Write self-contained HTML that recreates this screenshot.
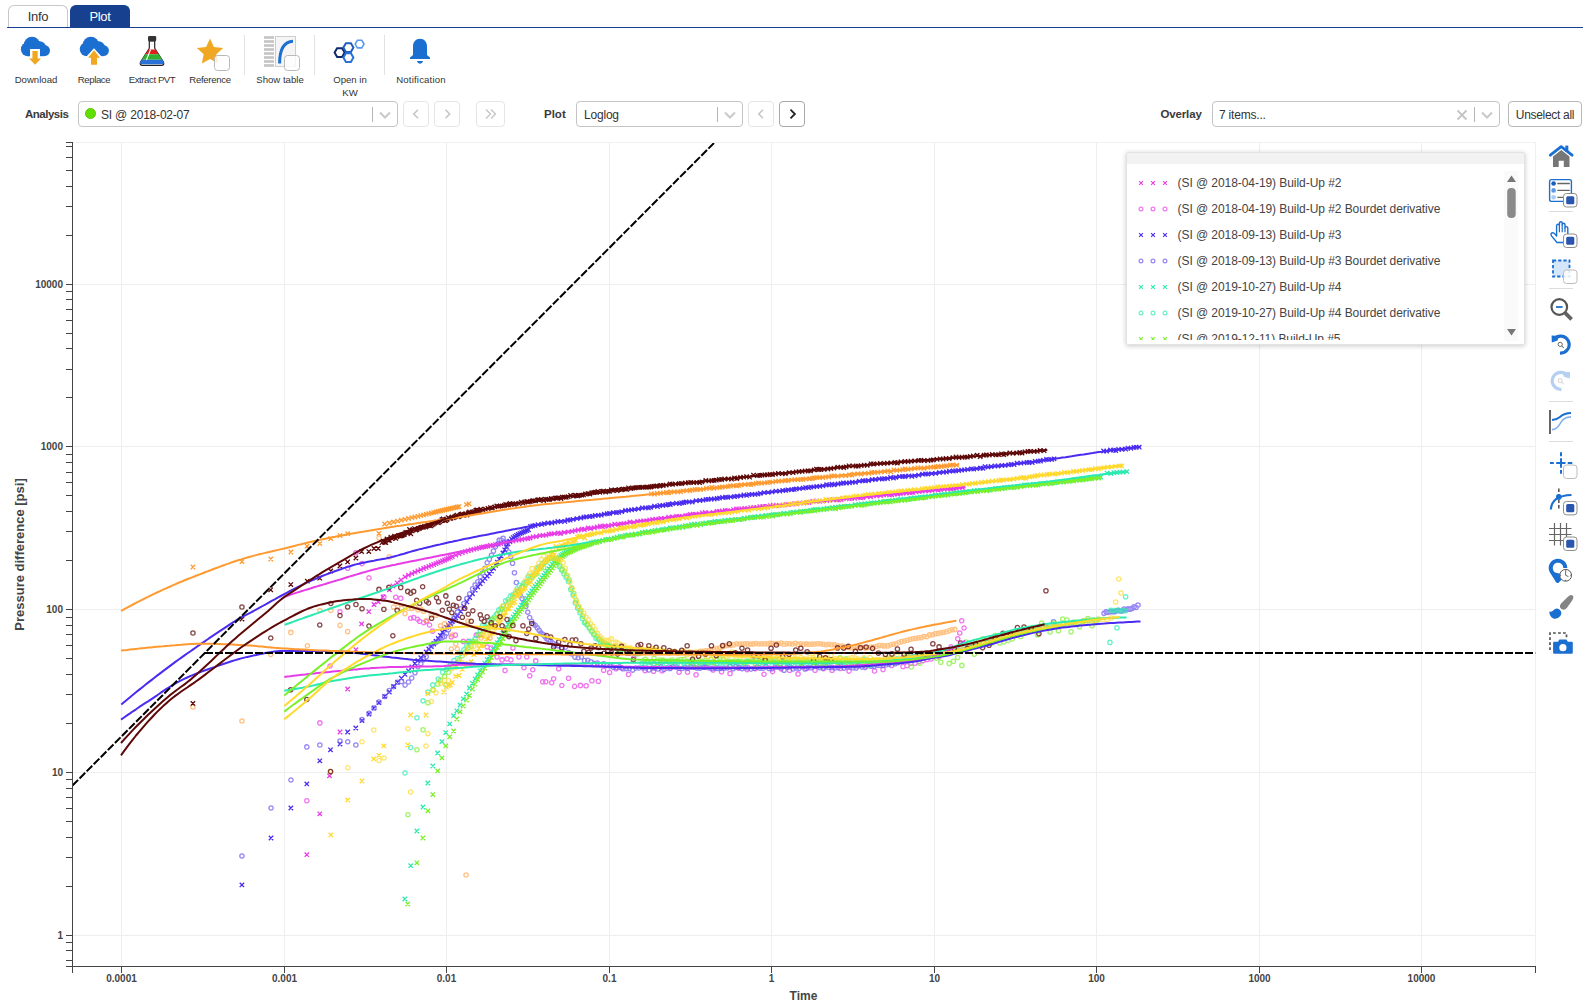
<!DOCTYPE html>
<html><head><meta charset="utf-8"><title>Plot</title>
<style>
*{box-sizing:border-box;margin:0;padding:0}
html,body{width:1591px;height:1007px;overflow:hidden;background:#fff}
body{font-family:"Liberation Sans",sans-serif;color:#333;position:relative}
.abs{position:absolute}
.tab{position:absolute;top:5px;height:23px;width:60px;border:1px solid #c8c8c8;border-bottom:none;border-radius:6px 6px 0 0;font-size:13px;text-align:center;line-height:22px;color:#333;letter-spacing:-0.3px}
.tab.on{background:#17408f;border-color:#17408f;color:#fff}
.tabline{position:absolute;left:7px;top:27px;width:1576px;height:1px;background:#17408f}
.lbl{position:absolute;top:73.2px;font-size:9.6px;color:#333;text-align:center;letter-spacing:0;line-height:13px;white-space:nowrap}
.vsep{position:absolute;top:35px;width:1px;height:40px;background:#e2e2e2}
.flabel{position:absolute;top:107px;font-size:11.5px;font-weight:700;color:#3a3a3a;letter-spacing:-0.5px;line-height:15px}
.sel{position:absolute;top:101px;height:26px;border:1px solid #c4c4c4;border-radius:4px;background:#fff;font-size:12px;line-height:26px;color:#333;letter-spacing:-0.2px}
.sel .sp{position:absolute;top:5px;width:1px;height:15px;background:#b5b5b5}
.btn{position:absolute;top:101px;height:26px;width:26px;border:1px solid #e6e6e6;border-radius:4px;background:#fff}
.btn.act{border-color:#a8a8a8}
.ico{position:absolute}
</style></head><body>
<div class="tab" style="left:8px">Info</div>
<div class="tab on" style="left:70px">Plot</div>
<div class="tabline"></div>
<svg class="abs" style="left:0;top:0" width="1591" height="1007" viewBox="0 0 1591 1007"><defs><clipPath id="cp"><rect x="73" y="143" width="1462.500" height="823.5"/></clipPath></defs><g shape-rendering="crispEdges"><line x1="121.5" y1="142.5" x2="121.5" y2="966.5" stroke="#eeeeee"/><line x1="284.5" y1="142.5" x2="284.5" y2="966.5" stroke="#eeeeee"/><line x1="446.5" y1="142.5" x2="446.5" y2="966.5" stroke="#eeeeee"/><line x1="609.5" y1="142.5" x2="609.5" y2="966.5" stroke="#eeeeee"/><line x1="771.5" y1="142.5" x2="771.5" y2="966.5" stroke="#eeeeee"/><line x1="934.5" y1="142.5" x2="934.5" y2="966.5" stroke="#eeeeee"/><line x1="1096.5" y1="142.5" x2="1096.5" y2="966.5" stroke="#eeeeee"/><line x1="1259.5" y1="142.5" x2="1259.5" y2="966.5" stroke="#eeeeee"/><line x1="1421.5" y1="142.5" x2="1421.5" y2="966.5" stroke="#eeeeee"/><line x1="72.5" y1="935.5" x2="1535.5" y2="935.5" stroke="#eeeeee"/><line x1="72.5" y1="772.5" x2="1535.5" y2="772.5" stroke="#eeeeee"/><line x1="72.5" y1="609.5" x2="1535.5" y2="609.5" stroke="#eeeeee"/><line x1="72.5" y1="446.5" x2="1535.5" y2="446.5" stroke="#eeeeee"/><line x1="72.5" y1="284.5" x2="1535.5" y2="284.5" stroke="#eeeeee"/><line x1="72.5" y1="142.5" x2="1535.5" y2="142.5" stroke="#f0f0f0"/><line x1="1535.5" y1="142.5" x2="1535.5" y2="966.5" stroke="#f0f0f0"/></g><g clip-path="url(#cp)"><path d="M304.6 852.5l4.4 4.4M304.6 856.9l4.4 -4.4M317.6 811.6l4.4 4.4M317.6 816.0l4.4 -4.4M327.3 773.6l4.4 4.4M327.3 778.0l4.4 -4.4M337.8 729.8l4.4 4.4M337.8 734.2l4.4 -4.4M345.5 686.8l4.4 4.4M345.5 691.2l4.4 -4.4M353.7 647.5l4.4 4.4M353.7 651.9l4.4 -4.4M359.4 621.7l4.4 4.4M359.4 626.1l4.4 -4.4M366.6 609.5l4.4 4.4M366.6 613.9l4.4 -4.4M371.8 602.3l4.4 4.4M371.8 606.7l4.4 -4.4M376.1 599.7l4.4 4.4M376.1 604.1l4.4 -4.4M380.8 594.8l4.4 4.4M380.8 599.2l4.4 -4.4M387.2 587.6l4.4 4.4M387.2 592.0l4.4 -4.4M390.8 583.8l4.4 4.4M390.8 588.2l4.4 -4.4M395.0 580.6l4.4 4.4M395.0 585.0l4.4 -4.4M398.8 577.8l4.4 4.4M398.8 582.2l4.4 -4.4M402.8 574.7l4.4 4.4M402.8 579.1l4.4 -4.4M406.3 573.0l4.4 4.4M406.3 577.4l4.4 -4.4M409.6 571.5l4.4 4.4M409.6 575.9l4.4 -4.4M412.7 570.0l4.4 4.4M412.7 574.4l4.4 -4.4M415.7 568.7l4.4 4.4M415.7 573.1l4.4 -4.4M418.6 567.5l4.4 4.4M418.6 571.9l4.4 -4.4M421.4 566.3l4.4 4.4M421.4 570.7l4.4 -4.4M424.0 565.2l4.4 4.4M424.0 569.6l4.4 -4.4M426.6 564.2l4.4 4.4M426.6 568.6l4.4 -4.4M429.1 563.3l4.4 4.4M429.1 567.7l4.4 -4.4M431.5 562.3l4.4 4.4M431.5 566.7l4.4 -4.4M433.8 561.4l4.4 4.4M433.8 565.8l4.4 -4.4M436.0 560.5l4.4 4.4M436.0 564.9l4.4 -4.4M438.2 559.6l4.4 4.4M438.2 564.0l4.4 -4.4M440.3 558.7l4.4 4.4M440.3 563.1l4.4 -4.4M442.4 557.8l4.4 4.4M442.4 562.2l4.4 -4.4M444.3 556.9l4.4 4.4M444.3 561.3l4.4 -4.4M446.3 556.1l4.4 4.4M446.3 560.5l4.4 -4.4M448.2 555.2l4.4 4.4M448.2 559.6l4.4 -4.4M450.0 554.4l4.4 4.4M450.0 558.8l4.4 -4.4M453.5 552.9l4.4 4.4M453.5 557.3l4.4 -4.4M456.9 551.6l4.4 4.4M456.9 556.0l4.4 -4.4M460.1 550.5l4.4 4.4M460.1 554.9l4.4 -4.4M463.2 549.5l4.4 4.4M463.2 553.9l4.4 -4.4M466.1 548.6l4.4 4.4M466.1 553.0l4.4 -4.4M468.9 547.8l4.4 4.4M468.9 552.2l4.4 -4.4M471.7 547.0l4.4 4.4M471.7 551.4l4.4 -4.4M474.3 546.4l4.4 4.4M474.3 550.8l4.4 -4.4M476.8 545.7l4.4 4.4M476.8 550.1l4.4 -4.4M479.2 545.2l4.4 4.4M479.2 549.6l4.4 -4.4M481.3 544.7l4.4 4.4M481.3 549.1l4.4 -4.4M483.6 544.5l4.4 4.4M483.6 548.9l4.4 -4.4M485.8 543.9l4.4 4.4M485.8 548.3l4.4 -4.4M488.1 543.3l4.4 4.4M488.1 547.7l4.4 -4.4M491.1 543.1l4.4 4.4M491.1 547.5l4.4 -4.4M493.3 542.4l4.4 4.4M493.3 546.8l4.4 -4.4M496.3 542.0l4.4 4.4M496.3 546.4l4.4 -4.4M498.6 541.4l4.4 4.4M498.6 545.8l4.4 -4.4M501.6 540.4l4.4 4.4M501.6 544.8l4.4 -4.4M503.8 539.9l4.4 4.4M503.8 544.3l4.4 -4.4M507.7 539.6l4.4 4.4M507.7 544.0l4.4 -4.4M510.7 538.9l4.4 4.4M510.7 543.3l4.4 -4.4M513.7 537.9l4.4 4.4M513.7 542.3l4.4 -4.4M516.7 537.8l4.4 4.4M516.7 542.2l4.4 -4.4M519.7 537.3l4.4 4.4M519.7 541.7l4.4 -4.4M522.7 536.7l4.4 4.4M522.7 541.1l4.4 -4.4M525.7 536.3l4.4 4.4M525.7 540.7l4.4 -4.4M527.9 535.8l4.4 4.4M527.9 540.2l4.4 -4.4M530.9 534.6l4.4 4.4M530.9 539.0l4.4 -4.4M533.9 534.4l4.4 4.4M533.9 538.8l4.4 -4.4M537.8 533.5l4.4 4.4M537.8 537.9l4.4 -4.4M540.8 533.1l4.4 4.4M540.8 537.5l4.4 -4.4M543.8 533.0l4.4 4.4M543.8 537.4l4.4 -4.4M546.8 531.9l4.4 4.4M546.8 536.3l4.4 -4.4M549.1 531.7l4.4 4.4M549.1 536.1l4.4 -4.4M552.1 531.4l4.4 4.4M552.1 535.8l4.4 -4.4M556.0 530.8l4.4 4.4M556.0 535.2l4.4 -4.4M558.2 531.4l4.4 4.4M558.2 535.8l4.4 -4.4M562.1 530.2l4.4 4.4M562.1 534.6l4.4 -4.4M566.0 529.7l4.4 4.4M566.0 534.1l4.4 -4.4M569.9 529.2l4.4 4.4M569.9 533.6l4.4 -4.4M572.9 528.5l4.4 4.4M572.9 532.9l4.4 -4.4M575.9 527.8l4.4 4.4M575.9 532.2l4.4 -4.4M579.8 526.9l4.4 4.4M579.8 531.3l4.4 -4.4M582.1 527.3l4.4 4.4M582.1 531.7l4.4 -4.4M586.0 525.7l4.4 4.4M586.0 530.1l4.4 -4.4M588.2 526.4l4.4 4.4M588.2 530.8l4.4 -4.4M592.1 525.6l4.4 4.4M592.1 530.0l4.4 -4.4M595.1 524.8l4.4 4.4M595.1 529.2l4.4 -4.4M598.1 523.9l4.4 4.4M598.1 528.3l4.4 -4.4M600.4 524.5l4.4 4.4M600.4 528.9l4.4 -4.4M602.6 523.8l4.4 4.4M602.6 528.2l4.4 -4.4M606.5 523.8l4.4 4.4M606.5 528.2l4.4 -4.4M609.5 523.0l4.4 4.4M609.5 527.4l4.4 -4.4M612.5 521.9l4.4 4.4M612.5 526.3l4.4 -4.4M616.4 522.3l4.4 4.4M616.4 526.7l4.4 -4.4M618.7 521.7l4.4 4.4M618.7 526.1l4.4 -4.4M621.7 521.4l4.4 4.4M621.7 525.8l4.4 -4.4M624.7 521.0l4.4 4.4M624.7 525.4l4.4 -4.4M627.7 519.8l4.4 4.4M627.7 524.2l4.4 -4.4M631.6 520.2l4.4 4.4M631.6 524.6l4.4 -4.4M635.5 519.2l4.4 4.4M635.5 523.6l4.4 -4.4M638.5 518.9l4.4 4.4M638.5 523.3l4.4 -4.4M641.5 518.6l4.4 4.4M641.5 523.0l4.4 -4.4M644.5 518.6l4.4 4.4M644.5 523.0l4.4 -4.4M647.5 517.7l4.4 4.4M647.5 522.1l4.4 -4.4M650.5 517.2l4.4 4.4M650.5 521.6l4.4 -4.4M653.5 517.0l4.4 4.4M653.5 521.4l4.4 -4.4M656.5 516.9l4.4 4.4M656.5 521.3l4.4 -4.4M658.7 516.1l4.4 4.4M658.7 520.5l4.4 -4.4M662.6 516.1l4.4 4.4M662.6 520.5l4.4 -4.4M666.5 514.9l4.4 4.4M666.5 519.3l4.4 -4.4M670.4 514.6l4.4 4.4M670.4 519.0l4.4 -4.4M674.3 514.3l4.4 4.4M674.3 518.7l4.4 -4.4M676.6 514.3l4.4 4.4M676.6 518.7l4.4 -4.4M680.5 514.3l4.4 4.4M680.5 518.7l4.4 -4.4M683.5 513.4l4.4 4.4M683.5 517.8l4.4 -4.4M685.7 513.1l4.4 4.4M685.7 517.5l4.4 -4.4M688.0 512.2l4.4 4.4M688.0 516.6l4.4 -4.4M691.0 512.0l4.4 4.4M691.0 516.4l4.4 -4.4M693.2 512.1l4.4 4.4M693.2 516.5l4.4 -4.4M697.1 511.6l4.4 4.4M697.1 516.0l4.4 -4.4M700.1 510.6l4.4 4.4M700.1 515.0l4.4 -4.4M703.1 510.2l4.4 4.4M703.1 514.6l4.4 -4.4M707.0 510.7l4.4 4.4M707.0 515.1l4.4 -4.4M710.9 510.3l4.4 4.4M710.9 514.7l4.4 -4.4M714.8 509.3l4.4 4.4M714.8 513.7l4.4 -4.4M717.1 509.2l4.4 4.4M717.1 513.6l4.4 -4.4M720.1 508.8l4.4 4.4M720.1 513.2l4.4 -4.4M723.1 508.2l4.4 4.4M723.1 512.6l4.4 -4.4M725.3 508.5l4.4 4.4M725.3 512.9l4.4 -4.4M728.3 508.7l4.4 4.4M728.3 513.1l4.4 -4.4M731.3 507.4l4.4 4.4M731.3 511.8l4.4 -4.4M734.3 506.7l4.4 4.4M734.3 511.1l4.4 -4.4M736.6 507.0l4.4 4.4M736.6 511.4l4.4 -4.4M739.6 506.5l4.4 4.4M739.6 510.9l4.4 -4.4M742.6 506.3l4.4 4.4M742.6 510.7l4.4 -4.4M745.6 506.3l4.4 4.4M745.6 510.7l4.4 -4.4M748.6 505.4l4.4 4.4M748.6 509.8l4.4 -4.4M751.6 505.2l4.4 4.4M751.6 509.6l4.4 -4.4M754.6 505.4l4.4 4.4M754.6 509.8l4.4 -4.4M757.6 504.5l4.4 4.4M757.6 508.9l4.4 -4.4M760.6 504.3l4.4 4.4M760.6 508.7l4.4 -4.4M762.8 504.4l4.4 4.4M762.8 508.8l4.4 -4.4M765.1 504.3l4.4 4.4M765.1 508.7l4.4 -4.4M768.1 503.5l4.4 4.4M768.1 507.9l4.4 -4.4M771.1 502.9l4.4 4.4M771.1 507.3l4.4 -4.4M774.1 503.5l4.4 4.4M774.1 507.9l4.4 -4.4M777.1 503.1l4.4 4.4M777.1 507.5l4.4 -4.4M781.0 502.7l4.4 4.4M781.0 507.1l4.4 -4.4M784.0 502.1l4.4 4.4M784.0 506.5l4.4 -4.4M786.2 502.4l4.4 4.4M786.2 506.8l4.4 -4.4M790.1 502.0l4.4 4.4M790.1 506.4l4.4 -4.4M792.4 501.4l4.4 4.4M792.4 505.8l4.4 -4.4M794.6 501.7l4.4 4.4M794.6 506.1l4.4 -4.4M797.6 500.7l4.4 4.4M797.6 505.1l4.4 -4.4M801.5 500.9l4.4 4.4M801.5 505.3l4.4 -4.4M804.5 500.1l4.4 4.4M804.5 504.5l4.4 -4.4M806.8 500.4l4.4 4.4M806.8 504.8l4.4 -4.4M810.7 499.0l4.4 4.4M810.7 503.4l4.4 -4.4M814.6 498.8l4.4 4.4M814.6 503.2l4.4 -4.4M817.6 499.5l4.4 4.4M817.6 503.9l4.4 -4.4M820.6 498.9l4.4 4.4M820.6 503.3l4.4 -4.4M824.5 498.5l4.4 4.4M824.5 502.9l4.4 -4.4M827.5 497.9l4.4 4.4M827.5 502.3l4.4 -4.4M831.4 497.6l4.4 4.4M831.4 502.0l4.4 -4.4M834.4 497.7l4.4 4.4M834.4 502.1l4.4 -4.4M836.6 497.6l4.4 4.4M836.6 502.0l4.4 -4.4M838.9 497.3l4.4 4.4M838.9 501.7l4.4 -4.4M841.1 496.4l4.4 4.4M841.1 500.8l4.4 -4.4M844.1 496.1l4.4 4.4M844.1 500.5l4.4 -4.4M847.1 496.6l4.4 4.4M847.1 501.0l4.4 -4.4M849.4 496.1l4.4 4.4M849.4 500.5l4.4 -4.4M852.4 496.1l4.4 4.4M852.4 500.5l4.4 -4.4M855.4 495.5l4.4 4.4M855.4 499.9l4.4 -4.4M858.4 495.6l4.4 4.4M858.4 500.0l4.4 -4.4M860.6 495.3l4.4 4.4M860.6 499.7l4.4 -4.4M864.5 494.5l4.4 4.4M864.5 498.9l4.4 -4.4M868.4 494.6l4.4 4.4M868.4 499.0l4.4 -4.4M871.4 493.4l4.4 4.4M871.4 497.8l4.4 -4.4M874.4 493.6l4.4 4.4M874.4 498.0l4.4 -4.4M878.3 493.3l4.4 4.4M878.3 497.7l4.4 -4.4M881.3 492.6l4.4 4.4M881.3 497.0l4.4 -4.4M884.3 492.4l4.4 4.4M884.3 496.8l4.4 -4.4M887.3 492.7l4.4 4.4M887.3 497.1l4.4 -4.4M889.6 492.5l4.4 4.4M889.6 496.9l4.4 -4.4M891.8 491.8l4.4 4.4M891.8 496.2l4.4 -4.4M895.7 491.9l4.4 4.4M895.7 496.3l4.4 -4.4M898.0 491.5l4.4 4.4M898.0 495.9l4.4 -4.4M901.0 491.0l4.4 4.4M901.0 495.4l4.4 -4.4M904.0 490.9l4.4 4.4M904.0 495.3l4.4 -4.4M907.9 490.5l4.4 4.4M907.9 494.9l4.4 -4.4M910.1 490.3l4.4 4.4M910.1 494.7l4.4 -4.4M914.0 489.2l4.4 4.4M914.0 493.6l4.4 -4.4M917.0 489.3l4.4 4.4M917.0 493.7l4.4 -4.4M920.0 489.0l4.4 4.4M920.0 493.4l4.4 -4.4M923.0 488.6l4.4 4.4M923.0 493.0l4.4 -4.4M926.9 488.7l4.4 4.4M926.9 493.1l4.4 -4.4M929.9 488.1l4.4 4.4M929.9 492.5l4.4 -4.4M932.9 487.4l4.4 4.4M932.9 491.8l4.4 -4.4M935.9 487.8l4.4 4.4M935.9 492.2l4.4 -4.4M938.2 487.3l4.4 4.4M938.2 491.7l4.4 -4.4M942.1 487.0l4.4 4.4M942.1 491.4l4.4 -4.4M945.1 486.8l4.4 4.4M945.1 491.2l4.4 -4.4M949.0 486.8l4.4 4.4M949.0 491.2l4.4 -4.4M951.2 486.4l4.4 4.4M951.2 490.8l4.4 -4.4M954.2 486.3l4.4 4.4M954.2 490.7l4.4 -4.4M957.2 485.4l4.4 4.4M957.2 489.8l4.4 -4.4M960.2 485.3l4.4 4.4M960.2 489.7l4.4 -4.4" stroke="#e83ce8" stroke-width="1.3" fill="none" stroke-opacity="1"/><path d="M304.7 800.8a2.15 2.15 0 1 0 4.3 0a2.15 2.15 0 1 0 -4.3 0M317.7 722.9a2.15 2.15 0 1 0 4.3 0a2.15 2.15 0 1 0 -4.3 0M327.9 666.0a2.15 2.15 0 1 0 4.3 0a2.15 2.15 0 1 0 -4.3 0M337.8 611.7a2.15 2.15 0 1 0 4.3 0a2.15 2.15 0 1 0 -4.3 0M345.5 568.3a2.15 2.15 0 1 0 4.3 0a2.15 2.15 0 1 0 -4.3 0M353.8 552.8a2.15 2.15 0 1 0 4.3 0a2.15 2.15 0 1 0 -4.3 0M359.9 563.6a2.15 2.15 0 1 0 4.3 0a2.15 2.15 0 1 0 -4.3 0M366.8 577.9a2.15 2.15 0 1 0 4.3 0a2.15 2.15 0 1 0 -4.3 0M381.7 596.7a2.15 2.15 0 1 0 4.3 0a2.15 2.15 0 1 0 -4.3 0M393.6 597.3a2.15 2.15 0 1 0 4.3 0a2.15 2.15 0 1 0 -4.3 0M398.6 598.3a2.15 2.15 0 1 0 4.3 0a2.15 2.15 0 1 0 -4.3 0M408.5 618.2a2.15 2.15 0 1 0 4.3 0a2.15 2.15 0 1 0 -4.3 0M411.5 617.6a2.15 2.15 0 1 0 4.3 0a2.15 2.15 0 1 0 -4.3 0M415.5 619.2a2.15 2.15 0 1 0 4.3 0a2.15 2.15 0 1 0 -4.3 0M417.5 621.2a2.15 2.15 0 1 0 4.3 0a2.15 2.15 0 1 0 -4.3 0M421.5 622.7a2.15 2.15 0 1 0 4.3 0a2.15 2.15 0 1 0 -4.3 0M424.4 621.5a2.15 2.15 0 1 0 4.3 0a2.15 2.15 0 1 0 -4.3 0M427.4 625.1a2.15 2.15 0 1 0 4.3 0a2.15 2.15 0 1 0 -4.3 0M430.4 631.1a2.15 2.15 0 1 0 4.3 0a2.15 2.15 0 1 0 -4.3 0M449.2 637.0a2.15 2.15 0 1 0 4.3 0a2.15 2.15 0 1 0 -4.3 0M453.2 635.1a2.15 2.15 0 1 0 4.3 0a2.15 2.15 0 1 0 -4.3 0M461.2 641.4a2.15 2.15 0 1 0 4.3 0a2.15 2.15 0 1 0 -4.3 0M466.1 641.4a2.15 2.15 0 1 0 4.3 0a2.15 2.15 0 1 0 -4.3 0M474.1 635.1a2.15 2.15 0 1 0 4.3 0a2.15 2.15 0 1 0 -4.3 0M485.0 647.0a2.15 2.15 0 1 0 4.3 0a2.15 2.15 0 1 0 -4.3 0M489.0 648.0a2.15 2.15 0 1 0 4.3 0a2.15 2.15 0 1 0 -4.3 0M494.9 656.9a2.15 2.15 0 1 0 4.3 0a2.15 2.15 0 1 0 -4.3 0M499.9 659.9a2.15 2.15 0 1 0 4.3 0a2.15 2.15 0 1 0 -4.3 0M504.9 658.9a2.15 2.15 0 1 0 4.3 0a2.15 2.15 0 1 0 -4.3 0M508.8 659.9a2.15 2.15 0 1 0 4.3 0a2.15 2.15 0 1 0 -4.3 0M510.8 648.0a2.15 2.15 0 1 0 4.3 0a2.15 2.15 0 1 0 -4.3 0M516.8 656.9a2.15 2.15 0 1 0 4.3 0a2.15 2.15 0 1 0 -4.3 0M524.6 656.9a2.15 2.15 0 1 0 4.3 0a2.15 2.15 0 1 0 -4.3 0M521.8 667.8a2.15 2.15 0 1 0 4.3 0a2.15 2.15 0 1 0 -4.3 0M530.6 669.8a2.15 2.15 0 1 0 4.3 0a2.15 2.15 0 1 0 -4.3 0M527.6 675.8a2.15 2.15 0 1 0 4.3 0a2.15 2.15 0 1 0 -4.3 0M533.6 660.9a2.15 2.15 0 1 0 4.3 0a2.15 2.15 0 1 0 -4.3 0M502.9 670.4a2.15 2.15 0 1 0 4.3 0a2.15 2.15 0 1 0 -4.3 0M540.6 681.7a2.15 2.15 0 1 0 4.3 0a2.15 2.15 0 1 0 -4.3 0M543.6 681.7a2.15 2.15 0 1 0 4.3 0a2.15 2.15 0 1 0 -4.3 0M549.6 682.7a2.15 2.15 0 1 0 4.3 0a2.15 2.15 0 1 0 -4.3 0M551.5 678.7a2.15 2.15 0 1 0 4.3 0a2.15 2.15 0 1 0 -4.3 0M556.5 668.8a2.15 2.15 0 1 0 4.3 0a2.15 2.15 0 1 0 -4.3 0M559.7 685.5a2.15 2.15 0 1 0 4.3 0a2.15 2.15 0 1 0 -4.3 0M566.4 678.3a2.15 2.15 0 1 0 4.3 0a2.15 2.15 0 1 0 -4.3 0M572.4 686.4a2.15 2.15 0 1 0 4.3 0a2.15 2.15 0 1 0 -4.3 0M578.3 685.4a2.15 2.15 0 1 0 4.3 0a2.15 2.15 0 1 0 -4.3 0M584.0 685.7a2.15 2.15 0 1 0 4.3 0a2.15 2.15 0 1 0 -4.3 0M589.8 680.7a2.15 2.15 0 1 0 4.3 0a2.15 2.15 0 1 0 -4.3 0M596.2 681.3a2.15 2.15 0 1 0 4.3 0a2.15 2.15 0 1 0 -4.3 0M601.5 670.3a2.15 2.15 0 1 0 4.3 0a2.15 2.15 0 1 0 -4.3 0M607.5 672.4a2.15 2.15 0 1 0 4.3 0a2.15 2.15 0 1 0 -4.3 0M613.8 668.7a2.15 2.15 0 1 0 4.3 0a2.15 2.15 0 1 0 -4.3 0M619.5 667.8a2.15 2.15 0 1 0 4.3 0a2.15 2.15 0 1 0 -4.3 0M626.4 674.4a2.15 2.15 0 1 0 4.3 0a2.15 2.15 0 1 0 -4.3 0M631.6 658.0a2.15 2.15 0 1 0 4.3 0a2.15 2.15 0 1 0 -4.3 0M642.9 670.6a2.15 2.15 0 1 0 4.3 0a2.15 2.15 0 1 0 -4.3 0M651.4 671.3a2.15 2.15 0 1 0 4.3 0a2.15 2.15 0 1 0 -4.3 0M659.9 670.7a2.15 2.15 0 1 0 4.3 0a2.15 2.15 0 1 0 -4.3 0M668.4 667.8a2.15 2.15 0 1 0 4.3 0a2.15 2.15 0 1 0 -4.3 0M676.9 672.2a2.15 2.15 0 1 0 4.3 0a2.15 2.15 0 1 0 -4.3 0M685.4 672.3a2.15 2.15 0 1 0 4.3 0a2.15 2.15 0 1 0 -4.3 0M693.9 674.7a2.15 2.15 0 1 0 4.3 0a2.15 2.15 0 1 0 -4.3 0M702.4 667.1a2.15 2.15 0 1 0 4.3 0a2.15 2.15 0 1 0 -4.3 0M710.9 669.9a2.15 2.15 0 1 0 4.3 0a2.15 2.15 0 1 0 -4.3 0M719.4 671.7a2.15 2.15 0 1 0 4.3 0a2.15 2.15 0 1 0 -4.3 0M727.9 673.4a2.15 2.15 0 1 0 4.3 0a2.15 2.15 0 1 0 -4.3 0M736.4 668.1a2.15 2.15 0 1 0 4.3 0a2.15 2.15 0 1 0 -4.3 0M744.9 669.6a2.15 2.15 0 1 0 4.3 0a2.15 2.15 0 1 0 -4.3 0M753.4 668.8a2.15 2.15 0 1 0 4.3 0a2.15 2.15 0 1 0 -4.3 0M761.9 674.3a2.15 2.15 0 1 0 4.3 0a2.15 2.15 0 1 0 -4.3 0M770.4 671.6a2.15 2.15 0 1 0 4.3 0a2.15 2.15 0 1 0 -4.3 0M778.9 669.0a2.15 2.15 0 1 0 4.3 0a2.15 2.15 0 1 0 -4.3 0M787.4 670.5a2.15 2.15 0 1 0 4.3 0a2.15 2.15 0 1 0 -4.3 0M795.9 673.9a2.15 2.15 0 1 0 4.3 0a2.15 2.15 0 1 0 -4.3 0M804.4 668.4a2.15 2.15 0 1 0 4.3 0a2.15 2.15 0 1 0 -4.3 0M812.9 670.3a2.15 2.15 0 1 0 4.3 0a2.15 2.15 0 1 0 -4.3 0M821.4 668.6a2.15 2.15 0 1 0 4.3 0a2.15 2.15 0 1 0 -4.3 0M829.9 670.2a2.15 2.15 0 1 0 4.3 0a2.15 2.15 0 1 0 -4.3 0M838.4 668.4a2.15 2.15 0 1 0 4.3 0a2.15 2.15 0 1 0 -4.3 0M846.9 671.1a2.15 2.15 0 1 0 4.3 0a2.15 2.15 0 1 0 -4.3 0M855.4 666.1a2.15 2.15 0 1 0 4.3 0a2.15 2.15 0 1 0 -4.3 0M863.9 666.2a2.15 2.15 0 1 0 4.3 0a2.15 2.15 0 1 0 -4.3 0M872.4 671.0a2.15 2.15 0 1 0 4.3 0a2.15 2.15 0 1 0 -4.3 0M880.9 669.4a2.15 2.15 0 1 0 4.3 0a2.15 2.15 0 1 0 -4.3 0M889.4 665.4a2.15 2.15 0 1 0 4.3 0a2.15 2.15 0 1 0 -4.3 0M900.9 666.4a2.15 2.15 0 1 0 4.3 0a2.15 2.15 0 1 0 -4.3 0M904.9 665.7a2.15 2.15 0 1 0 4.3 0a2.15 2.15 0 1 0 -4.3 0M908.9 663.1a2.15 2.15 0 1 0 4.3 0a2.15 2.15 0 1 0 -4.3 0M912.9 663.2a2.15 2.15 0 1 0 4.3 0a2.15 2.15 0 1 0 -4.3 0M916.9 661.6a2.15 2.15 0 1 0 4.3 0a2.15 2.15 0 1 0 -4.3 0M920.9 660.7a2.15 2.15 0 1 0 4.3 0a2.15 2.15 0 1 0 -4.3 0M924.9 659.4a2.15 2.15 0 1 0 4.3 0a2.15 2.15 0 1 0 -4.3 0M928.9 659.0a2.15 2.15 0 1 0 4.3 0a2.15 2.15 0 1 0 -4.3 0M932.9 654.4a2.15 2.15 0 1 0 4.3 0a2.15 2.15 0 1 0 -4.3 0M936.9 656.6a2.15 2.15 0 1 0 4.3 0a2.15 2.15 0 1 0 -4.3 0M940.9 650.6a2.15 2.15 0 1 0 4.3 0a2.15 2.15 0 1 0 -4.3 0M944.9 651.1a2.15 2.15 0 1 0 4.3 0a2.15 2.15 0 1 0 -4.3 0M948.9 646.9a2.15 2.15 0 1 0 4.3 0a2.15 2.15 0 1 0 -4.3 0M959.6 620.7a2.15 2.15 0 1 0 4.3 0a2.15 2.15 0 1 0 -4.3 0M961.9 628.0a2.15 2.15 0 1 0 4.3 0a2.15 2.15 0 1 0 -4.3 0M957.6 633.0a2.15 2.15 0 1 0 4.3 0a2.15 2.15 0 1 0 -4.3 0M955.6 638.8a2.15 2.15 0 1 0 4.3 0a2.15 2.15 0 1 0 -4.3 0" stroke="#e83ce8" stroke-width="1.3" fill="none" stroke-opacity="0.7"/><path d="M239.7 882.7l4.4 4.4M239.7 887.1l4.4 -4.4M268.8 835.8l4.4 4.4M268.8 840.2l4.4 -4.4M288.7 805.8l4.4 4.4M288.7 810.2l4.4 -4.4M304.6 781.7l4.4 4.4M304.6 786.1l4.4 -4.4M317.6 758.6l4.4 4.4M317.6 763.0l4.4 -4.4M328.3 747.6l4.4 4.4M328.3 752.0l4.4 -4.4M337.8 741.8l4.4 4.4M337.8 746.2l4.4 -4.4M345.5 729.8l4.4 4.4M345.5 734.2l4.4 -4.4M353.6 725.8l4.4 4.4M353.6 730.2l4.4 -4.4M359.8 718.4l4.4 4.4M359.8 722.8l4.4 -4.4M366.8 711.8l4.4 4.4M366.8 716.2l4.4 -4.4M371.8 705.8l4.4 4.4M371.8 710.2l4.4 -4.4M376.7 700.5l4.4 4.4M376.7 704.9l4.4 -4.4M382.5 694.1l4.4 4.4M382.5 698.5l4.4 -4.4M387.1 689.8l4.4 4.4M387.1 694.2l4.4 -4.4M391.4 684.3l4.4 4.4M391.4 688.7l4.4 -4.4M395.4 680.0l4.4 4.4M395.4 684.4l4.4 -4.4M399.2 676.0l4.4 4.4M399.2 680.4l4.4 -4.4M402.8 672.2l4.4 4.4M402.8 676.6l4.4 -4.4M406.3 668.6l4.4 4.4M406.3 673.0l4.4 -4.4M409.6 664.8l4.4 4.4M409.6 669.2l4.4 -4.4M412.7 661.3l4.4 4.4M412.7 665.7l4.4 -4.4M415.7 658.4l4.4 4.4M415.7 662.8l4.4 -4.4M418.6 655.5l4.4 4.4M418.6 659.9l4.4 -4.4M421.4 652.8l4.4 4.4M421.4 657.2l4.4 -4.4M424.0 649.8l4.4 4.4M424.0 654.2l4.4 -4.4M426.6 646.8l4.4 4.4M426.6 651.2l4.4 -4.4M429.1 644.3l4.4 4.4M429.1 648.7l4.4 -4.4M431.5 641.8l4.4 4.4M431.5 646.2l4.4 -4.4M433.8 639.0l4.4 4.4M433.8 643.4l4.4 -4.4M436.0 636.3l4.4 4.4M436.0 640.7l4.4 -4.4M438.2 633.3l4.4 4.4M438.2 637.7l4.4 -4.4M440.3 630.0l4.4 4.4M440.3 634.4l4.4 -4.4M442.4 627.4l4.4 4.4M442.4 631.8l4.4 -4.4M444.3 625.1l4.4 4.4M444.3 629.5l4.4 -4.4M446.3 623.1l4.4 4.4M446.3 627.5l4.4 -4.4M448.2 621.2l4.4 4.4M448.2 625.6l4.4 -4.4M450.0 619.4l4.4 4.4M450.0 623.8l4.4 -4.4M451.8 617.6l4.4 4.4M451.8 622.0l4.4 -4.4M453.5 615.7l4.4 4.4M453.5 620.1l4.4 -4.4M455.2 613.7l4.4 4.4M455.2 618.1l4.4 -4.4M458.5 609.2l4.4 4.4M458.5 613.6l4.4 -4.4M461.7 604.4l4.4 4.4M461.7 608.8l4.4 -4.4M464.7 599.7l4.4 4.4M464.7 604.1l4.4 -4.4M467.5 595.4l4.4 4.4M467.5 599.8l4.4 -4.4M470.3 591.6l4.4 4.4M470.3 596.0l4.4 -4.4M473.0 588.0l4.4 4.4M473.0 592.4l4.4 -4.4M475.5 584.7l4.4 4.4M475.5 589.1l4.4 -4.4M478.0 581.6l4.4 4.4M478.0 586.0l4.4 -4.4M480.4 578.7l4.4 4.4M480.4 583.1l4.4 -4.4M482.7 576.2l4.4 4.4M482.7 580.6l4.4 -4.4M485.0 573.9l4.4 4.4M485.0 578.3l4.4 -4.4M487.1 571.5l4.4 4.4M487.1 575.9l4.4 -4.4M489.2 568.9l4.4 4.4M489.2 573.3l4.4 -4.4M491.3 566.1l4.4 4.4M491.3 570.5l4.4 -4.4M493.3 563.1l4.4 4.4M493.3 567.5l4.4 -4.4M495.2 560.0l4.4 4.4M495.2 564.4l4.4 -4.4M497.1 556.9l4.4 4.4M497.1 561.3l4.4 -4.4M498.9 553.9l4.4 4.4M498.9 558.3l4.4 -4.4M500.7 550.8l4.4 4.4M500.7 555.2l4.4 -4.4M502.5 547.6l4.4 4.4M502.5 552.0l4.4 -4.4M504.2 544.6l4.4 4.4M504.2 549.0l4.4 -4.4M505.9 541.7l4.4 4.4M505.9 546.1l4.4 -4.4M507.6 539.0l4.4 4.4M507.6 543.4l4.4 -4.4M509.3 536.8l4.4 4.4M509.3 541.2l4.4 -4.4M511.0 535.4l4.4 4.4M511.0 539.8l4.4 -4.4M512.7 534.2l4.4 4.4M512.7 538.6l4.4 -4.4M514.4 533.1l4.4 4.4M514.4 537.5l4.4 -4.4M516.1 532.2l4.4 4.4M516.1 536.6l4.4 -4.4M517.8 531.4l4.4 4.4M517.8 535.8l4.4 -4.4M519.5 530.6l4.4 4.4M519.5 535.0l4.4 -4.4M521.2 529.8l4.4 4.4M521.2 534.2l4.4 -4.4M522.9 529.1l4.4 4.4M522.9 533.5l4.4 -4.4M524.6 528.3l4.4 4.4M524.6 532.7l4.4 -4.4M526.3 527.6l4.4 4.4M526.3 532.0l4.4 -4.4M528.3 524.3l4.4 4.4M528.3 528.7l4.4 -4.4M530.5 523.7l4.4 4.4M530.5 528.1l4.4 -4.4M532.8 523.2l4.4 4.4M532.8 527.6l4.4 -4.4M535.8 522.5l4.4 4.4M535.8 526.9l4.4 -4.4M539.7 522.1l4.4 4.4M539.7 526.5l4.4 -4.4M541.9 521.5l4.4 4.4M541.9 525.9l4.4 -4.4M545.8 520.8l4.4 4.4M545.8 525.2l4.4 -4.4M549.7 520.8l4.4 4.4M549.7 525.2l4.4 -4.4M552.7 520.0l4.4 4.4M552.7 524.4l4.4 -4.4M555.7 519.2l4.4 4.4M555.7 523.6l4.4 -4.4M558.7 519.5l4.4 4.4M558.7 523.9l4.4 -4.4M562.6 519.2l4.4 4.4M562.6 523.6l4.4 -4.4M565.6 517.8l4.4 4.4M565.6 522.2l4.4 -4.4M567.9 518.0l4.4 4.4M567.9 522.4l4.4 -4.4M570.9 517.2l4.4 4.4M570.9 521.6l4.4 -4.4M574.8 516.4l4.4 4.4M574.8 520.8l4.4 -4.4M578.7 515.8l4.4 4.4M578.7 520.2l4.4 -4.4M581.7 514.9l4.4 4.4M581.7 519.3l4.4 -4.4M583.9 514.6l4.4 4.4M583.9 519.0l4.4 -4.4M587.8 514.3l4.4 4.4M587.8 518.7l4.4 -4.4M590.1 514.1l4.4 4.4M590.1 518.5l4.4 -4.4M593.1 513.2l4.4 4.4M593.1 517.6l4.4 -4.4M596.1 513.1l4.4 4.4M596.1 517.5l4.4 -4.4M599.1 513.0l4.4 4.4M599.1 517.4l4.4 -4.4M602.1 512.0l4.4 4.4M602.1 516.4l4.4 -4.4M605.1 511.5l4.4 4.4M605.1 515.9l4.4 -4.4M607.3 511.3l4.4 4.4M607.3 515.7l4.4 -4.4M611.2 510.4l4.4 4.4M611.2 514.8l4.4 -4.4M614.2 510.4l4.4 4.4M614.2 514.8l4.4 -4.4M616.5 510.1l4.4 4.4M616.5 514.5l4.4 -4.4M619.5 509.5l4.4 4.4M619.5 513.9l4.4 -4.4M623.4 508.3l4.4 4.4M623.4 512.7l4.4 -4.4M626.4 508.0l4.4 4.4M626.4 512.4l4.4 -4.4M629.4 507.6l4.4 4.4M629.4 512.0l4.4 -4.4M632.4 507.1l4.4 4.4M632.4 511.5l4.4 -4.4M636.3 506.7l4.4 4.4M636.3 511.1l4.4 -4.4M640.2 505.6l4.4 4.4M640.2 510.0l4.4 -4.4M643.2 505.6l4.4 4.4M643.2 510.0l4.4 -4.4M646.2 505.6l4.4 4.4M646.2 510.0l4.4 -4.4M648.4 505.1l4.4 4.4M648.4 509.5l4.4 -4.4M652.3 503.9l4.4 4.4M652.3 508.3l4.4 -4.4M655.3 504.4l4.4 4.4M655.3 508.8l4.4 -4.4M657.6 503.3l4.4 4.4M657.6 507.7l4.4 -4.4M660.6 503.3l4.4 4.4M660.6 507.7l4.4 -4.4M663.6 502.8l4.4 4.4M663.6 507.2l4.4 -4.4M665.8 502.2l4.4 4.4M665.8 506.6l4.4 -4.4M668.1 502.4l4.4 4.4M668.1 506.8l4.4 -4.4M670.3 501.5l4.4 4.4M670.3 505.9l4.4 -4.4M674.2 501.0l4.4 4.4M674.2 505.4l4.4 -4.4M677.2 501.5l4.4 4.4M677.2 505.9l4.4 -4.4M679.5 500.6l4.4 4.4M679.5 505.0l4.4 -4.4M681.7 500.3l4.4 4.4M681.7 504.7l4.4 -4.4M684.0 499.7l4.4 4.4M684.0 504.1l4.4 -4.4M687.0 499.7l4.4 4.4M687.0 504.1l4.4 -4.4M690.0 499.8l4.4 4.4M690.0 504.2l4.4 -4.4M693.9 498.5l4.4 4.4M693.9 502.9l4.4 -4.4M697.8 498.3l4.4 4.4M697.8 502.7l4.4 -4.4M700.8 498.0l4.4 4.4M700.8 502.4l4.4 -4.4M703.8 497.2l4.4 4.4M703.8 501.6l4.4 -4.4M706.0 497.1l4.4 4.4M706.0 501.5l4.4 -4.4M709.0 496.8l4.4 4.4M709.0 501.2l4.4 -4.4M712.0 496.8l4.4 4.4M712.0 501.2l4.4 -4.4M715.0 496.3l4.4 4.4M715.0 500.7l4.4 -4.4M717.3 495.9l4.4 4.4M717.3 500.3l4.4 -4.4M720.3 495.3l4.4 4.4M720.3 499.7l4.4 -4.4M723.3 495.0l4.4 4.4M723.3 499.4l4.4 -4.4M725.5 495.2l4.4 4.4M725.5 499.6l4.4 -4.4M728.5 494.7l4.4 4.4M728.5 499.1l4.4 -4.4M732.4 494.4l4.4 4.4M732.4 498.8l4.4 -4.4M734.7 494.0l4.4 4.4M734.7 498.4l4.4 -4.4M738.6 493.6l4.4 4.4M738.6 498.0l4.4 -4.4M741.6 492.7l4.4 4.4M741.6 497.1l4.4 -4.4M744.6 493.2l4.4 4.4M744.6 497.6l4.4 -4.4M746.8 492.4l4.4 4.4M746.8 496.8l4.4 -4.4M749.8 492.1l4.4 4.4M749.8 496.5l4.4 -4.4M752.8 492.2l4.4 4.4M752.8 496.6l4.4 -4.4M755.8 491.9l4.4 4.4M755.8 496.3l4.4 -4.4M758.1 491.1l4.4 4.4M758.1 495.5l4.4 -4.4M762.0 490.5l4.4 4.4M762.0 494.9l4.4 -4.4M765.9 490.2l4.4 4.4M765.9 494.6l4.4 -4.4M769.8 489.7l4.4 4.4M769.8 494.1l4.4 -4.4M773.7 488.9l4.4 4.4M773.7 493.3l4.4 -4.4M777.6 489.0l4.4 4.4M777.6 493.4l4.4 -4.4M780.6 488.3l4.4 4.4M780.6 492.7l4.4 -4.4M783.6 488.1l4.4 4.4M783.6 492.5l4.4 -4.4M785.8 487.6l4.4 4.4M785.8 492.0l4.4 -4.4M789.7 487.5l4.4 4.4M789.7 491.9l4.4 -4.4M792.0 487.2l4.4 4.4M792.0 491.6l4.4 -4.4M794.2 486.7l4.4 4.4M794.2 491.1l4.4 -4.4M797.2 486.4l4.4 4.4M797.2 490.8l4.4 -4.4M801.1 486.0l4.4 4.4M801.1 490.4l4.4 -4.4M803.4 485.4l4.4 4.4M803.4 489.8l4.4 -4.4M806.4 485.5l4.4 4.4M806.4 489.9l4.4 -4.4M808.6 484.9l4.4 4.4M808.6 489.3l4.4 -4.4M811.6 484.7l4.4 4.4M811.6 489.1l4.4 -4.4M814.6 484.2l4.4 4.4M814.6 488.6l4.4 -4.4M817.6 484.1l4.4 4.4M817.6 488.5l4.4 -4.4M820.6 483.6l4.4 4.4M820.6 488.0l4.4 -4.4M824.5 482.5l4.4 4.4M824.5 486.9l4.4 -4.4M826.8 482.9l4.4 4.4M826.8 487.3l4.4 -4.4M829.8 482.0l4.4 4.4M829.8 486.4l4.4 -4.4M832.0 482.6l4.4 4.4M832.0 487.0l4.4 -4.4M835.9 481.8l4.4 4.4M835.9 486.2l4.4 -4.4M838.9 481.2l4.4 4.4M838.9 485.6l4.4 -4.4M841.2 480.8l4.4 4.4M841.2 485.2l4.4 -4.4M844.2 480.8l4.4 4.4M844.2 485.2l4.4 -4.4M847.2 480.6l4.4 4.4M847.2 485.0l4.4 -4.4M850.2 480.0l4.4 4.4M850.2 484.4l4.4 -4.4M853.2 480.1l4.4 4.4M853.2 484.5l4.4 -4.4M857.1 479.0l4.4 4.4M857.1 483.4l4.4 -4.4M861.0 478.5l4.4 4.4M861.0 482.9l4.4 -4.4M863.2 478.6l4.4 4.4M863.2 483.0l4.4 -4.4M866.2 478.3l4.4 4.4M866.2 482.7l4.4 -4.4M870.1 477.4l4.4 4.4M870.1 481.8l4.4 -4.4M873.1 477.3l4.4 4.4M873.1 481.7l4.4 -4.4M877.0 476.6l4.4 4.4M877.0 481.0l4.4 -4.4M880.0 476.8l4.4 4.4M880.0 481.2l4.4 -4.4M882.3 476.5l4.4 4.4M882.3 480.9l4.4 -4.4M885.3 476.4l4.4 4.4M885.3 480.8l4.4 -4.4M888.3 475.3l4.4 4.4M888.3 479.7l4.4 -4.4M891.3 475.8l4.4 4.4M891.3 480.2l4.4 -4.4M893.5 475.1l4.4 4.4M893.5 479.5l4.4 -4.4M897.4 474.4l4.4 4.4M897.4 478.8l4.4 -4.4M900.4 474.2l4.4 4.4M900.4 478.6l4.4 -4.4M902.7 474.3l4.4 4.4M902.7 478.7l4.4 -4.4M906.6 473.6l4.4 4.4M906.6 478.0l4.4 -4.4M909.6 474.2l4.4 4.4M909.6 478.6l4.4 -4.4M912.6 473.6l4.4 4.4M912.6 478.0l4.4 -4.4M916.5 473.0l4.4 4.4M916.5 477.4l4.4 -4.4M920.4 472.0l4.4 4.4M920.4 476.4l4.4 -4.4M923.4 471.7l4.4 4.4M923.4 476.1l4.4 -4.4M925.6 471.9l4.4 4.4M925.6 476.3l4.4 -4.4M929.5 471.5l4.4 4.4M929.5 475.9l4.4 -4.4M933.4 471.1l4.4 4.4M933.4 475.5l4.4 -4.4M937.3 470.4l4.4 4.4M937.3 474.8l4.4 -4.4M941.2 470.0l4.4 4.4M941.2 474.4l4.4 -4.4M944.2 469.8l4.4 4.4M944.2 474.2l4.4 -4.4M947.2 468.9l4.4 4.4M947.2 473.3l4.4 -4.4M951.1 468.8l4.4 4.4M951.1 473.2l4.4 -4.4M953.4 468.6l4.4 4.4M953.4 473.0l4.4 -4.4M956.4 468.3l4.4 4.4M956.4 472.7l4.4 -4.4M959.4 467.9l4.4 4.4M959.4 472.3l4.4 -4.4M962.4 467.6l4.4 4.4M962.4 472.0l4.4 -4.4M965.4 467.1l4.4 4.4M965.4 471.5l4.4 -4.4M969.3 466.6l4.4 4.4M969.3 471.0l4.4 -4.4M971.5 466.9l4.4 4.4M971.5 471.3l4.4 -4.4M974.5 466.5l4.4 4.4M974.5 470.9l4.4 -4.4M978.4 465.8l4.4 4.4M978.4 470.2l4.4 -4.4M980.7 466.1l4.4 4.4M980.7 470.5l4.4 -4.4M982.9 464.4l4.4 4.4M982.9 468.8l4.4 -4.4M985.9 464.8l4.4 4.4M985.9 469.2l4.4 -4.4M988.9 464.3l4.4 4.4M988.9 468.7l4.4 -4.4M992.8 463.7l4.4 4.4M992.8 468.1l4.4 -4.4M995.8 463.8l4.4 4.4M995.8 468.2l4.4 -4.4M999.7 463.3l4.4 4.4M999.7 467.7l4.4 -4.4M1002.7 463.2l4.4 4.4M1002.7 467.6l4.4 -4.4M1006.6 462.6l4.4 4.4M1006.6 467.0l4.4 -4.4M1008.9 462.2l4.4 4.4M1008.9 466.6l4.4 -4.4M1011.9 462.3l4.4 4.4M1011.9 466.7l4.4 -4.4M1014.9 461.0l4.4 4.4M1014.9 465.4l4.4 -4.4M1018.8 461.0l4.4 4.4M1018.8 465.4l4.4 -4.4M1021.8 460.6l4.4 4.4M1021.8 465.0l4.4 -4.4M1024.8 460.1l4.4 4.4M1024.8 464.5l4.4 -4.4M1027.0 460.2l4.4 4.4M1027.0 464.6l4.4 -4.4M1030.0 460.4l4.4 4.4M1030.0 464.8l4.4 -4.4M1033.0 459.2l4.4 4.4M1033.0 463.6l4.4 -4.4M1036.0 459.0l4.4 4.4M1036.0 463.4l4.4 -4.4M1038.3 458.8l4.4 4.4M1038.3 463.2l4.4 -4.4M1041.3 458.0l4.4 4.4M1041.3 462.4l4.4 -4.4M1044.3 457.1l4.4 4.4M1044.3 461.5l4.4 -4.4M1046.5 457.5l4.4 4.4M1046.5 461.9l4.4 -4.4M1049.5 457.1l4.4 4.4M1049.5 461.5l4.4 -4.4M1051.8 456.6l4.4 4.4M1051.8 461.0l4.4 -4.4M1101.4 448.8l4.4 4.4M1101.4 453.2l4.4 -4.4M1104.4 449.0l4.4 4.4M1104.4 453.4l4.4 -4.4M1108.3 447.8l4.4 4.4M1108.3 452.2l4.4 -4.4M1111.3 448.0l4.4 4.4M1111.3 452.4l4.4 -4.4M1113.5 448.3l4.4 4.4M1113.5 452.7l4.4 -4.4M1116.5 447.2l4.4 4.4M1116.5 451.6l4.4 -4.4M1119.5 447.1l4.4 4.4M1119.5 451.5l4.4 -4.4M1123.5 447.0l4.4 4.4M1123.5 451.4l4.4 -4.4M1125.7 445.9l4.4 4.4M1125.7 450.3l4.4 -4.4M1128.7 446.1l4.4 4.4M1128.7 450.5l4.4 -4.4M1131.7 445.2l4.4 4.4M1131.7 449.6l4.4 -4.4M1134.0 445.1l4.4 4.4M1134.0 449.5l4.4 -4.4M1137.0 445.0l4.4 4.4M1137.0 449.4l4.4 -4.4" stroke="#4a2cf0" stroke-width="1.3" fill="none" stroke-opacity="1"/><path d="M239.8 856.0a2.15 2.15 0 1 0 4.3 0a2.15 2.15 0 1 0 -4.3 0M268.9 808.0a2.15 2.15 0 1 0 4.3 0a2.15 2.15 0 1 0 -4.3 0M288.8 780.0a2.15 2.15 0 1 0 4.3 0a2.15 2.15 0 1 0 -4.3 0M304.7 746.9a2.15 2.15 0 1 0 4.3 0a2.15 2.15 0 1 0 -4.3 0M317.7 745.0a2.15 2.15 0 1 0 4.3 0a2.15 2.15 0 1 0 -4.3 0M337.9 741.0a2.15 2.15 0 1 0 4.3 0a2.15 2.15 0 1 0 -4.3 0M345.6 741.7a2.15 2.15 0 1 0 4.3 0a2.15 2.15 0 1 0 -4.3 0M353.7 745.0a2.15 2.15 0 1 0 4.3 0a2.15 2.15 0 1 0 -4.3 0M359.9 719.6a2.15 2.15 0 1 0 4.3 0a2.15 2.15 0 1 0 -4.3 0M366.9 713.4a2.15 2.15 0 1 0 4.3 0a2.15 2.15 0 1 0 -4.3 0M371.9 708.0a2.15 2.15 0 1 0 4.3 0a2.15 2.15 0 1 0 -4.3 0M376.8 702.0a2.15 2.15 0 1 0 4.3 0a2.15 2.15 0 1 0 -4.3 0M382.6 696.6a2.15 2.15 0 1 0 4.3 0a2.15 2.15 0 1 0 -4.3 0M387.1 690.6a2.15 2.15 0 1 0 4.3 0a2.15 2.15 0 1 0 -4.3 0M391.4 686.8a2.15 2.15 0 1 0 4.3 0a2.15 2.15 0 1 0 -4.3 0M395.5 682.3a2.15 2.15 0 1 0 4.3 0a2.15 2.15 0 1 0 -4.3 0M399.3 681.4a2.15 2.15 0 1 0 4.3 0a2.15 2.15 0 1 0 -4.3 0M402.9 685.1a2.15 2.15 0 1 0 4.3 0a2.15 2.15 0 1 0 -4.3 0M406.3 682.0a2.15 2.15 0 1 0 4.3 0a2.15 2.15 0 1 0 -4.3 0M409.6 678.1a2.15 2.15 0 1 0 4.3 0a2.15 2.15 0 1 0 -4.3 0M412.8 672.8a2.15 2.15 0 1 0 4.3 0a2.15 2.15 0 1 0 -4.3 0M415.8 666.7a2.15 2.15 0 1 0 4.3 0a2.15 2.15 0 1 0 -4.3 0M418.7 663.8a2.15 2.15 0 1 0 4.3 0a2.15 2.15 0 1 0 -4.3 0M421.4 659.6a2.15 2.15 0 1 0 4.3 0a2.15 2.15 0 1 0 -4.3 0M424.1 656.8a2.15 2.15 0 1 0 4.3 0a2.15 2.15 0 1 0 -4.3 0M426.7 651.2a2.15 2.15 0 1 0 4.3 0a2.15 2.15 0 1 0 -4.3 0M429.1 645.5a2.15 2.15 0 1 0 4.3 0a2.15 2.15 0 1 0 -4.3 0M431.5 643.5a2.15 2.15 0 1 0 4.3 0a2.15 2.15 0 1 0 -4.3 0M433.8 642.2a2.15 2.15 0 1 0 4.3 0a2.15 2.15 0 1 0 -4.3 0M436.1 640.8a2.15 2.15 0 1 0 4.3 0a2.15 2.15 0 1 0 -4.3 0M438.3 639.2a2.15 2.15 0 1 0 4.3 0a2.15 2.15 0 1 0 -4.3 0M440.4 637.4a2.15 2.15 0 1 0 4.3 0a2.15 2.15 0 1 0 -4.3 0M442.4 636.4a2.15 2.15 0 1 0 4.3 0a2.15 2.15 0 1 0 -4.3 0M444.4 633.5a2.15 2.15 0 1 0 4.3 0a2.15 2.15 0 1 0 -4.3 0M446.3 629.6a2.15 2.15 0 1 0 4.3 0a2.15 2.15 0 1 0 -4.3 0M448.2 625.9a2.15 2.15 0 1 0 4.3 0a2.15 2.15 0 1 0 -4.3 0M450.0 622.1a2.15 2.15 0 1 0 4.3 0a2.15 2.15 0 1 0 -4.3 0M451.8 618.1a2.15 2.15 0 1 0 4.3 0a2.15 2.15 0 1 0 -4.3 0M453.6 615.2a2.15 2.15 0 1 0 4.3 0a2.15 2.15 0 1 0 -4.3 0M455.3 611.9a2.15 2.15 0 1 0 4.3 0a2.15 2.15 0 1 0 -4.3 0M458.6 608.7a2.15 2.15 0 1 0 4.3 0a2.15 2.15 0 1 0 -4.3 0M461.7 603.6a2.15 2.15 0 1 0 4.3 0a2.15 2.15 0 1 0 -4.3 0M464.7 598.5a2.15 2.15 0 1 0 4.3 0a2.15 2.15 0 1 0 -4.3 0M467.6 593.7a2.15 2.15 0 1 0 4.3 0a2.15 2.15 0 1 0 -4.3 0M470.4 588.7a2.15 2.15 0 1 0 4.3 0a2.15 2.15 0 1 0 -4.3 0M473.0 584.9a2.15 2.15 0 1 0 4.3 0a2.15 2.15 0 1 0 -4.3 0M475.6 581.8a2.15 2.15 0 1 0 4.3 0a2.15 2.15 0 1 0 -4.3 0M478.1 576.8a2.15 2.15 0 1 0 4.3 0a2.15 2.15 0 1 0 -4.3 0M480.5 573.0a2.15 2.15 0 1 0 4.3 0a2.15 2.15 0 1 0 -4.3 0M482.8 568.3a2.15 2.15 0 1 0 4.3 0a2.15 2.15 0 1 0 -4.3 0M485.0 562.7a2.15 2.15 0 1 0 4.3 0a2.15 2.15 0 1 0 -4.3 0M487.2 559.3a2.15 2.15 0 1 0 4.3 0a2.15 2.15 0 1 0 -4.3 0M489.3 555.3a2.15 2.15 0 1 0 4.3 0a2.15 2.15 0 1 0 -4.3 0M491.3 551.1a2.15 2.15 0 1 0 4.3 0a2.15 2.15 0 1 0 -4.3 0M493.3 546.7a2.15 2.15 0 1 0 4.3 0a2.15 2.15 0 1 0 -4.3 0M495.3 544.0a2.15 2.15 0 1 0 4.3 0a2.15 2.15 0 1 0 -4.3 0M497.1 540.1a2.15 2.15 0 1 0 4.3 0a2.15 2.15 0 1 0 -4.3 0M499.0 540.1a2.15 2.15 0 1 0 4.3 0a2.15 2.15 0 1 0 -4.3 0M500.9 538.2a2.15 2.15 0 1 0 4.3 0a2.15 2.15 0 1 0 -4.3 0M502.8 541.8a2.15 2.15 0 1 0 4.3 0a2.15 2.15 0 1 0 -4.3 0M504.7 545.4a2.15 2.15 0 1 0 4.3 0a2.15 2.15 0 1 0 -4.3 0M506.6 552.0a2.15 2.15 0 1 0 4.3 0a2.15 2.15 0 1 0 -4.3 0M508.5 556.7a2.15 2.15 0 1 0 4.3 0a2.15 2.15 0 1 0 -4.3 0M510.4 563.2a2.15 2.15 0 1 0 4.3 0a2.15 2.15 0 1 0 -4.3 0M512.3 572.7a2.15 2.15 0 1 0 4.3 0a2.15 2.15 0 1 0 -4.3 0M514.2 582.5a2.15 2.15 0 1 0 4.3 0a2.15 2.15 0 1 0 -4.3 0M516.1 590.8a2.15 2.15 0 1 0 4.3 0a2.15 2.15 0 1 0 -4.3 0M518.0 595.6a2.15 2.15 0 1 0 4.3 0a2.15 2.15 0 1 0 -4.3 0M519.9 598.6a2.15 2.15 0 1 0 4.3 0a2.15 2.15 0 1 0 -4.3 0M521.8 603.5a2.15 2.15 0 1 0 4.3 0a2.15 2.15 0 1 0 -4.3 0M523.7 606.3a2.15 2.15 0 1 0 4.3 0a2.15 2.15 0 1 0 -4.3 0M525.6 612.2a2.15 2.15 0 1 0 4.3 0a2.15 2.15 0 1 0 -4.3 0M527.5 617.6a2.15 2.15 0 1 0 4.3 0a2.15 2.15 0 1 0 -4.3 0M529.4 621.3a2.15 2.15 0 1 0 4.3 0a2.15 2.15 0 1 0 -4.3 0M531.3 624.1a2.15 2.15 0 1 0 4.3 0a2.15 2.15 0 1 0 -4.3 0M533.2 625.4a2.15 2.15 0 1 0 4.3 0a2.15 2.15 0 1 0 -4.3 0M535.1 627.7a2.15 2.15 0 1 0 4.3 0a2.15 2.15 0 1 0 -4.3 0M537.0 630.3a2.15 2.15 0 1 0 4.3 0a2.15 2.15 0 1 0 -4.3 0M538.9 632.8a2.15 2.15 0 1 0 4.3 0a2.15 2.15 0 1 0 -4.3 0M540.8 634.4a2.15 2.15 0 1 0 4.3 0a2.15 2.15 0 1 0 -4.3 0M542.7 636.6a2.15 2.15 0 1 0 4.3 0a2.15 2.15 0 1 0 -4.3 0M544.6 639.0a2.15 2.15 0 1 0 4.3 0a2.15 2.15 0 1 0 -4.3 0M546.5 639.9a2.15 2.15 0 1 0 4.3 0a2.15 2.15 0 1 0 -4.3 0M548.4 640.9a2.15 2.15 0 1 0 4.3 0a2.15 2.15 0 1 0 -4.3 0M550.3 642.8a2.15 2.15 0 1 0 4.3 0a2.15 2.15 0 1 0 -4.3 0M552.2 645.3a2.15 2.15 0 1 0 4.3 0a2.15 2.15 0 1 0 -4.3 0M554.1 644.2a2.15 2.15 0 1 0 4.3 0a2.15 2.15 0 1 0 -4.3 0M556.0 645.7a2.15 2.15 0 1 0 4.3 0a2.15 2.15 0 1 0 -4.3 0M560.0 648.5a2.15 2.15 0 1 0 4.3 0a2.15 2.15 0 1 0 -4.3 0M563.2 647.2a2.15 2.15 0 1 0 4.3 0a2.15 2.15 0 1 0 -4.3 0M566.4 652.5a2.15 2.15 0 1 0 4.3 0a2.15 2.15 0 1 0 -4.3 0M569.6 653.8a2.15 2.15 0 1 0 4.3 0a2.15 2.15 0 1 0 -4.3 0M572.8 657.1a2.15 2.15 0 1 0 4.3 0a2.15 2.15 0 1 0 -4.3 0M576.0 657.7a2.15 2.15 0 1 0 4.3 0a2.15 2.15 0 1 0 -4.3 0M579.2 656.9a2.15 2.15 0 1 0 4.3 0a2.15 2.15 0 1 0 -4.3 0M582.4 660.6a2.15 2.15 0 1 0 4.3 0a2.15 2.15 0 1 0 -4.3 0M585.6 660.3a2.15 2.15 0 1 0 4.3 0a2.15 2.15 0 1 0 -4.3 0M588.8 661.8a2.15 2.15 0 1 0 4.3 0a2.15 2.15 0 1 0 -4.3 0M592.0 663.6a2.15 2.15 0 1 0 4.3 0a2.15 2.15 0 1 0 -4.3 0M595.2 663.1a2.15 2.15 0 1 0 4.3 0a2.15 2.15 0 1 0 -4.3 0M598.4 664.8a2.15 2.15 0 1 0 4.3 0a2.15 2.15 0 1 0 -4.3 0M601.6 663.7a2.15 2.15 0 1 0 4.3 0a2.15 2.15 0 1 0 -4.3 0M604.8 665.5a2.15 2.15 0 1 0 4.3 0a2.15 2.15 0 1 0 -4.3 0M608.0 665.9a2.15 2.15 0 1 0 4.3 0a2.15 2.15 0 1 0 -4.3 0M611.2 667.3a2.15 2.15 0 1 0 4.3 0a2.15 2.15 0 1 0 -4.3 0M614.4 667.5a2.15 2.15 0 1 0 4.3 0a2.15 2.15 0 1 0 -4.3 0M617.6 666.9a2.15 2.15 0 1 0 4.3 0a2.15 2.15 0 1 0 -4.3 0M620.8 668.7a2.15 2.15 0 1 0 4.3 0a2.15 2.15 0 1 0 -4.3 0M624.0 668.6a2.15 2.15 0 1 0 4.3 0a2.15 2.15 0 1 0 -4.3 0M627.2 668.5a2.15 2.15 0 1 0 4.3 0a2.15 2.15 0 1 0 -4.3 0M630.4 670.1a2.15 2.15 0 1 0 4.3 0a2.15 2.15 0 1 0 -4.3 0M633.6 668.1a2.15 2.15 0 1 0 4.3 0a2.15 2.15 0 1 0 -4.3 0M636.8 668.0a2.15 2.15 0 1 0 4.3 0a2.15 2.15 0 1 0 -4.3 0M640.9 667.7a2.15 2.15 0 1 0 4.3 0a2.15 2.15 0 1 0 -4.3 0M643.9 668.0a2.15 2.15 0 1 0 4.3 0a2.15 2.15 0 1 0 -4.3 0M646.9 669.9a2.15 2.15 0 1 0 4.3 0a2.15 2.15 0 1 0 -4.3 0M649.9 668.1a2.15 2.15 0 1 0 4.3 0a2.15 2.15 0 1 0 -4.3 0M652.9 668.1a2.15 2.15 0 1 0 4.3 0a2.15 2.15 0 1 0 -4.3 0M655.9 669.0a2.15 2.15 0 1 0 4.3 0a2.15 2.15 0 1 0 -4.3 0M658.9 666.8a2.15 2.15 0 1 0 4.3 0a2.15 2.15 0 1 0 -4.3 0M661.9 669.4a2.15 2.15 0 1 0 4.3 0a2.15 2.15 0 1 0 -4.3 0M664.9 668.1a2.15 2.15 0 1 0 4.3 0a2.15 2.15 0 1 0 -4.3 0M667.9 668.4a2.15 2.15 0 1 0 4.3 0a2.15 2.15 0 1 0 -4.3 0M670.9 666.7a2.15 2.15 0 1 0 4.3 0a2.15 2.15 0 1 0 -4.3 0M673.9 667.1a2.15 2.15 0 1 0 4.3 0a2.15 2.15 0 1 0 -4.3 0M676.9 668.3a2.15 2.15 0 1 0 4.3 0a2.15 2.15 0 1 0 -4.3 0M679.9 668.5a2.15 2.15 0 1 0 4.3 0a2.15 2.15 0 1 0 -4.3 0M682.9 667.6a2.15 2.15 0 1 0 4.3 0a2.15 2.15 0 1 0 -4.3 0M685.9 668.1a2.15 2.15 0 1 0 4.3 0a2.15 2.15 0 1 0 -4.3 0M688.9 666.9a2.15 2.15 0 1 0 4.3 0a2.15 2.15 0 1 0 -4.3 0M691.9 667.2a2.15 2.15 0 1 0 4.3 0a2.15 2.15 0 1 0 -4.3 0M694.9 668.1a2.15 2.15 0 1 0 4.3 0a2.15 2.15 0 1 0 -4.3 0M697.9 668.1a2.15 2.15 0 1 0 4.3 0a2.15 2.15 0 1 0 -4.3 0M700.9 667.3a2.15 2.15 0 1 0 4.3 0a2.15 2.15 0 1 0 -4.3 0M703.9 667.1a2.15 2.15 0 1 0 4.3 0a2.15 2.15 0 1 0 -4.3 0M706.9 668.0a2.15 2.15 0 1 0 4.3 0a2.15 2.15 0 1 0 -4.3 0M709.9 668.4a2.15 2.15 0 1 0 4.3 0a2.15 2.15 0 1 0 -4.3 0M712.9 668.1a2.15 2.15 0 1 0 4.3 0a2.15 2.15 0 1 0 -4.3 0M715.9 668.4a2.15 2.15 0 1 0 4.3 0a2.15 2.15 0 1 0 -4.3 0M718.9 668.5a2.15 2.15 0 1 0 4.3 0a2.15 2.15 0 1 0 -4.3 0M721.9 668.2a2.15 2.15 0 1 0 4.3 0a2.15 2.15 0 1 0 -4.3 0M724.9 668.0a2.15 2.15 0 1 0 4.3 0a2.15 2.15 0 1 0 -4.3 0M727.9 666.2a2.15 2.15 0 1 0 4.3 0a2.15 2.15 0 1 0 -4.3 0M730.9 668.8a2.15 2.15 0 1 0 4.3 0a2.15 2.15 0 1 0 -4.3 0M733.9 666.6a2.15 2.15 0 1 0 4.3 0a2.15 2.15 0 1 0 -4.3 0M736.9 667.4a2.15 2.15 0 1 0 4.3 0a2.15 2.15 0 1 0 -4.3 0M739.9 668.6a2.15 2.15 0 1 0 4.3 0a2.15 2.15 0 1 0 -4.3 0M742.9 667.8a2.15 2.15 0 1 0 4.3 0a2.15 2.15 0 1 0 -4.3 0M745.9 667.8a2.15 2.15 0 1 0 4.3 0a2.15 2.15 0 1 0 -4.3 0M748.9 669.1a2.15 2.15 0 1 0 4.3 0a2.15 2.15 0 1 0 -4.3 0M751.9 668.2a2.15 2.15 0 1 0 4.3 0a2.15 2.15 0 1 0 -4.3 0M754.9 667.1a2.15 2.15 0 1 0 4.3 0a2.15 2.15 0 1 0 -4.3 0M757.9 668.1a2.15 2.15 0 1 0 4.3 0a2.15 2.15 0 1 0 -4.3 0M760.9 668.3a2.15 2.15 0 1 0 4.3 0a2.15 2.15 0 1 0 -4.3 0M763.9 666.6a2.15 2.15 0 1 0 4.3 0a2.15 2.15 0 1 0 -4.3 0M766.9 668.5a2.15 2.15 0 1 0 4.3 0a2.15 2.15 0 1 0 -4.3 0M769.9 668.8a2.15 2.15 0 1 0 4.3 0a2.15 2.15 0 1 0 -4.3 0M772.9 667.3a2.15 2.15 0 1 0 4.3 0a2.15 2.15 0 1 0 -4.3 0M775.9 667.0a2.15 2.15 0 1 0 4.3 0a2.15 2.15 0 1 0 -4.3 0M778.9 667.4a2.15 2.15 0 1 0 4.3 0a2.15 2.15 0 1 0 -4.3 0M781.9 670.3a2.15 2.15 0 1 0 4.3 0a2.15 2.15 0 1 0 -4.3 0M784.9 667.2a2.15 2.15 0 1 0 4.3 0a2.15 2.15 0 1 0 -4.3 0M787.9 666.8a2.15 2.15 0 1 0 4.3 0a2.15 2.15 0 1 0 -4.3 0M790.9 669.0a2.15 2.15 0 1 0 4.3 0a2.15 2.15 0 1 0 -4.3 0M793.9 668.0a2.15 2.15 0 1 0 4.3 0a2.15 2.15 0 1 0 -4.3 0M796.9 668.2a2.15 2.15 0 1 0 4.3 0a2.15 2.15 0 1 0 -4.3 0M799.9 666.8a2.15 2.15 0 1 0 4.3 0a2.15 2.15 0 1 0 -4.3 0M802.9 668.9a2.15 2.15 0 1 0 4.3 0a2.15 2.15 0 1 0 -4.3 0M805.9 667.5a2.15 2.15 0 1 0 4.3 0a2.15 2.15 0 1 0 -4.3 0M808.9 667.7a2.15 2.15 0 1 0 4.3 0a2.15 2.15 0 1 0 -4.3 0M811.9 666.1a2.15 2.15 0 1 0 4.3 0a2.15 2.15 0 1 0 -4.3 0M814.9 666.5a2.15 2.15 0 1 0 4.3 0a2.15 2.15 0 1 0 -4.3 0M817.9 667.8a2.15 2.15 0 1 0 4.3 0a2.15 2.15 0 1 0 -4.3 0M820.9 668.1a2.15 2.15 0 1 0 4.3 0a2.15 2.15 0 1 0 -4.3 0M823.9 666.8a2.15 2.15 0 1 0 4.3 0a2.15 2.15 0 1 0 -4.3 0M826.9 667.3a2.15 2.15 0 1 0 4.3 0a2.15 2.15 0 1 0 -4.3 0M829.9 667.4a2.15 2.15 0 1 0 4.3 0a2.15 2.15 0 1 0 -4.3 0M832.9 668.0a2.15 2.15 0 1 0 4.3 0a2.15 2.15 0 1 0 -4.3 0M835.9 667.6a2.15 2.15 0 1 0 4.3 0a2.15 2.15 0 1 0 -4.3 0M838.9 665.9a2.15 2.15 0 1 0 4.3 0a2.15 2.15 0 1 0 -4.3 0M841.9 668.1a2.15 2.15 0 1 0 4.3 0a2.15 2.15 0 1 0 -4.3 0M844.9 667.0a2.15 2.15 0 1 0 4.3 0a2.15 2.15 0 1 0 -4.3 0M847.9 667.0a2.15 2.15 0 1 0 4.3 0a2.15 2.15 0 1 0 -4.3 0M850.9 667.7a2.15 2.15 0 1 0 4.3 0a2.15 2.15 0 1 0 -4.3 0M853.9 667.9a2.15 2.15 0 1 0 4.3 0a2.15 2.15 0 1 0 -4.3 0M856.9 665.6a2.15 2.15 0 1 0 4.3 0a2.15 2.15 0 1 0 -4.3 0M859.9 667.1a2.15 2.15 0 1 0 4.3 0a2.15 2.15 0 1 0 -4.3 0M862.9 667.6a2.15 2.15 0 1 0 4.3 0a2.15 2.15 0 1 0 -4.3 0M865.9 665.4a2.15 2.15 0 1 0 4.3 0a2.15 2.15 0 1 0 -4.3 0M868.9 666.2a2.15 2.15 0 1 0 4.3 0a2.15 2.15 0 1 0 -4.3 0M871.9 666.3a2.15 2.15 0 1 0 4.3 0a2.15 2.15 0 1 0 -4.3 0M874.9 665.5a2.15 2.15 0 1 0 4.3 0a2.15 2.15 0 1 0 -4.3 0M877.9 665.4a2.15 2.15 0 1 0 4.3 0a2.15 2.15 0 1 0 -4.3 0M880.9 665.5a2.15 2.15 0 1 0 4.3 0a2.15 2.15 0 1 0 -4.3 0M883.9 664.7a2.15 2.15 0 1 0 4.3 0a2.15 2.15 0 1 0 -4.3 0M886.9 664.1a2.15 2.15 0 1 0 4.3 0a2.15 2.15 0 1 0 -4.3 0M889.9 662.2a2.15 2.15 0 1 0 4.3 0a2.15 2.15 0 1 0 -4.3 0M892.9 663.8a2.15 2.15 0 1 0 4.3 0a2.15 2.15 0 1 0 -4.3 0M895.9 662.6a2.15 2.15 0 1 0 4.3 0a2.15 2.15 0 1 0 -4.3 0M900.9 657.6a2.15 2.15 0 1 0 4.3 0a2.15 2.15 0 1 0 -4.3 0M904.9 657.1a2.15 2.15 0 1 0 4.3 0a2.15 2.15 0 1 0 -4.3 0M908.9 657.3a2.15 2.15 0 1 0 4.3 0a2.15 2.15 0 1 0 -4.3 0M912.9 656.3a2.15 2.15 0 1 0 4.3 0a2.15 2.15 0 1 0 -4.3 0M916.9 655.5a2.15 2.15 0 1 0 4.3 0a2.15 2.15 0 1 0 -4.3 0M920.9 655.0a2.15 2.15 0 1 0 4.3 0a2.15 2.15 0 1 0 -4.3 0M924.9 655.5a2.15 2.15 0 1 0 4.3 0a2.15 2.15 0 1 0 -4.3 0M928.9 654.7a2.15 2.15 0 1 0 4.3 0a2.15 2.15 0 1 0 -4.3 0M932.9 653.3a2.15 2.15 0 1 0 4.3 0a2.15 2.15 0 1 0 -4.3 0M936.9 652.2a2.15 2.15 0 1 0 4.3 0a2.15 2.15 0 1 0 -4.3 0M940.9 652.1a2.15 2.15 0 1 0 4.3 0a2.15 2.15 0 1 0 -4.3 0M944.9 651.4a2.15 2.15 0 1 0 4.3 0a2.15 2.15 0 1 0 -4.3 0M948.9 651.0a2.15 2.15 0 1 0 4.3 0a2.15 2.15 0 1 0 -4.3 0M952.9 650.4a2.15 2.15 0 1 0 4.3 0a2.15 2.15 0 1 0 -4.3 0M956.9 650.4a2.15 2.15 0 1 0 4.3 0a2.15 2.15 0 1 0 -4.3 0M960.9 649.8a2.15 2.15 0 1 0 4.3 0a2.15 2.15 0 1 0 -4.3 0M964.9 648.1a2.15 2.15 0 1 0 4.3 0a2.15 2.15 0 1 0 -4.3 0M968.9 647.1a2.15 2.15 0 1 0 4.3 0a2.15 2.15 0 1 0 -4.3 0M972.9 646.2a2.15 2.15 0 1 0 4.3 0a2.15 2.15 0 1 0 -4.3 0M976.9 644.6a2.15 2.15 0 1 0 4.3 0a2.15 2.15 0 1 0 -4.3 0M980.9 643.3a2.15 2.15 0 1 0 4.3 0a2.15 2.15 0 1 0 -4.3 0M984.9 642.5a2.15 2.15 0 1 0 4.3 0a2.15 2.15 0 1 0 -4.3 0M988.9 642.0a2.15 2.15 0 1 0 4.3 0a2.15 2.15 0 1 0 -4.3 0M992.9 639.6a2.15 2.15 0 1 0 4.3 0a2.15 2.15 0 1 0 -4.3 0M996.9 638.9a2.15 2.15 0 1 0 4.3 0a2.15 2.15 0 1 0 -4.3 0M1000.9 638.3a2.15 2.15 0 1 0 4.3 0a2.15 2.15 0 1 0 -4.3 0M1004.9 636.6a2.15 2.15 0 1 0 4.3 0a2.15 2.15 0 1 0 -4.3 0M1008.9 634.6a2.15 2.15 0 1 0 4.3 0a2.15 2.15 0 1 0 -4.3 0M1012.9 634.0a2.15 2.15 0 1 0 4.3 0a2.15 2.15 0 1 0 -4.3 0M1016.9 632.9a2.15 2.15 0 1 0 4.3 0a2.15 2.15 0 1 0 -4.3 0M1020.9 631.9a2.15 2.15 0 1 0 4.3 0a2.15 2.15 0 1 0 -4.3 0M1024.9 631.8a2.15 2.15 0 1 0 4.3 0a2.15 2.15 0 1 0 -4.3 0M1028.9 631.1a2.15 2.15 0 1 0 4.3 0a2.15 2.15 0 1 0 -4.3 0M1032.9 629.1a2.15 2.15 0 1 0 4.3 0a2.15 2.15 0 1 0 -4.3 0M1036.9 628.8a2.15 2.15 0 1 0 4.3 0a2.15 2.15 0 1 0 -4.3 0M1040.9 627.9a2.15 2.15 0 1 0 4.3 0a2.15 2.15 0 1 0 -4.3 0M1044.9 627.5a2.15 2.15 0 1 0 4.3 0a2.15 2.15 0 1 0 -4.3 0M1051.4 621.7a2.15 2.15 0 1 0 4.3 0a2.15 2.15 0 1 0 -4.3 0M1101.9 613.2a2.15 2.15 0 1 0 4.3 0a2.15 2.15 0 1 0 -4.3 0M1103.9 611.8a2.15 2.15 0 1 0 4.3 0a2.15 2.15 0 1 0 -4.3 0M1105.9 612.5a2.15 2.15 0 1 0 4.3 0a2.15 2.15 0 1 0 -4.3 0M1107.9 611.8a2.15 2.15 0 1 0 4.3 0a2.15 2.15 0 1 0 -4.3 0M1109.9 611.6a2.15 2.15 0 1 0 4.3 0a2.15 2.15 0 1 0 -4.3 0M1111.9 612.0a2.15 2.15 0 1 0 4.3 0a2.15 2.15 0 1 0 -4.3 0M1113.9 611.1a2.15 2.15 0 1 0 4.3 0a2.15 2.15 0 1 0 -4.3 0M1115.9 610.2a2.15 2.15 0 1 0 4.3 0a2.15 2.15 0 1 0 -4.3 0M1117.9 611.0a2.15 2.15 0 1 0 4.3 0a2.15 2.15 0 1 0 -4.3 0M1119.9 611.0a2.15 2.15 0 1 0 4.3 0a2.15 2.15 0 1 0 -4.3 0M1121.9 609.1a2.15 2.15 0 1 0 4.3 0a2.15 2.15 0 1 0 -4.3 0M1123.9 610.0a2.15 2.15 0 1 0 4.3 0a2.15 2.15 0 1 0 -4.3 0M1125.9 608.8a2.15 2.15 0 1 0 4.3 0a2.15 2.15 0 1 0 -4.3 0M1127.9 609.3a2.15 2.15 0 1 0 4.3 0a2.15 2.15 0 1 0 -4.3 0M1129.9 608.4a2.15 2.15 0 1 0 4.3 0a2.15 2.15 0 1 0 -4.3 0M1131.9 606.7a2.15 2.15 0 1 0 4.3 0a2.15 2.15 0 1 0 -4.3 0M1133.9 607.5a2.15 2.15 0 1 0 4.3 0a2.15 2.15 0 1 0 -4.3 0M1135.9 605.0a2.15 2.15 0 1 0 4.3 0a2.15 2.15 0 1 0 -4.3 0" stroke="#6a55ee" stroke-width="1.3" fill="none" stroke-opacity="0.7"/><path d="M402.7 896.8l4.4 4.4M402.7 901.2l4.4 -4.4M408.5 863.5l4.4 4.4M408.5 867.9l4.4 -4.4M414.7 828.8l4.4 4.4M414.7 833.2l4.4 -4.4M420.8 804.8l4.4 4.4M420.8 809.2l4.4 -4.4M425.7 780.8l4.4 4.4M425.7 785.2l4.4 -4.4M430.6 763.8l4.4 4.4M430.6 768.2l4.4 -4.4M435.5 750.8l4.4 4.4M435.5 755.2l4.4 -4.4M439.7 739.5l4.4 4.4M439.7 743.9l4.4 -4.4M443.6 730.4l4.4 4.4M443.6 734.8l4.4 -4.4M447.5 721.6l4.4 4.4M447.5 726.0l4.4 -4.4M451.4 713.5l4.4 4.4M451.4 717.9l4.4 -4.4M454.6 708.6l4.4 4.4M454.6 713.0l4.4 -4.4M457.8 702.8l4.4 4.4M457.8 707.2l4.4 -4.4M461.1 696.6l4.4 4.4M461.1 701.0l4.4 -4.4M464.4 691.8l4.4 4.4M464.4 696.2l4.4 -4.4M467.3 685.8l4.4 4.4M467.3 690.2l4.4 -4.4M470.2 681.0l4.4 4.4M470.2 685.4l4.4 -4.4M473.0 676.7l4.4 4.4M473.0 681.1l4.4 -4.4M475.5 672.6l4.4 4.4M475.5 677.0l4.4 -4.4M478.0 668.6l4.4 4.4M478.0 673.0l4.4 -4.4M480.4 664.8l4.4 4.4M480.4 669.2l4.4 -4.4M482.7 661.1l4.4 4.4M482.7 665.5l4.4 -4.4M485.0 657.4l4.4 4.4M485.0 661.8l4.4 -4.4M487.1 653.9l4.4 4.4M487.1 658.3l4.4 -4.4M489.2 650.4l4.4 4.4M489.2 654.8l4.4 -4.4M491.3 647.1l4.4 4.4M491.3 651.5l4.4 -4.4M493.3 643.7l4.4 4.4M493.3 648.1l4.4 -4.4M495.2 640.5l4.4 4.4M495.2 644.9l4.4 -4.4M497.1 637.3l4.4 4.4M497.1 641.7l4.4 -4.4M498.9 634.2l4.4 4.4M498.9 638.6l4.4 -4.4M500.7 631.1l4.4 4.4M500.7 635.5l4.4 -4.4M502.5 628.0l4.4 4.4M502.5 632.4l4.4 -4.4M504.2 625.0l4.4 4.4M504.2 629.4l4.4 -4.4M505.9 622.2l4.4 4.4M505.9 626.6l4.4 -4.4M507.6 619.6l4.4 4.4M507.6 624.0l4.4 -4.4M509.3 617.1l4.4 4.4M509.3 621.5l4.4 -4.4M511.0 614.7l4.4 4.4M511.0 619.1l4.4 -4.4M512.7 612.4l4.4 4.4M512.7 616.8l4.4 -4.4M514.4 610.0l4.4 4.4M514.4 614.4l4.4 -4.4M516.1 607.7l4.4 4.4M516.1 612.1l4.4 -4.4M517.8 605.4l4.4 4.4M517.8 609.8l4.4 -4.4M519.5 603.0l4.4 4.4M519.5 607.4l4.4 -4.4M521.2 600.6l4.4 4.4M521.2 605.0l4.4 -4.4M522.9 598.3l4.4 4.4M522.9 602.7l4.4 -4.4M524.6 595.9l4.4 4.4M524.6 600.3l4.4 -4.4M526.3 593.5l4.4 4.4M526.3 597.9l4.4 -4.4M528.0 591.1l4.4 4.4M528.0 595.5l4.4 -4.4M529.7 588.8l4.4 4.4M529.7 593.2l4.4 -4.4M531.4 586.5l4.4 4.4M531.4 590.9l4.4 -4.4M533.1 584.3l4.4 4.4M533.1 588.7l4.4 -4.4M534.8 582.1l4.4 4.4M534.8 586.5l4.4 -4.4M536.5 579.9l4.4 4.4M536.5 584.3l4.4 -4.4M538.2 577.7l4.4 4.4M538.2 582.1l4.4 -4.4M539.9 575.5l4.4 4.4M539.9 579.9l4.4 -4.4M541.6 573.3l4.4 4.4M541.6 577.7l4.4 -4.4M543.3 571.1l4.4 4.4M543.3 575.5l4.4 -4.4M545.0 568.8l4.4 4.4M545.0 573.2l4.4 -4.4M546.7 566.5l4.4 4.4M546.7 570.9l4.4 -4.4M548.4 564.2l4.4 4.4M548.4 568.6l4.4 -4.4M550.1 562.0l4.4 4.4M550.1 566.4l4.4 -4.4M551.8 559.7l4.4 4.4M551.8 564.1l4.4 -4.4M553.5 557.6l4.4 4.4M553.5 562.0l4.4 -4.4M555.2 556.1l4.4 4.4M555.2 560.5l4.4 -4.4M556.9 554.7l4.4 4.4M556.9 559.1l4.4 -4.4M558.6 553.4l4.4 4.4M558.6 557.8l4.4 -4.4M560.3 552.3l4.4 4.4M560.3 556.7l4.4 -4.4M562.0 551.3l4.4 4.4M562.0 555.7l4.4 -4.4M563.7 550.3l4.4 4.4M563.7 554.7l4.4 -4.4M565.4 549.5l4.4 4.4M565.4 553.9l4.4 -4.4M567.1 548.6l4.4 4.4M567.1 553.0l4.4 -4.4M568.8 547.8l4.4 4.4M568.8 552.2l4.4 -4.4M570.5 547.1l4.4 4.4M570.5 551.5l4.4 -4.4M572.2 546.4l4.4 4.4M572.2 550.8l4.4 -4.4M573.9 545.7l4.4 4.4M573.9 550.1l4.4 -4.4M575.6 545.1l4.4 4.4M575.6 549.5l4.4 -4.4M577.3 544.5l4.4 4.4M577.3 548.9l4.4 -4.4M579.0 543.9l4.4 4.4M579.0 548.3l4.4 -4.4M580.7 543.3l4.4 4.4M580.7 547.7l4.4 -4.4M582.4 542.8l4.4 4.4M582.4 547.2l4.4 -4.4M584.1 542.3l4.4 4.4M584.1 546.7l4.4 -4.4M585.8 541.8l4.4 4.4M585.8 546.2l4.4 -4.4M587.5 541.4l4.4 4.4M587.5 545.8l4.4 -4.4M589.3 540.4l4.4 4.4M589.3 544.8l4.4 -4.4M591.5 539.9l4.4 4.4M591.5 544.3l4.4 -4.4M594.5 539.2l4.4 4.4M594.5 543.6l4.4 -4.4M596.8 539.2l4.4 4.4M596.8 543.6l4.4 -4.4M600.7 538.1l4.4 4.4M600.7 542.5l4.4 -4.4M603.7 537.5l4.4 4.4M603.7 541.9l4.4 -4.4M605.9 537.0l4.4 4.4M605.9 541.4l4.4 -4.4M608.9 536.8l4.4 4.4M608.9 541.2l4.4 -4.4M611.9 536.2l4.4 4.4M611.9 540.6l4.4 -4.4M614.9 535.0l4.4 4.4M614.9 539.4l4.4 -4.4M617.9 534.2l4.4 4.4M617.9 538.6l4.4 -4.4M620.2 534.4l4.4 4.4M620.2 538.8l4.4 -4.4M623.2 533.2l4.4 4.4M623.2 537.6l4.4 -4.4M626.2 532.8l4.4 4.4M626.2 537.2l4.4 -4.4M630.1 532.7l4.4 4.4M630.1 537.1l4.4 -4.4M633.1 531.7l4.4 4.4M633.1 536.1l4.4 -4.4M637.0 531.8l4.4 4.4M637.0 536.2l4.4 -4.4M640.0 530.2l4.4 4.4M640.0 534.6l4.4 -4.4M643.0 529.8l4.4 4.4M643.0 534.2l4.4 -4.4M646.0 529.4l4.4 4.4M646.0 533.8l4.4 -4.4M649.9 529.0l4.4 4.4M649.9 533.4l4.4 -4.4M652.9 528.2l4.4 4.4M652.9 532.6l4.4 -4.4M655.9 527.7l4.4 4.4M655.9 532.1l4.4 -4.4M659.8 527.5l4.4 4.4M659.8 531.9l4.4 -4.4M662.0 527.4l4.4 4.4M662.0 531.8l4.4 -4.4M664.3 526.4l4.4 4.4M664.3 530.8l4.4 -4.4M668.2 525.8l4.4 4.4M668.2 530.2l4.4 -4.4M670.4 525.6l4.4 4.4M670.4 530.0l4.4 -4.4M674.3 525.4l4.4 4.4M674.3 529.8l4.4 -4.4M677.3 524.5l4.4 4.4M677.3 528.9l4.4 -4.4M680.3 525.1l4.4 4.4M680.3 529.5l4.4 -4.4M683.3 523.7l4.4 4.4M683.3 528.1l4.4 -4.4M686.3 523.4l4.4 4.4M686.3 527.8l4.4 -4.4M689.3 522.3l4.4 4.4M689.3 526.7l4.4 -4.4M692.3 522.0l4.4 4.4M692.3 526.4l4.4 -4.4M695.3 521.8l4.4 4.4M695.3 526.2l4.4 -4.4M698.3 522.3l4.4 4.4M698.3 526.7l4.4 -4.4M700.6 521.3l4.4 4.4M700.6 525.7l4.4 -4.4M703.6 520.7l4.4 4.4M703.6 525.1l4.4 -4.4M707.5 520.2l4.4 4.4M707.5 524.6l4.4 -4.4M709.7 520.3l4.4 4.4M709.7 524.7l4.4 -4.4M712.7 519.3l4.4 4.4M712.7 523.7l4.4 -4.4M715.0 519.5l4.4 4.4M715.0 523.9l4.4 -4.4M717.2 519.5l4.4 4.4M717.2 523.9l4.4 -4.4M720.2 518.9l4.4 4.4M720.2 523.3l4.4 -4.4M722.5 518.1l4.4 4.4M722.5 522.5l4.4 -4.4M726.4 518.0l4.4 4.4M726.4 522.4l4.4 -4.4M729.4 517.5l4.4 4.4M729.4 521.9l4.4 -4.4M733.3 517.1l4.4 4.4M733.3 521.5l4.4 -4.4M736.3 517.3l4.4 4.4M736.3 521.7l4.4 -4.4M739.3 517.0l4.4 4.4M739.3 521.4l4.4 -4.4M742.3 516.0l4.4 4.4M742.3 520.4l4.4 -4.4M745.3 515.8l4.4 4.4M745.3 520.2l4.4 -4.4M748.3 515.2l4.4 4.4M748.3 519.6l4.4 -4.4M750.5 515.2l4.4 4.4M750.5 519.6l4.4 -4.4M752.8 514.6l4.4 4.4M752.8 519.0l4.4 -4.4M755.8 514.2l4.4 4.4M755.8 518.6l4.4 -4.4M759.7 513.7l4.4 4.4M759.7 518.1l4.4 -4.4M763.6 513.3l4.4 4.4M763.6 517.7l4.4 -4.4M766.6 513.2l4.4 4.4M766.6 517.6l4.4 -4.4M768.8 512.9l4.4 4.4M768.8 517.3l4.4 -4.4M771.1 512.4l4.4 4.4M771.1 516.8l4.4 -4.4M773.3 512.5l4.4 4.4M773.3 516.9l4.4 -4.4M775.6 512.4l4.4 4.4M775.6 516.8l4.4 -4.4M778.6 511.7l4.4 4.4M778.6 516.1l4.4 -4.4M781.6 511.0l4.4 4.4M781.6 515.4l4.4 -4.4M785.5 511.1l4.4 4.4M785.5 515.5l4.4 -4.4M788.5 510.4l4.4 4.4M788.5 514.8l4.4 -4.4M790.7 510.2l4.4 4.4M790.7 514.6l4.4 -4.4M794.6 509.8l4.4 4.4M794.6 514.2l4.4 -4.4M798.5 509.3l4.4 4.4M798.5 513.7l4.4 -4.4M802.4 509.2l4.4 4.4M802.4 513.6l4.4 -4.4M805.4 508.7l4.4 4.4M805.4 513.1l4.4 -4.4M808.4 508.3l4.4 4.4M808.4 512.7l4.4 -4.4M810.7 507.8l4.4 4.4M810.7 512.2l4.4 -4.4M812.9 507.3l4.4 4.4M812.9 511.7l4.4 -4.4M815.9 507.6l4.4 4.4M815.9 512.0l4.4 -4.4M818.2 506.9l4.4 4.4M818.2 511.3l4.4 -4.4M822.1 506.8l4.4 4.4M822.1 511.2l4.4 -4.4M825.1 505.9l4.4 4.4M825.1 510.3l4.4 -4.4M828.1 506.4l4.4 4.4M828.1 510.8l4.4 -4.4M830.3 505.5l4.4 4.4M830.3 509.9l4.4 -4.4M833.3 505.1l4.4 4.4M833.3 509.5l4.4 -4.4M836.3 504.9l4.4 4.4M836.3 509.3l4.4 -4.4M839.3 504.2l4.4 4.4M839.3 508.6l4.4 -4.4M842.3 504.1l4.4 4.4M842.3 508.5l4.4 -4.4M845.3 504.0l4.4 4.4M845.3 508.4l4.4 -4.4M849.2 503.6l4.4 4.4M849.2 508.0l4.4 -4.4M853.1 502.5l4.4 4.4M853.1 506.9l4.4 -4.4M857.0 502.5l4.4 4.4M857.0 506.9l4.4 -4.4M859.3 501.6l4.4 4.4M859.3 506.0l4.4 -4.4M863.2 501.8l4.4 4.4M863.2 506.2l4.4 -4.4M866.2 501.2l4.4 4.4M866.2 505.6l4.4 -4.4M869.2 500.6l4.4 4.4M869.2 505.0l4.4 -4.4M872.2 500.8l4.4 4.4M872.2 505.2l4.4 -4.4M875.2 500.3l4.4 4.4M875.2 504.7l4.4 -4.4M878.2 499.8l4.4 4.4M878.2 504.2l4.4 -4.4M881.2 499.9l4.4 4.4M881.2 504.3l4.4 -4.4M883.4 499.1l4.4 4.4M883.4 503.5l4.4 -4.4M885.7 499.2l4.4 4.4M885.7 503.6l4.4 -4.4M887.9 499.0l4.4 4.4M887.9 503.4l4.4 -4.4M890.2 498.4l4.4 4.4M890.2 502.8l4.4 -4.4M893.2 498.0l4.4 4.4M893.2 502.4l4.4 -4.4M896.2 497.9l4.4 4.4M896.2 502.3l4.4 -4.4M898.4 496.9l4.4 4.4M898.4 501.3l4.4 -4.4M902.3 497.2l4.4 4.4M902.3 501.6l4.4 -4.4M904.6 496.9l4.4 4.4M904.6 501.3l4.4 -4.4M906.8 497.0l4.4 4.4M906.8 501.4l4.4 -4.4M909.1 496.3l4.4 4.4M909.1 500.7l4.4 -4.4M912.1 495.7l4.4 4.4M912.1 500.1l4.4 -4.4M915.1 495.6l4.4 4.4M915.1 500.0l4.4 -4.4M918.1 495.0l4.4 4.4M918.1 499.4l4.4 -4.4M920.3 495.2l4.4 4.4M920.3 499.6l4.4 -4.4M923.3 494.6l4.4 4.4M923.3 499.0l4.4 -4.4M926.3 494.5l4.4 4.4M926.3 498.9l4.4 -4.4M929.3 493.9l4.4 4.4M929.3 498.3l4.4 -4.4M933.2 493.0l4.4 4.4M933.2 497.4l4.4 -4.4M936.2 493.0l4.4 4.4M936.2 497.4l4.4 -4.4M940.1 492.6l4.4 4.4M940.1 497.0l4.4 -4.4M942.4 491.9l4.4 4.4M942.4 496.3l4.4 -4.4M945.4 492.3l4.4 4.4M945.4 496.7l4.4 -4.4M949.3 491.5l4.4 4.4M949.3 495.9l4.4 -4.4M952.3 490.9l4.4 4.4M952.3 495.3l4.4 -4.4M954.5 490.8l4.4 4.4M954.5 495.2l4.4 -4.4M958.4 490.5l4.4 4.4M958.4 494.9l4.4 -4.4M960.7 490.1l4.4 4.4M960.7 494.5l4.4 -4.4M962.9 490.0l4.4 4.4M962.9 494.4l4.4 -4.4M965.2 489.7l4.4 4.4M965.2 494.1l4.4 -4.4M968.2 489.6l4.4 4.4M968.2 494.0l4.4 -4.4M972.1 488.4l4.4 4.4M972.1 492.8l4.4 -4.4M975.1 488.3l4.4 4.4M975.1 492.7l4.4 -4.4M978.1 488.3l4.4 4.4M978.1 492.7l4.4 -4.4M981.1 488.2l4.4 4.4M981.1 492.6l4.4 -4.4M985.0 487.9l4.4 4.4M985.0 492.3l4.4 -4.4M987.2 487.9l4.4 4.4M987.2 492.3l4.4 -4.4M991.1 487.0l4.4 4.4M991.1 491.4l4.4 -4.4M993.4 486.1l4.4 4.4M993.4 490.5l4.4 -4.4M996.4 486.1l4.4 4.4M996.4 490.5l4.4 -4.4M1000.3 486.1l4.4 4.4M1000.3 490.5l4.4 -4.4M1002.5 485.2l4.4 4.4M1002.5 489.6l4.4 -4.4M1005.5 485.4l4.4 4.4M1005.5 489.8l4.4 -4.4M1008.5 484.8l4.4 4.4M1008.5 489.2l4.4 -4.4M1011.5 484.8l4.4 4.4M1011.5 489.2l4.4 -4.4M1015.4 484.5l4.4 4.4M1015.4 488.9l4.4 -4.4M1019.3 483.6l4.4 4.4M1019.3 488.0l4.4 -4.4M1022.3 482.8l4.4 4.4M1022.3 487.2l4.4 -4.4M1024.6 483.0l4.4 4.4M1024.6 487.4l4.4 -4.4M1027.6 482.4l4.4 4.4M1027.6 486.8l4.4 -4.4M1031.5 482.1l4.4 4.4M1031.5 486.5l4.4 -4.4M1034.5 482.1l4.4 4.4M1034.5 486.5l4.4 -4.4M1037.5 481.9l4.4 4.4M1037.5 486.3l4.4 -4.4M1040.5 481.5l4.4 4.4M1040.5 485.9l4.4 -4.4M1043.5 481.2l4.4 4.4M1043.5 485.6l4.4 -4.4M1046.5 480.6l4.4 4.4M1046.5 485.0l4.4 -4.4M1049.5 480.8l4.4 4.4M1049.5 485.2l4.4 -4.4M1052.5 480.4l4.4 4.4M1052.5 484.8l4.4 -4.4M1055.5 479.6l4.4 4.4M1055.5 484.0l4.4 -4.4M1058.5 479.4l4.4 4.4M1058.5 483.8l4.4 -4.4M1061.5 479.7l4.4 4.4M1061.5 484.1l4.4 -4.4M1063.7 479.0l4.4 4.4M1063.7 483.4l4.4 -4.4M1066.7 478.8l4.4 4.4M1066.7 483.2l4.4 -4.4M1070.6 478.1l4.4 4.4M1070.6 482.5l4.4 -4.4M1073.6 477.8l4.4 4.4M1073.6 482.2l4.4 -4.4M1076.6 477.1l4.4 4.4M1076.6 481.5l4.4 -4.4M1078.9 477.1l4.4 4.4M1078.9 481.5l4.4 -4.4M1081.9 476.8l4.4 4.4M1081.9 481.2l4.4 -4.4M1084.1 476.8l4.4 4.4M1084.1 481.2l4.4 -4.4M1086.4 475.8l4.4 4.4M1086.4 480.2l4.4 -4.4M1089.4 476.2l4.4 4.4M1089.4 480.6l4.4 -4.4M1092.4 475.4l4.4 4.4M1092.4 479.8l4.4 -4.4M1096.3 475.2l4.4 4.4M1096.3 479.6l4.4 -4.4M1098.5 474.9l4.4 4.4M1098.5 479.3l4.4 -4.4M1104.8 470.9l4.4 4.4M1104.8 475.3l4.4 -4.4M1108.7 471.4l4.4 4.4M1108.7 475.8l4.4 -4.4M1111.7 470.5l4.4 4.4M1111.7 474.9l4.4 -4.4M1114.7 470.3l4.4 4.4M1114.7 474.7l4.4 -4.4M1117.7 470.0l4.4 4.4M1117.7 474.4l4.4 -4.4M1120.7 469.8l4.4 4.4M1120.7 474.2l4.4 -4.4M1124.6 469.4l4.4 4.4M1124.6 473.8l4.4 -4.4" stroke="#2aeab0" stroke-width="1.3" fill="none" stroke-opacity="1"/><path d="M402.8 772.9a2.15 2.15 0 1 0 4.3 0a2.15 2.15 0 1 0 -4.3 0M408.6 747.5a2.15 2.15 0 1 0 4.3 0a2.15 2.15 0 1 0 -4.3 0M414.8 717.7a2.15 2.15 0 1 0 4.3 0a2.15 2.15 0 1 0 -4.3 0M420.9 700.8a2.15 2.15 0 1 0 4.3 0a2.15 2.15 0 1 0 -4.3 0M425.8 692.0a2.15 2.15 0 1 0 4.3 0a2.15 2.15 0 1 0 -4.3 0M430.7 684.9a2.15 2.15 0 1 0 4.3 0a2.15 2.15 0 1 0 -4.3 0M1107.8 642.4a2.15 2.15 0 1 0 4.3 0a2.15 2.15 0 1 0 -4.3 0M1114.8 627.7a2.15 2.15 0 1 0 4.3 0a2.15 2.15 0 1 0 -4.3 0M1123.5 596.8a2.15 2.15 0 1 0 4.3 0a2.15 2.15 0 1 0 -4.3 0M436.1 679.1a2.15 2.15 0 1 0 4.3 0a2.15 2.15 0 1 0 -4.3 0M440.4 672.3a2.15 2.15 0 1 0 4.3 0a2.15 2.15 0 1 0 -4.3 0M444.4 669.2a2.15 2.15 0 1 0 4.3 0a2.15 2.15 0 1 0 -4.3 0M448.2 665.0a2.15 2.15 0 1 0 4.3 0a2.15 2.15 0 1 0 -4.3 0M451.8 660.5a2.15 2.15 0 1 0 4.3 0a2.15 2.15 0 1 0 -4.3 0M455.3 658.5a2.15 2.15 0 1 0 4.3 0a2.15 2.15 0 1 0 -4.3 0M458.6 653.3a2.15 2.15 0 1 0 4.3 0a2.15 2.15 0 1 0 -4.3 0M461.7 649.8a2.15 2.15 0 1 0 4.3 0a2.15 2.15 0 1 0 -4.3 0M464.7 645.9a2.15 2.15 0 1 0 4.3 0a2.15 2.15 0 1 0 -4.3 0M467.6 641.3a2.15 2.15 0 1 0 4.3 0a2.15 2.15 0 1 0 -4.3 0M470.4 641.2a2.15 2.15 0 1 0 4.3 0a2.15 2.15 0 1 0 -4.3 0M473.0 638.9a2.15 2.15 0 1 0 4.3 0a2.15 2.15 0 1 0 -4.3 0M475.6 634.5a2.15 2.15 0 1 0 4.3 0a2.15 2.15 0 1 0 -4.3 0M478.1 630.2a2.15 2.15 0 1 0 4.3 0a2.15 2.15 0 1 0 -4.3 0M480.5 625.3a2.15 2.15 0 1 0 4.3 0a2.15 2.15 0 1 0 -4.3 0M482.8 626.1a2.15 2.15 0 1 0 4.3 0a2.15 2.15 0 1 0 -4.3 0M485.1 624.6a2.15 2.15 0 1 0 4.3 0a2.15 2.15 0 1 0 -4.3 0M487.4 620.9a2.15 2.15 0 1 0 4.3 0a2.15 2.15 0 1 0 -4.3 0M489.7 619.1a2.15 2.15 0 1 0 4.3 0a2.15 2.15 0 1 0 -4.3 0M492.0 617.1a2.15 2.15 0 1 0 4.3 0a2.15 2.15 0 1 0 -4.3 0M494.3 614.1a2.15 2.15 0 1 0 4.3 0a2.15 2.15 0 1 0 -4.3 0M496.6 609.7a2.15 2.15 0 1 0 4.3 0a2.15 2.15 0 1 0 -4.3 0M498.9 608.9a2.15 2.15 0 1 0 4.3 0a2.15 2.15 0 1 0 -4.3 0M501.2 606.1a2.15 2.15 0 1 0 4.3 0a2.15 2.15 0 1 0 -4.3 0M503.5 600.8a2.15 2.15 0 1 0 4.3 0a2.15 2.15 0 1 0 -4.3 0M505.8 599.6a2.15 2.15 0 1 0 4.3 0a2.15 2.15 0 1 0 -4.3 0M508.1 595.9a2.15 2.15 0 1 0 4.3 0a2.15 2.15 0 1 0 -4.3 0M510.4 594.9a2.15 2.15 0 1 0 4.3 0a2.15 2.15 0 1 0 -4.3 0M512.7 593.3a2.15 2.15 0 1 0 4.3 0a2.15 2.15 0 1 0 -4.3 0M515.0 588.8a2.15 2.15 0 1 0 4.3 0a2.15 2.15 0 1 0 -4.3 0M517.3 585.2a2.15 2.15 0 1 0 4.3 0a2.15 2.15 0 1 0 -4.3 0M519.6 586.7a2.15 2.15 0 1 0 4.3 0a2.15 2.15 0 1 0 -4.3 0M521.9 583.1a2.15 2.15 0 1 0 4.3 0a2.15 2.15 0 1 0 -4.3 0M524.2 581.9a2.15 2.15 0 1 0 4.3 0a2.15 2.15 0 1 0 -4.3 0M526.5 576.1a2.15 2.15 0 1 0 4.3 0a2.15 2.15 0 1 0 -4.3 0M528.8 576.5a2.15 2.15 0 1 0 4.3 0a2.15 2.15 0 1 0 -4.3 0M531.1 575.3a2.15 2.15 0 1 0 4.3 0a2.15 2.15 0 1 0 -4.3 0M533.4 572.9a2.15 2.15 0 1 0 4.3 0a2.15 2.15 0 1 0 -4.3 0M535.7 567.9a2.15 2.15 0 1 0 4.3 0a2.15 2.15 0 1 0 -4.3 0M538.0 566.2a2.15 2.15 0 1 0 4.3 0a2.15 2.15 0 1 0 -4.3 0M540.3 563.2a2.15 2.15 0 1 0 4.3 0a2.15 2.15 0 1 0 -4.3 0M542.6 561.9a2.15 2.15 0 1 0 4.3 0a2.15 2.15 0 1 0 -4.3 0M544.9 559.7a2.15 2.15 0 1 0 4.3 0a2.15 2.15 0 1 0 -4.3 0M547.9 557.6a2.15 2.15 0 1 0 4.3 0a2.15 2.15 0 1 0 -4.3 0M550.2 557.8a2.15 2.15 0 1 0 4.3 0a2.15 2.15 0 1 0 -4.3 0M552.5 560.2a2.15 2.15 0 1 0 4.3 0a2.15 2.15 0 1 0 -4.3 0M554.8 562.0a2.15 2.15 0 1 0 4.3 0a2.15 2.15 0 1 0 -4.3 0M557.1 566.7a2.15 2.15 0 1 0 4.3 0a2.15 2.15 0 1 0 -4.3 0M559.4 570.1a2.15 2.15 0 1 0 4.3 0a2.15 2.15 0 1 0 -4.3 0M561.7 573.8a2.15 2.15 0 1 0 4.3 0a2.15 2.15 0 1 0 -4.3 0M564.0 577.2a2.15 2.15 0 1 0 4.3 0a2.15 2.15 0 1 0 -4.3 0M566.3 581.5a2.15 2.15 0 1 0 4.3 0a2.15 2.15 0 1 0 -4.3 0M568.6 589.6a2.15 2.15 0 1 0 4.3 0a2.15 2.15 0 1 0 -4.3 0M570.9 595.1a2.15 2.15 0 1 0 4.3 0a2.15 2.15 0 1 0 -4.3 0M573.2 602.9a2.15 2.15 0 1 0 4.3 0a2.15 2.15 0 1 0 -4.3 0M575.5 608.1a2.15 2.15 0 1 0 4.3 0a2.15 2.15 0 1 0 -4.3 0M577.8 612.8a2.15 2.15 0 1 0 4.3 0a2.15 2.15 0 1 0 -4.3 0M580.1 618.4a2.15 2.15 0 1 0 4.3 0a2.15 2.15 0 1 0 -4.3 0M582.4 622.7a2.15 2.15 0 1 0 4.3 0a2.15 2.15 0 1 0 -4.3 0M584.7 624.8a2.15 2.15 0 1 0 4.3 0a2.15 2.15 0 1 0 -4.3 0M587.0 627.9a2.15 2.15 0 1 0 4.3 0a2.15 2.15 0 1 0 -4.3 0M589.3 631.6a2.15 2.15 0 1 0 4.3 0a2.15 2.15 0 1 0 -4.3 0M591.6 634.8a2.15 2.15 0 1 0 4.3 0a2.15 2.15 0 1 0 -4.3 0M593.9 638.4a2.15 2.15 0 1 0 4.3 0a2.15 2.15 0 1 0 -4.3 0M596.2 639.5a2.15 2.15 0 1 0 4.3 0a2.15 2.15 0 1 0 -4.3 0M598.5 642.4a2.15 2.15 0 1 0 4.3 0a2.15 2.15 0 1 0 -4.3 0M600.8 643.7a2.15 2.15 0 1 0 4.3 0a2.15 2.15 0 1 0 -4.3 0M603.1 643.8a2.15 2.15 0 1 0 4.3 0a2.15 2.15 0 1 0 -4.3 0M605.4 645.1a2.15 2.15 0 1 0 4.3 0a2.15 2.15 0 1 0 -4.3 0M607.7 646.4a2.15 2.15 0 1 0 4.3 0a2.15 2.15 0 1 0 -4.3 0M611.9 647.3a2.15 2.15 0 1 0 4.3 0a2.15 2.15 0 1 0 -4.3 0M614.9 648.4a2.15 2.15 0 1 0 4.3 0a2.15 2.15 0 1 0 -4.3 0M617.9 649.7a2.15 2.15 0 1 0 4.3 0a2.15 2.15 0 1 0 -4.3 0M620.9 649.4a2.15 2.15 0 1 0 4.3 0a2.15 2.15 0 1 0 -4.3 0M623.9 651.1a2.15 2.15 0 1 0 4.3 0a2.15 2.15 0 1 0 -4.3 0M626.9 651.1a2.15 2.15 0 1 0 4.3 0a2.15 2.15 0 1 0 -4.3 0M629.9 652.0a2.15 2.15 0 1 0 4.3 0a2.15 2.15 0 1 0 -4.3 0M632.9 653.6a2.15 2.15 0 1 0 4.3 0a2.15 2.15 0 1 0 -4.3 0M635.9 653.3a2.15 2.15 0 1 0 4.3 0a2.15 2.15 0 1 0 -4.3 0M639.9 663.2a2.15 2.15 0 1 0 4.3 0a2.15 2.15 0 1 0 -4.3 0M642.9 664.9a2.15 2.15 0 1 0 4.3 0a2.15 2.15 0 1 0 -4.3 0M645.9 662.8a2.15 2.15 0 1 0 4.3 0a2.15 2.15 0 1 0 -4.3 0M648.9 662.6a2.15 2.15 0 1 0 4.3 0a2.15 2.15 0 1 0 -4.3 0M651.9 663.8a2.15 2.15 0 1 0 4.3 0a2.15 2.15 0 1 0 -4.3 0M654.9 662.3a2.15 2.15 0 1 0 4.3 0a2.15 2.15 0 1 0 -4.3 0M657.9 664.2a2.15 2.15 0 1 0 4.3 0a2.15 2.15 0 1 0 -4.3 0M660.9 661.1a2.15 2.15 0 1 0 4.3 0a2.15 2.15 0 1 0 -4.3 0M663.9 663.6a2.15 2.15 0 1 0 4.3 0a2.15 2.15 0 1 0 -4.3 0M666.9 662.1a2.15 2.15 0 1 0 4.3 0a2.15 2.15 0 1 0 -4.3 0M669.9 661.8a2.15 2.15 0 1 0 4.3 0a2.15 2.15 0 1 0 -4.3 0M672.9 665.1a2.15 2.15 0 1 0 4.3 0a2.15 2.15 0 1 0 -4.3 0M675.9 661.7a2.15 2.15 0 1 0 4.3 0a2.15 2.15 0 1 0 -4.3 0M678.9 665.1a2.15 2.15 0 1 0 4.3 0a2.15 2.15 0 1 0 -4.3 0M681.9 663.7a2.15 2.15 0 1 0 4.3 0a2.15 2.15 0 1 0 -4.3 0M684.9 664.7a2.15 2.15 0 1 0 4.3 0a2.15 2.15 0 1 0 -4.3 0M687.9 661.5a2.15 2.15 0 1 0 4.3 0a2.15 2.15 0 1 0 -4.3 0M690.9 664.4a2.15 2.15 0 1 0 4.3 0a2.15 2.15 0 1 0 -4.3 0M693.9 664.7a2.15 2.15 0 1 0 4.3 0a2.15 2.15 0 1 0 -4.3 0M696.9 662.7a2.15 2.15 0 1 0 4.3 0a2.15 2.15 0 1 0 -4.3 0M699.9 662.7a2.15 2.15 0 1 0 4.3 0a2.15 2.15 0 1 0 -4.3 0M702.9 666.0a2.15 2.15 0 1 0 4.3 0a2.15 2.15 0 1 0 -4.3 0M705.9 663.1a2.15 2.15 0 1 0 4.3 0a2.15 2.15 0 1 0 -4.3 0M708.9 662.3a2.15 2.15 0 1 0 4.3 0a2.15 2.15 0 1 0 -4.3 0M711.9 662.0a2.15 2.15 0 1 0 4.3 0a2.15 2.15 0 1 0 -4.3 0M714.9 663.4a2.15 2.15 0 1 0 4.3 0a2.15 2.15 0 1 0 -4.3 0M717.9 663.3a2.15 2.15 0 1 0 4.3 0a2.15 2.15 0 1 0 -4.3 0M720.9 663.1a2.15 2.15 0 1 0 4.3 0a2.15 2.15 0 1 0 -4.3 0M723.9 665.1a2.15 2.15 0 1 0 4.3 0a2.15 2.15 0 1 0 -4.3 0M726.9 662.4a2.15 2.15 0 1 0 4.3 0a2.15 2.15 0 1 0 -4.3 0M729.9 663.5a2.15 2.15 0 1 0 4.3 0a2.15 2.15 0 1 0 -4.3 0M732.9 664.8a2.15 2.15 0 1 0 4.3 0a2.15 2.15 0 1 0 -4.3 0M735.9 661.6a2.15 2.15 0 1 0 4.3 0a2.15 2.15 0 1 0 -4.3 0M738.9 664.2a2.15 2.15 0 1 0 4.3 0a2.15 2.15 0 1 0 -4.3 0M741.9 665.2a2.15 2.15 0 1 0 4.3 0a2.15 2.15 0 1 0 -4.3 0M744.9 661.1a2.15 2.15 0 1 0 4.3 0a2.15 2.15 0 1 0 -4.3 0M747.9 661.4a2.15 2.15 0 1 0 4.3 0a2.15 2.15 0 1 0 -4.3 0M750.9 661.5a2.15 2.15 0 1 0 4.3 0a2.15 2.15 0 1 0 -4.3 0M753.9 660.5a2.15 2.15 0 1 0 4.3 0a2.15 2.15 0 1 0 -4.3 0M756.9 663.5a2.15 2.15 0 1 0 4.3 0a2.15 2.15 0 1 0 -4.3 0M759.9 660.5a2.15 2.15 0 1 0 4.3 0a2.15 2.15 0 1 0 -4.3 0M762.9 663.5a2.15 2.15 0 1 0 4.3 0a2.15 2.15 0 1 0 -4.3 0M765.9 664.8a2.15 2.15 0 1 0 4.3 0a2.15 2.15 0 1 0 -4.3 0M768.9 660.8a2.15 2.15 0 1 0 4.3 0a2.15 2.15 0 1 0 -4.3 0M771.9 662.5a2.15 2.15 0 1 0 4.3 0a2.15 2.15 0 1 0 -4.3 0M774.9 660.4a2.15 2.15 0 1 0 4.3 0a2.15 2.15 0 1 0 -4.3 0M777.9 663.9a2.15 2.15 0 1 0 4.3 0a2.15 2.15 0 1 0 -4.3 0M780.9 661.9a2.15 2.15 0 1 0 4.3 0a2.15 2.15 0 1 0 -4.3 0M783.9 662.5a2.15 2.15 0 1 0 4.3 0a2.15 2.15 0 1 0 -4.3 0M786.9 663.0a2.15 2.15 0 1 0 4.3 0a2.15 2.15 0 1 0 -4.3 0M789.9 663.6a2.15 2.15 0 1 0 4.3 0a2.15 2.15 0 1 0 -4.3 0M792.9 662.4a2.15 2.15 0 1 0 4.3 0a2.15 2.15 0 1 0 -4.3 0M795.9 662.9a2.15 2.15 0 1 0 4.3 0a2.15 2.15 0 1 0 -4.3 0M798.9 662.2a2.15 2.15 0 1 0 4.3 0a2.15 2.15 0 1 0 -4.3 0M801.9 663.0a2.15 2.15 0 1 0 4.3 0a2.15 2.15 0 1 0 -4.3 0M804.9 661.4a2.15 2.15 0 1 0 4.3 0a2.15 2.15 0 1 0 -4.3 0M807.9 663.0a2.15 2.15 0 1 0 4.3 0a2.15 2.15 0 1 0 -4.3 0M810.9 660.4a2.15 2.15 0 1 0 4.3 0a2.15 2.15 0 1 0 -4.3 0M813.9 662.3a2.15 2.15 0 1 0 4.3 0a2.15 2.15 0 1 0 -4.3 0M816.9 665.4a2.15 2.15 0 1 0 4.3 0a2.15 2.15 0 1 0 -4.3 0M819.9 663.0a2.15 2.15 0 1 0 4.3 0a2.15 2.15 0 1 0 -4.3 0M822.9 661.3a2.15 2.15 0 1 0 4.3 0a2.15 2.15 0 1 0 -4.3 0M825.9 663.2a2.15 2.15 0 1 0 4.3 0a2.15 2.15 0 1 0 -4.3 0M828.9 661.6a2.15 2.15 0 1 0 4.3 0a2.15 2.15 0 1 0 -4.3 0M831.9 660.7a2.15 2.15 0 1 0 4.3 0a2.15 2.15 0 1 0 -4.3 0M834.9 661.8a2.15 2.15 0 1 0 4.3 0a2.15 2.15 0 1 0 -4.3 0M837.9 663.7a2.15 2.15 0 1 0 4.3 0a2.15 2.15 0 1 0 -4.3 0M840.9 663.2a2.15 2.15 0 1 0 4.3 0a2.15 2.15 0 1 0 -4.3 0M843.9 662.5a2.15 2.15 0 1 0 4.3 0a2.15 2.15 0 1 0 -4.3 0M846.9 661.4a2.15 2.15 0 1 0 4.3 0a2.15 2.15 0 1 0 -4.3 0M849.9 661.1a2.15 2.15 0 1 0 4.3 0a2.15 2.15 0 1 0 -4.3 0M852.9 664.2a2.15 2.15 0 1 0 4.3 0a2.15 2.15 0 1 0 -4.3 0M855.9 662.7a2.15 2.15 0 1 0 4.3 0a2.15 2.15 0 1 0 -4.3 0M858.9 661.0a2.15 2.15 0 1 0 4.3 0a2.15 2.15 0 1 0 -4.3 0M861.9 659.4a2.15 2.15 0 1 0 4.3 0a2.15 2.15 0 1 0 -4.3 0M864.9 660.3a2.15 2.15 0 1 0 4.3 0a2.15 2.15 0 1 0 -4.3 0M867.9 665.2a2.15 2.15 0 1 0 4.3 0a2.15 2.15 0 1 0 -4.3 0M870.9 660.4a2.15 2.15 0 1 0 4.3 0a2.15 2.15 0 1 0 -4.3 0M873.9 661.6a2.15 2.15 0 1 0 4.3 0a2.15 2.15 0 1 0 -4.3 0M876.9 661.8a2.15 2.15 0 1 0 4.3 0a2.15 2.15 0 1 0 -4.3 0M879.9 661.1a2.15 2.15 0 1 0 4.3 0a2.15 2.15 0 1 0 -4.3 0M882.9 660.7a2.15 2.15 0 1 0 4.3 0a2.15 2.15 0 1 0 -4.3 0M885.9 659.0a2.15 2.15 0 1 0 4.3 0a2.15 2.15 0 1 0 -4.3 0M888.9 659.1a2.15 2.15 0 1 0 4.3 0a2.15 2.15 0 1 0 -4.3 0M891.9 662.4a2.15 2.15 0 1 0 4.3 0a2.15 2.15 0 1 0 -4.3 0M894.9 658.9a2.15 2.15 0 1 0 4.3 0a2.15 2.15 0 1 0 -4.3 0M900.9 658.0a2.15 2.15 0 1 0 4.3 0a2.15 2.15 0 1 0 -4.3 0M905.9 656.4a2.15 2.15 0 1 0 4.3 0a2.15 2.15 0 1 0 -4.3 0M910.9 656.6a2.15 2.15 0 1 0 4.3 0a2.15 2.15 0 1 0 -4.3 0M915.9 656.3a2.15 2.15 0 1 0 4.3 0a2.15 2.15 0 1 0 -4.3 0M920.9 656.0a2.15 2.15 0 1 0 4.3 0a2.15 2.15 0 1 0 -4.3 0M925.9 654.2a2.15 2.15 0 1 0 4.3 0a2.15 2.15 0 1 0 -4.3 0M930.9 654.3a2.15 2.15 0 1 0 4.3 0a2.15 2.15 0 1 0 -4.3 0M935.9 653.5a2.15 2.15 0 1 0 4.3 0a2.15 2.15 0 1 0 -4.3 0M940.9 652.3a2.15 2.15 0 1 0 4.3 0a2.15 2.15 0 1 0 -4.3 0M945.9 652.2a2.15 2.15 0 1 0 4.3 0a2.15 2.15 0 1 0 -4.3 0M950.9 650.8a2.15 2.15 0 1 0 4.3 0a2.15 2.15 0 1 0 -4.3 0M955.9 650.0a2.15 2.15 0 1 0 4.3 0a2.15 2.15 0 1 0 -4.3 0M960.9 649.3a2.15 2.15 0 1 0 4.3 0a2.15 2.15 0 1 0 -4.3 0M965.9 646.6a2.15 2.15 0 1 0 4.3 0a2.15 2.15 0 1 0 -4.3 0M970.9 646.5a2.15 2.15 0 1 0 4.3 0a2.15 2.15 0 1 0 -4.3 0M975.9 644.5a2.15 2.15 0 1 0 4.3 0a2.15 2.15 0 1 0 -4.3 0M980.9 642.8a2.15 2.15 0 1 0 4.3 0a2.15 2.15 0 1 0 -4.3 0M985.9 641.8a2.15 2.15 0 1 0 4.3 0a2.15 2.15 0 1 0 -4.3 0M990.9 640.8a2.15 2.15 0 1 0 4.3 0a2.15 2.15 0 1 0 -4.3 0M995.9 638.7a2.15 2.15 0 1 0 4.3 0a2.15 2.15 0 1 0 -4.3 0M1000.9 638.0a2.15 2.15 0 1 0 4.3 0a2.15 2.15 0 1 0 -4.3 0M1005.9 635.4a2.15 2.15 0 1 0 4.3 0a2.15 2.15 0 1 0 -4.3 0M1010.9 634.1a2.15 2.15 0 1 0 4.3 0a2.15 2.15 0 1 0 -4.3 0M1015.9 634.3a2.15 2.15 0 1 0 4.3 0a2.15 2.15 0 1 0 -4.3 0M1020.9 632.6a2.15 2.15 0 1 0 4.3 0a2.15 2.15 0 1 0 -4.3 0M1025.9 631.7a2.15 2.15 0 1 0 4.3 0a2.15 2.15 0 1 0 -4.3 0M1030.9 629.8a2.15 2.15 0 1 0 4.3 0a2.15 2.15 0 1 0 -4.3 0M1035.9 629.6a2.15 2.15 0 1 0 4.3 0a2.15 2.15 0 1 0 -4.3 0M1040.9 628.4a2.15 2.15 0 1 0 4.3 0a2.15 2.15 0 1 0 -4.3 0M1045.9 627.7a2.15 2.15 0 1 0 4.3 0a2.15 2.15 0 1 0 -4.3 0M1050.9 626.5a2.15 2.15 0 1 0 4.3 0a2.15 2.15 0 1 0 -4.3 0M1055.9 626.2a2.15 2.15 0 1 0 4.3 0a2.15 2.15 0 1 0 -4.3 0M1060.9 624.5a2.15 2.15 0 1 0 4.3 0a2.15 2.15 0 1 0 -4.3 0M1065.9 623.5a2.15 2.15 0 1 0 4.3 0a2.15 2.15 0 1 0 -4.3 0M1070.9 622.4a2.15 2.15 0 1 0 4.3 0a2.15 2.15 0 1 0 -4.3 0M1075.9 623.0a2.15 2.15 0 1 0 4.3 0a2.15 2.15 0 1 0 -4.3 0M1080.9 621.3a2.15 2.15 0 1 0 4.3 0a2.15 2.15 0 1 0 -4.3 0M1085.9 620.4a2.15 2.15 0 1 0 4.3 0a2.15 2.15 0 1 0 -4.3 0M1090.9 619.7a2.15 2.15 0 1 0 4.3 0a2.15 2.15 0 1 0 -4.3 0M1095.9 619.3a2.15 2.15 0 1 0 4.3 0a2.15 2.15 0 1 0 -4.3 0M1108.7 610.3a2.15 2.15 0 1 0 4.3 0a2.15 2.15 0 1 0 -4.3 0M1110.7 610.6a2.15 2.15 0 1 0 4.3 0a2.15 2.15 0 1 0 -4.3 0M1112.7 610.5a2.15 2.15 0 1 0 4.3 0a2.15 2.15 0 1 0 -4.3 0M1114.7 610.5a2.15 2.15 0 1 0 4.3 0a2.15 2.15 0 1 0 -4.3 0M1116.7 610.4a2.15 2.15 0 1 0 4.3 0a2.15 2.15 0 1 0 -4.3 0M1118.7 610.7a2.15 2.15 0 1 0 4.3 0a2.15 2.15 0 1 0 -4.3 0M1120.7 610.6a2.15 2.15 0 1 0 4.3 0a2.15 2.15 0 1 0 -4.3 0M1122.7 610.7a2.15 2.15 0 1 0 4.3 0a2.15 2.15 0 1 0 -4.3 0" stroke="#2aeab0" stroke-width="1.3" fill="none" stroke-opacity="0.7"/><path d="M405.6 901.8l4.4 4.4M405.6 906.2l4.4 -4.4M414.7 860.6l4.4 4.4M414.7 865.0l4.4 -4.4M420.8 835.8l4.4 4.4M420.8 840.2l4.4 -4.4M425.7 808.6l4.4 4.4M425.7 813.0l4.4 -4.4M430.6 792.4l4.4 4.4M430.6 796.8l4.4 -4.4M435.5 768.7l4.4 4.4M435.5 773.1l4.4 -4.4M439.7 755.7l4.4 4.4M439.7 760.1l4.4 -4.4M443.6 743.7l4.4 4.4M443.6 748.1l4.4 -4.4M447.5 734.6l4.4 4.4M447.5 739.0l4.4 -4.4M451.4 728.8l4.4 4.4M451.4 733.2l4.4 -4.4M454.6 716.8l4.4 4.4M454.6 721.2l4.4 -4.4M457.8 709.6l4.4 4.4M457.8 714.0l4.4 -4.4M461.1 703.8l4.4 4.4M461.1 708.2l4.4 -4.4M464.4 697.8l4.4 4.4M464.4 702.2l4.4 -4.4M467.3 693.4l4.4 4.4M467.3 697.8l4.4 -4.4M470.2 686.8l4.4 4.4M470.2 691.2l4.4 -4.4M472.8 681.8l4.4 4.4M472.8 686.2l4.4 -4.4M475.5 677.5l4.4 4.4M475.5 681.9l4.4 -4.4M478.0 673.5l4.4 4.4M478.0 677.9l4.4 -4.4M480.4 669.7l4.4 4.4M480.4 674.1l4.4 -4.4M482.7 666.0l4.4 4.4M482.7 670.4l4.4 -4.4M485.0 662.3l4.4 4.4M485.0 666.7l4.4 -4.4M487.1 658.8l4.4 4.4M487.1 663.2l4.4 -4.4M489.2 655.3l4.4 4.4M489.2 659.7l4.4 -4.4M491.3 652.0l4.4 4.4M491.3 656.4l4.4 -4.4M493.3 648.7l4.4 4.4M493.3 653.1l4.4 -4.4M495.2 645.5l4.4 4.4M495.2 649.9l4.4 -4.4M497.1 642.4l4.4 4.4M497.1 646.8l4.4 -4.4M498.9 639.3l4.4 4.4M498.9 643.7l4.4 -4.4M500.7 636.3l4.4 4.4M500.7 640.7l4.4 -4.4M502.5 633.3l4.4 4.4M502.5 637.7l4.4 -4.4M504.2 630.3l4.4 4.4M504.2 634.7l4.4 -4.4M505.9 627.3l4.4 4.4M505.9 631.7l4.4 -4.4M507.6 624.3l4.4 4.4M507.6 628.7l4.4 -4.4M509.3 621.6l4.4 4.4M509.3 626.0l4.4 -4.4M511.0 619.0l4.4 4.4M511.0 623.4l4.4 -4.4M512.7 616.5l4.4 4.4M512.7 620.9l4.4 -4.4M514.4 614.1l4.4 4.4M514.4 618.5l4.4 -4.4M516.1 611.8l4.4 4.4M516.1 616.2l4.4 -4.4M517.8 609.5l4.4 4.4M517.8 613.9l4.4 -4.4M519.5 607.2l4.4 4.4M519.5 611.6l4.4 -4.4M521.2 604.9l4.4 4.4M521.2 609.3l4.4 -4.4M522.9 602.5l4.4 4.4M522.9 606.9l4.4 -4.4M524.6 600.1l4.4 4.4M524.6 604.5l4.4 -4.4M526.3 597.7l4.4 4.4M526.3 602.1l4.4 -4.4M528.0 595.3l4.4 4.4M528.0 599.7l4.4 -4.4M529.7 592.9l4.4 4.4M529.7 597.3l4.4 -4.4M531.4 590.6l4.4 4.4M531.4 595.0l4.4 -4.4M533.1 588.3l4.4 4.4M533.1 592.7l4.4 -4.4M534.8 586.0l4.4 4.4M534.8 590.4l4.4 -4.4M536.5 583.8l4.4 4.4M536.5 588.2l4.4 -4.4M538.2 581.6l4.4 4.4M538.2 586.0l4.4 -4.4M539.9 579.4l4.4 4.4M539.9 583.8l4.4 -4.4M541.6 577.2l4.4 4.4M541.6 581.6l4.4 -4.4M543.3 575.0l4.4 4.4M543.3 579.4l4.4 -4.4M545.0 572.8l4.4 4.4M545.0 577.2l4.4 -4.4M546.7 570.5l4.4 4.4M546.7 574.9l4.4 -4.4M548.4 568.2l4.4 4.4M548.4 572.6l4.4 -4.4M550.1 565.9l4.4 4.4M550.1 570.3l4.4 -4.4M551.8 563.7l4.4 4.4M551.8 568.1l4.4 -4.4M553.5 561.4l4.4 4.4M553.5 565.8l4.4 -4.4M555.2 559.2l4.4 4.4M555.2 563.6l4.4 -4.4M556.9 557.2l4.4 4.4M556.9 561.6l4.4 -4.4M558.6 555.7l4.4 4.4M558.6 560.1l4.4 -4.4M560.3 554.4l4.4 4.4M560.3 558.8l4.4 -4.4M562.0 553.1l4.4 4.4M562.0 557.5l4.4 -4.4M563.7 552.0l4.4 4.4M563.7 556.4l4.4 -4.4M565.4 551.0l4.4 4.4M565.4 555.4l4.4 -4.4M567.1 550.1l4.4 4.4M567.1 554.5l4.4 -4.4M568.8 549.3l4.4 4.4M568.8 553.7l4.4 -4.4M570.5 548.4l4.4 4.4M570.5 552.8l4.4 -4.4M572.2 547.7l4.4 4.4M572.2 552.1l4.4 -4.4M573.9 546.9l4.4 4.4M573.9 551.3l4.4 -4.4M575.6 546.2l4.4 4.4M575.6 550.6l4.4 -4.4M577.3 545.6l4.4 4.4M577.3 550.0l4.4 -4.4M579.0 545.0l4.4 4.4M579.0 549.4l4.4 -4.4M580.7 544.3l4.4 4.4M580.7 548.7l4.4 -4.4M582.4 543.8l4.4 4.4M582.4 548.2l4.4 -4.4M584.1 543.2l4.4 4.4M584.1 547.6l4.4 -4.4M585.8 542.7l4.4 4.4M585.8 547.1l4.4 -4.4M587.5 542.2l4.4 4.4M587.5 546.6l4.4 -4.4M589.2 541.7l4.4 4.4M589.2 546.1l4.4 -4.4M592.3 540.5l4.4 4.4M592.3 544.9l4.4 -4.4M594.5 540.3l4.4 4.4M594.5 544.7l4.4 -4.4M597.5 539.1l4.4 4.4M597.5 543.5l4.4 -4.4M600.5 538.7l4.4 4.4M600.5 543.1l4.4 -4.4M603.5 537.7l4.4 4.4M603.5 542.1l4.4 -4.4M606.5 537.5l4.4 4.4M606.5 541.9l4.4 -4.4M608.8 537.1l4.4 4.4M608.8 541.5l4.4 -4.4M612.7 535.9l4.4 4.4M612.7 540.3l4.4 -4.4M614.9 535.6l4.4 4.4M614.9 540.0l4.4 -4.4M618.8 534.9l4.4 4.4M618.8 539.3l4.4 -4.4M621.1 534.6l4.4 4.4M621.1 539.0l4.4 -4.4M625.0 533.3l4.4 4.4M625.0 537.7l4.4 -4.4M628.9 532.8l4.4 4.4M628.9 537.2l4.4 -4.4M631.1 533.0l4.4 4.4M631.1 537.4l4.4 -4.4M634.1 532.2l4.4 4.4M634.1 536.6l4.4 -4.4M638.0 531.5l4.4 4.4M638.0 535.9l4.4 -4.4M640.3 530.7l4.4 4.4M640.3 535.1l4.4 -4.4M644.2 530.4l4.4 4.4M644.2 534.8l4.4 -4.4M646.4 530.2l4.4 4.4M646.4 534.6l4.4 -4.4M650.3 529.8l4.4 4.4M650.3 534.2l4.4 -4.4M652.6 529.0l4.4 4.4M652.6 533.4l4.4 -4.4M654.8 528.7l4.4 4.4M654.8 533.1l4.4 -4.4M658.7 528.2l4.4 4.4M658.7 532.6l4.4 -4.4M661.0 527.6l4.4 4.4M661.0 532.0l4.4 -4.4M664.9 527.5l4.4 4.4M664.9 531.9l4.4 -4.4M667.9 526.9l4.4 4.4M667.9 531.3l4.4 -4.4M670.9 526.0l4.4 4.4M670.9 530.4l4.4 -4.4M673.1 525.7l4.4 4.4M673.1 530.1l4.4 -4.4M677.0 525.6l4.4 4.4M677.0 530.0l4.4 -4.4M680.9 524.4l4.4 4.4M680.9 528.8l4.4 -4.4M683.2 523.8l4.4 4.4M683.2 528.2l4.4 -4.4M685.4 524.1l4.4 4.4M685.4 528.5l4.4 -4.4M687.7 523.7l4.4 4.4M687.7 528.1l4.4 -4.4M691.6 523.0l4.4 4.4M691.6 527.4l4.4 -4.4M694.6 523.2l4.4 4.4M694.6 527.6l4.4 -4.4M698.5 522.0l4.4 4.4M698.5 526.4l4.4 -4.4M702.4 521.5l4.4 4.4M702.4 525.9l4.4 -4.4M706.3 521.1l4.4 4.4M706.3 525.5l4.4 -4.4M708.5 520.7l4.4 4.4M708.5 525.1l4.4 -4.4M711.5 520.7l4.4 4.4M711.5 525.1l4.4 -4.4M715.4 519.9l4.4 4.4M715.4 524.3l4.4 -4.4M719.3 519.1l4.4 4.4M719.3 523.5l4.4 -4.4M722.3 519.5l4.4 4.4M722.3 523.9l4.4 -4.4M725.3 518.7l4.4 4.4M725.3 523.1l4.4 -4.4M728.3 518.5l4.4 4.4M728.3 522.9l4.4 -4.4M730.6 518.3l4.4 4.4M730.6 522.7l4.4 -4.4M733.6 517.4l4.4 4.4M733.6 521.8l4.4 -4.4M737.5 517.5l4.4 4.4M737.5 521.9l4.4 -4.4M741.4 516.8l4.4 4.4M741.4 521.2l4.4 -4.4M745.3 515.8l4.4 4.4M745.3 520.2l4.4 -4.4M749.2 515.5l4.4 4.4M749.2 519.9l4.4 -4.4M752.2 515.4l4.4 4.4M752.2 519.8l4.4 -4.4M755.2 514.9l4.4 4.4M755.2 519.3l4.4 -4.4M759.1 515.0l4.4 4.4M759.1 519.4l4.4 -4.4M761.3 515.0l4.4 4.4M761.3 519.4l4.4 -4.4M764.3 514.3l4.4 4.4M764.3 518.7l4.4 -4.4M767.3 513.2l4.4 4.4M767.3 517.6l4.4 -4.4M770.3 513.8l4.4 4.4M770.3 518.2l4.4 -4.4M774.2 512.8l4.4 4.4M774.2 517.2l4.4 -4.4M777.2 512.1l4.4 4.4M777.2 516.5l4.4 -4.4M781.1 511.9l4.4 4.4M781.1 516.3l4.4 -4.4M785.0 511.7l4.4 4.4M785.0 516.1l4.4 -4.4M788.0 511.6l4.4 4.4M788.0 516.0l4.4 -4.4M791.0 510.4l4.4 4.4M791.0 514.8l4.4 -4.4M794.9 510.0l4.4 4.4M794.9 514.4l4.4 -4.4M797.9 510.3l4.4 4.4M797.9 514.7l4.4 -4.4M800.2 509.5l4.4 4.4M800.2 513.9l4.4 -4.4M804.1 509.1l4.4 4.4M804.1 513.5l4.4 -4.4M807.1 508.9l4.4 4.4M807.1 513.3l4.4 -4.4M809.3 508.6l4.4 4.4M809.3 513.0l4.4 -4.4M812.3 508.6l4.4 4.4M812.3 513.0l4.4 -4.4M815.3 507.5l4.4 4.4M815.3 511.9l4.4 -4.4M818.3 507.6l4.4 4.4M818.3 512.0l4.4 -4.4M821.3 507.2l4.4 4.4M821.3 511.6l4.4 -4.4M824.3 507.0l4.4 4.4M824.3 511.4l4.4 -4.4M827.3 506.2l4.4 4.4M827.3 510.6l4.4 -4.4M830.3 505.9l4.4 4.4M830.3 510.3l4.4 -4.4M833.3 506.7l4.4 4.4M833.3 511.1l4.4 -4.4M836.3 505.6l4.4 4.4M836.3 510.0l4.4 -4.4M838.6 504.8l4.4 4.4M838.6 509.2l4.4 -4.4M840.8 505.0l4.4 4.4M840.8 509.4l4.4 -4.4M843.8 504.4l4.4 4.4M843.8 508.8l4.4 -4.4M846.8 504.2l4.4 4.4M846.8 508.6l4.4 -4.4M849.1 504.0l4.4 4.4M849.1 508.4l4.4 -4.4M853.0 503.5l4.4 4.4M853.0 507.9l4.4 -4.4M856.0 503.0l4.4 4.4M856.0 507.4l4.4 -4.4M859.9 503.1l4.4 4.4M859.9 507.5l4.4 -4.4M862.1 502.8l4.4 4.4M862.1 507.2l4.4 -4.4M865.1 501.8l4.4 4.4M865.1 506.2l4.4 -4.4M868.1 501.7l4.4 4.4M868.1 506.1l4.4 -4.4M871.1 501.0l4.4 4.4M871.1 505.4l4.4 -4.4M875.0 500.9l4.4 4.4M875.0 505.3l4.4 -4.4M878.0 500.5l4.4 4.4M878.0 504.9l4.4 -4.4M881.9 499.4l4.4 4.4M881.9 503.8l4.4 -4.4M884.2 499.8l4.4 4.4M884.2 504.2l4.4 -4.4M888.1 499.7l4.4 4.4M888.1 504.1l4.4 -4.4M890.3 498.8l4.4 4.4M890.3 503.2l4.4 -4.4M893.3 498.6l4.4 4.4M893.3 503.0l4.4 -4.4M895.6 498.6l4.4 4.4M895.6 503.0l4.4 -4.4M899.5 498.2l4.4 4.4M899.5 502.6l4.4 -4.4M902.5 498.1l4.4 4.4M902.5 502.5l4.4 -4.4M905.5 497.4l4.4 4.4M905.5 501.8l4.4 -4.4M907.7 497.0l4.4 4.4M907.7 501.4l4.4 -4.4M910.7 496.7l4.4 4.4M910.7 501.1l4.4 -4.4M913.0 496.3l4.4 4.4M913.0 500.7l4.4 -4.4M915.2 496.1l4.4 4.4M915.2 500.5l4.4 -4.4M919.1 496.0l4.4 4.4M919.1 500.4l4.4 -4.4M921.4 495.6l4.4 4.4M921.4 500.0l4.4 -4.4M923.6 495.3l4.4 4.4M923.6 499.7l4.4 -4.4M926.6 494.7l4.4 4.4M926.6 499.1l4.4 -4.4M930.5 494.1l4.4 4.4M930.5 498.5l4.4 -4.4M932.8 493.8l4.4 4.4M932.8 498.2l4.4 -4.4M936.7 493.7l4.4 4.4M936.7 498.1l4.4 -4.4M938.9 493.2l4.4 4.4M938.9 497.6l4.4 -4.4M942.8 493.1l4.4 4.4M942.8 497.5l4.4 -4.4M945.8 492.8l4.4 4.4M945.8 497.2l4.4 -4.4M948.1 491.7l4.4 4.4M948.1 496.1l4.4 -4.4M952.0 491.9l4.4 4.4M952.0 496.3l4.4 -4.4M954.2 491.4l4.4 4.4M954.2 495.8l4.4 -4.4M957.2 491.5l4.4 4.4M957.2 495.9l4.4 -4.4M960.2 490.9l4.4 4.4M960.2 495.3l4.4 -4.4M963.2 490.7l4.4 4.4M963.2 495.1l4.4 -4.4M967.1 489.4l4.4 4.4M967.1 493.8l4.4 -4.4M969.4 489.7l4.4 4.4M969.4 494.1l4.4 -4.4M972.4 489.3l4.4 4.4M972.4 493.7l4.4 -4.4M975.4 489.4l4.4 4.4M975.4 493.8l4.4 -4.4M978.4 488.6l4.4 4.4M978.4 493.0l4.4 -4.4M981.4 488.3l4.4 4.4M981.4 492.7l4.4 -4.4M984.4 488.6l4.4 4.4M984.4 493.0l4.4 -4.4M988.3 487.6l4.4 4.4M988.3 492.0l4.4 -4.4M991.3 487.4l4.4 4.4M991.3 491.8l4.4 -4.4M994.3 486.9l4.4 4.4M994.3 491.3l4.4 -4.4M996.5 487.0l4.4 4.4M996.5 491.4l4.4 -4.4M999.5 486.3l4.4 4.4M999.5 490.7l4.4 -4.4M1002.5 486.1l4.4 4.4M1002.5 490.5l4.4 -4.4M1005.5 485.6l4.4 4.4M1005.5 490.0l4.4 -4.4M1009.4 485.4l4.4 4.4M1009.4 489.8l4.4 -4.4M1011.7 485.3l4.4 4.4M1011.7 489.7l4.4 -4.4M1014.7 485.1l4.4 4.4M1014.7 489.5l4.4 -4.4M1018.6 484.4l4.4 4.4M1018.6 488.8l4.4 -4.4M1021.6 483.9l4.4 4.4M1021.6 488.3l4.4 -4.4M1024.6 483.5l4.4 4.4M1024.6 487.9l4.4 -4.4M1027.6 483.4l4.4 4.4M1027.6 487.8l4.4 -4.4M1030.6 483.2l4.4 4.4M1030.6 487.6l4.4 -4.4M1033.6 482.8l4.4 4.4M1033.6 487.2l4.4 -4.4M1035.8 482.8l4.4 4.4M1035.8 487.2l4.4 -4.4M1038.8 481.4l4.4 4.4M1038.8 485.8l4.4 -4.4M1041.1 481.5l4.4 4.4M1041.1 485.9l4.4 -4.4M1044.1 481.6l4.4 4.4M1044.1 486.0l4.4 -4.4M1048.0 481.6l4.4 4.4M1048.0 486.0l4.4 -4.4M1051.0 480.7l4.4 4.4M1051.0 485.1l4.4 -4.4M1054.0 480.4l4.4 4.4M1054.0 484.8l4.4 -4.4M1057.9 480.0l4.4 4.4M1057.9 484.4l4.4 -4.4M1060.9 479.6l4.4 4.4M1060.9 484.0l4.4 -4.4M1063.9 479.5l4.4 4.4M1063.9 483.9l4.4 -4.4M1066.9 478.9l4.4 4.4M1066.9 483.3l4.4 -4.4M1069.1 478.5l4.4 4.4M1069.1 482.9l4.4 -4.4M1071.4 478.9l4.4 4.4M1071.4 483.3l4.4 -4.4M1074.4 477.8l4.4 4.4M1074.4 482.2l4.4 -4.4M1077.4 477.9l4.4 4.4M1077.4 482.3l4.4 -4.4M1080.4 477.9l4.4 4.4M1080.4 482.3l4.4 -4.4M1083.4 477.2l4.4 4.4M1083.4 481.6l4.4 -4.4M1087.3 476.8l4.4 4.4M1087.3 481.2l4.4 -4.4M1089.5 476.2l4.4 4.4M1089.5 480.6l4.4 -4.4M1092.5 476.1l4.4 4.4M1092.5 480.5l4.4 -4.4M1096.4 476.0l4.4 4.4M1096.4 480.4l4.4 -4.4" stroke="#7af02a" stroke-width="1.3" fill="none" stroke-opacity="1"/><path d="M405.7 814.7a2.15 2.15 0 1 0 4.3 0a2.15 2.15 0 1 0 -4.3 0M414.8 749.8a2.15 2.15 0 1 0 4.3 0a2.15 2.15 0 1 0 -4.3 0M420.9 729.7a2.15 2.15 0 1 0 4.3 0a2.15 2.15 0 1 0 -4.3 0M425.8 702.7a2.15 2.15 0 1 0 4.3 0a2.15 2.15 0 1 0 -4.3 0M430.7 689.7a2.15 2.15 0 1 0 4.3 0a2.15 2.15 0 1 0 -4.3 0M435.6 683.9a2.15 2.15 0 1 0 4.3 0a2.15 2.15 0 1 0 -4.3 0M443.7 684.9a2.15 2.15 0 1 0 4.3 0a2.15 2.15 0 1 0 -4.3 0M438.3 680.2a2.15 2.15 0 1 0 4.3 0a2.15 2.15 0 1 0 -4.3 0M442.4 676.4a2.15 2.15 0 1 0 4.3 0a2.15 2.15 0 1 0 -4.3 0M446.3 672.3a2.15 2.15 0 1 0 4.3 0a2.15 2.15 0 1 0 -4.3 0M450.0 667.0a2.15 2.15 0 1 0 4.3 0a2.15 2.15 0 1 0 -4.3 0M453.6 664.6a2.15 2.15 0 1 0 4.3 0a2.15 2.15 0 1 0 -4.3 0M456.9 659.7a2.15 2.15 0 1 0 4.3 0a2.15 2.15 0 1 0 -4.3 0M460.1 655.8a2.15 2.15 0 1 0 4.3 0a2.15 2.15 0 1 0 -4.3 0M463.2 651.9a2.15 2.15 0 1 0 4.3 0a2.15 2.15 0 1 0 -4.3 0M466.2 647.4a2.15 2.15 0 1 0 4.3 0a2.15 2.15 0 1 0 -4.3 0M469.0 646.3a2.15 2.15 0 1 0 4.3 0a2.15 2.15 0 1 0 -4.3 0M471.7 641.6a2.15 2.15 0 1 0 4.3 0a2.15 2.15 0 1 0 -4.3 0M474.3 642.2a2.15 2.15 0 1 0 4.3 0a2.15 2.15 0 1 0 -4.3 0M476.8 635.1a2.15 2.15 0 1 0 4.3 0a2.15 2.15 0 1 0 -4.3 0M479.3 634.5a2.15 2.15 0 1 0 4.3 0a2.15 2.15 0 1 0 -4.3 0M481.6 631.2a2.15 2.15 0 1 0 4.3 0a2.15 2.15 0 1 0 -4.3 0M483.9 628.1a2.15 2.15 0 1 0 4.3 0a2.15 2.15 0 1 0 -4.3 0M486.2 627.6a2.15 2.15 0 1 0 4.3 0a2.15 2.15 0 1 0 -4.3 0M488.5 624.4a2.15 2.15 0 1 0 4.3 0a2.15 2.15 0 1 0 -4.3 0M490.8 618.9a2.15 2.15 0 1 0 4.3 0a2.15 2.15 0 1 0 -4.3 0M493.1 618.5a2.15 2.15 0 1 0 4.3 0a2.15 2.15 0 1 0 -4.3 0M495.4 613.7a2.15 2.15 0 1 0 4.3 0a2.15 2.15 0 1 0 -4.3 0M497.7 613.1a2.15 2.15 0 1 0 4.3 0a2.15 2.15 0 1 0 -4.3 0M500.0 609.1a2.15 2.15 0 1 0 4.3 0a2.15 2.15 0 1 0 -4.3 0M502.3 608.7a2.15 2.15 0 1 0 4.3 0a2.15 2.15 0 1 0 -4.3 0M504.6 605.8a2.15 2.15 0 1 0 4.3 0a2.15 2.15 0 1 0 -4.3 0M506.9 601.8a2.15 2.15 0 1 0 4.3 0a2.15 2.15 0 1 0 -4.3 0M509.2 599.7a2.15 2.15 0 1 0 4.3 0a2.15 2.15 0 1 0 -4.3 0M511.5 597.3a2.15 2.15 0 1 0 4.3 0a2.15 2.15 0 1 0 -4.3 0M513.8 594.0a2.15 2.15 0 1 0 4.3 0a2.15 2.15 0 1 0 -4.3 0M516.1 592.1a2.15 2.15 0 1 0 4.3 0a2.15 2.15 0 1 0 -4.3 0M518.4 590.1a2.15 2.15 0 1 0 4.3 0a2.15 2.15 0 1 0 -4.3 0M520.7 586.6a2.15 2.15 0 1 0 4.3 0a2.15 2.15 0 1 0 -4.3 0M523.0 584.2a2.15 2.15 0 1 0 4.3 0a2.15 2.15 0 1 0 -4.3 0M525.3 581.6a2.15 2.15 0 1 0 4.3 0a2.15 2.15 0 1 0 -4.3 0M527.6 581.1a2.15 2.15 0 1 0 4.3 0a2.15 2.15 0 1 0 -4.3 0M529.9 577.4a2.15 2.15 0 1 0 4.3 0a2.15 2.15 0 1 0 -4.3 0M532.2 574.7a2.15 2.15 0 1 0 4.3 0a2.15 2.15 0 1 0 -4.3 0M534.5 574.1a2.15 2.15 0 1 0 4.3 0a2.15 2.15 0 1 0 -4.3 0M536.8 569.1a2.15 2.15 0 1 0 4.3 0a2.15 2.15 0 1 0 -4.3 0M539.1 567.5a2.15 2.15 0 1 0 4.3 0a2.15 2.15 0 1 0 -4.3 0M541.4 567.7a2.15 2.15 0 1 0 4.3 0a2.15 2.15 0 1 0 -4.3 0M543.7 561.9a2.15 2.15 0 1 0 4.3 0a2.15 2.15 0 1 0 -4.3 0M546.0 559.1a2.15 2.15 0 1 0 4.3 0a2.15 2.15 0 1 0 -4.3 0M548.3 558.3a2.15 2.15 0 1 0 4.3 0a2.15 2.15 0 1 0 -4.3 0M551.0 558.0a2.15 2.15 0 1 0 4.3 0a2.15 2.15 0 1 0 -4.3 0M553.3 558.9a2.15 2.15 0 1 0 4.3 0a2.15 2.15 0 1 0 -4.3 0M555.6 561.4a2.15 2.15 0 1 0 4.3 0a2.15 2.15 0 1 0 -4.3 0M557.9 565.3a2.15 2.15 0 1 0 4.3 0a2.15 2.15 0 1 0 -4.3 0M560.2 569.3a2.15 2.15 0 1 0 4.3 0a2.15 2.15 0 1 0 -4.3 0M562.5 571.6a2.15 2.15 0 1 0 4.3 0a2.15 2.15 0 1 0 -4.3 0M564.8 575.7a2.15 2.15 0 1 0 4.3 0a2.15 2.15 0 1 0 -4.3 0M567.1 579.7a2.15 2.15 0 1 0 4.3 0a2.15 2.15 0 1 0 -4.3 0M569.4 587.7a2.15 2.15 0 1 0 4.3 0a2.15 2.15 0 1 0 -4.3 0M571.7 593.2a2.15 2.15 0 1 0 4.3 0a2.15 2.15 0 1 0 -4.3 0M574.0 600.4a2.15 2.15 0 1 0 4.3 0a2.15 2.15 0 1 0 -4.3 0M576.3 606.6a2.15 2.15 0 1 0 4.3 0a2.15 2.15 0 1 0 -4.3 0M578.6 610.9a2.15 2.15 0 1 0 4.3 0a2.15 2.15 0 1 0 -4.3 0M580.9 616.1a2.15 2.15 0 1 0 4.3 0a2.15 2.15 0 1 0 -4.3 0M583.2 622.0a2.15 2.15 0 1 0 4.3 0a2.15 2.15 0 1 0 -4.3 0M585.5 624.1a2.15 2.15 0 1 0 4.3 0a2.15 2.15 0 1 0 -4.3 0M587.8 627.6a2.15 2.15 0 1 0 4.3 0a2.15 2.15 0 1 0 -4.3 0M590.1 630.6a2.15 2.15 0 1 0 4.3 0a2.15 2.15 0 1 0 -4.3 0M592.4 633.6a2.15 2.15 0 1 0 4.3 0a2.15 2.15 0 1 0 -4.3 0M594.7 636.2a2.15 2.15 0 1 0 4.3 0a2.15 2.15 0 1 0 -4.3 0M597.0 638.7a2.15 2.15 0 1 0 4.3 0a2.15 2.15 0 1 0 -4.3 0M599.3 640.9a2.15 2.15 0 1 0 4.3 0a2.15 2.15 0 1 0 -4.3 0M601.6 642.7a2.15 2.15 0 1 0 4.3 0a2.15 2.15 0 1 0 -4.3 0M603.9 645.2a2.15 2.15 0 1 0 4.3 0a2.15 2.15 0 1 0 -4.3 0M606.2 645.4a2.15 2.15 0 1 0 4.3 0a2.15 2.15 0 1 0 -4.3 0M608.5 646.4a2.15 2.15 0 1 0 4.3 0a2.15 2.15 0 1 0 -4.3 0M610.8 647.0a2.15 2.15 0 1 0 4.3 0a2.15 2.15 0 1 0 -4.3 0M613.9 646.6a2.15 2.15 0 1 0 4.3 0a2.15 2.15 0 1 0 -4.3 0M616.9 649.6a2.15 2.15 0 1 0 4.3 0a2.15 2.15 0 1 0 -4.3 0M619.9 649.1a2.15 2.15 0 1 0 4.3 0a2.15 2.15 0 1 0 -4.3 0M622.9 648.6a2.15 2.15 0 1 0 4.3 0a2.15 2.15 0 1 0 -4.3 0M625.9 648.7a2.15 2.15 0 1 0 4.3 0a2.15 2.15 0 1 0 -4.3 0M628.9 650.8a2.15 2.15 0 1 0 4.3 0a2.15 2.15 0 1 0 -4.3 0M631.9 652.2a2.15 2.15 0 1 0 4.3 0a2.15 2.15 0 1 0 -4.3 0M634.9 654.0a2.15 2.15 0 1 0 4.3 0a2.15 2.15 0 1 0 -4.3 0M637.9 653.2a2.15 2.15 0 1 0 4.3 0a2.15 2.15 0 1 0 -4.3 0M642.9 659.3a2.15 2.15 0 1 0 4.3 0a2.15 2.15 0 1 0 -4.3 0M645.9 661.3a2.15 2.15 0 1 0 4.3 0a2.15 2.15 0 1 0 -4.3 0M648.9 661.8a2.15 2.15 0 1 0 4.3 0a2.15 2.15 0 1 0 -4.3 0M651.9 658.2a2.15 2.15 0 1 0 4.3 0a2.15 2.15 0 1 0 -4.3 0M654.9 662.6a2.15 2.15 0 1 0 4.3 0a2.15 2.15 0 1 0 -4.3 0M657.9 660.1a2.15 2.15 0 1 0 4.3 0a2.15 2.15 0 1 0 -4.3 0M660.9 660.1a2.15 2.15 0 1 0 4.3 0a2.15 2.15 0 1 0 -4.3 0M663.9 661.1a2.15 2.15 0 1 0 4.3 0a2.15 2.15 0 1 0 -4.3 0M666.9 661.0a2.15 2.15 0 1 0 4.3 0a2.15 2.15 0 1 0 -4.3 0M669.9 660.0a2.15 2.15 0 1 0 4.3 0a2.15 2.15 0 1 0 -4.3 0M672.9 661.4a2.15 2.15 0 1 0 4.3 0a2.15 2.15 0 1 0 -4.3 0M675.9 660.0a2.15 2.15 0 1 0 4.3 0a2.15 2.15 0 1 0 -4.3 0M678.9 659.6a2.15 2.15 0 1 0 4.3 0a2.15 2.15 0 1 0 -4.3 0M681.9 659.3a2.15 2.15 0 1 0 4.3 0a2.15 2.15 0 1 0 -4.3 0M684.9 661.4a2.15 2.15 0 1 0 4.3 0a2.15 2.15 0 1 0 -4.3 0M687.9 662.3a2.15 2.15 0 1 0 4.3 0a2.15 2.15 0 1 0 -4.3 0M690.9 660.7a2.15 2.15 0 1 0 4.3 0a2.15 2.15 0 1 0 -4.3 0M693.9 664.8a2.15 2.15 0 1 0 4.3 0a2.15 2.15 0 1 0 -4.3 0M696.9 662.0a2.15 2.15 0 1 0 4.3 0a2.15 2.15 0 1 0 -4.3 0M699.9 661.3a2.15 2.15 0 1 0 4.3 0a2.15 2.15 0 1 0 -4.3 0M702.9 660.8a2.15 2.15 0 1 0 4.3 0a2.15 2.15 0 1 0 -4.3 0M705.9 662.3a2.15 2.15 0 1 0 4.3 0a2.15 2.15 0 1 0 -4.3 0M708.9 659.4a2.15 2.15 0 1 0 4.3 0a2.15 2.15 0 1 0 -4.3 0M711.9 662.8a2.15 2.15 0 1 0 4.3 0a2.15 2.15 0 1 0 -4.3 0M714.9 659.9a2.15 2.15 0 1 0 4.3 0a2.15 2.15 0 1 0 -4.3 0M717.9 659.1a2.15 2.15 0 1 0 4.3 0a2.15 2.15 0 1 0 -4.3 0M720.9 659.1a2.15 2.15 0 1 0 4.3 0a2.15 2.15 0 1 0 -4.3 0M723.9 661.7a2.15 2.15 0 1 0 4.3 0a2.15 2.15 0 1 0 -4.3 0M726.9 661.2a2.15 2.15 0 1 0 4.3 0a2.15 2.15 0 1 0 -4.3 0M729.9 661.3a2.15 2.15 0 1 0 4.3 0a2.15 2.15 0 1 0 -4.3 0M732.9 661.3a2.15 2.15 0 1 0 4.3 0a2.15 2.15 0 1 0 -4.3 0M735.9 661.2a2.15 2.15 0 1 0 4.3 0a2.15 2.15 0 1 0 -4.3 0M738.9 661.6a2.15 2.15 0 1 0 4.3 0a2.15 2.15 0 1 0 -4.3 0M741.9 662.3a2.15 2.15 0 1 0 4.3 0a2.15 2.15 0 1 0 -4.3 0M744.9 662.1a2.15 2.15 0 1 0 4.3 0a2.15 2.15 0 1 0 -4.3 0M747.9 661.5a2.15 2.15 0 1 0 4.3 0a2.15 2.15 0 1 0 -4.3 0M750.9 661.7a2.15 2.15 0 1 0 4.3 0a2.15 2.15 0 1 0 -4.3 0M753.9 664.6a2.15 2.15 0 1 0 4.3 0a2.15 2.15 0 1 0 -4.3 0M756.9 660.5a2.15 2.15 0 1 0 4.3 0a2.15 2.15 0 1 0 -4.3 0M759.9 661.9a2.15 2.15 0 1 0 4.3 0a2.15 2.15 0 1 0 -4.3 0M762.9 661.0a2.15 2.15 0 1 0 4.3 0a2.15 2.15 0 1 0 -4.3 0M765.9 658.5a2.15 2.15 0 1 0 4.3 0a2.15 2.15 0 1 0 -4.3 0M768.9 659.6a2.15 2.15 0 1 0 4.3 0a2.15 2.15 0 1 0 -4.3 0M771.9 659.8a2.15 2.15 0 1 0 4.3 0a2.15 2.15 0 1 0 -4.3 0M774.9 662.1a2.15 2.15 0 1 0 4.3 0a2.15 2.15 0 1 0 -4.3 0M777.9 664.0a2.15 2.15 0 1 0 4.3 0a2.15 2.15 0 1 0 -4.3 0M780.9 659.3a2.15 2.15 0 1 0 4.3 0a2.15 2.15 0 1 0 -4.3 0M783.9 660.4a2.15 2.15 0 1 0 4.3 0a2.15 2.15 0 1 0 -4.3 0M786.9 661.0a2.15 2.15 0 1 0 4.3 0a2.15 2.15 0 1 0 -4.3 0M789.9 661.3a2.15 2.15 0 1 0 4.3 0a2.15 2.15 0 1 0 -4.3 0M792.9 659.1a2.15 2.15 0 1 0 4.3 0a2.15 2.15 0 1 0 -4.3 0M795.9 661.2a2.15 2.15 0 1 0 4.3 0a2.15 2.15 0 1 0 -4.3 0M798.9 663.2a2.15 2.15 0 1 0 4.3 0a2.15 2.15 0 1 0 -4.3 0M801.9 661.2a2.15 2.15 0 1 0 4.3 0a2.15 2.15 0 1 0 -4.3 0M804.9 660.6a2.15 2.15 0 1 0 4.3 0a2.15 2.15 0 1 0 -4.3 0M807.9 660.2a2.15 2.15 0 1 0 4.3 0a2.15 2.15 0 1 0 -4.3 0M810.9 662.8a2.15 2.15 0 1 0 4.3 0a2.15 2.15 0 1 0 -4.3 0M813.9 659.5a2.15 2.15 0 1 0 4.3 0a2.15 2.15 0 1 0 -4.3 0M816.9 663.9a2.15 2.15 0 1 0 4.3 0a2.15 2.15 0 1 0 -4.3 0M819.9 661.0a2.15 2.15 0 1 0 4.3 0a2.15 2.15 0 1 0 -4.3 0M822.9 663.2a2.15 2.15 0 1 0 4.3 0a2.15 2.15 0 1 0 -4.3 0M825.9 661.8a2.15 2.15 0 1 0 4.3 0a2.15 2.15 0 1 0 -4.3 0M828.9 661.3a2.15 2.15 0 1 0 4.3 0a2.15 2.15 0 1 0 -4.3 0M831.9 661.1a2.15 2.15 0 1 0 4.3 0a2.15 2.15 0 1 0 -4.3 0M834.9 662.4a2.15 2.15 0 1 0 4.3 0a2.15 2.15 0 1 0 -4.3 0M837.9 657.8a2.15 2.15 0 1 0 4.3 0a2.15 2.15 0 1 0 -4.3 0M840.9 660.5a2.15 2.15 0 1 0 4.3 0a2.15 2.15 0 1 0 -4.3 0M843.9 658.9a2.15 2.15 0 1 0 4.3 0a2.15 2.15 0 1 0 -4.3 0M846.9 663.7a2.15 2.15 0 1 0 4.3 0a2.15 2.15 0 1 0 -4.3 0M849.9 663.5a2.15 2.15 0 1 0 4.3 0a2.15 2.15 0 1 0 -4.3 0M852.9 664.8a2.15 2.15 0 1 0 4.3 0a2.15 2.15 0 1 0 -4.3 0M855.9 661.0a2.15 2.15 0 1 0 4.3 0a2.15 2.15 0 1 0 -4.3 0M858.9 662.8a2.15 2.15 0 1 0 4.3 0a2.15 2.15 0 1 0 -4.3 0M861.9 661.2a2.15 2.15 0 1 0 4.3 0a2.15 2.15 0 1 0 -4.3 0M864.9 664.7a2.15 2.15 0 1 0 4.3 0a2.15 2.15 0 1 0 -4.3 0M867.9 661.7a2.15 2.15 0 1 0 4.3 0a2.15 2.15 0 1 0 -4.3 0M870.9 662.1a2.15 2.15 0 1 0 4.3 0a2.15 2.15 0 1 0 -4.3 0M873.9 663.5a2.15 2.15 0 1 0 4.3 0a2.15 2.15 0 1 0 -4.3 0M876.9 661.9a2.15 2.15 0 1 0 4.3 0a2.15 2.15 0 1 0 -4.3 0M879.9 660.5a2.15 2.15 0 1 0 4.3 0a2.15 2.15 0 1 0 -4.3 0M882.9 660.7a2.15 2.15 0 1 0 4.3 0a2.15 2.15 0 1 0 -4.3 0M885.9 660.5a2.15 2.15 0 1 0 4.3 0a2.15 2.15 0 1 0 -4.3 0M888.9 659.9a2.15 2.15 0 1 0 4.3 0a2.15 2.15 0 1 0 -4.3 0M891.9 661.9a2.15 2.15 0 1 0 4.3 0a2.15 2.15 0 1 0 -4.3 0M894.9 659.8a2.15 2.15 0 1 0 4.3 0a2.15 2.15 0 1 0 -4.3 0M900.9 660.9a2.15 2.15 0 1 0 4.3 0a2.15 2.15 0 1 0 -4.3 0M905.1 654.0a2.15 2.15 0 1 0 4.3 0a2.15 2.15 0 1 0 -4.3 0M909.3 667.0a2.15 2.15 0 1 0 4.3 0a2.15 2.15 0 1 0 -4.3 0M913.5 658.6a2.15 2.15 0 1 0 4.3 0a2.15 2.15 0 1 0 -4.3 0M917.7 663.3a2.15 2.15 0 1 0 4.3 0a2.15 2.15 0 1 0 -4.3 0M921.9 656.0a2.15 2.15 0 1 0 4.3 0a2.15 2.15 0 1 0 -4.3 0M926.1 656.2a2.15 2.15 0 1 0 4.3 0a2.15 2.15 0 1 0 -4.3 0M930.3 654.6a2.15 2.15 0 1 0 4.3 0a2.15 2.15 0 1 0 -4.3 0M934.5 658.3a2.15 2.15 0 1 0 4.3 0a2.15 2.15 0 1 0 -4.3 0M938.7 662.2a2.15 2.15 0 1 0 4.3 0a2.15 2.15 0 1 0 -4.3 0M942.9 653.2a2.15 2.15 0 1 0 4.3 0a2.15 2.15 0 1 0 -4.3 0M947.1 663.4a2.15 2.15 0 1 0 4.3 0a2.15 2.15 0 1 0 -4.3 0M951.3 661.2a2.15 2.15 0 1 0 4.3 0a2.15 2.15 0 1 0 -4.3 0M955.5 657.5a2.15 2.15 0 1 0 4.3 0a2.15 2.15 0 1 0 -4.3 0M959.7 665.4a2.15 2.15 0 1 0 4.3 0a2.15 2.15 0 1 0 -4.3 0M963.9 642.0a2.15 2.15 0 1 0 4.3 0a2.15 2.15 0 1 0 -4.3 0M968.1 647.7a2.15 2.15 0 1 0 4.3 0a2.15 2.15 0 1 0 -4.3 0M972.3 654.3a2.15 2.15 0 1 0 4.3 0a2.15 2.15 0 1 0 -4.3 0M976.5 640.7a2.15 2.15 0 1 0 4.3 0a2.15 2.15 0 1 0 -4.3 0M980.7 638.9a2.15 2.15 0 1 0 4.3 0a2.15 2.15 0 1 0 -4.3 0M984.9 641.4a2.15 2.15 0 1 0 4.3 0a2.15 2.15 0 1 0 -4.3 0M989.1 643.3a2.15 2.15 0 1 0 4.3 0a2.15 2.15 0 1 0 -4.3 0M993.3 635.5a2.15 2.15 0 1 0 4.3 0a2.15 2.15 0 1 0 -4.3 0M997.5 642.9a2.15 2.15 0 1 0 4.3 0a2.15 2.15 0 1 0 -4.3 0M1001.7 642.0a2.15 2.15 0 1 0 4.3 0a2.15 2.15 0 1 0 -4.3 0M1005.9 640.5a2.15 2.15 0 1 0 4.3 0a2.15 2.15 0 1 0 -4.3 0M1010.1 638.9a2.15 2.15 0 1 0 4.3 0a2.15 2.15 0 1 0 -4.3 0M1014.3 634.9a2.15 2.15 0 1 0 4.3 0a2.15 2.15 0 1 0 -4.3 0M1018.5 636.4a2.15 2.15 0 1 0 4.3 0a2.15 2.15 0 1 0 -4.3 0M1022.7 629.7a2.15 2.15 0 1 0 4.3 0a2.15 2.15 0 1 0 -4.3 0M1026.9 630.3a2.15 2.15 0 1 0 4.3 0a2.15 2.15 0 1 0 -4.3 0M1031.1 629.4a2.15 2.15 0 1 0 4.3 0a2.15 2.15 0 1 0 -4.3 0M1035.3 634.7a2.15 2.15 0 1 0 4.3 0a2.15 2.15 0 1 0 -4.3 0M1039.5 623.1a2.15 2.15 0 1 0 4.3 0a2.15 2.15 0 1 0 -4.3 0M1043.7 627.3a2.15 2.15 0 1 0 4.3 0a2.15 2.15 0 1 0 -4.3 0M1047.9 632.0a2.15 2.15 0 1 0 4.3 0a2.15 2.15 0 1 0 -4.3 0M1052.1 623.0a2.15 2.15 0 1 0 4.3 0a2.15 2.15 0 1 0 -4.3 0M1056.3 630.7a2.15 2.15 0 1 0 4.3 0a2.15 2.15 0 1 0 -4.3 0M1060.5 619.0a2.15 2.15 0 1 0 4.3 0a2.15 2.15 0 1 0 -4.3 0M1064.7 620.1a2.15 2.15 0 1 0 4.3 0a2.15 2.15 0 1 0 -4.3 0M1068.9 631.7a2.15 2.15 0 1 0 4.3 0a2.15 2.15 0 1 0 -4.3 0M1073.1 623.0a2.15 2.15 0 1 0 4.3 0a2.15 2.15 0 1 0 -4.3 0M1077.3 626.8a2.15 2.15 0 1 0 4.3 0a2.15 2.15 0 1 0 -4.3 0M1081.5 620.9a2.15 2.15 0 1 0 4.3 0a2.15 2.15 0 1 0 -4.3 0M1085.7 618.5a2.15 2.15 0 1 0 4.3 0a2.15 2.15 0 1 0 -4.3 0M1089.9 625.7a2.15 2.15 0 1 0 4.3 0a2.15 2.15 0 1 0 -4.3 0M1094.1 620.8a2.15 2.15 0 1 0 4.3 0a2.15 2.15 0 1 0 -4.3 0" stroke="#7af02a" stroke-width="1.3" fill="none" stroke-opacity="0.7"/><path d="M328.6 832.7l4.4 4.4M328.6 837.1l4.4 -4.4M345.5 797.8l4.4 4.4M345.5 802.2l4.4 -4.4M359.8 778.8l4.4 4.4M359.8 783.2l4.4 -4.4M371.5 756.7l4.4 4.4M371.5 761.1l4.4 -4.4M376.7 753.1l4.4 4.4M376.7 757.5l4.4 -4.4M381.6 743.7l4.4 4.4M381.6 748.1l4.4 -4.4M405.6 742.8l4.4 4.4M405.6 747.2l4.4 -4.4M408.5 712.8l4.4 4.4M408.5 717.2l4.4 -4.4M423.8 712.8l4.4 4.4M423.8 717.2l4.4 -4.4M425.7 691.4l4.4 4.4M425.7 695.8l4.4 -4.4M441.6 689.8l4.4 4.4M441.6 694.2l4.4 -4.4M444.3 685.0l4.4 4.4M444.3 689.4l4.4 -4.4M446.3 683.4l4.4 4.4M446.3 687.8l4.4 -4.4M448.2 682.7l4.4 4.4M448.2 687.1l4.4 -4.4M450.0 680.3l4.4 4.4M450.0 684.7l4.4 -4.4M453.5 674.2l4.4 4.4M453.5 678.6l4.4 -4.4M456.9 673.3l4.4 4.4M456.9 677.7l4.4 -4.4M460.1 667.0l4.4 4.4M460.1 671.4l4.4 -4.4M463.2 663.6l4.4 4.4M463.2 668.0l4.4 -4.4M466.1 661.2l4.4 4.4M466.1 665.6l4.4 -4.4M468.9 659.5l4.4 4.4M468.9 663.9l4.4 -4.4M471.7 652.4l4.4 4.4M471.7 656.8l4.4 -4.4M474.3 650.0l4.4 4.4M474.3 654.4l4.4 -4.4M476.8 646.4l4.4 4.4M476.8 650.8l4.4 -4.4M479.2 643.3l4.4 4.4M479.2 647.7l4.4 -4.4M481.6 643.6l4.4 4.4M481.6 648.0l4.4 -4.4M483.9 637.0l4.4 4.4M483.9 641.4l4.4 -4.4M486.1 636.5l4.4 4.4M486.1 640.9l4.4 -4.4M488.2 631.1l4.4 4.4M488.2 635.5l4.4 -4.4M490.3 631.1l4.4 4.4M490.3 635.5l4.4 -4.4M492.3 623.9l4.4 4.4M492.3 628.3l4.4 -4.4M494.3 624.9l4.4 4.4M494.3 629.3l4.4 -4.4M496.2 621.0l4.4 4.4M496.2 625.4l4.4 -4.4M498.0 617.0l4.4 4.4M498.0 621.4l4.4 -4.4M499.8 615.6l4.4 4.4M499.8 620.0l4.4 -4.4M501.6 613.5l4.4 4.4M501.6 617.9l4.4 -4.4M503.4 610.1l4.4 4.4M503.4 614.5l4.4 -4.4M505.2 606.8l4.4 4.4M505.2 611.2l4.4 -4.4M507.0 606.3l4.4 4.4M507.0 610.7l4.4 -4.4M508.8 603.2l4.4 4.4M508.8 607.6l4.4 -4.4M510.6 600.9l4.4 4.4M510.6 605.3l4.4 -4.4M512.4 599.8l4.4 4.4M512.4 604.2l4.4 -4.4M514.2 593.8l4.4 4.4M514.2 598.2l4.4 -4.4M516.0 593.6l4.4 4.4M516.0 598.0l4.4 -4.4M517.8 592.1l4.4 4.4M517.8 596.5l4.4 -4.4M519.6 588.7l4.4 4.4M519.6 593.1l4.4 -4.4M521.4 587.5l4.4 4.4M521.4 591.9l4.4 -4.4M523.2 586.1l4.4 4.4M523.2 590.5l4.4 -4.4M525.0 580.4l4.4 4.4M525.0 584.8l4.4 -4.4M526.8 581.8l4.4 4.4M526.8 586.2l4.4 -4.4M528.6 579.7l4.4 4.4M528.6 584.1l4.4 -4.4M530.4 574.6l4.4 4.4M530.4 579.0l4.4 -4.4M532.2 572.6l4.4 4.4M532.2 577.0l4.4 -4.4M534.0 568.9l4.4 4.4M534.0 573.3l4.4 -4.4M535.8 570.0l4.4 4.4M535.8 574.4l4.4 -4.4M537.6 567.0l4.4 4.4M537.6 571.4l4.4 -4.4M539.4 563.4l4.4 4.4M539.4 567.8l4.4 -4.4M541.2 561.8l4.4 4.4M541.2 566.2l4.4 -4.4M543.0 558.7l4.4 4.4M543.0 563.1l4.4 -4.4M544.8 557.7l4.4 4.4M544.8 562.1l4.4 -4.4M546.6 554.2l4.4 4.4M546.6 558.6l4.4 -4.4M548.4 552.1l4.4 4.4M548.4 556.5l4.4 -4.4M550.2 549.5l4.4 4.4M550.2 553.9l4.4 -4.4M552.0 552.7l4.4 4.4M552.0 557.1l4.4 -4.4M553.8 544.3l4.4 4.4M553.8 548.7l4.4 -4.4M555.6 546.7l4.4 4.4M555.6 551.1l4.4 -4.4M557.4 544.4l4.4 4.4M557.4 548.8l4.4 -4.4M559.2 543.2l4.4 4.4M559.2 547.6l4.4 -4.4M561.0 543.8l4.4 4.4M561.0 548.2l4.4 -4.4M562.8 541.5l4.4 4.4M562.8 545.9l4.4 -4.4M564.6 542.6l4.4 4.4M564.6 547.0l4.4 -4.4M566.4 539.5l4.4 4.4M566.4 543.9l4.4 -4.4M568.2 541.4l4.4 4.4M568.2 545.8l4.4 -4.4M570.0 539.4l4.4 4.4M570.0 543.8l4.4 -4.4M571.8 539.4l4.4 4.4M571.8 543.8l4.4 -4.4M573.6 538.3l4.4 4.4M573.6 542.7l4.4 -4.4M575.4 534.7l4.4 4.4M575.4 539.1l4.4 -4.4M577.2 533.8l4.4 4.4M577.2 538.2l4.4 -4.4M579.0 534.8l4.4 4.4M579.0 539.2l4.4 -4.4M580.8 534.0l4.4 4.4M580.8 538.4l4.4 -4.4M582.6 535.9l4.4 4.4M582.6 540.3l4.4 -4.4M585.3 532.9l4.4 4.4M585.3 537.3l4.4 -4.4M587.5 532.7l4.4 4.4M587.5 537.1l4.4 -4.4M589.8 531.9l4.4 4.4M589.8 536.3l4.4 -4.4M592.0 531.5l4.4 4.4M592.0 535.9l4.4 -4.4M595.9 530.7l4.4 4.4M595.9 535.1l4.4 -4.4M598.9 530.7l4.4 4.4M598.9 535.1l4.4 -4.4M601.9 529.2l4.4 4.4M601.9 533.6l4.4 -4.4M604.9 529.0l4.4 4.4M604.9 533.4l4.4 -4.4M607.9 528.6l4.4 4.4M607.9 533.0l4.4 -4.4M610.2 528.3l4.4 4.4M610.2 532.7l4.4 -4.4M614.1 527.4l4.4 4.4M614.1 531.8l4.4 -4.4M618.0 526.3l4.4 4.4M618.0 530.7l4.4 -4.4M620.2 525.9l4.4 4.4M620.2 530.3l4.4 -4.4M622.5 525.7l4.4 4.4M622.5 530.1l4.4 -4.4M625.5 524.9l4.4 4.4M625.5 529.3l4.4 -4.4M628.5 524.6l4.4 4.4M628.5 529.0l4.4 -4.4M631.5 524.3l4.4 4.4M631.5 528.7l4.4 -4.4M633.7 524.2l4.4 4.4M633.7 528.6l4.4 -4.4M636.0 522.8l4.4 4.4M636.0 527.2l4.4 -4.4M639.0 523.0l4.4 4.4M639.0 527.4l4.4 -4.4M641.2 522.8l4.4 4.4M641.2 527.2l4.4 -4.4M643.5 522.1l4.4 4.4M643.5 526.5l4.4 -4.4M645.7 521.9l4.4 4.4M645.7 526.3l4.4 -4.4M649.6 521.2l4.4 4.4M649.6 525.6l4.4 -4.4M652.6 520.5l4.4 4.4M652.6 524.9l4.4 -4.4M654.9 520.3l4.4 4.4M654.9 524.7l4.4 -4.4M657.9 519.9l4.4 4.4M657.9 524.3l4.4 -4.4M660.9 519.6l4.4 4.4M660.9 524.0l4.4 -4.4M664.8 518.4l4.4 4.4M664.8 522.8l4.4 -4.4M667.8 517.7l4.4 4.4M667.8 522.1l4.4 -4.4M671.7 517.3l4.4 4.4M671.7 521.7l4.4 -4.4M673.9 516.8l4.4 4.4M673.9 521.2l4.4 -4.4M676.9 516.6l4.4 4.4M676.9 521.0l4.4 -4.4M680.8 515.5l4.4 4.4M680.8 519.9l4.4 -4.4M684.7 515.7l4.4 4.4M684.7 520.1l4.4 -4.4M687.0 514.8l4.4 4.4M687.0 519.2l4.4 -4.4M690.0 514.1l4.4 4.4M690.0 518.5l4.4 -4.4M693.0 513.8l4.4 4.4M693.0 518.2l4.4 -4.4M696.0 513.7l4.4 4.4M696.0 518.1l4.4 -4.4M699.9 512.9l4.4 4.4M699.9 517.3l4.4 -4.4M703.8 512.5l4.4 4.4M703.8 516.9l4.4 -4.4M706.8 512.2l4.4 4.4M706.8 516.6l4.4 -4.4M709.0 512.1l4.4 4.4M709.0 516.5l4.4 -4.4M712.9 511.8l4.4 4.4M712.9 516.2l4.4 -4.4M715.9 511.1l4.4 4.4M715.9 515.5l4.4 -4.4M719.8 510.9l4.4 4.4M719.8 515.3l4.4 -4.4M722.8 510.7l4.4 4.4M722.8 515.1l4.4 -4.4M726.7 510.5l4.4 4.4M726.7 514.9l4.4 -4.4M729.7 509.8l4.4 4.4M729.7 514.2l4.4 -4.4M732.7 509.3l4.4 4.4M732.7 513.7l4.4 -4.4M735.7 509.1l4.4 4.4M735.7 513.5l4.4 -4.4M738.7 508.0l4.4 4.4M738.7 512.4l4.4 -4.4M742.6 507.9l4.4 4.4M742.6 512.3l4.4 -4.4M746.5 507.8l4.4 4.4M746.5 512.2l4.4 -4.4M749.5 506.7l4.4 4.4M749.5 511.1l4.4 -4.4M752.5 506.4l4.4 4.4M752.5 510.8l4.4 -4.4M756.4 506.6l4.4 4.4M756.4 511.0l4.4 -4.4M759.4 505.7l4.4 4.4M759.4 510.1l4.4 -4.4M762.4 505.8l4.4 4.4M762.4 510.2l4.4 -4.4M765.4 505.4l4.4 4.4M765.4 509.8l4.4 -4.4M768.4 504.4l4.4 4.4M768.4 508.8l4.4 -4.4M772.3 504.0l4.4 4.4M772.3 508.4l4.4 -4.4M775.3 503.7l4.4 4.4M775.3 508.1l4.4 -4.4M779.2 503.2l4.4 4.4M779.2 507.6l4.4 -4.4M781.5 503.0l4.4 4.4M781.5 507.4l4.4 -4.4M783.7 502.6l4.4 4.4M783.7 507.0l4.4 -4.4M787.6 502.2l4.4 4.4M787.6 506.6l4.4 -4.4M789.9 501.8l4.4 4.4M789.9 506.2l4.4 -4.4M792.9 501.3l4.4 4.4M792.9 505.7l4.4 -4.4M795.1 501.3l4.4 4.4M795.1 505.7l4.4 -4.4M798.1 501.1l4.4 4.4M798.1 505.5l4.4 -4.4M801.1 500.4l4.4 4.4M801.1 504.8l4.4 -4.4M803.4 500.7l4.4 4.4M803.4 505.1l4.4 -4.4M805.6 499.8l4.4 4.4M805.6 504.2l4.4 -4.4M808.6 499.6l4.4 4.4M808.6 504.0l4.4 -4.4M811.6 499.5l4.4 4.4M811.6 503.9l4.4 -4.4M814.6 499.0l4.4 4.4M814.6 503.4l4.4 -4.4M817.6 498.9l4.4 4.4M817.6 503.3l4.4 -4.4M820.6 498.5l4.4 4.4M820.6 502.9l4.4 -4.4M823.6 497.3l4.4 4.4M823.6 501.7l4.4 -4.4M826.6 497.8l4.4 4.4M826.6 502.2l4.4 -4.4M829.6 497.2l4.4 4.4M829.6 501.6l4.4 -4.4M832.6 497.0l4.4 4.4M832.6 501.4l4.4 -4.4M836.5 496.7l4.4 4.4M836.5 501.1l4.4 -4.4M840.4 495.8l4.4 4.4M840.4 500.2l4.4 -4.4M843.4 495.7l4.4 4.4M843.4 500.1l4.4 -4.4M845.7 495.1l4.4 4.4M845.7 499.5l4.4 -4.4M848.7 494.7l4.4 4.4M848.7 499.1l4.4 -4.4M851.7 494.6l4.4 4.4M851.7 499.0l4.4 -4.4M853.9 493.8l4.4 4.4M853.9 498.2l4.4 -4.4M857.8 493.9l4.4 4.4M857.8 498.3l4.4 -4.4M860.8 493.4l4.4 4.4M860.8 497.8l4.4 -4.4M863.1 492.9l4.4 4.4M863.1 497.3l4.4 -4.4M866.1 492.2l4.4 4.4M866.1 496.6l4.4 -4.4M869.1 491.9l4.4 4.4M869.1 496.3l4.4 -4.4M873.0 491.9l4.4 4.4M873.0 496.3l4.4 -4.4M876.9 491.3l4.4 4.4M876.9 495.7l4.4 -4.4M879.9 491.3l4.4 4.4M879.9 495.7l4.4 -4.4M882.9 490.8l4.4 4.4M882.9 495.2l4.4 -4.4M885.1 490.9l4.4 4.4M885.1 495.3l4.4 -4.4M887.4 490.1l4.4 4.4M887.4 494.5l4.4 -4.4M890.4 490.0l4.4 4.4M890.4 494.4l4.4 -4.4M893.4 489.6l4.4 4.4M893.4 494.0l4.4 -4.4M896.4 489.4l4.4 4.4M896.4 493.8l4.4 -4.4M898.6 488.8l4.4 4.4M898.6 493.2l4.4 -4.4M902.5 488.6l4.4 4.4M902.5 493.0l4.4 -4.4M905.5 488.1l4.4 4.4M905.5 492.5l4.4 -4.4M908.5 487.7l4.4 4.4M908.5 492.1l4.4 -4.4M912.4 487.5l4.4 4.4M912.4 491.9l4.4 -4.4M916.3 487.6l4.4 4.4M916.3 492.0l4.4 -4.4M920.2 486.6l4.4 4.4M920.2 491.0l4.4 -4.4M922.5 486.4l4.4 4.4M922.5 490.8l4.4 -4.4M925.5 486.0l4.4 4.4M925.5 490.4l4.4 -4.4M929.4 485.8l4.4 4.4M929.4 490.2l4.4 -4.4M932.4 485.4l4.4 4.4M932.4 489.8l4.4 -4.4M935.4 484.4l4.4 4.4M935.4 488.8l4.4 -4.4M938.4 484.6l4.4 4.4M938.4 489.0l4.4 -4.4M941.4 484.5l4.4 4.4M941.4 488.9l4.4 -4.4M944.4 484.3l4.4 4.4M944.4 488.7l4.4 -4.4M947.4 483.7l4.4 4.4M947.4 488.1l4.4 -4.4M950.4 483.6l4.4 4.4M950.4 488.0l4.4 -4.4M953.4 483.5l4.4 4.4M953.4 487.9l4.4 -4.4M957.3 483.1l4.4 4.4M957.3 487.5l4.4 -4.4M960.3 482.4l4.4 4.4M960.3 486.8l4.4 -4.4M964.2 482.0l4.4 4.4M964.2 486.4l4.4 -4.4M967.2 481.9l4.4 4.4M967.2 486.3l4.4 -4.4M970.2 481.2l4.4 4.4M970.2 485.6l4.4 -4.4M973.2 481.1l4.4 4.4M973.2 485.5l4.4 -4.4M976.2 480.6l4.4 4.4M976.2 485.0l4.4 -4.4M979.2 480.2l4.4 4.4M979.2 484.6l4.4 -4.4M983.1 479.8l4.4 4.4M983.1 484.2l4.4 -4.4M986.1 479.5l4.4 4.4M986.1 483.9l4.4 -4.4M990.0 478.9l4.4 4.4M990.0 483.3l4.4 -4.4M993.9 478.7l4.4 4.4M993.9 483.1l4.4 -4.4M996.9 478.2l4.4 4.4M996.9 482.6l4.4 -4.4M999.1 477.9l4.4 4.4M999.1 482.3l4.4 -4.4M1001.4 477.9l4.4 4.4M1001.4 482.3l4.4 -4.4M1004.4 477.4l4.4 4.4M1004.4 481.8l4.4 -4.4M1007.4 477.2l4.4 4.4M1007.4 481.6l4.4 -4.4M1011.3 476.8l4.4 4.4M1011.3 481.2l4.4 -4.4M1015.2 476.1l4.4 4.4M1015.2 480.5l4.4 -4.4M1019.1 475.5l4.4 4.4M1019.1 479.9l4.4 -4.4M1021.3 475.3l4.4 4.4M1021.3 479.7l4.4 -4.4M1023.6 476.1l4.4 4.4M1023.6 480.5l4.4 -4.4M1027.5 474.7l4.4 4.4M1027.5 479.1l4.4 -4.4M1029.7 474.4l4.4 4.4M1029.7 478.8l4.4 -4.4M1032.7 473.8l4.4 4.4M1032.7 478.2l4.4 -4.4M1035.0 473.3l4.4 4.4M1035.0 477.7l4.4 -4.4M1038.9 472.7l4.4 4.4M1038.9 477.1l4.4 -4.4M1041.9 473.0l4.4 4.4M1041.9 477.4l4.4 -4.4M1044.9 472.3l4.4 4.4M1044.9 476.7l4.4 -4.4M1047.1 472.0l4.4 4.4M1047.1 476.4l4.4 -4.4M1050.1 471.6l4.4 4.4M1050.1 476.0l4.4 -4.4M1053.1 472.0l4.4 4.4M1053.1 476.4l4.4 -4.4M1055.4 471.5l4.4 4.4M1055.4 475.9l4.4 -4.4M1059.3 471.0l4.4 4.4M1059.3 475.4l4.4 -4.4M1062.3 470.2l4.4 4.4M1062.3 474.6l4.4 -4.4M1065.3 470.5l4.4 4.4M1065.3 474.9l4.4 -4.4M1068.3 470.0l4.4 4.4M1068.3 474.4l4.4 -4.4M1071.3 469.0l4.4 4.4M1071.3 473.4l4.4 -4.4M1074.3 469.3l4.4 4.4M1074.3 473.7l4.4 -4.4M1077.3 468.6l4.4 4.4M1077.3 473.0l4.4 -4.4M1080.3 468.4l4.4 4.4M1080.3 472.8l4.4 -4.4M1083.3 467.8l4.4 4.4M1083.3 472.2l4.4 -4.4M1087.2 467.4l4.4 4.4M1087.2 471.8l4.4 -4.4M1089.4 467.4l4.4 4.4M1089.4 471.8l4.4 -4.4M1093.3 466.4l4.4 4.4M1093.3 470.8l4.4 -4.4M1096.3 466.6l4.4 4.4M1096.3 471.0l4.4 -4.4M1098.6 465.9l4.4 4.4M1098.6 470.3l4.4 -4.4M1101.6 465.5l4.4 4.4M1101.6 469.9l4.4 -4.4M1105.5 464.9l4.4 4.4M1105.5 469.3l4.4 -4.4M1109.4 464.6l4.4 4.4M1109.4 469.0l4.4 -4.4M1113.3 464.1l4.4 4.4M1113.3 468.5l4.4 -4.4M1117.2 463.7l4.4 4.4M1117.2 468.1l4.4 -4.4M1119.5 463.7l4.4 4.4M1119.5 468.1l4.4 -4.4" stroke="#ffd92e" stroke-width="1.3" fill="none" stroke-opacity="1"/><path d="M328.4 771.6a2.15 2.15 0 1 0 4.3 0a2.15 2.15 0 1 0 -4.3 0M345.6 767.7a2.15 2.15 0 1 0 4.3 0a2.15 2.15 0 1 0 -4.3 0M359.9 741.7a2.15 2.15 0 1 0 4.3 0a2.15 2.15 0 1 0 -4.3 0M371.6 730.0a2.15 2.15 0 1 0 4.3 0a2.15 2.15 0 1 0 -4.3 0M376.8 760.5a2.15 2.15 0 1 0 4.3 0a2.15 2.15 0 1 0 -4.3 0M381.9 758.0a2.15 2.15 0 1 0 4.3 0a2.15 2.15 0 1 0 -4.3 0M405.7 728.7a2.15 2.15 0 1 0 4.3 0a2.15 2.15 0 1 0 -4.3 0M408.6 792.0a2.15 2.15 0 1 0 4.3 0a2.15 2.15 0 1 0 -4.3 0M423.9 746.0a2.15 2.15 0 1 0 4.3 0a2.15 2.15 0 1 0 -4.3 0M425.8 733.6a2.15 2.15 0 1 0 4.3 0a2.15 2.15 0 1 0 -4.3 0M1116.6 579.0a2.15 2.15 0 1 0 4.3 0a2.15 2.15 0 1 0 -4.3 0M1118.8 593.0a2.15 2.15 0 1 0 4.3 0a2.15 2.15 0 1 0 -4.3 0M1113.5 602.0a2.15 2.15 0 1 0 4.3 0a2.15 2.15 0 1 0 -4.3 0M429.1 701.5a2.15 2.15 0 1 0 4.3 0a2.15 2.15 0 1 0 -4.3 0M431.5 690.2a2.15 2.15 0 1 0 4.3 0a2.15 2.15 0 1 0 -4.3 0M433.8 692.8a2.15 2.15 0 1 0 4.3 0a2.15 2.15 0 1 0 -4.3 0M438.3 683.4a2.15 2.15 0 1 0 4.3 0a2.15 2.15 0 1 0 -4.3 0M442.4 680.2a2.15 2.15 0 1 0 4.3 0a2.15 2.15 0 1 0 -4.3 0M446.3 680.6a2.15 2.15 0 1 0 4.3 0a2.15 2.15 0 1 0 -4.3 0M450.0 668.6a2.15 2.15 0 1 0 4.3 0a2.15 2.15 0 1 0 -4.3 0M453.6 667.3a2.15 2.15 0 1 0 4.3 0a2.15 2.15 0 1 0 -4.3 0M456.9 662.0a2.15 2.15 0 1 0 4.3 0a2.15 2.15 0 1 0 -4.3 0M460.1 662.8a2.15 2.15 0 1 0 4.3 0a2.15 2.15 0 1 0 -4.3 0M463.2 653.8a2.15 2.15 0 1 0 4.3 0a2.15 2.15 0 1 0 -4.3 0M466.2 648.5a2.15 2.15 0 1 0 4.3 0a2.15 2.15 0 1 0 -4.3 0M469.0 651.7a2.15 2.15 0 1 0 4.3 0a2.15 2.15 0 1 0 -4.3 0M471.7 646.1a2.15 2.15 0 1 0 4.3 0a2.15 2.15 0 1 0 -4.3 0M474.3 643.2a2.15 2.15 0 1 0 4.3 0a2.15 2.15 0 1 0 -4.3 0M476.8 644.3a2.15 2.15 0 1 0 4.3 0a2.15 2.15 0 1 0 -4.3 0M479.3 635.7a2.15 2.15 0 1 0 4.3 0a2.15 2.15 0 1 0 -4.3 0M481.6 634.4a2.15 2.15 0 1 0 4.3 0a2.15 2.15 0 1 0 -4.3 0M483.9 633.1a2.15 2.15 0 1 0 4.3 0a2.15 2.15 0 1 0 -4.3 0M486.2 631.0a2.15 2.15 0 1 0 4.3 0a2.15 2.15 0 1 0 -4.3 0M488.5 625.5a2.15 2.15 0 1 0 4.3 0a2.15 2.15 0 1 0 -4.3 0M490.8 627.1a2.15 2.15 0 1 0 4.3 0a2.15 2.15 0 1 0 -4.3 0M493.1 627.7a2.15 2.15 0 1 0 4.3 0a2.15 2.15 0 1 0 -4.3 0M495.4 617.2a2.15 2.15 0 1 0 4.3 0a2.15 2.15 0 1 0 -4.3 0M497.7 620.8a2.15 2.15 0 1 0 4.3 0a2.15 2.15 0 1 0 -4.3 0M500.0 606.4a2.15 2.15 0 1 0 4.3 0a2.15 2.15 0 1 0 -4.3 0M502.3 613.6a2.15 2.15 0 1 0 4.3 0a2.15 2.15 0 1 0 -4.3 0M504.6 605.6a2.15 2.15 0 1 0 4.3 0a2.15 2.15 0 1 0 -4.3 0M506.9 604.0a2.15 2.15 0 1 0 4.3 0a2.15 2.15 0 1 0 -4.3 0M509.2 599.6a2.15 2.15 0 1 0 4.3 0a2.15 2.15 0 1 0 -4.3 0M511.5 595.6a2.15 2.15 0 1 0 4.3 0a2.15 2.15 0 1 0 -4.3 0M513.8 590.7a2.15 2.15 0 1 0 4.3 0a2.15 2.15 0 1 0 -4.3 0M516.1 590.1a2.15 2.15 0 1 0 4.3 0a2.15 2.15 0 1 0 -4.3 0M518.4 591.8a2.15 2.15 0 1 0 4.3 0a2.15 2.15 0 1 0 -4.3 0M520.7 588.2a2.15 2.15 0 1 0 4.3 0a2.15 2.15 0 1 0 -4.3 0M523.0 580.8a2.15 2.15 0 1 0 4.3 0a2.15 2.15 0 1 0 -4.3 0M525.3 577.2a2.15 2.15 0 1 0 4.3 0a2.15 2.15 0 1 0 -4.3 0M527.6 573.5a2.15 2.15 0 1 0 4.3 0a2.15 2.15 0 1 0 -4.3 0M529.9 568.6a2.15 2.15 0 1 0 4.3 0a2.15 2.15 0 1 0 -4.3 0M532.2 573.9a2.15 2.15 0 1 0 4.3 0a2.15 2.15 0 1 0 -4.3 0M534.5 567.5a2.15 2.15 0 1 0 4.3 0a2.15 2.15 0 1 0 -4.3 0M536.8 563.3a2.15 2.15 0 1 0 4.3 0a2.15 2.15 0 1 0 -4.3 0M539.1 559.5a2.15 2.15 0 1 0 4.3 0a2.15 2.15 0 1 0 -4.3 0M541.4 556.0a2.15 2.15 0 1 0 4.3 0a2.15 2.15 0 1 0 -4.3 0M543.7 561.3a2.15 2.15 0 1 0 4.3 0a2.15 2.15 0 1 0 -4.3 0M547.0 557.5a2.15 2.15 0 1 0 4.3 0a2.15 2.15 0 1 0 -4.3 0M549.3 556.7a2.15 2.15 0 1 0 4.3 0a2.15 2.15 0 1 0 -4.3 0M551.6 558.3a2.15 2.15 0 1 0 4.3 0a2.15 2.15 0 1 0 -4.3 0M553.9 557.7a2.15 2.15 0 1 0 4.3 0a2.15 2.15 0 1 0 -4.3 0M556.2 559.5a2.15 2.15 0 1 0 4.3 0a2.15 2.15 0 1 0 -4.3 0M558.5 559.9a2.15 2.15 0 1 0 4.3 0a2.15 2.15 0 1 0 -4.3 0M560.8 562.7a2.15 2.15 0 1 0 4.3 0a2.15 2.15 0 1 0 -4.3 0M563.1 568.3a2.15 2.15 0 1 0 4.3 0a2.15 2.15 0 1 0 -4.3 0M565.4 575.6a2.15 2.15 0 1 0 4.3 0a2.15 2.15 0 1 0 -4.3 0M567.7 582.3a2.15 2.15 0 1 0 4.3 0a2.15 2.15 0 1 0 -4.3 0M570.0 588.6a2.15 2.15 0 1 0 4.3 0a2.15 2.15 0 1 0 -4.3 0M572.3 596.6a2.15 2.15 0 1 0 4.3 0a2.15 2.15 0 1 0 -4.3 0M574.6 602.4a2.15 2.15 0 1 0 4.3 0a2.15 2.15 0 1 0 -4.3 0M576.9 606.4a2.15 2.15 0 1 0 4.3 0a2.15 2.15 0 1 0 -4.3 0M579.2 610.2a2.15 2.15 0 1 0 4.3 0a2.15 2.15 0 1 0 -4.3 0M581.5 613.1a2.15 2.15 0 1 0 4.3 0a2.15 2.15 0 1 0 -4.3 0M583.8 617.1a2.15 2.15 0 1 0 4.3 0a2.15 2.15 0 1 0 -4.3 0M586.1 619.8a2.15 2.15 0 1 0 4.3 0a2.15 2.15 0 1 0 -4.3 0M588.4 623.6a2.15 2.15 0 1 0 4.3 0a2.15 2.15 0 1 0 -4.3 0M590.7 626.3a2.15 2.15 0 1 0 4.3 0a2.15 2.15 0 1 0 -4.3 0M593.0 629.8a2.15 2.15 0 1 0 4.3 0a2.15 2.15 0 1 0 -4.3 0M595.3 633.4a2.15 2.15 0 1 0 4.3 0a2.15 2.15 0 1 0 -4.3 0M597.6 636.4a2.15 2.15 0 1 0 4.3 0a2.15 2.15 0 1 0 -4.3 0M599.9 638.7a2.15 2.15 0 1 0 4.3 0a2.15 2.15 0 1 0 -4.3 0M602.2 640.5a2.15 2.15 0 1 0 4.3 0a2.15 2.15 0 1 0 -4.3 0M604.5 640.4a2.15 2.15 0 1 0 4.3 0a2.15 2.15 0 1 0 -4.3 0M606.8 640.3a2.15 2.15 0 1 0 4.3 0a2.15 2.15 0 1 0 -4.3 0M609.1 638.9a2.15 2.15 0 1 0 4.3 0a2.15 2.15 0 1 0 -4.3 0M611.4 642.2a2.15 2.15 0 1 0 4.3 0a2.15 2.15 0 1 0 -4.3 0M613.7 642.0a2.15 2.15 0 1 0 4.3 0a2.15 2.15 0 1 0 -4.3 0M616.0 643.3a2.15 2.15 0 1 0 4.3 0a2.15 2.15 0 1 0 -4.3 0M619.0 645.0a2.15 2.15 0 1 0 4.3 0a2.15 2.15 0 1 0 -4.3 0M622.0 645.5a2.15 2.15 0 1 0 4.3 0a2.15 2.15 0 1 0 -4.3 0M625.0 648.5a2.15 2.15 0 1 0 4.3 0a2.15 2.15 0 1 0 -4.3 0M628.0 647.9a2.15 2.15 0 1 0 4.3 0a2.15 2.15 0 1 0 -4.3 0M631.0 650.9a2.15 2.15 0 1 0 4.3 0a2.15 2.15 0 1 0 -4.3 0M634.0 652.0a2.15 2.15 0 1 0 4.3 0a2.15 2.15 0 1 0 -4.3 0M637.0 651.4a2.15 2.15 0 1 0 4.3 0a2.15 2.15 0 1 0 -4.3 0M639.9 649.1a2.15 2.15 0 1 0 4.3 0a2.15 2.15 0 1 0 -4.3 0M642.9 650.6a2.15 2.15 0 1 0 4.3 0a2.15 2.15 0 1 0 -4.3 0M645.9 648.6a2.15 2.15 0 1 0 4.3 0a2.15 2.15 0 1 0 -4.3 0M648.9 649.5a2.15 2.15 0 1 0 4.3 0a2.15 2.15 0 1 0 -4.3 0M651.9 648.8a2.15 2.15 0 1 0 4.3 0a2.15 2.15 0 1 0 -4.3 0M654.9 650.0a2.15 2.15 0 1 0 4.3 0a2.15 2.15 0 1 0 -4.3 0M657.9 649.7a2.15 2.15 0 1 0 4.3 0a2.15 2.15 0 1 0 -4.3 0M660.9 650.7a2.15 2.15 0 1 0 4.3 0a2.15 2.15 0 1 0 -4.3 0M663.9 652.3a2.15 2.15 0 1 0 4.3 0a2.15 2.15 0 1 0 -4.3 0M666.9 653.1a2.15 2.15 0 1 0 4.3 0a2.15 2.15 0 1 0 -4.3 0M669.9 651.6a2.15 2.15 0 1 0 4.3 0a2.15 2.15 0 1 0 -4.3 0M672.9 652.0a2.15 2.15 0 1 0 4.3 0a2.15 2.15 0 1 0 -4.3 0M675.9 653.2a2.15 2.15 0 1 0 4.3 0a2.15 2.15 0 1 0 -4.3 0M678.9 651.9a2.15 2.15 0 1 0 4.3 0a2.15 2.15 0 1 0 -4.3 0M681.9 651.0a2.15 2.15 0 1 0 4.3 0a2.15 2.15 0 1 0 -4.3 0M684.9 654.4a2.15 2.15 0 1 0 4.3 0a2.15 2.15 0 1 0 -4.3 0M687.9 651.7a2.15 2.15 0 1 0 4.3 0a2.15 2.15 0 1 0 -4.3 0M690.9 654.6a2.15 2.15 0 1 0 4.3 0a2.15 2.15 0 1 0 -4.3 0M693.9 652.0a2.15 2.15 0 1 0 4.3 0a2.15 2.15 0 1 0 -4.3 0M696.9 656.3a2.15 2.15 0 1 0 4.3 0a2.15 2.15 0 1 0 -4.3 0M699.9 652.3a2.15 2.15 0 1 0 4.3 0a2.15 2.15 0 1 0 -4.3 0M702.9 655.3a2.15 2.15 0 1 0 4.3 0a2.15 2.15 0 1 0 -4.3 0M705.9 656.4a2.15 2.15 0 1 0 4.3 0a2.15 2.15 0 1 0 -4.3 0M708.9 653.1a2.15 2.15 0 1 0 4.3 0a2.15 2.15 0 1 0 -4.3 0M711.9 656.8a2.15 2.15 0 1 0 4.3 0a2.15 2.15 0 1 0 -4.3 0M714.9 653.7a2.15 2.15 0 1 0 4.3 0a2.15 2.15 0 1 0 -4.3 0M717.9 652.5a2.15 2.15 0 1 0 4.3 0a2.15 2.15 0 1 0 -4.3 0M720.9 656.3a2.15 2.15 0 1 0 4.3 0a2.15 2.15 0 1 0 -4.3 0M723.9 656.4a2.15 2.15 0 1 0 4.3 0a2.15 2.15 0 1 0 -4.3 0M726.9 655.3a2.15 2.15 0 1 0 4.3 0a2.15 2.15 0 1 0 -4.3 0M729.9 652.1a2.15 2.15 0 1 0 4.3 0a2.15 2.15 0 1 0 -4.3 0M732.9 655.8a2.15 2.15 0 1 0 4.3 0a2.15 2.15 0 1 0 -4.3 0M735.9 655.6a2.15 2.15 0 1 0 4.3 0a2.15 2.15 0 1 0 -4.3 0M738.9 655.7a2.15 2.15 0 1 0 4.3 0a2.15 2.15 0 1 0 -4.3 0M741.9 655.9a2.15 2.15 0 1 0 4.3 0a2.15 2.15 0 1 0 -4.3 0M744.9 653.9a2.15 2.15 0 1 0 4.3 0a2.15 2.15 0 1 0 -4.3 0M747.9 655.8a2.15 2.15 0 1 0 4.3 0a2.15 2.15 0 1 0 -4.3 0M750.9 659.3a2.15 2.15 0 1 0 4.3 0a2.15 2.15 0 1 0 -4.3 0M753.9 659.1a2.15 2.15 0 1 0 4.3 0a2.15 2.15 0 1 0 -4.3 0M756.9 656.4a2.15 2.15 0 1 0 4.3 0a2.15 2.15 0 1 0 -4.3 0M759.9 656.0a2.15 2.15 0 1 0 4.3 0a2.15 2.15 0 1 0 -4.3 0M762.9 657.7a2.15 2.15 0 1 0 4.3 0a2.15 2.15 0 1 0 -4.3 0M765.9 658.8a2.15 2.15 0 1 0 4.3 0a2.15 2.15 0 1 0 -4.3 0M768.9 658.4a2.15 2.15 0 1 0 4.3 0a2.15 2.15 0 1 0 -4.3 0M771.9 655.8a2.15 2.15 0 1 0 4.3 0a2.15 2.15 0 1 0 -4.3 0M774.9 657.8a2.15 2.15 0 1 0 4.3 0a2.15 2.15 0 1 0 -4.3 0M777.9 657.8a2.15 2.15 0 1 0 4.3 0a2.15 2.15 0 1 0 -4.3 0M780.9 659.8a2.15 2.15 0 1 0 4.3 0a2.15 2.15 0 1 0 -4.3 0M783.9 659.5a2.15 2.15 0 1 0 4.3 0a2.15 2.15 0 1 0 -4.3 0M786.9 658.6a2.15 2.15 0 1 0 4.3 0a2.15 2.15 0 1 0 -4.3 0M789.9 659.7a2.15 2.15 0 1 0 4.3 0a2.15 2.15 0 1 0 -4.3 0M792.9 657.5a2.15 2.15 0 1 0 4.3 0a2.15 2.15 0 1 0 -4.3 0M795.9 660.3a2.15 2.15 0 1 0 4.3 0a2.15 2.15 0 1 0 -4.3 0M798.9 657.5a2.15 2.15 0 1 0 4.3 0a2.15 2.15 0 1 0 -4.3 0M801.9 658.8a2.15 2.15 0 1 0 4.3 0a2.15 2.15 0 1 0 -4.3 0M804.9 659.6a2.15 2.15 0 1 0 4.3 0a2.15 2.15 0 1 0 -4.3 0M807.9 657.0a2.15 2.15 0 1 0 4.3 0a2.15 2.15 0 1 0 -4.3 0M810.9 657.4a2.15 2.15 0 1 0 4.3 0a2.15 2.15 0 1 0 -4.3 0M813.9 655.9a2.15 2.15 0 1 0 4.3 0a2.15 2.15 0 1 0 -4.3 0M816.9 658.7a2.15 2.15 0 1 0 4.3 0a2.15 2.15 0 1 0 -4.3 0M819.9 658.4a2.15 2.15 0 1 0 4.3 0a2.15 2.15 0 1 0 -4.3 0M822.9 658.1a2.15 2.15 0 1 0 4.3 0a2.15 2.15 0 1 0 -4.3 0M825.9 659.3a2.15 2.15 0 1 0 4.3 0a2.15 2.15 0 1 0 -4.3 0M828.9 655.6a2.15 2.15 0 1 0 4.3 0a2.15 2.15 0 1 0 -4.3 0M831.9 658.7a2.15 2.15 0 1 0 4.3 0a2.15 2.15 0 1 0 -4.3 0M834.9 658.9a2.15 2.15 0 1 0 4.3 0a2.15 2.15 0 1 0 -4.3 0M837.9 658.4a2.15 2.15 0 1 0 4.3 0a2.15 2.15 0 1 0 -4.3 0M840.9 660.0a2.15 2.15 0 1 0 4.3 0a2.15 2.15 0 1 0 -4.3 0M843.9 661.4a2.15 2.15 0 1 0 4.3 0a2.15 2.15 0 1 0 -4.3 0M846.9 658.2a2.15 2.15 0 1 0 4.3 0a2.15 2.15 0 1 0 -4.3 0M849.9 657.6a2.15 2.15 0 1 0 4.3 0a2.15 2.15 0 1 0 -4.3 0M852.9 658.1a2.15 2.15 0 1 0 4.3 0a2.15 2.15 0 1 0 -4.3 0M855.9 659.1a2.15 2.15 0 1 0 4.3 0a2.15 2.15 0 1 0 -4.3 0M858.9 659.8a2.15 2.15 0 1 0 4.3 0a2.15 2.15 0 1 0 -4.3 0M861.9 657.7a2.15 2.15 0 1 0 4.3 0a2.15 2.15 0 1 0 -4.3 0M864.9 660.4a2.15 2.15 0 1 0 4.3 0a2.15 2.15 0 1 0 -4.3 0M867.9 657.5a2.15 2.15 0 1 0 4.3 0a2.15 2.15 0 1 0 -4.3 0M870.9 660.2a2.15 2.15 0 1 0 4.3 0a2.15 2.15 0 1 0 -4.3 0M873.9 659.6a2.15 2.15 0 1 0 4.3 0a2.15 2.15 0 1 0 -4.3 0M876.9 659.5a2.15 2.15 0 1 0 4.3 0a2.15 2.15 0 1 0 -4.3 0M879.9 661.9a2.15 2.15 0 1 0 4.3 0a2.15 2.15 0 1 0 -4.3 0M882.9 658.3a2.15 2.15 0 1 0 4.3 0a2.15 2.15 0 1 0 -4.3 0M885.9 658.3a2.15 2.15 0 1 0 4.3 0a2.15 2.15 0 1 0 -4.3 0M888.9 659.0a2.15 2.15 0 1 0 4.3 0a2.15 2.15 0 1 0 -4.3 0M891.9 659.4a2.15 2.15 0 1 0 4.3 0a2.15 2.15 0 1 0 -4.3 0M894.9 656.0a2.15 2.15 0 1 0 4.3 0a2.15 2.15 0 1 0 -4.3 0M900.9 657.7a2.15 2.15 0 1 0 4.3 0a2.15 2.15 0 1 0 -4.3 0M904.9 656.8a2.15 2.15 0 1 0 4.3 0a2.15 2.15 0 1 0 -4.3 0M908.9 657.3a2.15 2.15 0 1 0 4.3 0a2.15 2.15 0 1 0 -4.3 0M912.9 657.3a2.15 2.15 0 1 0 4.3 0a2.15 2.15 0 1 0 -4.3 0M916.9 656.0a2.15 2.15 0 1 0 4.3 0a2.15 2.15 0 1 0 -4.3 0M920.9 655.4a2.15 2.15 0 1 0 4.3 0a2.15 2.15 0 1 0 -4.3 0M924.9 655.0a2.15 2.15 0 1 0 4.3 0a2.15 2.15 0 1 0 -4.3 0M928.9 652.6a2.15 2.15 0 1 0 4.3 0a2.15 2.15 0 1 0 -4.3 0M932.9 654.2a2.15 2.15 0 1 0 4.3 0a2.15 2.15 0 1 0 -4.3 0M936.9 653.5a2.15 2.15 0 1 0 4.3 0a2.15 2.15 0 1 0 -4.3 0M940.9 652.8a2.15 2.15 0 1 0 4.3 0a2.15 2.15 0 1 0 -4.3 0M944.9 651.9a2.15 2.15 0 1 0 4.3 0a2.15 2.15 0 1 0 -4.3 0M948.9 651.1a2.15 2.15 0 1 0 4.3 0a2.15 2.15 0 1 0 -4.3 0M952.9 650.8a2.15 2.15 0 1 0 4.3 0a2.15 2.15 0 1 0 -4.3 0M956.9 650.9a2.15 2.15 0 1 0 4.3 0a2.15 2.15 0 1 0 -4.3 0M960.9 649.2a2.15 2.15 0 1 0 4.3 0a2.15 2.15 0 1 0 -4.3 0M964.9 649.0a2.15 2.15 0 1 0 4.3 0a2.15 2.15 0 1 0 -4.3 0M968.9 645.6a2.15 2.15 0 1 0 4.3 0a2.15 2.15 0 1 0 -4.3 0M972.9 645.6a2.15 2.15 0 1 0 4.3 0a2.15 2.15 0 1 0 -4.3 0M976.9 644.9a2.15 2.15 0 1 0 4.3 0a2.15 2.15 0 1 0 -4.3 0M980.9 643.5a2.15 2.15 0 1 0 4.3 0a2.15 2.15 0 1 0 -4.3 0M984.9 641.4a2.15 2.15 0 1 0 4.3 0a2.15 2.15 0 1 0 -4.3 0M988.9 640.7a2.15 2.15 0 1 0 4.3 0a2.15 2.15 0 1 0 -4.3 0M992.9 640.5a2.15 2.15 0 1 0 4.3 0a2.15 2.15 0 1 0 -4.3 0M996.9 637.8a2.15 2.15 0 1 0 4.3 0a2.15 2.15 0 1 0 -4.3 0M1000.9 636.8a2.15 2.15 0 1 0 4.3 0a2.15 2.15 0 1 0 -4.3 0M1004.9 635.6a2.15 2.15 0 1 0 4.3 0a2.15 2.15 0 1 0 -4.3 0M1008.9 634.9a2.15 2.15 0 1 0 4.3 0a2.15 2.15 0 1 0 -4.3 0M1012.9 634.6a2.15 2.15 0 1 0 4.3 0a2.15 2.15 0 1 0 -4.3 0M1016.9 633.6a2.15 2.15 0 1 0 4.3 0a2.15 2.15 0 1 0 -4.3 0M1020.9 631.2a2.15 2.15 0 1 0 4.3 0a2.15 2.15 0 1 0 -4.3 0M1024.9 632.3a2.15 2.15 0 1 0 4.3 0a2.15 2.15 0 1 0 -4.3 0M1028.9 630.3a2.15 2.15 0 1 0 4.3 0a2.15 2.15 0 1 0 -4.3 0M1032.9 629.5a2.15 2.15 0 1 0 4.3 0a2.15 2.15 0 1 0 -4.3 0M1036.9 630.0a2.15 2.15 0 1 0 4.3 0a2.15 2.15 0 1 0 -4.3 0M1040.9 628.2a2.15 2.15 0 1 0 4.3 0a2.15 2.15 0 1 0 -4.3 0M1044.9 626.8a2.15 2.15 0 1 0 4.3 0a2.15 2.15 0 1 0 -4.3 0M1048.9 626.5a2.15 2.15 0 1 0 4.3 0a2.15 2.15 0 1 0 -4.3 0M1052.9 625.7a2.15 2.15 0 1 0 4.3 0a2.15 2.15 0 1 0 -4.3 0M1056.9 624.9a2.15 2.15 0 1 0 4.3 0a2.15 2.15 0 1 0 -4.3 0M1060.9 624.6a2.15 2.15 0 1 0 4.3 0a2.15 2.15 0 1 0 -4.3 0M1064.9 624.6a2.15 2.15 0 1 0 4.3 0a2.15 2.15 0 1 0 -4.3 0M1068.9 623.7a2.15 2.15 0 1 0 4.3 0a2.15 2.15 0 1 0 -4.3 0M1072.9 622.1a2.15 2.15 0 1 0 4.3 0a2.15 2.15 0 1 0 -4.3 0M1076.9 623.8a2.15 2.15 0 1 0 4.3 0a2.15 2.15 0 1 0 -4.3 0M1080.9 621.1a2.15 2.15 0 1 0 4.3 0a2.15 2.15 0 1 0 -4.3 0M1084.9 621.1a2.15 2.15 0 1 0 4.3 0a2.15 2.15 0 1 0 -4.3 0M1088.9 620.5a2.15 2.15 0 1 0 4.3 0a2.15 2.15 0 1 0 -4.3 0M1092.9 620.4a2.15 2.15 0 1 0 4.3 0a2.15 2.15 0 1 0 -4.3 0M1096.9 619.2a2.15 2.15 0 1 0 4.3 0a2.15 2.15 0 1 0 -4.3 0M1100.9 619.2a2.15 2.15 0 1 0 4.3 0a2.15 2.15 0 1 0 -4.3 0M1104.9 619.6a2.15 2.15 0 1 0 4.3 0a2.15 2.15 0 1 0 -4.3 0M1108.9 618.0a2.15 2.15 0 1 0 4.3 0a2.15 2.15 0 1 0 -4.3 0" stroke="#ffd92e" stroke-width="1.3" fill="none" stroke-opacity="0.7"/><path d="M190.8 564.8l4.4 4.4M190.8 569.2l4.4 -4.4M239.8 559.4l4.4 4.4M239.8 563.8l4.4 -4.4M268.6 556.8l4.4 4.4M268.6 561.2l4.4 -4.4M288.7 549.8l4.4 4.4M288.7 554.2l4.4 -4.4M304.8 544.0l4.4 4.4M304.8 548.4l4.4 -4.4M317.6 541.4l4.4 4.4M317.6 545.8l4.4 -4.4M328.5 536.4l4.4 4.4M328.5 540.8l4.4 -4.4M337.8 533.4l4.4 4.4M337.8 537.8l4.4 -4.4M345.5 531.5l4.4 4.4M345.5 535.9l4.4 -4.4M376.7 531.2l4.4 4.4M376.7 535.6l4.4 -4.4M382.5 521.8l4.4 4.4M382.5 526.2l4.4 -4.4M387.1 520.8l4.4 4.4M387.1 525.2l4.4 -4.4M391.4 519.8l4.4 4.4M391.4 524.2l4.4 -4.4M395.4 518.9l4.4 4.4M395.4 523.3l4.4 -4.4M399.2 518.0l4.4 4.4M399.2 522.4l4.4 -4.4M402.8 517.1l4.4 4.4M402.8 521.5l4.4 -4.4M406.3 516.3l4.4 4.4M406.3 520.7l4.4 -4.4M409.6 515.5l4.4 4.4M409.6 519.9l4.4 -4.4M412.7 514.8l4.4 4.4M412.7 519.2l4.4 -4.4M415.7 514.1l4.4 4.4M415.7 518.5l4.4 -4.4M418.6 513.4l4.4 4.4M418.6 517.8l4.4 -4.4M421.4 512.7l4.4 4.4M421.4 517.1l4.4 -4.4M424.0 512.1l4.4 4.4M424.0 516.5l4.4 -4.4M426.6 511.5l4.4 4.4M426.6 515.9l4.4 -4.4M429.1 510.9l4.4 4.4M429.1 515.3l4.4 -4.4M431.5 510.3l4.4 4.4M431.5 514.7l4.4 -4.4M433.8 509.8l4.4 4.4M433.8 514.2l4.4 -4.4M436.0 509.2l4.4 4.4M436.0 513.6l4.4 -4.4M438.2 508.7l4.4 4.4M438.2 513.1l4.4 -4.4M440.3 508.2l4.4 4.4M440.3 512.6l4.4 -4.4M442.4 507.7l4.4 4.4M442.4 512.1l4.4 -4.4M444.3 507.3l4.4 4.4M444.3 511.7l4.4 -4.4M446.3 506.8l4.4 4.4M446.3 511.2l4.4 -4.4M448.2 506.4l4.4 4.4M448.2 510.8l4.4 -4.4M450.0 506.0l4.4 4.4M450.0 510.4l4.4 -4.4M451.8 505.6l4.4 4.4M451.8 510.0l4.4 -4.4M453.5 505.2l4.4 4.4M453.5 509.6l4.4 -4.4M455.2 504.8l4.4 4.4M455.2 509.2l4.4 -4.4M456.9 504.4l4.4 4.4M456.9 508.8l4.4 -4.4M464.2 502.4l4.4 4.4M464.2 506.8l4.4 -4.4M466.8 501.6l4.4 4.4M466.8 506.0l4.4 -4.4M649.2 491.6l4.4 4.4M649.2 496.0l4.4 -4.4M652.2 491.8l4.4 4.4M652.2 496.2l4.4 -4.4M655.2 491.2l4.4 4.4M655.2 495.6l4.4 -4.4M658.2 491.0l4.4 4.4M658.2 495.4l4.4 -4.4M661.2 490.7l4.4 4.4M661.2 495.1l4.4 -4.4M664.2 490.1l4.4 4.4M664.2 494.5l4.4 -4.4M666.4 490.6l4.4 4.4M666.4 495.0l4.4 -4.4M668.7 489.8l4.4 4.4M668.7 494.2l4.4 -4.4M671.7 489.6l4.4 4.4M671.7 494.0l4.4 -4.4M675.6 489.6l4.4 4.4M675.6 494.0l4.4 -4.4M678.6 489.5l4.4 4.4M678.6 493.9l4.4 -4.4M680.8 488.7l4.4 4.4M680.8 493.1l4.4 -4.4M684.7 488.4l4.4 4.4M684.7 492.8l4.4 -4.4M687.7 488.3l4.4 4.4M687.7 492.7l4.4 -4.4M690.0 487.9l4.4 4.4M690.0 492.3l4.4 -4.4M693.0 487.2l4.4 4.4M693.0 491.6l4.4 -4.4M695.2 487.4l4.4 4.4M695.2 491.8l4.4 -4.4M698.2 487.4l4.4 4.4M698.2 491.8l4.4 -4.4M701.2 487.0l4.4 4.4M701.2 491.4l4.4 -4.4M704.2 486.1l4.4 4.4M704.2 490.5l4.4 -4.4M707.2 486.0l4.4 4.4M707.2 490.4l4.4 -4.4M709.5 485.1l4.4 4.4M709.5 489.5l4.4 -4.4M711.7 486.1l4.4 4.4M711.7 490.5l4.4 -4.4M714.7 485.6l4.4 4.4M714.7 490.0l4.4 -4.4M717.7 485.2l4.4 4.4M717.7 489.6l4.4 -4.4M720.0 484.8l4.4 4.4M720.0 489.2l4.4 -4.4M723.0 484.7l4.4 4.4M723.0 489.1l4.4 -4.4M726.0 484.1l4.4 4.4M726.0 488.5l4.4 -4.4M728.2 483.8l4.4 4.4M728.2 488.2l4.4 -4.4M731.2 483.4l4.4 4.4M731.2 487.8l4.4 -4.4M734.2 483.6l4.4 4.4M734.2 488.0l4.4 -4.4M736.5 483.2l4.4 4.4M736.5 487.6l4.4 -4.4M738.7 482.7l4.4 4.4M738.7 487.1l4.4 -4.4M742.6 482.3l4.4 4.4M742.6 486.7l4.4 -4.4M746.5 482.1l4.4 4.4M746.5 486.5l4.4 -4.4M748.8 482.2l4.4 4.4M748.8 486.6l4.4 -4.4M751.0 482.0l4.4 4.4M751.0 486.4l4.4 -4.4M754.0 481.2l4.4 4.4M754.0 485.6l4.4 -4.4M756.3 480.7l4.4 4.4M756.3 485.1l4.4 -4.4M759.3 481.1l4.4 4.4M759.3 485.5l4.4 -4.4M762.3 480.7l4.4 4.4M762.3 485.1l4.4 -4.4M765.3 480.4l4.4 4.4M765.3 484.8l4.4 -4.4M767.5 479.9l4.4 4.4M767.5 484.3l4.4 -4.4M770.5 480.0l4.4 4.4M770.5 484.4l4.4 -4.4M773.5 479.2l4.4 4.4M773.5 483.6l4.4 -4.4M776.5 478.8l4.4 4.4M776.5 483.2l4.4 -4.4M779.5 478.9l4.4 4.4M779.5 483.3l4.4 -4.4M783.4 478.3l4.4 4.4M783.4 482.7l4.4 -4.4M785.7 478.3l4.4 4.4M785.7 482.7l4.4 -4.4M789.6 477.7l4.4 4.4M789.6 482.1l4.4 -4.4M792.6 477.4l4.4 4.4M792.6 481.8l4.4 -4.4M795.6 477.6l4.4 4.4M795.6 482.0l4.4 -4.4M798.6 477.1l4.4 4.4M798.6 481.5l4.4 -4.4M800.8 477.2l4.4 4.4M800.8 481.6l4.4 -4.4M803.8 476.8l4.4 4.4M803.8 481.2l4.4 -4.4M807.7 476.5l4.4 4.4M807.7 480.9l4.4 -4.4M810.0 476.4l4.4 4.4M810.0 480.8l4.4 -4.4M812.2 475.6l4.4 4.4M812.2 480.0l4.4 -4.4M814.5 475.4l4.4 4.4M814.5 479.8l4.4 -4.4M817.5 475.2l4.4 4.4M817.5 479.6l4.4 -4.4M820.5 475.3l4.4 4.4M820.5 479.7l4.4 -4.4M823.5 474.6l4.4 4.4M823.5 479.0l4.4 -4.4M826.5 474.8l4.4 4.4M826.5 479.2l4.4 -4.4M829.5 473.7l4.4 4.4M829.5 478.1l4.4 -4.4M831.7 473.6l4.4 4.4M831.7 478.0l4.4 -4.4M835.6 473.9l4.4 4.4M835.6 478.3l4.4 -4.4M839.5 473.4l4.4 4.4M839.5 477.8l4.4 -4.4M843.4 473.5l4.4 4.4M843.4 477.9l4.4 -4.4M847.3 472.6l4.4 4.4M847.3 477.0l4.4 -4.4M849.6 472.8l4.4 4.4M849.6 477.2l4.4 -4.4M851.8 472.0l4.4 4.4M851.8 476.4l4.4 -4.4M855.7 471.6l4.4 4.4M855.7 476.0l4.4 -4.4M858.7 471.8l4.4 4.4M858.7 476.2l4.4 -4.4M862.6 471.2l4.4 4.4M862.6 475.6l4.4 -4.4M866.5 471.1l4.4 4.4M866.5 475.5l4.4 -4.4M869.5 470.3l4.4 4.4M869.5 474.7l4.4 -4.4M871.8 470.2l4.4 4.4M871.8 474.6l4.4 -4.4M875.7 470.1l4.4 4.4M875.7 474.5l4.4 -4.4M878.7 469.6l4.4 4.4M878.7 474.0l4.4 -4.4M882.6 469.4l4.4 4.4M882.6 473.8l4.4 -4.4M885.6 468.7l4.4 4.4M885.6 473.1l4.4 -4.4M888.6 469.6l4.4 4.4M888.6 474.0l4.4 -4.4M891.6 467.7l4.4 4.4M891.6 472.1l4.4 -4.4M894.6 468.2l4.4 4.4M894.6 472.6l4.4 -4.4M897.6 468.0l4.4 4.4M897.6 472.4l4.4 -4.4M900.6 467.4l4.4 4.4M900.6 471.8l4.4 -4.4M902.8 466.8l4.4 4.4M902.8 471.2l4.4 -4.4M905.8 467.2l4.4 4.4M905.8 471.6l4.4 -4.4M908.8 466.7l4.4 4.4M908.8 471.1l4.4 -4.4M912.7 466.1l4.4 4.4M912.7 470.5l4.4 -4.4M915.7 465.7l4.4 4.4M915.7 470.1l4.4 -4.4M918.7 465.7l4.4 4.4M918.7 470.1l4.4 -4.4M921.7 466.2l4.4 4.4M921.7 470.6l4.4 -4.4M925.6 465.5l4.4 4.4M925.6 469.9l4.4 -4.4M928.6 464.9l4.4 4.4M928.6 469.3l4.4 -4.4M931.6 464.9l4.4 4.4M931.6 469.3l4.4 -4.4M933.9 464.7l4.4 4.4M933.9 469.1l4.4 -4.4M936.1 464.3l4.4 4.4M936.1 468.7l4.4 -4.4M939.1 464.3l4.4 4.4M939.1 468.7l4.4 -4.4M942.1 463.8l4.4 4.4M942.1 468.2l4.4 -4.4M944.4 463.7l4.4 4.4M944.4 468.1l4.4 -4.4M948.3 463.0l4.4 4.4M948.3 467.4l4.4 -4.4M950.5 462.8l4.4 4.4M950.5 467.2l4.4 -4.4M954.4 463.0l4.4 4.4M954.4 467.4l4.4 -4.4" stroke="#ff9a30" stroke-width="1.3" fill="none" stroke-opacity="1"/><path d="M190.8 707.0a2.15 2.15 0 1 0 4.3 0a2.15 2.15 0 1 0 -4.3 0M239.8 721.0a2.15 2.15 0 1 0 4.3 0a2.15 2.15 0 1 0 -4.3 0M463.9 875.0a2.15 2.15 0 1 0 4.3 0a2.15 2.15 0 1 0 -4.3 0M268.6 654.4a2.15 2.15 0 1 0 4.3 0a2.15 2.15 0 1 0 -4.3 0M288.7 632.4a2.15 2.15 0 1 0 4.3 0a2.15 2.15 0 1 0 -4.3 0M305.2 645.8a2.15 2.15 0 1 0 4.3 0a2.15 2.15 0 1 0 -4.3 0M317.6 610.5a2.15 2.15 0 1 0 4.3 0a2.15 2.15 0 1 0 -4.3 0M328.7 610.5a2.15 2.15 0 1 0 4.3 0a2.15 2.15 0 1 0 -4.3 0M337.8 625.4a2.15 2.15 0 1 0 4.3 0a2.15 2.15 0 1 0 -4.3 0M345.5 631.6a2.15 2.15 0 1 0 4.3 0a2.15 2.15 0 1 0 -4.3 0M376.9 538.0a2.15 2.15 0 1 0 4.3 0a2.15 2.15 0 1 0 -4.3 0M387.2 556.7a2.15 2.15 0 1 0 4.3 0a2.15 2.15 0 1 0 -4.3 0M391.4 607.0a2.15 2.15 0 1 0 4.3 0a2.15 2.15 0 1 0 -4.3 0M395.5 607.0a2.15 2.15 0 1 0 4.3 0a2.15 2.15 0 1 0 -4.3 0M399.3 608.3a2.15 2.15 0 1 0 4.3 0a2.15 2.15 0 1 0 -4.3 0M402.9 613.6a2.15 2.15 0 1 0 4.3 0a2.15 2.15 0 1 0 -4.3 0M406.3 608.5a2.15 2.15 0 1 0 4.3 0a2.15 2.15 0 1 0 -4.3 0M409.6 608.5a2.15 2.15 0 1 0 4.3 0a2.15 2.15 0 1 0 -4.3 0M412.8 607.4a2.15 2.15 0 1 0 4.3 0a2.15 2.15 0 1 0 -4.3 0M415.8 609.9a2.15 2.15 0 1 0 4.3 0a2.15 2.15 0 1 0 -4.3 0M418.7 609.0a2.15 2.15 0 1 0 4.3 0a2.15 2.15 0 1 0 -4.3 0M421.4 611.3a2.15 2.15 0 1 0 4.3 0a2.15 2.15 0 1 0 -4.3 0M424.1 620.5a2.15 2.15 0 1 0 4.3 0a2.15 2.15 0 1 0 -4.3 0M429.1 615.5a2.15 2.15 0 1 0 4.3 0a2.15 2.15 0 1 0 -4.3 0M433.8 615.3a2.15 2.15 0 1 0 4.3 0a2.15 2.15 0 1 0 -4.3 0M438.3 625.8a2.15 2.15 0 1 0 4.3 0a2.15 2.15 0 1 0 -4.3 0M442.4 623.7a2.15 2.15 0 1 0 4.3 0a2.15 2.15 0 1 0 -4.3 0M446.3 626.0a2.15 2.15 0 1 0 4.3 0a2.15 2.15 0 1 0 -4.3 0M450.0 635.0a2.15 2.15 0 1 0 4.3 0a2.15 2.15 0 1 0 -4.3 0M453.6 644.0a2.15 2.15 0 1 0 4.3 0a2.15 2.15 0 1 0 -4.3 0M465.9 621.0a2.15 2.15 0 1 0 4.3 0a2.15 2.15 0 1 0 -4.3 0M478.9 638.0a2.15 2.15 0 1 0 4.3 0a2.15 2.15 0 1 0 -4.3 0M487.9 638.0a2.15 2.15 0 1 0 4.3 0a2.15 2.15 0 1 0 -4.3 0M449.2 649.0a2.15 2.15 0 1 0 4.3 0a2.15 2.15 0 1 0 -4.3 0M455.2 649.0a2.15 2.15 0 1 0 4.3 0a2.15 2.15 0 1 0 -4.3 0M697.9 651.2a2.15 2.15 0 1 0 4.3 0a2.15 2.15 0 1 0 -4.3 0M700.7 651.3a2.15 2.15 0 1 0 4.3 0a2.15 2.15 0 1 0 -4.3 0M703.5 650.9a2.15 2.15 0 1 0 4.3 0a2.15 2.15 0 1 0 -4.3 0M706.3 650.6a2.15 2.15 0 1 0 4.3 0a2.15 2.15 0 1 0 -4.3 0M709.1 649.6a2.15 2.15 0 1 0 4.3 0a2.15 2.15 0 1 0 -4.3 0M711.9 649.3a2.15 2.15 0 1 0 4.3 0a2.15 2.15 0 1 0 -4.3 0M714.7 648.5a2.15 2.15 0 1 0 4.3 0a2.15 2.15 0 1 0 -4.3 0M717.5 648.0a2.15 2.15 0 1 0 4.3 0a2.15 2.15 0 1 0 -4.3 0M720.3 647.0a2.15 2.15 0 1 0 4.3 0a2.15 2.15 0 1 0 -4.3 0M723.1 645.8a2.15 2.15 0 1 0 4.3 0a2.15 2.15 0 1 0 -4.3 0M725.9 645.5a2.15 2.15 0 1 0 4.3 0a2.15 2.15 0 1 0 -4.3 0M728.7 645.5a2.15 2.15 0 1 0 4.3 0a2.15 2.15 0 1 0 -4.3 0M731.5 644.7a2.15 2.15 0 1 0 4.3 0a2.15 2.15 0 1 0 -4.3 0M734.3 643.8a2.15 2.15 0 1 0 4.3 0a2.15 2.15 0 1 0 -4.3 0M737.1 644.0a2.15 2.15 0 1 0 4.3 0a2.15 2.15 0 1 0 -4.3 0M739.9 644.1a2.15 2.15 0 1 0 4.3 0a2.15 2.15 0 1 0 -4.3 0M742.7 643.8a2.15 2.15 0 1 0 4.3 0a2.15 2.15 0 1 0 -4.3 0M745.5 643.9a2.15 2.15 0 1 0 4.3 0a2.15 2.15 0 1 0 -4.3 0M748.3 644.1a2.15 2.15 0 1 0 4.3 0a2.15 2.15 0 1 0 -4.3 0M751.1 643.9a2.15 2.15 0 1 0 4.3 0a2.15 2.15 0 1 0 -4.3 0M753.9 643.5a2.15 2.15 0 1 0 4.3 0a2.15 2.15 0 1 0 -4.3 0M756.7 644.0a2.15 2.15 0 1 0 4.3 0a2.15 2.15 0 1 0 -4.3 0M759.5 643.8a2.15 2.15 0 1 0 4.3 0a2.15 2.15 0 1 0 -4.3 0M762.3 643.9a2.15 2.15 0 1 0 4.3 0a2.15 2.15 0 1 0 -4.3 0M765.1 643.7a2.15 2.15 0 1 0 4.3 0a2.15 2.15 0 1 0 -4.3 0M767.9 643.4a2.15 2.15 0 1 0 4.3 0a2.15 2.15 0 1 0 -4.3 0M770.7 643.5a2.15 2.15 0 1 0 4.3 0a2.15 2.15 0 1 0 -4.3 0M773.5 643.8a2.15 2.15 0 1 0 4.3 0a2.15 2.15 0 1 0 -4.3 0M776.3 643.6a2.15 2.15 0 1 0 4.3 0a2.15 2.15 0 1 0 -4.3 0M779.1 643.1a2.15 2.15 0 1 0 4.3 0a2.15 2.15 0 1 0 -4.3 0M781.9 644.2a2.15 2.15 0 1 0 4.3 0a2.15 2.15 0 1 0 -4.3 0M784.7 643.6a2.15 2.15 0 1 0 4.3 0a2.15 2.15 0 1 0 -4.3 0M787.5 643.7a2.15 2.15 0 1 0 4.3 0a2.15 2.15 0 1 0 -4.3 0M790.3 644.1a2.15 2.15 0 1 0 4.3 0a2.15 2.15 0 1 0 -4.3 0M793.1 643.3a2.15 2.15 0 1 0 4.3 0a2.15 2.15 0 1 0 -4.3 0M795.9 644.4a2.15 2.15 0 1 0 4.3 0a2.15 2.15 0 1 0 -4.3 0M798.7 643.8a2.15 2.15 0 1 0 4.3 0a2.15 2.15 0 1 0 -4.3 0M801.5 644.2a2.15 2.15 0 1 0 4.3 0a2.15 2.15 0 1 0 -4.3 0M804.3 643.9a2.15 2.15 0 1 0 4.3 0a2.15 2.15 0 1 0 -4.3 0M807.1 644.2a2.15 2.15 0 1 0 4.3 0a2.15 2.15 0 1 0 -4.3 0M809.9 644.1a2.15 2.15 0 1 0 4.3 0a2.15 2.15 0 1 0 -4.3 0M812.7 644.1a2.15 2.15 0 1 0 4.3 0a2.15 2.15 0 1 0 -4.3 0M815.5 643.7a2.15 2.15 0 1 0 4.3 0a2.15 2.15 0 1 0 -4.3 0M818.3 643.8a2.15 2.15 0 1 0 4.3 0a2.15 2.15 0 1 0 -4.3 0M821.1 644.3a2.15 2.15 0 1 0 4.3 0a2.15 2.15 0 1 0 -4.3 0M823.9 644.8a2.15 2.15 0 1 0 4.3 0a2.15 2.15 0 1 0 -4.3 0M826.7 644.3a2.15 2.15 0 1 0 4.3 0a2.15 2.15 0 1 0 -4.3 0M829.5 644.7a2.15 2.15 0 1 0 4.3 0a2.15 2.15 0 1 0 -4.3 0M832.3 644.8a2.15 2.15 0 1 0 4.3 0a2.15 2.15 0 1 0 -4.3 0M835.1 645.5a2.15 2.15 0 1 0 4.3 0a2.15 2.15 0 1 0 -4.3 0M837.9 646.3a2.15 2.15 0 1 0 4.3 0a2.15 2.15 0 1 0 -4.3 0M840.7 646.1a2.15 2.15 0 1 0 4.3 0a2.15 2.15 0 1 0 -4.3 0M843.5 647.1a2.15 2.15 0 1 0 4.3 0a2.15 2.15 0 1 0 -4.3 0M846.3 647.4a2.15 2.15 0 1 0 4.3 0a2.15 2.15 0 1 0 -4.3 0M849.1 647.7a2.15 2.15 0 1 0 4.3 0a2.15 2.15 0 1 0 -4.3 0M851.9 647.5a2.15 2.15 0 1 0 4.3 0a2.15 2.15 0 1 0 -4.3 0M854.7 647.5a2.15 2.15 0 1 0 4.3 0a2.15 2.15 0 1 0 -4.3 0M857.5 647.4a2.15 2.15 0 1 0 4.3 0a2.15 2.15 0 1 0 -4.3 0M860.3 647.2a2.15 2.15 0 1 0 4.3 0a2.15 2.15 0 1 0 -4.3 0M863.1 648.1a2.15 2.15 0 1 0 4.3 0a2.15 2.15 0 1 0 -4.3 0M865.9 647.7a2.15 2.15 0 1 0 4.3 0a2.15 2.15 0 1 0 -4.3 0M868.7 647.1a2.15 2.15 0 1 0 4.3 0a2.15 2.15 0 1 0 -4.3 0M871.5 647.1a2.15 2.15 0 1 0 4.3 0a2.15 2.15 0 1 0 -4.3 0M874.3 646.4a2.15 2.15 0 1 0 4.3 0a2.15 2.15 0 1 0 -4.3 0M877.1 645.6a2.15 2.15 0 1 0 4.3 0a2.15 2.15 0 1 0 -4.3 0M879.9 645.6a2.15 2.15 0 1 0 4.3 0a2.15 2.15 0 1 0 -4.3 0M882.7 645.9a2.15 2.15 0 1 0 4.3 0a2.15 2.15 0 1 0 -4.3 0M885.5 645.9a2.15 2.15 0 1 0 4.3 0a2.15 2.15 0 1 0 -4.3 0M888.3 645.1a2.15 2.15 0 1 0 4.3 0a2.15 2.15 0 1 0 -4.3 0M891.1 644.2a2.15 2.15 0 1 0 4.3 0a2.15 2.15 0 1 0 -4.3 0M893.9 643.7a2.15 2.15 0 1 0 4.3 0a2.15 2.15 0 1 0 -4.3 0M896.7 642.6a2.15 2.15 0 1 0 4.3 0a2.15 2.15 0 1 0 -4.3 0M899.5 641.6a2.15 2.15 0 1 0 4.3 0a2.15 2.15 0 1 0 -4.3 0M902.3 641.1a2.15 2.15 0 1 0 4.3 0a2.15 2.15 0 1 0 -4.3 0M905.1 640.3a2.15 2.15 0 1 0 4.3 0a2.15 2.15 0 1 0 -4.3 0M907.9 639.5a2.15 2.15 0 1 0 4.3 0a2.15 2.15 0 1 0 -4.3 0M910.7 638.8a2.15 2.15 0 1 0 4.3 0a2.15 2.15 0 1 0 -4.3 0M913.5 638.2a2.15 2.15 0 1 0 4.3 0a2.15 2.15 0 1 0 -4.3 0M916.3 637.9a2.15 2.15 0 1 0 4.3 0a2.15 2.15 0 1 0 -4.3 0M919.1 637.6a2.15 2.15 0 1 0 4.3 0a2.15 2.15 0 1 0 -4.3 0M921.9 636.5a2.15 2.15 0 1 0 4.3 0a2.15 2.15 0 1 0 -4.3 0M924.7 636.6a2.15 2.15 0 1 0 4.3 0a2.15 2.15 0 1 0 -4.3 0M927.5 634.9a2.15 2.15 0 1 0 4.3 0a2.15 2.15 0 1 0 -4.3 0M930.3 634.8a2.15 2.15 0 1 0 4.3 0a2.15 2.15 0 1 0 -4.3 0M933.1 633.7a2.15 2.15 0 1 0 4.3 0a2.15 2.15 0 1 0 -4.3 0M935.9 633.4a2.15 2.15 0 1 0 4.3 0a2.15 2.15 0 1 0 -4.3 0M938.7 632.8a2.15 2.15 0 1 0 4.3 0a2.15 2.15 0 1 0 -4.3 0M941.5 632.3a2.15 2.15 0 1 0 4.3 0a2.15 2.15 0 1 0 -4.3 0M944.3 631.8a2.15 2.15 0 1 0 4.3 0a2.15 2.15 0 1 0 -4.3 0M947.1 630.6a2.15 2.15 0 1 0 4.3 0a2.15 2.15 0 1 0 -4.3 0M949.9 629.7a2.15 2.15 0 1 0 4.3 0a2.15 2.15 0 1 0 -4.3 0M952.7 629.4a2.15 2.15 0 1 0 4.3 0a2.15 2.15 0 1 0 -4.3 0" stroke="#ff9a30" stroke-width="1.3" fill="none" stroke-opacity="0.6"/><path d="M190.7 701.2l4.4 4.4M190.7 705.6l4.4 -4.4M239.8 616.8l4.4 4.4M239.8 621.2l4.4 -4.4M268.5 587.6l4.4 4.4M268.5 592.0l4.4 -4.4M288.6 582.4l4.4 4.4M288.6 586.8l4.4 -4.4M305.1 579.0l4.4 4.4M305.1 583.4l4.4 -4.4M317.5 576.0l4.4 4.4M317.5 580.4l4.4 -4.4M328.6 568.8l4.4 4.4M328.6 573.2l4.4 -4.4M337.7 563.8l4.4 4.4M337.7 568.2l4.4 -4.4M345.4 559.7l4.4 4.4M345.4 564.1l4.4 -4.4M353.7 555.8l4.4 4.4M353.7 560.2l4.4 -4.4M359.4 549.4l4.4 4.4M359.4 553.8l4.4 -4.4M366.6 549.4l4.4 4.4M366.6 553.8l4.4 -4.4M371.8 546.3l4.4 4.4M371.8 550.7l4.4 -4.4M376.1 546.3l4.4 4.4M376.1 550.7l4.4 -4.4M379.8 540.5l4.4 4.4M379.8 544.9l4.4 -4.4M381.1 539.0l4.4 4.4M381.1 543.4l4.4 -4.4M382.3 540.1l4.4 4.4M382.3 544.5l4.4 -4.4M383.6 540.4l4.4 4.4M383.6 544.8l4.4 -4.4M384.8 536.8l4.4 4.4M384.8 541.2l4.4 -4.4M386.1 538.1l4.4 4.4M386.1 542.5l4.4 -4.4M387.3 538.2l4.4 4.4M387.3 542.6l4.4 -4.4M388.6 534.9l4.4 4.4M388.6 539.3l4.4 -4.4M389.8 536.5l4.4 4.4M389.8 540.9l4.4 -4.4M391.1 535.6l4.4 4.4M391.1 540.0l4.4 -4.4M392.3 534.0l4.4 4.4M392.3 538.4l4.4 -4.4M393.6 536.2l4.4 4.4M393.6 540.6l4.4 -4.4M394.8 534.6l4.4 4.4M394.8 539.0l4.4 -4.4M396.1 533.5l4.4 4.4M396.1 537.9l4.4 -4.4M397.3 533.9l4.4 4.4M397.3 538.3l4.4 -4.4M398.6 533.7l4.4 4.4M398.6 538.1l4.4 -4.4M399.8 533.3l4.4 4.4M399.8 537.7l4.4 -4.4M401.1 532.7l4.4 4.4M401.1 537.1l4.4 -4.4M402.3 532.1l4.4 4.4M402.3 536.5l4.4 -4.4M403.6 530.1l4.4 4.4M403.6 534.5l4.4 -4.4M404.8 530.4l4.4 4.4M404.8 534.8l4.4 -4.4M406.1 530.5l4.4 4.4M406.1 534.9l4.4 -4.4M407.3 527.2l4.4 4.4M407.3 531.6l4.4 -4.4M408.6 531.6l4.4 4.4M408.6 536.0l4.4 -4.4M409.8 528.7l4.4 4.4M409.8 533.1l4.4 -4.4M411.1 527.6l4.4 4.4M411.1 532.0l4.4 -4.4M412.3 526.4l4.4 4.4M412.3 530.8l4.4 -4.4M413.6 528.0l4.4 4.4M413.6 532.4l4.4 -4.4M414.8 527.4l4.4 4.4M414.8 531.8l4.4 -4.4M416.1 526.3l4.4 4.4M416.1 530.7l4.4 -4.4M417.3 526.1l4.4 4.4M417.3 530.5l4.4 -4.4M418.6 525.2l4.4 4.4M418.6 529.6l4.4 -4.4M419.8 524.9l4.4 4.4M419.8 529.3l4.4 -4.4M421.1 525.1l4.4 4.4M421.1 529.5l4.4 -4.4M422.3 524.1l4.4 4.4M422.3 528.5l4.4 -4.4M423.6 524.9l4.4 4.4M423.6 529.3l4.4 -4.4M424.8 523.7l4.4 4.4M424.8 528.1l4.4 -4.4M426.1 523.5l4.4 4.4M426.1 527.9l4.4 -4.4M427.3 523.3l4.4 4.4M427.3 527.7l4.4 -4.4M428.6 523.7l4.4 4.4M428.6 528.1l4.4 -4.4M429.8 522.7l4.4 4.4M429.8 527.1l4.4 -4.4M431.1 521.9l4.4 4.4M431.1 526.3l4.4 -4.4M432.3 521.0l4.4 4.4M432.3 525.4l4.4 -4.4M433.6 520.0l4.4 4.4M433.6 524.4l4.4 -4.4M434.8 520.0l4.4 4.4M434.8 524.4l4.4 -4.4M436.1 520.6l4.4 4.4M436.1 525.0l4.4 -4.4M437.3 519.7l4.4 4.4M437.3 524.1l4.4 -4.4M438.6 518.7l4.4 4.4M438.6 523.1l4.4 -4.4M439.8 517.4l4.4 4.4M439.8 521.8l4.4 -4.4M441.1 516.8l4.4 4.4M441.1 521.2l4.4 -4.4M442.3 518.2l4.4 4.4M442.3 522.6l4.4 -4.4M443.6 518.5l4.4 4.4M443.6 522.9l4.4 -4.4M444.8 517.5l4.4 4.4M444.8 521.9l4.4 -4.4M446.1 515.4l4.4 4.4M446.1 519.8l4.4 -4.4M447.3 516.1l4.4 4.4M447.3 520.5l4.4 -4.4M448.6 516.2l4.4 4.4M448.6 520.6l4.4 -4.4M449.8 514.7l4.4 4.4M449.8 519.1l4.4 -4.4M451.1 515.6l4.4 4.4M451.1 520.0l4.4 -4.4M452.3 514.7l4.4 4.4M452.3 519.1l4.4 -4.4M453.6 513.7l4.4 4.4M453.6 518.1l4.4 -4.4M454.8 512.9l4.4 4.4M454.8 517.3l4.4 -4.4M456.1 514.6l4.4 4.4M456.1 519.0l4.4 -4.4M457.3 513.8l4.4 4.4M457.3 518.2l4.4 -4.4M458.6 512.2l4.4 4.4M458.6 516.6l4.4 -4.4M459.8 511.7l4.4 4.4M459.8 516.1l4.4 -4.4M461.1 513.2l4.4 4.4M461.1 517.6l4.4 -4.4M462.3 512.6l4.4 4.4M462.3 517.0l4.4 -4.4M463.6 511.4l4.4 4.4M463.6 515.8l4.4 -4.4M464.8 512.9l4.4 4.4M464.8 517.3l4.4 -4.4M466.1 510.7l4.4 4.4M466.1 515.1l4.4 -4.4M467.3 509.7l4.4 4.4M467.3 514.1l4.4 -4.4M468.6 511.4l4.4 4.4M468.6 515.8l4.4 -4.4M469.8 509.9l4.4 4.4M469.8 514.3l4.4 -4.4M471.1 510.1l4.4 4.4M471.1 514.5l4.4 -4.4M472.3 509.4l4.4 4.4M472.3 513.8l4.4 -4.4M473.6 508.1l4.4 4.4M473.6 512.5l4.4 -4.4M474.8 507.6l4.4 4.4M474.8 512.0l4.4 -4.4M476.1 508.3l4.4 4.4M476.1 512.7l4.4 -4.4M477.3 509.5l4.4 4.4M477.3 513.9l4.4 -4.4M478.6 506.9l4.4 4.4M478.6 511.3l4.4 -4.4M480.8 508.0l4.4 4.4M480.8 512.4l4.4 -4.4M483.3 507.0l4.4 4.4M483.3 511.4l4.4 -4.4M485.7 506.2l4.4 4.4M485.7 510.6l4.4 -4.4M488.2 505.4l4.4 4.4M488.2 509.8l4.4 -4.4M490.1 505.9l4.4 4.4M490.1 510.3l4.4 -4.4M492.6 504.7l4.4 4.4M492.6 509.1l4.4 -4.4M494.5 503.7l4.4 4.4M494.5 508.1l4.4 -4.4M496.4 504.2l4.4 4.4M496.4 508.6l4.4 -4.4M498.3 503.8l4.4 4.4M498.3 508.2l4.4 -4.4M500.2 503.7l4.4 4.4M500.2 508.1l4.4 -4.4M502.1 503.3l4.4 4.4M502.1 507.7l4.4 -4.4M503.5 502.1l4.4 4.4M503.5 506.5l4.4 -4.4M504.9 502.8l4.4 4.4M504.9 507.2l4.4 -4.4M506.4 502.7l4.4 4.4M506.4 507.1l4.4 -4.4M507.8 501.3l4.4 4.4M507.8 505.7l4.4 -4.4M509.7 501.9l4.4 4.4M509.7 506.3l4.4 -4.4M512.1 502.2l4.4 4.4M512.1 506.6l4.4 -4.4M514.0 501.4l4.4 4.4M514.0 505.8l4.4 -4.4M516.5 501.2l4.4 4.4M516.5 505.6l4.4 -4.4M519.0 499.9l4.4 4.4M519.0 504.3l4.4 -4.4M520.9 501.0l4.4 4.4M520.9 505.4l4.4 -4.4M522.8 499.8l4.4 4.4M522.8 504.2l4.4 -4.4M524.7 499.2l4.4 4.4M524.7 503.6l4.4 -4.4M526.1 499.8l4.4 4.4M526.1 504.2l4.4 -4.4M528.0 499.4l4.4 4.4M528.0 503.8l4.4 -4.4M529.9 498.7l4.4 4.4M529.9 503.1l4.4 -4.4M531.3 498.4l4.4 4.4M531.3 502.8l4.4 -4.4M533.2 498.7l4.4 4.4M533.2 503.1l4.4 -4.4M535.7 497.5l4.4 4.4M535.7 501.9l4.4 -4.4M537.1 497.8l4.4 4.4M537.1 502.2l4.4 -4.4M539.0 497.3l4.4 4.4M539.0 501.7l4.4 -4.4M541.5 498.3l4.4 4.4M541.5 502.7l4.4 -4.4M543.4 497.0l4.4 4.4M543.4 501.4l4.4 -4.4M545.3 497.2l4.4 4.4M545.3 501.6l4.4 -4.4M547.2 497.4l4.4 4.4M547.2 501.8l4.4 -4.4M549.1 496.2l4.4 4.4M549.1 500.6l4.4 -4.4M551.0 496.7l4.4 4.4M551.0 501.1l4.4 -4.4M553.5 495.8l4.4 4.4M553.5 500.2l4.4 -4.4M554.9 495.9l4.4 4.4M554.9 500.3l4.4 -4.4M556.3 495.6l4.4 4.4M556.3 500.0l4.4 -4.4M558.8 496.3l4.4 4.4M558.8 500.7l4.4 -4.4M560.2 494.9l4.4 4.4M560.2 499.3l4.4 -4.4M562.1 495.0l4.4 4.4M562.1 499.4l4.4 -4.4M564.0 495.1l4.4 4.4M564.0 499.5l4.4 -4.4M565.9 494.5l4.4 4.4M565.9 498.9l4.4 -4.4M568.4 493.3l4.4 4.4M568.4 497.7l4.4 -4.4M570.9 494.0l4.4 4.4M570.9 498.4l4.4 -4.4M572.8 493.0l4.4 4.4M572.8 497.4l4.4 -4.4M574.2 493.4l4.4 4.4M574.2 497.8l4.4 -4.4M575.6 493.7l4.4 4.4M575.6 498.1l4.4 -4.4M577.0 493.2l4.4 4.4M577.0 497.6l4.4 -4.4M579.5 493.0l4.4 4.4M579.5 497.4l4.4 -4.4M581.4 492.7l4.4 4.4M581.4 497.1l4.4 -4.4M583.3 491.7l4.4 4.4M583.3 496.1l4.4 -4.4M585.8 491.4l4.4 4.4M585.8 495.8l4.4 -4.4M587.7 491.8l4.4 4.4M587.7 496.2l4.4 -4.4M589.6 490.5l4.4 4.4M589.6 494.9l4.4 -4.4M591.5 490.4l4.4 4.4M591.5 494.8l4.4 -4.4M592.9 490.0l4.4 4.4M592.9 494.4l4.4 -4.4M594.3 490.2l4.4 4.4M594.3 494.6l4.4 -4.4M595.7 489.3l4.4 4.4M595.7 493.7l4.4 -4.4M597.6 490.1l4.4 4.4M597.6 494.5l4.4 -4.4M600.1 489.2l4.4 4.4M600.1 493.6l4.4 -4.4M601.5 488.9l4.4 4.4M601.5 493.3l4.4 -4.4M603.4 489.9l4.4 4.4M603.4 494.3l4.4 -4.4M605.3 489.0l4.4 4.4M605.3 493.4l4.4 -4.4M607.2 489.1l4.4 4.4M607.2 493.5l4.4 -4.4M609.1 487.6l4.4 4.4M609.1 492.0l4.4 -4.4M611.0 488.4l4.4 4.4M611.0 492.8l4.4 -4.4M612.9 487.6l4.4 4.4M612.9 492.0l4.4 -4.4M614.8 488.3l4.4 4.4M614.8 492.7l4.4 -4.4M616.7 487.2l4.4 4.4M616.7 491.6l4.4 -4.4M619.2 487.6l4.4 4.4M619.2 492.0l4.4 -4.4M621.1 486.9l4.4 4.4M621.1 491.3l4.4 -4.4M623.0 486.9l4.4 4.4M623.0 491.3l4.4 -4.4M624.4 487.2l4.4 4.4M624.4 491.6l4.4 -4.4M626.3 485.6l4.4 4.4M626.3 490.0l4.4 -4.4M628.8 486.4l4.4 4.4M628.8 490.8l4.4 -4.4M630.7 485.9l4.4 4.4M630.7 490.3l4.4 -4.4M632.6 485.6l4.4 4.4M632.6 490.0l4.4 -4.4M634.0 485.5l4.4 4.4M634.0 489.9l4.4 -4.4M635.5 485.2l4.4 4.4M635.5 489.6l4.4 -4.4M637.4 485.2l4.4 4.4M637.4 489.6l4.4 -4.4M639.8 485.1l4.4 4.4M639.8 489.5l4.4 -4.4M641.3 485.1l4.4 4.4M641.3 489.5l4.4 -4.4M643.2 485.1l4.4 4.4M643.2 489.5l4.4 -4.4M644.6 484.8l4.4 4.4M644.6 489.2l4.4 -4.4M646.5 485.0l4.4 4.4M646.5 489.4l4.4 -4.4M648.4 484.9l4.4 4.4M648.4 489.3l4.4 -4.4M649.8 484.2l4.4 4.4M649.8 488.6l4.4 -4.4M651.7 484.0l4.4 4.4M651.7 488.4l4.4 -4.4M653.6 484.0l4.4 4.4M653.6 488.4l4.4 -4.4M655.0 483.8l4.4 4.4M655.0 488.2l4.4 -4.4M657.5 483.8l4.4 4.4M657.5 488.2l4.4 -4.4M658.8 483.1l4.4 4.4M658.8 487.5l4.4 -4.4M661.0 483.3l4.4 4.4M661.0 487.7l4.4 -4.4M664.0 482.9l4.4 4.4M664.0 487.3l4.4 -4.4M667.9 481.8l4.4 4.4M667.9 486.2l4.4 -4.4M670.2 482.1l4.4 4.4M670.2 486.5l4.4 -4.4M673.2 481.7l4.4 4.4M673.2 486.1l4.4 -4.4M677.1 481.4l4.4 4.4M677.1 485.8l4.4 -4.4M679.3 481.3l4.4 4.4M679.3 485.7l4.4 -4.4M683.2 480.8l4.4 4.4M683.2 485.2l4.4 -4.4M686.2 480.5l4.4 4.4M686.2 484.9l4.4 -4.4M688.5 480.1l4.4 4.4M688.5 484.5l4.4 -4.4M691.5 480.5l4.4 4.4M691.5 484.9l4.4 -4.4M694.5 480.2l4.4 4.4M694.5 484.6l4.4 -4.4M697.5 480.3l4.4 4.4M697.5 484.7l4.4 -4.4M699.7 479.7l4.4 4.4M699.7 484.1l4.4 -4.4M703.6 478.3l4.4 4.4M703.6 482.7l4.4 -4.4M706.6 478.7l4.4 4.4M706.6 483.1l4.4 -4.4M709.6 478.4l4.4 4.4M709.6 482.8l4.4 -4.4M711.9 478.2l4.4 4.4M711.9 482.6l4.4 -4.4M714.1 478.0l4.4 4.4M714.1 482.4l4.4 -4.4M717.1 477.3l4.4 4.4M717.1 481.7l4.4 -4.4M719.4 477.3l4.4 4.4M719.4 481.7l4.4 -4.4M722.4 476.8l4.4 4.4M722.4 481.2l4.4 -4.4M726.3 476.7l4.4 4.4M726.3 481.1l4.4 -4.4M729.3 477.0l4.4 4.4M729.3 481.4l4.4 -4.4M732.3 475.8l4.4 4.4M732.3 480.2l4.4 -4.4M734.5 476.5l4.4 4.4M734.5 480.9l4.4 -4.4M738.4 475.3l4.4 4.4M738.4 479.7l4.4 -4.4M741.4 474.9l4.4 4.4M741.4 479.3l4.4 -4.4M744.4 474.4l4.4 4.4M744.4 478.8l4.4 -4.4M747.4 475.0l4.4 4.4M747.4 479.4l4.4 -4.4M751.3 472.9l4.4 4.4M751.3 477.3l4.4 -4.4M755.2 473.4l4.4 4.4M755.2 477.8l4.4 -4.4M757.5 473.2l4.4 4.4M757.5 477.6l4.4 -4.4M759.7 473.0l4.4 4.4M759.7 477.4l4.4 -4.4M762.7 472.6l4.4 4.4M762.7 477.0l4.4 -4.4M765.0 472.6l4.4 4.4M765.0 477.0l4.4 -4.4M768.0 472.1l4.4 4.4M768.0 476.5l4.4 -4.4M770.2 472.5l4.4 4.4M770.2 476.9l4.4 -4.4M773.2 471.8l4.4 4.4M773.2 476.2l4.4 -4.4M776.2 471.1l4.4 4.4M776.2 475.5l4.4 -4.4M780.1 471.5l4.4 4.4M780.1 475.9l4.4 -4.4M783.1 471.5l4.4 4.4M783.1 475.9l4.4 -4.4M787.0 470.4l4.4 4.4M787.0 474.8l4.4 -4.4M790.9 470.5l4.4 4.4M790.9 474.9l4.4 -4.4M793.9 469.7l4.4 4.4M793.9 474.1l4.4 -4.4M796.9 469.5l4.4 4.4M796.9 473.9l4.4 -4.4M799.9 469.2l4.4 4.4M799.9 473.6l4.4 -4.4M802.9 468.7l4.4 4.4M802.9 473.1l4.4 -4.4M805.9 468.6l4.4 4.4M805.9 473.0l4.4 -4.4M808.2 468.7l4.4 4.4M808.2 473.1l4.4 -4.4M812.1 467.7l4.4 4.4M812.1 472.1l4.4 -4.4M814.3 466.9l4.4 4.4M814.3 471.3l4.4 -4.4M816.6 467.3l4.4 4.4M816.6 471.7l4.4 -4.4M818.8 467.2l4.4 4.4M818.8 471.6l4.4 -4.4M821.8 467.2l4.4 4.4M821.8 471.6l4.4 -4.4M825.7 466.8l4.4 4.4M825.7 471.2l4.4 -4.4M828.7 466.4l4.4 4.4M828.7 470.8l4.4 -4.4M831.7 465.9l4.4 4.4M831.7 470.3l4.4 -4.4M835.6 465.0l4.4 4.4M835.6 469.4l4.4 -4.4M838.6 465.1l4.4 4.4M838.6 469.5l4.4 -4.4M841.6 465.3l4.4 4.4M841.6 469.7l4.4 -4.4M843.9 464.6l4.4 4.4M843.9 469.0l4.4 -4.4M846.9 463.6l4.4 4.4M846.9 468.0l4.4 -4.4M850.8 463.6l4.4 4.4M850.8 468.0l4.4 -4.4M853.8 464.0l4.4 4.4M853.8 468.4l4.4 -4.4M856.0 464.0l4.4 4.4M856.0 468.4l4.4 -4.4M859.0 463.4l4.4 4.4M859.0 467.8l4.4 -4.4M862.0 462.9l4.4 4.4M862.0 467.3l4.4 -4.4M865.0 463.1l4.4 4.4M865.0 467.5l4.4 -4.4M868.9 461.6l4.4 4.4M868.9 466.0l4.4 -4.4M871.2 461.8l4.4 4.4M871.2 466.2l4.4 -4.4M875.1 461.6l4.4 4.4M875.1 466.0l4.4 -4.4M878.1 461.2l4.4 4.4M878.1 465.6l4.4 -4.4M882.0 461.1l4.4 4.4M882.0 465.5l4.4 -4.4M885.0 461.0l4.4 4.4M885.0 465.4l4.4 -4.4M888.9 460.7l4.4 4.4M888.9 465.1l4.4 -4.4M892.8 460.3l4.4 4.4M892.8 464.7l4.4 -4.4M895.0 460.8l4.4 4.4M895.0 465.2l4.4 -4.4M898.9 459.6l4.4 4.4M898.9 464.0l4.4 -4.4M902.8 459.3l4.4 4.4M902.8 463.7l4.4 -4.4M905.8 459.4l4.4 4.4M905.8 463.8l4.4 -4.4M908.8 458.9l4.4 4.4M908.8 463.3l4.4 -4.4M912.7 458.7l4.4 4.4M912.7 463.1l4.4 -4.4M916.6 458.2l4.4 4.4M916.6 462.6l4.4 -4.4M918.9 458.1l4.4 4.4M918.9 462.5l4.4 -4.4M921.9 458.3l4.4 4.4M921.9 462.7l4.4 -4.4M925.8 458.4l4.4 4.4M925.8 462.8l4.4 -4.4M928.8 457.9l4.4 4.4M928.8 462.3l4.4 -4.4M931.0 457.7l4.4 4.4M931.0 462.1l4.4 -4.4M934.9 457.1l4.4 4.4M934.9 461.5l4.4 -4.4M937.9 456.6l4.4 4.4M937.9 461.0l4.4 -4.4M940.9 456.9l4.4 4.4M940.9 461.3l4.4 -4.4M943.9 456.2l4.4 4.4M943.9 460.6l4.4 -4.4M946.9 456.5l4.4 4.4M946.9 460.9l4.4 -4.4M950.8 455.5l4.4 4.4M950.8 459.9l4.4 -4.4M953.8 454.7l4.4 4.4M953.8 459.1l4.4 -4.4M956.8 455.3l4.4 4.4M956.8 459.7l4.4 -4.4M959.8 455.0l4.4 4.4M959.8 459.4l4.4 -4.4M962.8 454.9l4.4 4.4M962.8 459.3l4.4 -4.4M965.1 455.0l4.4 4.4M965.1 459.4l4.4 -4.4M968.1 454.3l4.4 4.4M968.1 458.7l4.4 -4.4M971.1 453.7l4.4 4.4M971.1 458.1l4.4 -4.4M975.0 453.0l4.4 4.4M975.0 457.4l4.4 -4.4M978.0 454.3l4.4 4.4M978.0 458.7l4.4 -4.4M981.9 453.0l4.4 4.4M981.9 457.4l4.4 -4.4M984.1 452.8l4.4 4.4M984.1 457.2l4.4 -4.4M987.1 452.9l4.4 4.4M987.1 457.3l4.4 -4.4M990.1 452.3l4.4 4.4M990.1 456.7l4.4 -4.4M994.0 452.7l4.4 4.4M994.0 457.1l4.4 -4.4M996.3 452.5l4.4 4.4M996.3 456.9l4.4 -4.4M999.3 451.6l4.4 4.4M999.3 456.0l4.4 -4.4M1001.5 452.3l4.4 4.4M1001.5 456.7l4.4 -4.4M1003.8 451.7l4.4 4.4M1003.8 456.1l4.4 -4.4M1007.7 450.6l4.4 4.4M1007.7 455.0l4.4 -4.4M1010.7 451.1l4.4 4.4M1010.7 455.5l4.4 -4.4M1014.6 450.8l4.4 4.4M1014.6 455.2l4.4 -4.4M1017.6 450.3l4.4 4.4M1017.6 454.7l4.4 -4.4M1019.8 450.8l4.4 4.4M1019.8 455.2l4.4 -4.4M1022.8 449.6l4.4 4.4M1022.8 454.0l4.4 -4.4M1025.8 449.1l4.4 4.4M1025.8 453.5l4.4 -4.4M1028.1 449.1l4.4 4.4M1028.1 453.5l4.4 -4.4M1032.0 449.2l4.4 4.4M1032.0 453.6l4.4 -4.4M1035.0 449.1l4.4 4.4M1035.0 453.5l4.4 -4.4M1038.0 448.3l4.4 4.4M1038.0 452.7l4.4 -4.4M1041.9 448.5l4.4 4.4M1041.9 452.9l4.4 -4.4" stroke="#5e0808" stroke-width="1.3" fill="none" stroke-opacity="1"/><path d="M288.5 689.7a2.15 2.15 0 1 0 4.3 0a2.15 2.15 0 1 0 -4.3 0M304.7 699.5a2.15 2.15 0 1 0 4.3 0a2.15 2.15 0 1 0 -4.3 0M328.4 771.6a2.15 2.15 0 1 0 4.3 0a2.15 2.15 0 1 0 -4.3 0M190.8 633.0a2.15 2.15 0 1 0 4.3 0a2.15 2.15 0 1 0 -4.3 0M239.8 607.0a2.15 2.15 0 1 0 4.3 0a2.15 2.15 0 1 0 -4.3 0M268.6 638.0a2.15 2.15 0 1 0 4.3 0a2.15 2.15 0 1 0 -4.3 0M317.6 625.0a2.15 2.15 0 1 0 4.3 0a2.15 2.15 0 1 0 -4.3 0M328.7 603.5a2.15 2.15 0 1 0 4.3 0a2.15 2.15 0 1 0 -4.3 0M337.8 615.6a2.15 2.15 0 1 0 4.3 0a2.15 2.15 0 1 0 -4.3 0M345.5 607.0a2.15 2.15 0 1 0 4.3 0a2.15 2.15 0 1 0 -4.3 0M353.8 604.5a2.15 2.15 0 1 0 4.3 0a2.15 2.15 0 1 0 -4.3 0M1043.8 590.7a2.15 2.15 0 1 0 4.3 0a2.15 2.15 0 1 0 -4.3 0M376.8 589.4a2.15 2.15 0 1 0 4.3 0a2.15 2.15 0 1 0 -4.3 0M386.7 587.4a2.15 2.15 0 1 0 4.3 0a2.15 2.15 0 1 0 -4.3 0M398.6 587.4a2.15 2.15 0 1 0 4.3 0a2.15 2.15 0 1 0 -4.3 0M405.6 591.4a2.15 2.15 0 1 0 4.3 0a2.15 2.15 0 1 0 -4.3 0M408.5 593.3a2.15 2.15 0 1 0 4.3 0a2.15 2.15 0 1 0 -4.3 0M411.5 591.4a2.15 2.15 0 1 0 4.3 0a2.15 2.15 0 1 0 -4.3 0M420.5 586.8a2.15 2.15 0 1 0 4.3 0a2.15 2.15 0 1 0 -4.3 0M414.5 600.3a2.15 2.15 0 1 0 4.3 0a2.15 2.15 0 1 0 -4.3 0M417.5 603.3a2.15 2.15 0 1 0 4.3 0a2.15 2.15 0 1 0 -4.3 0M424.4 601.3a2.15 2.15 0 1 0 4.3 0a2.15 2.15 0 1 0 -4.3 0M426.4 602.9a2.15 2.15 0 1 0 4.3 0a2.15 2.15 0 1 0 -4.3 0M434.4 597.7a2.15 2.15 0 1 0 4.3 0a2.15 2.15 0 1 0 -4.3 0M436.4 601.7a2.15 2.15 0 1 0 4.3 0a2.15 2.15 0 1 0 -4.3 0M443.7 595.9a2.15 2.15 0 1 0 4.3 0a2.15 2.15 0 1 0 -4.3 0M445.2 603.3a2.15 2.15 0 1 0 4.3 0a2.15 2.15 0 1 0 -4.3 0M440.2 610.2a2.15 2.15 0 1 0 4.3 0a2.15 2.15 0 1 0 -4.3 0M447.2 609.2a2.15 2.15 0 1 0 4.3 0a2.15 2.15 0 1 0 -4.3 0M451.2 605.3a2.15 2.15 0 1 0 4.3 0a2.15 2.15 0 1 0 -4.3 0M454.2 606.3a2.15 2.15 0 1 0 4.3 0a2.15 2.15 0 1 0 -4.3 0M456.8 598.3a2.15 2.15 0 1 0 4.3 0a2.15 2.15 0 1 0 -4.3 0M449.7 612.8a2.15 2.15 0 1 0 4.3 0a2.15 2.15 0 1 0 -4.3 0M429.4 618.2a2.15 2.15 0 1 0 4.3 0a2.15 2.15 0 1 0 -4.3 0M381.7 609.2a2.15 2.15 0 1 0 4.3 0a2.15 2.15 0 1 0 -4.3 0M395.0 610.2a2.15 2.15 0 1 0 4.3 0a2.15 2.15 0 1 0 -4.3 0M366.8 626.1a2.15 2.15 0 1 0 4.3 0a2.15 2.15 0 1 0 -4.3 0M359.9 608.8a2.15 2.15 0 1 0 4.3 0a2.15 2.15 0 1 0 -4.3 0M390.7 635.7a2.15 2.15 0 1 0 4.3 0a2.15 2.15 0 1 0 -4.3 0M460.2 617.2a2.15 2.15 0 1 0 4.3 0a2.15 2.15 0 1 0 -4.3 0M462.6 608.2a2.15 2.15 0 1 0 4.3 0a2.15 2.15 0 1 0 -4.3 0M466.1 614.2a2.15 2.15 0 1 0 4.3 0a2.15 2.15 0 1 0 -4.3 0M469.1 621.2a2.15 2.15 0 1 0 4.3 0a2.15 2.15 0 1 0 -4.3 0M470.7 610.8a2.15 2.15 0 1 0 4.3 0a2.15 2.15 0 1 0 -4.3 0M478.1 614.8a2.15 2.15 0 1 0 4.3 0a2.15 2.15 0 1 0 -4.3 0M479.4 618.8a2.15 2.15 0 1 0 4.3 0a2.15 2.15 0 1 0 -4.3 0M482.0 621.2a2.15 2.15 0 1 0 4.3 0a2.15 2.15 0 1 0 -4.3 0M485.0 616.8a2.15 2.15 0 1 0 4.3 0a2.15 2.15 0 1 0 -4.3 0M489.0 622.7a2.15 2.15 0 1 0 4.3 0a2.15 2.15 0 1 0 -4.3 0M497.9 616.8a2.15 2.15 0 1 0 4.3 0a2.15 2.15 0 1 0 -4.3 0M504.9 619.6a2.15 2.15 0 1 0 4.3 0a2.15 2.15 0 1 0 -4.3 0M501.9 630.1a2.15 2.15 0 1 0 4.3 0a2.15 2.15 0 1 0 -4.3 0M510.8 625.5a2.15 2.15 0 1 0 4.3 0a2.15 2.15 0 1 0 -4.3 0M513.8 640.6a2.15 2.15 0 1 0 4.3 0a2.15 2.15 0 1 0 -4.3 0M506.9 636.6a2.15 2.15 0 1 0 4.3 0a2.15 2.15 0 1 0 -4.3 0M499.9 625.7a2.15 2.15 0 1 0 4.3 0a2.15 2.15 0 1 0 -4.3 0M493.0 625.7a2.15 2.15 0 1 0 4.3 0a2.15 2.15 0 1 0 -4.3 0M520.8 625.7a2.15 2.15 0 1 0 4.3 0a2.15 2.15 0 1 0 -4.3 0M526.6 629.1a2.15 2.15 0 1 0 4.3 0a2.15 2.15 0 1 0 -4.3 0M529.6 623.5a2.15 2.15 0 1 0 4.3 0a2.15 2.15 0 1 0 -4.3 0M524.6 633.5a2.15 2.15 0 1 0 4.3 0a2.15 2.15 0 1 0 -4.3 0M533.6 638.4a2.15 2.15 0 1 0 4.3 0a2.15 2.15 0 1 0 -4.3 0M544.6 635.5a2.15 2.15 0 1 0 4.3 0a2.15 2.15 0 1 0 -4.3 0M548.6 637.0a2.15 2.15 0 1 0 4.3 0a2.15 2.15 0 1 0 -4.3 0M551.5 647.0a2.15 2.15 0 1 0 4.3 0a2.15 2.15 0 1 0 -4.3 0M556.5 642.0a2.15 2.15 0 1 0 4.3 0a2.15 2.15 0 1 0 -4.3 0M559.5 647.7a2.15 2.15 0 1 0 4.3 0a2.15 2.15 0 1 0 -4.3 0M562.7 639.6a2.15 2.15 0 1 0 4.3 0a2.15 2.15 0 1 0 -4.3 0M567.7 644.6a2.15 2.15 0 1 0 4.3 0a2.15 2.15 0 1 0 -4.3 0M570.1 640.1a2.15 2.15 0 1 0 4.3 0a2.15 2.15 0 1 0 -4.3 0M573.7 639.7a2.15 2.15 0 1 0 4.3 0a2.15 2.15 0 1 0 -4.3 0M578.8 643.7a2.15 2.15 0 1 0 4.3 0a2.15 2.15 0 1 0 -4.3 0M581.7 651.3a2.15 2.15 0 1 0 4.3 0a2.15 2.15 0 1 0 -4.3 0M586.5 652.2a2.15 2.15 0 1 0 4.3 0a2.15 2.15 0 1 0 -4.3 0M588.9 648.1a2.15 2.15 0 1 0 4.3 0a2.15 2.15 0 1 0 -4.3 0M593.0 645.8a2.15 2.15 0 1 0 4.3 0a2.15 2.15 0 1 0 -4.3 0M596.3 647.4a2.15 2.15 0 1 0 4.3 0a2.15 2.15 0 1 0 -4.3 0M601.9 653.2a2.15 2.15 0 1 0 4.3 0a2.15 2.15 0 1 0 -4.3 0M605.7 650.6a2.15 2.15 0 1 0 4.3 0a2.15 2.15 0 1 0 -4.3 0M609.5 652.9a2.15 2.15 0 1 0 4.3 0a2.15 2.15 0 1 0 -4.3 0M611.8 647.5a2.15 2.15 0 1 0 4.3 0a2.15 2.15 0 1 0 -4.3 0M615.4 654.1a2.15 2.15 0 1 0 4.3 0a2.15 2.15 0 1 0 -4.3 0M619.5 646.4a2.15 2.15 0 1 0 4.3 0a2.15 2.15 0 1 0 -4.3 0M624.7 652.8a2.15 2.15 0 1 0 4.3 0a2.15 2.15 0 1 0 -4.3 0M627.1 653.0a2.15 2.15 0 1 0 4.3 0a2.15 2.15 0 1 0 -4.3 0M631.3 659.8a2.15 2.15 0 1 0 4.3 0a2.15 2.15 0 1 0 -4.3 0M635.9 645.4a2.15 2.15 0 1 0 4.3 0a2.15 2.15 0 1 0 -4.3 0M638.6 644.6a2.15 2.15 0 1 0 4.3 0a2.15 2.15 0 1 0 -4.3 0M642.1 650.9a2.15 2.15 0 1 0 4.3 0a2.15 2.15 0 1 0 -4.3 0M646.7 645.7a2.15 2.15 0 1 0 4.3 0a2.15 2.15 0 1 0 -4.3 0M650.7 650.9a2.15 2.15 0 1 0 4.3 0a2.15 2.15 0 1 0 -4.3 0M653.9 647.3a2.15 2.15 0 1 0 4.3 0a2.15 2.15 0 1 0 -4.3 0M661.7 647.8a2.15 2.15 0 1 0 4.3 0a2.15 2.15 0 1 0 -4.3 0M667.2 650.6a2.15 2.15 0 1 0 4.3 0a2.15 2.15 0 1 0 -4.3 0M672.4 651.5a2.15 2.15 0 1 0 4.3 0a2.15 2.15 0 1 0 -4.3 0M679.6 650.3a2.15 2.15 0 1 0 4.3 0a2.15 2.15 0 1 0 -4.3 0M685.0 645.8a2.15 2.15 0 1 0 4.3 0a2.15 2.15 0 1 0 -4.3 0M690.4 659.2a2.15 2.15 0 1 0 4.3 0a2.15 2.15 0 1 0 -4.3 0M696.4 656.3a2.15 2.15 0 1 0 4.3 0a2.15 2.15 0 1 0 -4.3 0M703.4 653.9a2.15 2.15 0 1 0 4.3 0a2.15 2.15 0 1 0 -4.3 0M709.3 645.7a2.15 2.15 0 1 0 4.3 0a2.15 2.15 0 1 0 -4.3 0M714.1 655.7a2.15 2.15 0 1 0 4.3 0a2.15 2.15 0 1 0 -4.3 0M720.5 645.6a2.15 2.15 0 1 0 4.3 0a2.15 2.15 0 1 0 -4.3 0M727.2 643.8a2.15 2.15 0 1 0 4.3 0a2.15 2.15 0 1 0 -4.3 0M733.3 652.8a2.15 2.15 0 1 0 4.3 0a2.15 2.15 0 1 0 -4.3 0M739.8 648.3a2.15 2.15 0 1 0 4.3 0a2.15 2.15 0 1 0 -4.3 0M745.4 650.1a2.15 2.15 0 1 0 4.3 0a2.15 2.15 0 1 0 -4.3 0M751.5 655.7a2.15 2.15 0 1 0 4.3 0a2.15 2.15 0 1 0 -4.3 0M756.6 655.6a2.15 2.15 0 1 0 4.3 0a2.15 2.15 0 1 0 -4.3 0M763.0 659.9a2.15 2.15 0 1 0 4.3 0a2.15 2.15 0 1 0 -4.3 0M768.9 648.3a2.15 2.15 0 1 0 4.3 0a2.15 2.15 0 1 0 -4.3 0M774.2 645.0a2.15 2.15 0 1 0 4.3 0a2.15 2.15 0 1 0 -4.3 0M780.6 656.4a2.15 2.15 0 1 0 4.3 0a2.15 2.15 0 1 0 -4.3 0M786.9 654.3a2.15 2.15 0 1 0 4.3 0a2.15 2.15 0 1 0 -4.3 0M793.6 650.1a2.15 2.15 0 1 0 4.3 0a2.15 2.15 0 1 0 -4.3 0M798.7 648.2a2.15 2.15 0 1 0 4.3 0a2.15 2.15 0 1 0 -4.3 0M805.0 651.7a2.15 2.15 0 1 0 4.3 0a2.15 2.15 0 1 0 -4.3 0M811.5 660.5a2.15 2.15 0 1 0 4.3 0a2.15 2.15 0 1 0 -4.3 0M817.6 656.4a2.15 2.15 0 1 0 4.3 0a2.15 2.15 0 1 0 -4.3 0M823.4 657.8a2.15 2.15 0 1 0 4.3 0a2.15 2.15 0 1 0 -4.3 0M828.9 659.8a2.15 2.15 0 1 0 4.3 0a2.15 2.15 0 1 0 -4.3 0M835.4 647.9a2.15 2.15 0 1 0 4.3 0a2.15 2.15 0 1 0 -4.3 0M841.5 648.1a2.15 2.15 0 1 0 4.3 0a2.15 2.15 0 1 0 -4.3 0M846.2 646.4a2.15 2.15 0 1 0 4.3 0a2.15 2.15 0 1 0 -4.3 0M853.3 651.4a2.15 2.15 0 1 0 4.3 0a2.15 2.15 0 1 0 -4.3 0M858.4 647.7a2.15 2.15 0 1 0 4.3 0a2.15 2.15 0 1 0 -4.3 0M864.0 647.0a2.15 2.15 0 1 0 4.3 0a2.15 2.15 0 1 0 -4.3 0M870.4 648.4a2.15 2.15 0 1 0 4.3 0a2.15 2.15 0 1 0 -4.3 0M876.3 653.1a2.15 2.15 0 1 0 4.3 0a2.15 2.15 0 1 0 -4.3 0M883.3 654.5a2.15 2.15 0 1 0 4.3 0a2.15 2.15 0 1 0 -4.3 0M889.8 653.9a2.15 2.15 0 1 0 4.3 0a2.15 2.15 0 1 0 -4.3 0M895.3 649.1a2.15 2.15 0 1 0 4.3 0a2.15 2.15 0 1 0 -4.3 0M902.0 654.4a2.15 2.15 0 1 0 4.3 0a2.15 2.15 0 1 0 -4.3 0M908.9 649.2a2.15 2.15 0 1 0 4.3 0a2.15 2.15 0 1 0 -4.3 0M917.1 653.9a2.15 2.15 0 1 0 4.3 0a2.15 2.15 0 1 0 -4.3 0M923.0 653.8a2.15 2.15 0 1 0 4.3 0a2.15 2.15 0 1 0 -4.3 0M930.7 643.7a2.15 2.15 0 1 0 4.3 0a2.15 2.15 0 1 0 -4.3 0M936.9 646.9a2.15 2.15 0 1 0 4.3 0a2.15 2.15 0 1 0 -4.3 0M945.5 650.4a2.15 2.15 0 1 0 4.3 0a2.15 2.15 0 1 0 -4.3 0M952.1 648.8a2.15 2.15 0 1 0 4.3 0a2.15 2.15 0 1 0 -4.3 0M958.5 643.0a2.15 2.15 0 1 0 4.3 0a2.15 2.15 0 1 0 -4.3 0M965.3 648.6a2.15 2.15 0 1 0 4.3 0a2.15 2.15 0 1 0 -4.3 0M973.4 644.3a2.15 2.15 0 1 0 4.3 0a2.15 2.15 0 1 0 -4.3 0M980.5 647.8a2.15 2.15 0 1 0 4.3 0a2.15 2.15 0 1 0 -4.3 0M986.9 645.3a2.15 2.15 0 1 0 4.3 0a2.15 2.15 0 1 0 -4.3 0M992.9 637.8a2.15 2.15 0 1 0 4.3 0a2.15 2.15 0 1 0 -4.3 0M1000.9 633.3a2.15 2.15 0 1 0 4.3 0a2.15 2.15 0 1 0 -4.3 0M1008.1 633.4a2.15 2.15 0 1 0 4.3 0a2.15 2.15 0 1 0 -4.3 0M1015.3 627.5a2.15 2.15 0 1 0 4.3 0a2.15 2.15 0 1 0 -4.3 0M1021.9 627.1a2.15 2.15 0 1 0 4.3 0a2.15 2.15 0 1 0 -4.3 0M1029.0 628.7a2.15 2.15 0 1 0 4.3 0a2.15 2.15 0 1 0 -4.3 0M1036.8 633.8a2.15 2.15 0 1 0 4.3 0a2.15 2.15 0 1 0 -4.3 0" stroke="#5e0808" stroke-width="1.3" fill="none" stroke-opacity="0.75"/><polyline points="284.0,597.0 287.0,596.0 290.0,594.9 293.0,593.9 296.0,592.9 299.0,592.0 302.0,591.0 305.0,590.1 308.0,589.2 311.0,588.3 314.0,587.3 317.0,586.4 320.0,585.5 323.0,584.6 326.0,583.7 329.0,582.8 332.0,581.9 335.0,581.0 338.0,580.1 341.1,579.2 344.1,578.2 347.1,577.3 350.1,576.4 353.1,575.5 356.1,574.6 359.1,573.7 362.1,572.8 365.1,572.0 368.1,571.1 371.1,570.3 374.1,569.5 377.1,568.8 380.1,568.0 383.1,567.3 386.1,566.6 389.1,566.0 392.1,565.3 395.1,564.7 398.1,564.0 401.1,563.4 404.1,562.8 407.1,562.2 410.1,561.6 413.1,561.0 416.1,560.4 419.1,559.8 422.1,559.2 425.1,558.6 428.1,558.0 431.1,557.4 434.1,556.8 437.1,556.2 440.1,555.6 443.1,555.0 446.1,554.4 449.1,553.8 452.1,553.2 455.2,552.6 458.2,552.0 461.2,551.4 464.2,550.8 467.2,550.2 470.2,549.6 473.2,549.0 476.2,548.4 479.2,547.8 482.2,547.2 485.2,546.6 488.2,546.0 491.2,545.4 494.2,544.8 497.2,544.2 500.2,543.6 503.2,543.0 506.2,542.3 509.2,541.7 512.2,541.1 515.2,540.5 518.2,539.9 521.2,539.3 524.2,538.8 527.2,538.2 530.2,537.7 533.2,537.1 536.2,536.6 539.2,536.1 542.2,535.6 545.2,535.2 548.2,534.7 551.2,534.2 554.2,533.8 557.2,533.3 560.2,532.9 563.2,532.4 566.2,531.9 569.3,531.5 572.3,531.0 575.3,530.5 578.3,530.1 581.3,529.6 584.3,529.2 587.3,528.7 590.3,528.2 593.3,527.8 596.3,527.3 599.3,526.9 602.3,526.4 605.3,526.0 608.3,525.6 611.3,525.1 614.3,524.7 617.3,524.3 620.3,523.8 623.3,523.4 626.3,523.0 629.3,522.6 632.3,522.2 635.3,521.8 638.3,521.3 641.3,520.9 644.3,520.5 647.3,520.1 650.3,519.8 653.3,519.4 656.3,519.0 659.3,518.6 662.3,518.2 665.3,517.8 668.3,517.5 671.3,517.1 674.3,516.7 677.3,516.3 680.3,516.0 683.4,515.6 686.4,515.2 689.4,514.9 692.4,514.5 695.4,514.1 698.4,513.8 701.4,513.4 704.4,513.1 707.4,512.7 710.4,512.4 713.4,512.0 716.4,511.7 719.4,511.4 722.4,511.0 725.4,510.7 728.4,510.4 731.4,510.1 734.4,509.7 737.4,509.4 740.4,509.1 743.4,508.8 746.4,508.5 749.4,508.2 752.4,507.9 755.4,507.6 758.4,507.3 761.4,507.0 764.4,506.7 767.4,506.4 770.4,506.1 773.4,505.8 776.4,505.5 779.4,505.2 782.4,504.9 785.4,504.6 788.4,504.3 791.4,504.0 794.4,503.7 797.5,503.4 800.5,503.1 803.5,502.9 806.5,502.6 809.5,502.3 812.5,502.0 815.5,501.7 818.5,501.4 821.5,501.2 824.5,500.9 827.5,500.6 830.5,500.3 833.5,500.0 836.5,499.7 839.5,499.5 842.5,499.2 845.5,498.9 848.5,498.6 851.5,498.3 854.5,498.0 857.5,497.7 860.5,497.5 863.5,497.2 866.5,496.9 869.5,496.6 872.5,496.3 875.5,496.0 878.5,495.7 881.5,495.4 884.5,495.1 887.5,494.8 890.5,494.5 893.5,494.3 896.5,494.0 899.5,493.7 902.5,493.4 905.5,493.1 908.5,492.8 911.6,492.5 914.6,492.2 917.6,491.9 920.6,491.6 923.6,491.3 926.6,491.0 929.6,490.7 932.6,490.4 935.6,490.1 938.6,489.9 941.6,489.6 944.6,489.3 947.6,489.0 950.6,488.7 953.6,488.4 956.6,488.1 959.6,487.8 962.6,487.5 965.6,487.2" fill="none" stroke="#e83ce8" stroke-width="2" stroke-linejoin="round"/><polyline points="284.3,676.9 287.3,676.5 290.3,676.2 293.3,675.8 296.4,675.4 299.4,675.1 302.4,674.7 305.4,674.4 308.4,674.0 311.4,673.7 314.4,673.4 317.4,673.1 320.5,672.8 323.5,672.5 326.5,672.2 329.5,671.9 332.5,671.6 335.5,671.3 338.5,671.0 341.5,670.8 344.6,670.5 347.6,670.2 350.6,669.9 353.6,669.6 356.6,669.4 359.6,669.1 362.6,668.8 365.6,668.6 368.7,668.4 371.7,668.1 374.7,667.9 377.7,667.7 380.7,667.6 383.7,667.4 386.7,667.3 389.7,667.1 392.8,667.1 395.8,667.0 398.8,666.9 401.8,666.9 404.8,666.8 407.8,666.8 410.8,666.7 413.9,666.7 416.9,666.7 419.9,666.6 422.9,666.6 425.9,666.5 428.9,666.5 431.9,666.4 434.9,666.3 438.0,666.3 441.0,666.2 444.0,666.0 447.0,665.7 450.0,665.4 453.0,665.1 456.0,664.9 459.0,664.8 462.1,664.8 465.1,664.8 468.1,664.8 471.1,664.8 474.1,664.8 477.1,664.8 480.1,664.8 483.1,664.8 486.2,664.8 489.2,664.8 492.2,664.8 495.2,664.8 498.2,664.8 501.2,664.8 504.2,664.8 507.2,664.8 510.3,664.8 513.3,664.8 516.3,664.8 519.3,664.8 522.3,664.8 525.3,664.8 528.3,664.8 531.4,664.8 534.4,664.8 537.4,664.8 540.4,664.8 543.4,664.8 546.4,664.8 549.4,664.8 552.4,664.8 555.5,664.8 558.5,664.8 561.5,664.8 564.5,664.9 567.5,664.9 570.5,665.0 573.5,665.1 576.5,665.2 579.6,665.4 582.6,665.5 585.6,665.6 588.6,665.8 591.6,665.9 594.6,666.0 597.6,666.2 600.6,666.3 603.7,666.4 606.7,666.4 609.7,666.5 612.7,666.6 615.7,666.6 618.7,666.6 621.7,666.7 624.8,666.7 627.8,666.8 630.8,666.8 633.8,666.9 636.8,666.9 639.8,666.9 642.8,667.0 645.8,667.0 648.9,667.0 651.9,667.1 654.9,667.1 657.9,667.1 660.9,667.2 663.9,667.2 666.9,667.2 669.9,667.3 673.0,667.3 676.0,667.3 679.0,667.3 682.0,667.4 685.0,667.4 688.0,667.4 691.0,667.4 694.0,667.4 697.1,667.5 700.1,667.5 703.1,667.5 706.1,667.5 709.1,667.5 712.1,667.5 715.1,667.5 718.1,667.5 721.2,667.5 724.2,667.5 727.2,667.5 730.2,667.5 733.2,667.5 736.2,667.5 739.2,667.5 742.3,667.5 745.3,667.4 748.3,667.4 751.3,667.4 754.3,667.4 757.3,667.4 760.3,667.4 763.3,667.4 766.4,667.3 769.4,667.3 772.4,667.3 775.4,667.3 778.4,667.2 781.4,667.2 784.4,667.2 787.4,667.2 790.5,667.1 793.5,667.1 796.5,667.1 799.5,667.0 802.5,667.0 805.5,667.0 808.5,666.9 811.5,666.9 814.6,666.9 817.6,666.8 820.6,666.8 823.6,666.7 826.6,666.7 829.6,666.6 832.6,666.5 835.6,666.4 838.7,666.3 841.7,666.2 844.7,666.1 847.7,665.9 850.7,665.8 853.7,665.6 856.7,665.5 859.8,665.3 862.8,665.1 865.8,664.9 868.8,664.8 871.8,664.6 874.8,664.4 877.8,664.2 880.8,663.9 883.9,663.7 886.9,663.5 889.9,663.2 892.9,662.9 895.9,662.5 898.9,662.2 901.9,661.8 904.9,661.4 908.0,661.0 911.0,660.5 914.0,660.0 917.0,659.5 920.0,659.0 923.0,658.4 926.0,657.8 929.0,657.1 932.1,656.3 935.1,655.4 938.1,654.4 941.1,653.4 944.1,652.3 947.1,651.1 950.1,649.7 953.1,648.2 956.2,646.4 959.2,644.6 962.2,642.6 965.2,640.5" fill="none" stroke="#e83ce8" stroke-width="2" stroke-linejoin="round"/><polyline points="121.3,704.4 124.3,701.9 127.3,699.4 130.3,696.9 133.3,694.5 136.3,692.0 139.3,689.6 142.4,687.2 145.4,684.8 148.4,682.4 151.4,680.1 154.4,677.8 157.4,675.4 160.4,673.1 163.4,670.9 166.4,668.6 169.4,666.4 172.4,664.1 175.4,661.9 178.4,659.7 181.4,657.6 184.5,655.4 187.5,653.3 190.5,651.2 193.5,649.1 196.5,647.0 199.5,644.9 202.5,642.8 205.5,640.8 208.5,638.7 211.5,636.7 214.5,634.7 217.5,632.7 220.5,630.7 223.6,628.6 226.6,626.6 229.6,624.6 232.6,622.7 235.6,620.8 238.6,618.9 241.6,617.2 244.6,615.6 247.6,614.1 250.6,612.6 253.6,611.0 256.6,609.3 259.6,607.7 262.6,606.0 265.7,604.3 268.7,602.6 271.7,600.9 274.7,599.3 277.7,597.6 280.7,596.0 283.7,594.4 286.7,592.8 289.7,591.2 292.7,589.7 295.7,588.1 298.7,586.6 301.7,585.1 304.7,583.6 307.8,582.2 310.8,580.9 313.8,579.6 316.8,578.3 319.8,577.0 322.8,575.8 325.8,574.6 328.8,573.5 331.8,572.4 334.8,571.3 337.8,570.2 340.8,569.2 343.8,568.1 346.9,567.1 349.9,566.2 352.9,565.3 355.9,564.4 358.9,563.7 361.9,563.0 364.9,562.4 367.9,561.8 370.9,561.2 373.9,560.7 376.9,560.1 379.9,559.6 382.9,559.0 385.9,558.4 389.0,557.7 392.0,557.0 395.0,556.2 398.0,555.4 401.0,554.5 404.0,553.7 407.0,552.8 410.0,551.9 413.0,551.0 416.0,550.2 419.0,549.4 422.0,548.7 425.0,547.9 428.1,547.2 431.1,546.5 434.1,545.7 437.1,545.0 440.1,544.4 443.1,543.7 446.1,543.0 449.1,542.3 452.1,541.7 455.1,541.0 458.1,540.4 461.1,539.7 464.1,539.1 467.1,538.5 470.2,537.9 473.2,537.3 476.2,536.7 479.2,536.1 482.2,535.5 485.2,535.0 488.2,534.4 491.2,533.8 494.2,533.2 497.2,532.6 500.2,532.0 503.2,531.4 506.2,530.8 509.3,530.2 512.3,529.6 515.3,529.1 518.3,528.5 521.3,527.9 524.3,527.3 527.3,526.8 530.3,526.3 533.3,525.7 536.3,525.2 539.3,524.7 542.3,524.2 545.3,523.8 548.3,523.3 551.4,522.8 554.4,522.3 557.4,521.8 560.4,521.3 563.4,520.8 566.4,520.3 569.4,519.8 572.4,519.3 575.4,518.8 578.4,518.3 581.4,517.8 584.4,517.3 587.4,516.9 590.5,516.4 593.5,515.9 596.5,515.4 599.5,514.9 602.5,514.4 605.5,513.9 608.5,513.4 611.5,513.0 614.5,512.5 617.5,512.0 620.5,511.6 623.5,511.1 626.5,510.7 629.5,510.2 632.6,509.7 635.6,509.3 638.6,508.9 641.6,508.4 644.6,508.0 647.6,507.5 650.6,507.1 653.6,506.7 656.6,506.3 659.6,505.8 662.6,505.4 665.6,505.0 668.6,504.6 671.6,504.2 674.7,503.8 677.7,503.4 680.7,503.0 683.7,502.6 686.7,502.2 689.7,501.8 692.7,501.4 695.7,501.0 698.7,500.7 701.7,500.3 704.7,499.9 707.7,499.6 710.7,499.3 713.8,498.9 716.8,498.6 719.8,498.2 722.8,497.9 725.8,497.5 728.8,497.2 731.8,496.8 734.8,496.4 737.8,496.1 740.8,495.7 743.8,495.4 746.8,495.0 749.8,494.6 752.8,494.3 755.9,493.9 758.9,493.5 761.9,493.2 764.9,492.8 767.9,492.4 770.9,492.1 773.9,491.7 776.9,491.3 779.9,491.0 782.9,490.6 785.9,490.2 788.9,489.9 791.9,489.5 795.0,489.1 798.0,488.7 801.0,488.4 804.0,488.0 807.0,487.6 810.0,487.3 813.0,486.9 816.0,486.5 819.0,486.2 822.0,485.8 825.0,485.4 828.0,485.1 831.0,484.7 834.0,484.4 837.1,484.0 840.1,483.6 843.1,483.3 846.1,482.9 849.1,482.6 852.1,482.2 855.1,481.9 858.1,481.5 861.1,481.2 864.1,480.8 867.1,480.5 870.1,480.1 873.1,479.8 876.2,479.5 879.2,479.1 882.2,478.8 885.2,478.5 888.2,478.1 891.2,477.8 894.2,477.5 897.2,477.2 900.2,476.8 903.2,476.5 906.2,476.2 909.2,475.9 912.2,475.5 915.2,475.2 918.3,474.9 921.3,474.6 924.3,474.2 927.3,473.9 930.3,473.6 933.3,473.3 936.3,473.0 939.3,472.6 942.3,472.3 945.3,472.0 948.3,471.7 951.3,471.3 954.3,471.0 957.4,470.7 960.4,470.3 963.4,470.0 966.4,469.7 969.4,469.3 972.4,469.0 975.4,468.7 978.4,468.3 981.4,468.0 984.4,467.6 987.4,467.3 990.4,466.9 993.4,466.6 996.4,466.2 999.5,465.9 1002.5,465.5 1005.5,465.1 1008.5,464.8 1011.5,464.4 1014.5,464.0 1017.5,463.7 1020.5,463.3 1023.5,462.9 1026.5,462.5 1029.5,462.1 1032.5,461.8 1035.5,461.4 1038.5,461.0 1041.6,460.6 1044.6,460.2 1047.6,459.8 1050.6,459.4 1053.6,458.9 1056.6,458.5 1059.6,458.1 1062.6,457.6 1065.6,457.2 1068.6,456.7 1071.6,456.3 1074.6,455.8 1077.6,455.3 1080.7,454.8 1083.7,454.4 1086.7,453.9 1089.7,453.4 1092.7,453.0 1095.7,452.5 1098.7,452.1 1101.7,451.7 1104.7,451.2 1107.7,450.8 1110.7,450.4 1113.7,450.0 1116.7,449.6 1119.7,449.3 1122.8,448.9 1125.8,448.5 1128.8,448.1 1131.8,447.8 1134.8,447.4 1137.8,447.1 1140.8,446.7" fill="none" stroke="#4a2cf0" stroke-width="2" stroke-linejoin="round"/><polyline points="121.0,719.6 124.0,717.5 127.0,715.4 130.0,713.4 133.0,711.3 136.0,709.3 139.0,707.2 142.1,705.2 145.1,703.2 148.1,701.3 151.1,699.3 154.1,697.3 157.1,695.3 160.1,693.2 163.1,691.2 166.1,689.2 169.1,687.3 172.1,685.4 175.1,683.6 178.1,681.9 181.1,680.3 184.2,678.9 187.2,677.5 190.2,676.2 193.2,674.9 196.2,673.7 199.2,672.5 202.2,671.4 205.2,670.3 208.2,669.2 211.2,668.1 214.2,667.1 217.2,666.1 220.2,665.0 223.3,664.0 226.3,663.0 229.3,662.0 232.3,661.0 235.3,660.1 238.3,659.2 241.3,658.4 244.3,657.6 247.3,656.9 250.3,656.3 253.3,655.6 256.3,655.0 259.3,654.3 262.3,653.7 265.4,653.1 268.4,652.5 271.4,652.0 274.4,651.6 277.4,651.3 280.4,651.1 283.4,651.0 286.4,651.0 289.4,651.0 292.4,651.0 295.4,651.0 298.4,651.0 301.4,651.0 304.4,651.0 307.5,651.0 310.5,651.0 313.5,651.1 316.5,651.1 319.5,651.1 322.5,651.1 325.5,651.1 328.5,651.1 331.5,651.2 334.5,651.2 337.5,651.2 340.5,651.4 343.5,651.6 346.6,651.9 349.6,652.2 352.6,652.6 355.6,652.9 358.6,653.3 361.6,653.7 364.6,654.0 367.6,654.4 370.6,654.8 373.6,655.2 376.6,655.6 379.6,656.0 382.6,656.4 385.6,656.7 388.7,657.1 391.7,657.5 394.7,657.8 397.7,658.1 400.7,658.4 403.7,658.8 406.7,659.1 409.7,659.4 412.7,659.7 415.7,659.9 418.7,660.2 421.7,660.4 424.7,660.6 427.8,660.8 430.8,661.0 433.8,661.2 436.8,661.4 439.8,661.6 442.8,661.8 445.8,662.0 448.8,662.2 451.8,662.4 454.8,662.6 457.8,662.8 460.8,662.9 463.8,663.1 466.8,663.3 469.9,663.5 472.9,663.6 475.9,663.8 478.9,663.9 481.9,664.0 484.9,664.1 487.9,664.2 490.9,664.2 493.9,664.3 496.9,664.4 499.9,664.4 502.9,664.5 505.9,664.5 509.0,664.6 512.0,664.6 515.0,664.7 518.0,664.8 521.0,664.8 524.0,664.9 527.0,665.0 530.0,665.0 533.0,665.1 536.0,665.1 539.0,665.2 542.0,665.3 545.0,665.3 548.0,665.4 551.1,665.5 554.1,665.5 557.1,665.6 560.1,665.7 563.1,665.7 566.1,665.8 569.1,665.8 572.1,665.9 575.1,666.0 578.1,666.0 581.1,666.1 584.1,666.2 587.1,666.3 590.2,666.3 593.2,666.4 596.2,666.5 599.2,666.5 602.2,666.6 605.2,666.7 608.2,666.8 611.2,666.8 614.2,666.9 617.2,667.0 620.2,667.1 623.2,667.3 626.2,667.4 629.2,667.5 632.3,667.6 635.3,667.7 638.3,667.8 641.3,667.9 644.3,667.9 647.3,668.0 650.3,668.0 653.3,668.0 656.3,668.0 659.3,668.0 662.3,668.1 665.3,668.1 668.3,668.1 671.3,668.1 674.4,668.1 677.4,668.1 680.4,668.1 683.4,668.1 686.4,668.2 689.4,668.2 692.4,668.2 695.4,668.2 698.4,668.2 701.4,668.2 704.4,668.2 707.4,668.2 710.4,668.2 713.5,668.2 716.5,668.2 719.5,668.2 722.5,668.2 725.5,668.2 728.5,668.2 731.5,668.2 734.5,668.2 737.5,668.2 740.5,668.1 743.5,668.1 746.5,668.1 749.5,668.1 752.5,668.0 755.6,668.0 758.6,668.0 761.6,668.0 764.6,667.9 767.6,667.9 770.6,667.9 773.6,667.8 776.6,667.8 779.6,667.7 782.6,667.7 785.6,667.7 788.6,667.6 791.6,667.6 794.7,667.5 797.7,667.5 800.7,667.5 803.7,667.4 806.7,667.4 809.7,667.3 812.7,667.3 815.7,667.3 818.7,667.2 821.7,667.2 824.7,667.1 827.7,667.1 830.7,667.1 833.7,667.0 836.8,667.0 839.8,667.0 842.8,666.9 845.8,666.9 848.8,666.8 851.8,666.7 854.8,666.7 857.8,666.6 860.8,666.5 863.8,666.3 866.8,666.1 869.8,665.9 872.8,665.6 875.9,665.4 878.9,665.1 881.9,664.8 884.9,664.5 887.9,664.2 890.9,663.9 893.9,663.7 896.9,663.4 899.9,663.2 902.9,662.9 905.9,662.6 908.9,662.3 911.9,661.9 914.9,661.5 918.0,661.0 921.0,660.4 924.0,659.7 927.0,659.0 930.0,658.4 933.0,657.8 936.0,657.4 939.0,657.0 942.0,656.6 945.0,656.1 948.0,655.5 951.0,654.8 954.0,653.9 957.1,653.1 960.1,652.4 963.1,651.6 966.1,650.9 969.1,650.1 972.1,649.4 975.1,648.6 978.1,647.9 981.1,647.1 984.1,646.3 987.1,645.5 990.1,644.6 993.1,643.7 996.1,642.8 999.2,641.9 1002.2,641.0 1005.2,640.1 1008.2,639.2 1011.2,638.3 1014.2,637.5 1017.2,636.7 1020.2,636.0 1023.2,635.2 1026.2,634.5 1029.2,633.8 1032.2,633.1 1035.2,632.4 1038.2,631.7 1041.3,631.1 1044.3,630.5 1047.3,629.9 1050.3,629.4 1053.3,628.9 1056.3,628.4 1059.3,628.0 1062.3,627.6 1065.3,627.2 1068.3,626.9 1071.3,626.5 1074.3,626.2 1077.3,625.9 1080.4,625.6 1083.4,625.3 1086.4,625.0 1089.4,624.7 1092.4,624.5 1095.4,624.2 1098.4,624.0 1101.4,623.8 1104.4,623.6 1107.4,623.3 1110.4,623.1 1113.4,622.9 1116.4,622.7 1119.4,622.5 1122.5,622.4 1125.5,622.2 1128.5,622.0 1131.5,621.9 1134.5,621.7 1137.5,621.6 1140.5,621.5" fill="none" stroke="#4a2cf0" stroke-width="2" stroke-linejoin="round"/><polyline points="284.6,624.8 287.6,623.7 290.6,622.7 293.6,621.6 296.6,620.5 299.6,619.4 302.6,618.4 305.6,617.3 308.6,616.3 311.6,615.2 314.6,614.1 317.6,613.1 320.6,612.0 323.6,610.9 326.6,609.9 329.6,608.8 332.6,607.8 335.6,606.7 338.6,605.7 341.6,604.6 344.6,603.6 347.7,602.5 350.7,601.5 353.7,600.4 356.7,599.4 359.7,598.3 362.7,597.3 365.7,596.3 368.7,595.2 371.7,594.2 374.7,593.2 377.7,592.2 380.7,591.1 383.7,590.1 386.7,589.1 389.7,588.0 392.7,587.0 395.7,585.9 398.7,584.9 401.7,583.8 404.7,582.7 407.7,581.7 410.7,580.6 413.7,579.5 416.7,578.5 419.7,577.4 422.7,576.3 425.7,575.3 428.7,574.2 431.7,573.2 434.7,572.2 437.7,571.2 440.7,570.3 443.7,569.3 446.7,568.4 449.7,567.5 452.7,566.6 455.7,565.7 458.7,564.9 461.7,564.0 464.7,563.2 467.8,562.4 470.8,561.6 473.8,560.8 476.8,560.0 479.8,559.3 482.8,558.6 485.8,557.9 488.8,557.2 491.8,556.6 494.8,555.9 497.8,555.3 500.8,554.7 503.8,554.2 506.8,553.6 509.8,553.1 512.8,552.6 515.8,552.1 518.8,551.6 521.8,551.2 524.8,550.8 527.8,550.4 530.8,550.0 533.8,549.7 536.8,549.4 539.8,549.0 542.8,548.7 545.8,548.4 548.8,548.0 551.8,547.7 554.8,547.3 557.8,547.0 560.8,546.6 563.8,546.2 566.8,545.8 569.8,545.4 572.8,544.9 575.8,544.5 578.8,544.0 581.8,543.6 584.8,543.1 587.9,542.7 590.9,542.2 593.9,541.7 596.9,541.2 599.9,540.7 602.9,540.1 605.9,539.6 608.9,539.1 611.9,538.6 614.9,538.0 617.9,537.5 620.9,536.9 623.9,536.4 626.9,535.8 629.9,535.3 632.9,534.7 635.9,534.2 638.9,533.6 641.9,533.1 644.9,532.6 647.9,532.1 650.9,531.5 653.9,531.1 656.9,530.6 659.9,530.1 662.9,529.6 665.9,529.1 668.9,528.6 671.9,528.2 674.9,527.7 677.9,527.3 680.9,526.8 683.9,526.3 686.9,525.9 689.9,525.5 692.9,525.0 695.9,524.6 698.9,524.2 701.9,523.7 704.9,523.3 708.0,522.9 711.0,522.5 714.0,522.1 717.0,521.7 720.0,521.3 723.0,520.9 726.0,520.5 729.0,520.2 732.0,519.8 735.0,519.4 738.0,519.0 741.0,518.7 744.0,518.3 747.0,517.9 750.0,517.6 753.0,517.2 756.0,516.8 759.0,516.5 762.0,516.1 765.0,515.7 768.0,515.4 771.0,515.0 774.0,514.6 777.0,514.2 780.0,513.9 783.0,513.5 786.0,513.1 789.0,512.8 792.0,512.4 795.0,512.0 798.0,511.6 801.0,511.3 804.0,510.9 807.0,510.5 810.0,510.2 813.0,509.8 816.0,509.4 819.0,509.0 822.0,508.7 825.0,508.3 828.1,507.9 831.1,507.6 834.1,507.2 837.1,506.8 840.1,506.4 843.1,506.1 846.1,505.7 849.1,505.3 852.1,505.0 855.1,504.6 858.1,504.2 861.1,503.9 864.1,503.5 867.1,503.1 870.1,502.8 873.1,502.4 876.1,502.0 879.1,501.7 882.1,501.3 885.1,500.9 888.1,500.5 891.1,500.2 894.1,499.8 897.1,499.4 900.1,499.1 903.1,498.7 906.1,498.3 909.1,498.0 912.1,497.6 915.1,497.2 918.1,496.8 921.1,496.5 924.1,496.1 927.1,495.7 930.1,495.4 933.1,495.0 936.1,494.6 939.1,494.3 942.1,493.9 945.1,493.5 948.2,493.2 951.2,492.8 954.2,492.4 957.2,492.1 960.2,491.7 963.2,491.4 966.2,491.0 969.2,490.6 972.2,490.3 975.2,489.9 978.2,489.6 981.2,489.2 984.2,488.8 987.2,488.5 990.2,488.1 993.2,487.8 996.2,487.4 999.2,487.1 1002.2,486.7 1005.2,486.4 1008.2,486.1 1011.2,485.7 1014.2,485.4 1017.2,485.1 1020.2,484.8 1023.2,484.4 1026.2,484.1 1029.2,483.8 1032.2,483.4 1035.2,483.1 1038.2,482.8 1041.2,482.4 1044.2,482.1 1047.2,481.7 1050.2,481.4 1053.2,481.0 1056.2,480.6 1059.2,480.2 1062.2,479.8 1065.2,479.4 1068.3,479.0 1071.3,478.6 1074.3,478.1 1077.3,477.7 1080.3,477.3 1083.3,476.9 1086.3,476.5 1089.3,476.0 1092.3,475.6 1095.3,475.2 1098.3,474.9 1101.3,474.5 1104.3,474.1 1107.3,473.8 1110.3,473.4 1113.3,473.1 1116.3,472.8 1119.3,472.5 1122.3,472.2 1125.3,471.9 1128.3,471.6" fill="none" stroke="#2aeab0" stroke-width="2" stroke-linejoin="round"/><polyline points="284.3,690.8 287.3,690.3 290.3,689.8 293.3,689.3 296.3,688.8 299.3,688.2 302.3,687.7 305.4,687.1 308.4,686.5 311.4,685.9 314.4,685.2 317.4,684.5 320.4,683.8 323.4,683.0 326.4,682.3 329.4,681.6 332.4,681.0 335.4,680.4 338.4,679.9 341.5,679.4 344.5,678.9 347.5,678.4 350.5,677.9 353.5,677.5 356.5,677.1 359.5,676.7 362.5,676.3 365.5,675.9 368.5,675.6 371.5,675.3 374.5,675.0 377.6,674.7 380.6,674.4 383.6,674.1 386.6,673.9 389.6,673.6 392.6,673.3 395.6,672.9 398.6,672.6 401.6,672.3 404.6,672.0 407.6,671.7 410.6,671.4 413.7,671.1 416.7,670.8 419.7,670.5 422.7,670.3 425.7,670.1 428.7,669.9 431.7,669.7 434.7,669.5 437.7,669.3 440.7,669.2 443.7,669.0 446.7,668.7 449.8,668.5 452.8,668.3 455.8,668.1 458.8,667.9 461.8,667.7 464.8,667.5 467.8,667.2 470.8,667.0 473.8,666.8 476.8,666.6 479.8,666.4 482.8,666.2 485.9,666.0 488.9,665.8 491.9,665.7 494.9,665.5 497.9,665.4 500.9,665.3 503.9,665.1 506.9,665.0 509.9,665.0 512.9,664.9 515.9,664.8 518.9,664.7 521.9,664.6 525.0,664.5 528.0,664.5 531.0,664.4 534.0,664.3 537.0,664.2 540.0,664.2 543.0,664.1 546.0,664.0 549.0,664.0 552.0,663.9 555.0,663.8 558.0,663.8 561.1,663.7 564.1,663.6 567.1,663.6 570.1,663.5 573.1,663.5 576.1,663.4 579.1,663.4 582.1,663.3 585.1,663.3 588.1,663.2 591.1,663.2 594.1,663.1 597.2,663.1 600.2,663.0 603.2,663.0 606.2,663.0 609.2,663.0 612.2,662.9 615.2,662.9 618.2,662.9 621.2,662.9 624.2,662.8 627.2,662.8 630.2,662.8 633.3,662.8 636.3,662.8 639.3,662.8 642.3,662.8 645.3,662.8 648.3,662.8 651.3,662.8 654.3,662.8 657.3,662.8 660.3,662.8 663.3,662.8 666.3,662.8 669.4,662.8 672.4,662.8 675.4,662.8 678.4,662.8 681.4,662.8 684.4,662.8 687.4,662.8 690.4,662.8 693.4,662.8 696.4,662.8 699.4,662.8 702.4,662.8 705.5,662.8 708.5,662.8 711.5,662.8 714.5,662.8 717.5,662.8 720.5,662.8 723.5,662.8 726.5,662.8 729.5,662.8 732.5,662.9 735.5,662.9 738.5,662.9 741.5,662.9 744.6,662.9 747.6,662.9 750.6,662.9 753.6,662.9 756.6,662.9 759.6,662.9 762.6,662.9 765.6,662.9 768.6,662.9 771.6,662.9 774.6,662.9 777.6,662.9 780.7,662.9 783.7,662.9 786.7,662.9 789.7,662.9 792.7,662.9 795.7,662.9 798.7,662.9 801.7,662.9 804.7,662.9 807.7,662.9 810.7,662.9 813.7,662.9 816.8,662.9 819.8,662.9 822.8,662.9 825.8,662.9 828.8,662.9 831.8,662.8 834.8,662.8 837.8,662.8 840.8,662.7 843.8,662.7 846.8,662.6 849.8,662.5 852.9,662.5 855.9,662.4 858.9,662.3 861.9,662.2 864.9,662.2 867.9,662.1 870.9,662.0 873.9,661.8 876.9,661.7 879.9,661.5 882.9,661.3 885.9,661.0 889.0,660.7 892.0,660.4 895.0,660.1 898.0,659.7 901.0,659.4 904.0,659.0 907.0,658.6 910.0,658.2 913.0,657.8 916.0,657.2 919.0,656.7 922.0,656.1 925.0,655.4 928.1,654.7 931.1,654.0 934.1,653.2 937.1,652.4 940.1,651.4 943.1,650.4 946.1,649.3 949.1,648.3 952.1,647.3 955.1,646.2 958.1,645.2 961.1,644.1 964.2,643.0 967.2,642.0 970.2,641.1 973.2,640.2 976.2,639.4 979.2,638.6 982.2,637.9 985.2,637.1 988.2,636.4 991.2,635.7 994.2,634.9 997.2,634.2 1000.3,633.4 1003.3,632.5 1006.3,631.7 1009.3,630.9 1012.3,630.1 1015.3,629.3 1018.3,628.7 1021.3,628.0 1024.3,627.5 1027.3,626.9 1030.3,626.4 1033.3,625.8 1036.4,625.4 1039.4,624.9 1042.4,624.5 1045.4,624.1 1048.4,623.7 1051.4,623.3 1054.4,623.0 1057.4,622.7 1060.4,622.3 1063.4,622.0 1066.4,621.7 1069.4,621.4 1072.5,621.1 1075.5,620.8 1078.5,620.5 1081.5,620.2 1084.5,619.9 1087.5,619.7 1090.5,619.4 1093.5,619.2 1096.5,618.9 1099.5,618.7 1102.5,618.5 1105.5,618.3 1108.6,618.1 1111.6,618.0 1114.6,617.8 1117.6,617.7 1120.6,617.6 1123.6,617.5 1126.6,617.4" fill="none" stroke="#2aeab0" stroke-width="2" stroke-linejoin="round"/><polyline points="284.3,695.6 287.3,693.1 290.3,690.6 293.3,688.1 296.3,685.6 299.3,683.1 302.3,680.7 305.3,678.2 308.3,675.8 311.3,673.3 314.3,670.9 317.4,668.4 320.4,666.0 323.4,663.6 326.4,661.2 329.4,658.8 332.4,656.4 335.4,654.1 338.4,651.7 341.4,649.4 344.4,647.1 347.4,644.7 350.4,642.4 353.4,640.2 356.4,638.0 359.4,635.8 362.4,633.8 365.4,631.8 368.4,629.8 371.4,627.9 374.4,626.1 377.4,624.3 380.5,622.5 383.5,620.8 386.5,619.1 389.5,617.4 392.5,615.7 395.5,614.0 398.5,612.4 401.5,610.8 404.5,609.2 407.5,607.6 410.5,606.1 413.5,604.5 416.5,603.0 419.5,601.5 422.5,600.1 425.5,598.7 428.5,597.3 431.5,595.9 434.5,594.6 437.5,593.2 440.5,591.8 443.6,590.5 446.6,589.1 449.6,587.8 452.6,586.4 455.6,585.1 458.6,583.7 461.6,582.3 464.6,580.9 467.6,579.4 470.6,577.9 473.6,576.4 476.6,574.9 479.6,573.5 482.6,572.0 485.6,570.5 488.6,569.1 491.6,567.8 494.6,566.5 497.6,565.2 500.6,564.0 503.6,562.9 506.7,561.9 509.7,561.0 512.7,560.1 515.7,559.3 518.7,558.5 521.7,557.8 524.7,557.1 527.7,556.4 530.7,555.7 533.7,555.1 536.7,554.4 539.7,553.8 542.7,553.3 545.7,552.7 548.7,552.1 551.7,551.6 554.7,551.0 557.7,550.5 560.7,549.8 563.7,549.2 566.7,548.6 569.8,548.0 572.8,547.3 575.8,546.6 578.8,546.0 581.8,545.3 584.8,544.7 587.8,544.1 590.8,543.4 593.8,542.8 596.8,542.1 599.8,541.5 602.8,540.8 605.8,540.2 608.8,539.6 611.8,539.0 614.8,538.4 617.8,537.8 620.8,537.3 623.8,536.7 626.8,536.1 629.8,535.6 632.9,535.0 635.9,534.5 638.9,533.9 641.9,533.4 644.9,532.9 647.9,532.4 650.9,531.9 653.9,531.4 656.9,530.9 659.9,530.4 662.9,529.9 665.9,529.5 668.9,529.0 671.9,528.5 674.9,528.1 677.9,527.6 680.9,527.2 683.9,526.8 686.9,526.3 689.9,525.9 693.0,525.5 696.0,525.1 699.0,524.6 702.0,524.2 705.0,523.8 708.0,523.4 711.0,523.0 714.0,522.7 717.0,522.3 720.0,521.9 723.0,521.5 726.0,521.1 729.0,520.8 732.0,520.4 735.0,520.0 738.0,519.7 741.0,519.3 744.0,518.9 747.0,518.6 750.0,518.2 753.0,517.9 756.1,517.5 759.1,517.1 762.1,516.8 765.1,516.4 768.1,516.0 771.1,515.7 774.1,515.3 777.1,515.0 780.1,514.6 783.1,514.2 786.1,513.9 789.1,513.5 792.1,513.1 795.1,512.8 798.1,512.4 801.1,512.0 804.1,511.7 807.1,511.3 810.1,511.0 813.1,510.6 816.1,510.2 819.2,509.9 822.2,509.5 825.2,509.1 828.2,508.8 831.2,508.4 834.2,508.1 837.2,507.7 840.2,507.3 843.2,507.0 846.2,506.6 849.2,506.3 852.2,505.9 855.2,505.6 858.2,505.2 861.2,504.9 864.2,504.5 867.2,504.2 870.2,503.8 873.2,503.4 876.2,503.1 879.2,502.7 882.3,502.4 885.3,502.0 888.3,501.7 891.3,501.3 894.3,501.0 897.3,500.6 900.3,500.3 903.3,499.9 906.3,499.6 909.3,499.3 912.3,498.9 915.3,498.6 918.3,498.2 921.3,497.9 924.3,497.5 927.3,497.2 930.3,496.8 933.3,496.5 936.3,496.1 939.3,495.8 942.3,495.5 945.4,495.1 948.4,494.8 951.4,494.4 954.4,494.1 957.4,493.7 960.4,493.4 963.4,493.1 966.4,492.7 969.4,492.4 972.4,492.0 975.4,491.7 978.4,491.3 981.4,491.0 984.4,490.7 987.4,490.3 990.4,490.0 993.4,489.6 996.4,489.3 999.4,489.0 1002.4,488.6 1005.4,488.3 1008.5,487.9 1011.5,487.6 1014.5,487.3 1017.5,486.9 1020.5,486.6 1023.5,486.3 1026.5,485.9 1029.5,485.6 1032.5,485.2 1035.5,484.9 1038.5,484.6 1041.5,484.2 1044.5,483.9 1047.5,483.6 1050.5,483.2 1053.5,482.9 1056.5,482.6 1059.5,482.2 1062.5,481.9 1065.5,481.6 1068.5,481.2 1071.6,480.9 1074.6,480.6 1077.6,480.2 1080.6,479.9 1083.6,479.6 1086.6,479.3 1089.6,478.9 1092.6,478.6 1095.6,478.3 1098.6,477.9 1101.6,477.6" fill="none" stroke="#7af02a" stroke-width="2" stroke-linejoin="round"/><polyline points="284.3,711.6 287.3,709.3 290.3,707.0 293.3,704.8 296.3,702.6 299.3,700.4 302.4,698.2 305.4,696.0 308.4,693.9 311.4,691.7 314.4,689.6 317.4,687.4 320.4,685.3 323.4,683.3 326.4,681.3 329.4,679.4 332.5,677.7 335.5,676.1 338.5,674.5 341.5,672.9 344.5,671.4 347.5,670.0 350.5,668.6 353.5,667.3 356.5,665.9 359.5,664.6 362.6,663.4 365.6,662.1 368.6,660.9 371.6,659.6 374.6,658.4 377.6,657.3 380.6,656.2 383.6,655.1 386.6,654.0 389.6,653.1 392.7,652.2 395.7,651.3 398.7,650.4 401.7,649.6 404.7,648.8 407.7,648.1 410.7,647.4 413.7,646.7 416.7,646.1 419.7,645.5 422.8,644.9 425.8,644.3 428.8,643.8 431.8,643.3 434.8,642.8 437.8,642.4 440.8,642.0 443.8,641.6 446.8,641.4 449.8,641.4 452.9,641.5 455.9,641.5 458.9,641.6 461.9,641.7 464.9,641.8 467.9,642.0 470.9,642.1 473.9,642.3 476.9,642.4 479.9,642.6 483.0,642.7 486.0,642.9 489.0,643.1 492.0,643.3 495.0,643.6 498.0,643.9 501.0,644.2 504.0,644.5 507.0,644.8 510.0,645.1 513.1,645.5 516.1,645.8 519.1,646.2 522.1,646.5 525.1,646.9 528.1,647.2 531.1,647.6 534.1,647.9 537.1,648.2 540.1,648.6 543.2,648.9 546.2,649.3 549.2,649.6 552.2,650.0 555.2,650.4 558.2,650.7 561.2,651.1 564.2,651.5 567.2,651.8 570.2,652.2 573.3,652.6 576.3,652.9 579.3,653.3 582.3,653.6 585.3,654.0 588.3,654.3 591.3,654.7 594.3,655.0 597.3,655.4 600.3,655.8 603.4,656.2 606.4,656.6 609.4,657.0 612.4,657.3 615.4,657.7 618.4,658.1 621.4,658.4 624.4,658.7 627.4,659.0 630.4,659.2 633.5,659.4 636.5,659.6 639.5,659.7 642.5,659.8 645.5,659.9 648.5,659.9 651.5,660.0 654.5,660.1 657.5,660.1 660.5,660.2 663.6,660.3 666.6,660.3 669.6,660.4 672.6,660.4 675.6,660.5 678.6,660.5 681.6,660.6 684.6,660.6 687.6,660.7 690.6,660.7 693.7,660.7 696.7,660.8 699.7,660.8 702.7,660.8 705.7,660.9 708.7,660.9 711.7,660.9 714.7,661.0 717.7,661.0 720.7,661.0 723.8,661.0 726.8,661.1 729.8,661.1 732.8,661.1 735.8,661.1 738.8,661.2 741.8,661.2 744.8,661.2 747.8,661.2 750.8,661.3 753.9,661.3 756.9,661.3 759.9,661.3 762.9,661.4 765.9,661.4 768.9,661.4 771.9,661.4 774.9,661.4 777.9,661.5 780.9,661.5 784.0,661.5 787.0,661.5 790.0,661.5 793.0,661.5 796.0,661.6 799.0,661.6 802.0,661.6 805.0,661.6 808.0,661.6 811.0,661.6 814.1,661.6 817.1,661.6 820.1,661.6 823.1,661.6 826.1,661.6 829.1,661.6 832.1,661.6 835.1,661.6 838.1,661.6 841.1,661.6 844.2,661.6 847.2,661.6 850.2,661.6 853.2,661.6 856.2,661.6 859.2,661.6 862.2,661.6 865.2,661.6 868.2,661.6 871.2,661.6 874.3,661.6 877.3,661.6 880.3,661.6 883.3,661.6 886.3,661.6 889.3,661.5 892.3,661.3 895.3,661.1 898.3,660.9 901.3,660.6 904.4,660.3 907.4,660.0 910.4,659.7 913.4,659.3 916.4,659.0 919.4,658.6 922.4,658.3 925.4,657.9 928.4,657.5 931.4,657.1 934.5,656.6 937.5,656.2 940.5,655.7 943.5,655.1 946.5,654.5 949.5,653.9 952.5,653.2 955.5,652.5 958.5,651.7 961.5,650.9 964.6,650.1 967.6,649.3 970.6,648.4 973.6,647.5 976.6,646.6 979.6,645.7 982.6,644.7 985.6,643.8 988.6,642.9 991.6,642.0 994.7,641.0 997.7,640.1 1000.7,639.2 1003.7,638.3 1006.7,637.5 1009.7,636.7 1012.7,635.9 1015.7,635.2 1018.7,634.4 1021.7,633.7 1024.8,633.0 1027.8,632.3 1030.8,631.6 1033.8,630.9 1036.8,630.3 1039.8,629.6 1042.8,629.0 1045.8,628.4 1048.8,627.7 1051.8,627.1 1054.9,626.5 1057.9,625.9 1060.9,625.3 1063.9,624.8 1066.9,624.2 1069.9,623.6 1072.9,623.1 1075.9,622.5 1078.9,622.0 1081.9,621.5 1085.0,620.9 1088.0,620.4 1091.0,619.9 1094.0,619.4 1097.0,619.0 1100.0,618.5" fill="none" stroke="#7af02a" stroke-width="2" stroke-linejoin="round"/><polyline points="284.3,706.1 287.3,703.6 290.3,701.0 293.3,698.5 296.3,695.9 299.3,693.3 302.3,690.7 305.3,688.1 308.3,685.4 311.3,682.8 314.4,680.0 317.4,677.3 320.4,674.6 323.4,671.8 326.4,669.1 329.4,666.4 332.4,663.7 335.4,661.1 338.4,658.5 341.4,655.9 344.4,653.4 347.4,650.9 350.4,648.4 353.4,645.9 356.4,643.5 359.4,641.1 362.4,638.8 365.4,636.4 368.4,634.1 371.4,631.9 374.5,629.6 377.5,627.4 380.5,625.2 383.5,623.1 386.5,621.0 389.5,618.9 392.5,617.0 395.5,615.0 398.5,613.1 401.5,611.3 404.5,609.5 407.5,607.7 410.5,605.9 413.5,604.2 416.5,602.5 419.5,600.8 422.5,599.2 425.5,597.6 428.5,596.0 431.5,594.5 434.6,592.9 437.6,591.3 440.6,589.7 443.6,588.0 446.6,586.3 449.6,584.5 452.6,582.8 455.6,581.2 458.6,579.7 461.6,578.2 464.6,576.7 467.6,575.3 470.6,573.8 473.6,572.4 476.6,571.0 479.6,569.7 482.6,568.3 485.6,567.0 488.6,565.7 491.6,564.4 494.7,563.1 497.7,561.8 500.7,560.6 503.7,559.3 506.7,558.1 509.7,556.9 512.7,555.7 515.7,554.4 518.7,553.2 521.7,551.9 524.7,550.7 527.7,549.5 530.7,548.3 533.7,547.2 536.7,546.2 539.7,545.2 542.7,544.4 545.7,543.6 548.7,542.9 551.7,542.4 554.8,541.9 557.8,541.4 560.8,540.9 563.8,540.3 566.8,539.6 569.8,539.0 572.8,538.3 575.8,537.6 578.8,537.0 581.8,536.3 584.8,535.7 587.8,535.1 590.8,534.5 593.8,533.9 596.8,533.3 599.8,532.7 602.8,532.1 605.8,531.6 608.8,531.0 611.8,530.4 614.9,529.9 617.9,529.3 620.9,528.7 623.9,528.2 626.9,527.6 629.9,527.1 632.9,526.5 635.9,526.0 638.9,525.4 641.9,524.9 644.9,524.4 647.9,523.9 650.9,523.3 653.9,522.8 656.9,522.3 659.9,521.8 662.9,521.3 665.9,520.8 668.9,520.2 671.9,519.7 675.0,519.2 678.0,518.7 681.0,518.3 684.0,517.8 687.0,517.3 690.0,516.9 693.0,516.4 696.0,516.0 699.0,515.6 702.0,515.3 705.0,514.9 708.0,514.6 711.0,514.3 714.0,514.0 717.0,513.6 720.0,513.3 723.0,512.9 726.0,512.6 729.0,512.2 732.0,511.8 735.1,511.5 738.1,511.1 741.1,510.7 744.1,510.3 747.1,509.9 750.1,509.5 753.1,509.1 756.1,508.8 759.1,508.4 762.1,508.0 765.1,507.6 768.1,507.2 771.1,506.9 774.1,506.5 777.1,506.1 780.1,505.7 783.1,505.4 786.1,505.0 789.1,504.6 792.1,504.2 795.2,503.8 798.2,503.5 801.2,503.1 804.2,502.7 807.2,502.3 810.2,502.0 813.2,501.6 816.2,501.2 819.2,500.8 822.2,500.5 825.2,500.1 828.2,499.7 831.2,499.4 834.2,499.0 837.2,498.6 840.2,498.3 843.2,497.9 846.2,497.5 849.2,497.2 852.2,496.8 855.3,496.5 858.3,496.1 861.3,495.8 864.3,495.4 867.3,495.1 870.3,494.7 873.3,494.4 876.3,494.0 879.3,493.7 882.3,493.3 885.3,493.0 888.3,492.7 891.3,492.3 894.3,492.0 897.3,491.7 900.3,491.4 903.3,491.0 906.3,490.7 909.3,490.4 912.3,490.0 915.4,489.7 918.4,489.4 921.4,489.1 924.4,488.7 927.4,488.4 930.4,488.1 933.4,487.8 936.4,487.5 939.4,487.1 942.4,486.8 945.4,486.5 948.4,486.2 951.4,485.8 954.4,485.5 957.4,485.2 960.4,484.9 963.4,484.5 966.4,484.2 969.4,483.9 972.4,483.5 975.5,483.2 978.5,482.9 981.5,482.5 984.5,482.2 987.5,481.8 990.5,481.5 993.5,481.2 996.5,480.8 999.5,480.5 1002.5,480.1 1005.5,479.8 1008.5,479.4 1011.5,479.0 1014.5,478.7 1017.5,478.3 1020.5,478.0 1023.5,477.6 1026.5,477.3 1029.5,476.9 1032.5,476.5 1035.6,476.2 1038.6,475.8 1041.6,475.5 1044.6,475.1 1047.6,474.7 1050.6,474.4 1053.6,474.0 1056.6,473.6 1059.6,473.3 1062.6,472.9 1065.6,472.5 1068.6,472.1 1071.6,471.8 1074.6,471.4 1077.6,471.0 1080.6,470.6 1083.6,470.3 1086.6,469.9 1089.6,469.5 1092.6,469.1 1095.7,468.8 1098.7,468.4 1101.7,468.0 1104.7,467.6 1107.7,467.2 1110.7,466.8 1113.7,466.5 1116.7,466.1 1119.7,465.7 1122.7,465.3" fill="none" stroke="#ffd92e" stroke-width="2" stroke-linejoin="round"/><polyline points="284.3,719.3 287.3,716.9 290.3,714.4 293.3,712.0 296.3,709.5 299.3,707.0 302.3,704.4 305.3,701.9 308.3,699.3 311.4,696.7 314.4,693.9 317.4,691.2 320.4,688.4 323.4,685.7 326.4,683.1 329.4,680.6 332.4,678.2 335.4,676.0 338.4,673.9 341.4,671.8 344.4,669.7 347.4,667.8 350.4,665.8 353.4,664.0 356.4,662.1 359.5,660.4 362.5,658.6 365.5,656.9 368.5,655.3 371.5,653.7 374.5,652.1 377.5,650.5 380.5,649.0 383.5,647.6 386.5,646.2 389.5,644.9 392.5,643.7 395.5,642.5 398.5,641.3 401.5,640.2 404.5,639.1 407.6,638.0 410.6,637.0 413.6,636.1 416.6,635.2 419.6,634.3 422.6,633.5 425.6,632.7 428.6,632.0 431.6,631.3 434.6,630.6 437.6,630.0 440.6,629.5 443.6,629.0 446.6,628.5 449.6,628.0 452.6,627.6 455.6,627.3 458.7,627.0 461.7,626.8 464.7,626.6 467.7,626.4 470.7,626.4 473.7,626.5 476.7,626.6 479.7,626.7 482.7,627.0 485.7,627.2 488.7,627.5 491.7,627.8 494.7,628.2 497.7,628.5 500.7,628.9 503.7,629.3 506.8,629.6 509.8,630.0 512.8,630.4 515.8,630.9 518.8,631.4 521.8,631.9 524.8,632.5 527.8,633.1 530.8,633.6 533.8,634.2 536.8,634.7 539.8,635.3 542.8,635.9 545.8,636.5 548.8,637.2 551.8,637.8 554.9,638.5 557.9,639.1 560.9,639.7 563.9,640.4 566.9,641.0 569.9,641.6 572.9,642.1 575.9,642.6 578.9,643.1 581.9,643.5 584.9,643.9 587.9,644.2 590.9,644.6 593.9,644.8 596.9,645.1 599.9,645.4 602.9,645.6 606.0,645.8 609.0,646.1 612.0,646.3 615.0,646.5 618.0,646.7 621.0,646.9 624.0,647.1 627.0,647.3 630.0,647.5 633.0,647.7 636.0,648.0 639.0,648.2 642.0,648.5 645.0,648.8 648.0,649.0 651.0,649.3 654.1,649.6 657.1,649.9 660.1,650.2 663.1,650.5 666.1,650.8 669.1,651.1 672.1,651.4 675.1,651.7 678.1,652.0 681.1,652.3 684.1,652.5 687.1,652.8 690.1,653.0 693.1,653.2 696.1,653.4 699.1,653.6 702.2,653.9 705.2,654.1 708.2,654.3 711.2,654.5 714.2,654.7 717.2,654.9 720.2,655.0 723.2,655.2 726.2,655.4 729.2,655.6 732.2,655.7 735.2,655.9 738.2,656.1 741.2,656.2 744.2,656.4 747.2,656.5 750.2,656.6 753.3,656.7 756.3,656.9 759.3,657.0 762.3,657.1 765.3,657.2 768.3,657.3 771.3,657.4 774.3,657.5 777.3,657.6 780.3,657.6 783.3,657.7 786.3,657.8 789.3,657.9 792.3,658.0 795.3,658.0 798.3,658.1 801.4,658.2 804.4,658.2 807.4,658.3 810.4,658.3 813.4,658.4 816.4,658.4 819.4,658.5 822.4,658.5 825.4,658.6 828.4,658.6 831.4,658.7 834.4,658.7 837.4,658.7 840.4,658.8 843.4,658.8 846.4,658.9 849.4,658.9 852.5,658.9 855.5,658.9 858.5,659.0 861.5,659.0 864.5,659.0 867.5,659.0 870.5,659.0 873.5,659.0 876.5,658.9 879.5,658.8 882.5,658.7 885.5,658.6 888.5,658.5 891.5,658.3 894.5,658.1 897.5,657.9 900.6,657.7 903.6,657.5 906.6,657.3 909.6,657.1 912.6,656.8 915.6,656.5 918.6,656.1 921.6,655.6 924.6,655.2 927.6,654.8 930.6,654.3 933.6,653.9 936.6,653.5 939.6,653.1 942.6,652.7 945.6,652.3 948.7,651.9 951.7,651.4 954.7,651.0 957.7,650.4 960.7,649.8 963.7,649.1 966.7,648.3 969.7,647.5 972.7,646.6 975.7,645.7 978.7,644.8 981.7,643.9 984.7,643.0 987.7,642.1 990.7,641.2 993.7,640.2 996.7,639.3 999.8,638.3 1002.8,637.4 1005.8,636.5 1008.8,635.8 1011.8,635.0 1014.8,634.3 1017.8,633.6 1020.8,632.9 1023.8,632.2 1026.8,631.5 1029.8,630.9 1032.8,630.3 1035.8,629.6 1038.8,629.1 1041.8,628.5 1044.8,627.9 1047.9,627.4 1050.9,626.9 1053.9,626.3 1056.9,625.8 1059.9,625.3 1062.9,624.8 1065.9,624.3 1068.9,623.8 1071.9,623.3 1074.9,622.9 1077.9,622.4 1080.9,622.0 1083.9,621.5 1086.9,621.1 1089.9,620.6 1092.9,620.2 1096.0,619.8 1099.0,619.4 1102.0,619.0 1105.0,618.7 1108.0,618.3 1111.0,618.0 1114.0,617.6 1117.0,617.3 1120.0,617.0" fill="none" stroke="#ffd92e" stroke-width="2" stroke-linejoin="round"/><polyline points="121.0,611.0 124.0,609.3 127.0,607.7 130.0,606.1 133.0,604.5 136.0,602.9 139.0,601.4 142.0,599.9 145.0,598.4 148.0,596.9 151.0,595.4 154.0,593.9 157.0,592.5 160.1,591.1 163.1,589.7 166.1,588.3 169.1,587.0 172.1,585.6 175.1,584.3 178.1,583.0 181.1,581.8 184.1,580.5 187.1,579.3 190.1,578.1 193.1,577.0 196.1,575.8 199.1,574.6 202.1,573.5 205.1,572.3 208.1,571.1 211.1,570.0 214.1,568.8 217.1,567.7 220.1,566.6 223.1,565.5 226.1,564.4 229.1,563.4 232.1,562.3 235.1,561.3 238.2,560.3 241.2,559.4 244.2,558.4 247.2,557.5 250.2,556.7 253.2,555.9 256.2,555.1 259.2,554.3 262.2,553.6 265.2,552.9 268.2,552.2 271.2,551.5 274.2,550.8 277.2,550.1 280.2,549.4 283.2,548.7 286.2,548.0 289.2,547.2 292.2,546.5 295.2,545.7 298.2,544.9 301.2,544.2 304.2,543.4 307.2,542.7 310.2,542.0 313.3,541.3 316.3,540.6 319.3,539.9 322.3,539.3 325.3,538.7 328.3,538.1 331.3,537.5 334.3,536.9 337.3,536.3 340.3,535.8 343.3,535.2 346.3,534.6 349.3,534.1 352.3,533.6 355.3,533.0 358.3,532.5 361.3,532.0 364.3,531.5 367.3,530.9 370.3,530.4 373.3,529.9 376.3,529.4 379.3,528.9 382.3,528.5 385.3,528.0 388.4,527.5 391.4,527.0 394.4,526.6 397.4,526.1 400.4,525.7 403.4,525.2 406.4,524.8 409.4,524.3 412.4,523.9 415.4,523.5 418.4,523.0 421.4,522.6 424.4,522.2 427.4,521.8 430.4,521.3 433.4,520.9 436.4,520.5 439.4,520.0 442.4,519.6 445.4,519.2 448.4,518.7 451.4,518.3 454.4,517.8 457.4,517.4 460.4,516.9 463.4,516.4 466.5,516.0 469.5,515.5 472.5,515.0 475.5,514.5 478.5,514.0 481.5,513.5 484.5,513.0 487.5,512.5 490.5,512.0 493.5,511.5 496.5,511.0 499.5,510.5 502.5,510.0 505.5,509.5 508.5,509.1 511.5,508.6 514.5,508.2 517.5,507.7 520.5,507.3 523.5,506.9 526.5,506.4 529.5,506.1 532.5,505.7 535.5,505.3 538.5,505.0 541.6,504.6 544.6,504.3 547.6,504.0 550.6,503.7 553.6,503.4 556.6,503.1 559.6,502.8 562.6,502.5 565.6,502.3 568.6,502.0 571.6,501.7 574.6,501.4 577.6,501.1 580.6,500.8 583.6,500.6 586.6,500.3 589.6,500.0 592.6,499.8 595.6,499.5 598.6,499.2 601.6,498.9 604.6,498.6 607.6,498.4 610.6,498.1 613.6,497.8 616.7,497.5 619.7,497.2 622.7,496.9 625.7,496.7 628.7,496.4 631.7,496.1 634.7,495.8 637.7,495.5 640.7,495.2 643.7,494.9 646.7,494.6 649.7,494.3 652.7,494.0 655.7,493.7 658.7,493.4 661.7,493.1 664.7,492.9 667.7,492.6 670.7,492.3 673.7,492.0 676.7,491.7 679.7,491.4 682.7,491.1 685.7,490.8 688.7,490.4 691.7,490.1 694.8,489.8 697.8,489.5 700.8,489.2 703.8,488.9 706.8,488.6 709.8,488.3 712.8,488.0 715.8,487.6 718.8,487.3 721.8,487.0 724.8,486.7 727.8,486.4 730.8,486.1 733.8,485.8 736.8,485.5 739.8,485.2 742.8,484.9 745.8,484.6 748.8,484.3 751.8,484.0 754.8,483.7 757.8,483.4 760.8,483.1 763.8,482.8 766.8,482.5 769.9,482.2 772.9,482.0 775.9,481.7 778.9,481.4 781.9,481.1 784.9,480.8 787.9,480.5 790.9,480.2 793.9,479.9 796.9,479.6 799.9,479.3 802.9,479.1 805.9,478.8 808.9,478.5 811.9,478.2 814.9,477.9 817.9,477.6 820.9,477.4 823.9,477.1 826.9,476.8 829.9,476.5 832.9,476.2 835.9,475.9 838.9,475.7 841.9,475.4 845.0,475.1 848.0,474.8 851.0,474.5 854.0,474.3 857.0,474.0 860.0,473.7 863.0,473.4 866.0,473.1 869.0,472.9 872.0,472.6 875.0,472.3 878.0,472.0 881.0,471.8 884.0,471.5 887.0,471.2 890.0,470.9 893.0,470.7 896.0,470.4 899.0,470.1 902.0,469.9 905.0,469.6 908.0,469.3 911.0,469.0 914.0,468.8 917.0,468.5 920.0,468.2 923.1,468.0 926.1,467.7 929.1,467.4 932.1,467.2 935.1,466.9 938.1,466.6 941.1,466.4 944.1,466.1 947.1,465.8 950.1,465.6 953.1,465.3 956.1,465.1 959.1,464.8" fill="none" stroke="#ff9a30" stroke-width="2" stroke-linejoin="round"/><polyline points="121.0,650.6 124.0,650.2 127.0,649.9 130.0,649.5 133.0,649.2 136.0,648.9 139.0,648.6 142.0,648.2 145.0,647.9 148.0,647.6 151.1,647.4 154.1,647.1 157.1,646.8 160.1,646.5 163.1,646.3 166.1,646.0 169.1,645.8 172.1,645.5 175.1,645.3 178.1,645.0 181.1,644.8 184.1,644.5 187.1,644.3 190.1,644.1 193.1,643.9 196.1,643.8 199.1,643.7 202.1,643.7 205.1,643.7 208.1,643.8 211.2,643.8 214.2,643.9 217.2,644.0 220.2,644.1 223.2,644.2 226.2,644.3 229.2,644.5 232.2,644.6 235.2,644.7 238.2,644.9 241.2,645.0 244.2,645.2 247.2,645.4 250.2,645.6 253.2,645.8 256.2,646.1 259.2,646.4 262.2,646.6 265.2,646.9 268.2,647.2 271.3,647.5 274.3,647.8 277.3,648.0 280.3,648.2 283.3,648.5 286.3,648.6 289.3,648.8 292.3,649.0 295.3,649.2 298.3,649.3 301.3,649.5 304.3,649.6 307.3,649.8 310.3,649.9 313.3,650.1 316.3,650.2 319.3,650.4 322.3,650.5 325.3,650.6 328.3,650.7 331.4,650.9 334.4,651.0 337.4,651.1 340.4,651.2 343.4,651.3 346.4,651.4 349.4,651.5 352.4,651.7 355.4,651.8 358.4,651.9 361.4,652.0 364.4,652.1 367.4,652.2 370.4,652.3 373.4,652.4 376.4,652.5 379.4,652.6 382.4,652.6 385.4,652.7 388.4,652.8 391.5,652.9 394.5,652.9 397.5,653.0 400.5,653.0 403.5,653.1 406.5,653.1 409.5,653.1 412.5,653.2 415.5,653.2 418.5,653.3 421.5,653.3 424.5,653.3 427.5,653.4 430.5,653.4 433.5,653.5 436.5,653.5 439.5,653.5 442.5,653.6 445.5,653.6 448.5,653.6 451.6,653.6 454.6,653.7 457.6,653.7 460.6,653.7 463.6,653.7 466.6,653.8 469.6,653.8 472.6,653.8 475.6,653.8 478.6,653.9 481.6,653.9 484.6,653.9 487.6,653.9 490.6,653.9 493.6,654.0 496.6,654.0 499.6,654.0 502.6,654.0 505.6,654.0 508.6,654.1 511.7,654.1 514.7,654.1 517.7,654.1 520.7,654.1 523.7,654.1 526.7,654.2 529.7,654.2 532.7,654.2 535.7,654.2 538.7,654.2 541.7,654.2 544.7,654.3 547.7,654.3 550.7,654.3 553.7,654.3 556.7,654.3 559.7,654.3 562.7,654.4 565.7,654.4 568.8,654.4 571.8,654.4 574.8,654.4 577.8,654.4 580.8,654.4 583.8,654.4 586.8,654.5 589.8,654.5 592.8,654.5 595.8,654.5 598.8,654.5 601.8,654.5 604.8,654.5 607.8,654.5 610.8,654.5 613.8,654.6 616.8,654.6 619.8,654.6 622.8,654.6 625.8,654.6 628.9,654.6 631.9,654.6 634.9,654.6 637.9,654.6 640.9,654.6 643.9,654.6 646.9,654.6 649.9,654.6 652.9,654.6 655.9,654.6 658.9,654.6 661.9,654.6 664.9,654.6 667.9,654.6 670.9,654.6 673.9,654.6 676.9,654.6 679.9,654.6 682.9,654.6 685.9,654.6 689.0,654.6 692.0,654.6 695.0,654.6 698.0,654.6 701.0,654.6 704.0,654.6 707.0,654.6 710.0,654.5 713.0,654.5 716.0,654.5 719.0,654.5 722.0,654.5 725.0,654.5 728.0,654.5 731.0,654.5 734.0,654.5 737.0,654.5 740.0,654.5 743.0,654.5 746.0,654.4 749.1,654.4 752.1,654.4 755.1,654.4 758.1,654.4 761.1,654.4 764.1,654.4 767.1,654.4 770.1,654.4 773.1,654.3 776.1,654.3 779.1,654.3 782.1,654.3 785.1,654.2 788.1,654.1 791.1,654.0 794.1,653.8 797.1,653.6 800.1,653.4 803.1,653.1 806.1,652.9 809.2,652.6 812.2,652.3 815.2,652.0 818.2,651.7 821.2,651.4 824.2,651.0 827.2,650.5 830.2,650.0 833.2,649.4 836.2,648.8 839.2,648.2 842.2,647.6 845.2,647.0 848.2,646.3 851.2,645.6 854.2,644.9 857.2,644.2 860.2,643.4 863.2,642.6 866.2,641.8 869.3,641.0 872.3,640.2 875.3,639.3 878.3,638.5 881.3,637.6 884.3,636.7 887.3,635.9 890.3,635.0 893.3,634.2 896.3,633.4 899.3,632.6 902.3,631.8 905.3,631.0 908.3,630.3 911.3,629.6 914.3,628.9 917.3,628.2 920.3,627.6 923.3,627.0 926.3,626.3 929.4,625.7 932.4,625.1 935.4,624.5 938.4,624.0 941.4,623.4 944.4,622.8 947.4,622.3 950.4,621.7 953.4,621.2 956.4,620.7" fill="none" stroke="#ff9a30" stroke-width="2" stroke-linejoin="round"/><polyline points="121.0,743.0 124.0,739.6 127.0,736.3 130.0,733.1 133.0,729.9 136.0,726.8 139.0,723.7 142.1,720.7 145.1,717.8 148.1,714.8 151.1,712.0 154.1,709.2 157.1,706.4 160.1,703.7 163.1,701.1 166.1,698.5 169.1,695.9 172.1,693.5 175.1,691.2 178.1,689.0 181.1,686.8 184.2,684.6 187.2,682.3 190.2,679.9 193.2,677.3 196.2,674.7 199.2,672.0 202.2,669.3 205.2,666.5 208.2,663.7 211.2,660.9 214.2,658.0 217.2,655.1 220.2,652.3 223.3,649.4 226.3,646.6 229.3,643.8 232.3,641.1 235.3,638.4 238.3,635.8 241.3,633.3 244.3,630.7 247.3,628.2 250.3,625.7 253.3,623.2 256.3,620.7 259.3,618.2 262.4,615.7 265.4,613.2 268.4,610.7 271.4,608.0 274.4,605.3 277.4,602.6 280.4,600.0 283.4,597.6 286.4,595.5 289.4,593.6 292.4,591.7 295.4,589.7 298.4,587.7 301.4,585.7 304.5,583.7 307.5,581.7 310.5,579.8 313.5,577.8 316.5,575.9 319.5,574.1 322.5,572.2 325.5,570.4 328.5,568.7 331.5,566.9 334.5,565.2 337.5,563.4 340.5,561.7 343.6,559.9 346.6,558.1 349.6,556.3 352.6,554.5 355.6,552.8 358.6,551.1 361.6,549.5 364.6,548.0 367.6,546.6 370.6,545.2 373.6,543.9 376.6,542.6 379.6,541.3 382.6,540.1 385.7,538.9 388.7,537.7 391.7,536.6 394.7,535.4 397.7,534.3 400.7,533.2 403.7,532.2 406.7,531.1 409.7,530.1 412.7,529.0 415.7,528.0 418.7,527.1 421.7,526.1 424.8,525.1 427.8,524.2 430.8,523.3 433.8,522.4 436.8,521.5 439.8,520.6 442.8,519.8 445.8,518.9 448.8,518.1 451.8,517.3 454.8,516.5 457.8,515.6 460.8,514.8 463.9,514.1 466.9,513.3 469.9,512.6 472.9,511.8 475.9,511.1 478.9,510.5 481.9,509.8 484.9,509.2 487.9,508.6 490.9,508.0 493.9,507.4 496.9,506.8 499.9,506.2 502.9,505.7 506.0,505.1 509.0,504.6 512.0,504.1 515.0,503.6 518.0,503.1 521.0,502.6 524.0,502.1 527.0,501.7 530.0,501.3 533.0,500.8 536.0,500.4 539.0,500.1 542.0,499.7 545.1,499.4 548.1,499.1 551.1,498.8 554.1,498.4 557.1,498.1 560.1,497.7 563.1,497.3 566.1,496.8 569.1,496.4 572.1,495.9 575.1,495.4 578.1,494.9 581.1,494.5 584.1,494.0 587.2,493.6 590.2,493.2 593.2,492.8 596.2,492.4 599.2,492.0 602.2,491.6 605.2,491.2 608.2,490.8 611.2,490.5 614.2,490.1 617.2,489.8 620.2,489.5 623.2,489.2 626.3,488.9 629.3,488.6 632.3,488.3 635.3,488.0 638.3,487.7 641.3,487.4 644.3,487.1 647.3,486.8 650.3,486.5 653.3,486.2 656.3,485.9 659.3,485.6 662.3,485.3 665.4,485.0 668.4,484.7 671.4,484.4 674.4,484.2 677.4,483.9 680.4,483.6 683.4,483.3 686.4,483.0 689.4,482.7 692.4,482.5 695.4,482.2 698.4,481.9 701.4,481.6 704.4,481.2 707.5,480.9 710.5,480.6 713.5,480.3 716.5,480.0 719.5,479.7 722.5,479.3 725.5,479.0 728.5,478.7 731.5,478.4 734.5,478.1 737.5,477.8 740.5,477.5 743.5,477.2 746.6,476.9 749.6,476.6 752.6,476.2 755.6,475.9 758.6,475.6 761.6,475.3 764.6,475.0 767.6,474.7 770.6,474.4 773.6,474.1 776.6,473.8 779.6,473.5 782.6,473.2 785.7,472.9 788.7,472.6 791.7,472.3 794.7,471.9 797.7,471.6 800.7,471.3 803.7,471.0 806.7,470.7 809.7,470.4 812.7,470.1 815.7,469.8 818.7,469.5 821.7,469.2 824.7,468.9 827.8,468.6 830.8,468.3 833.8,468.0 836.8,467.7 839.8,467.4 842.8,467.1 845.8,466.8 848.8,466.5 851.8,466.2 854.8,466.0 857.8,465.7 860.8,465.4 863.8,465.2 866.9,464.9 869.9,464.6 872.9,464.4 875.9,464.1 878.9,463.9 881.9,463.6 884.9,463.4 887.9,463.1 890.9,462.9 893.9,462.6 896.9,462.4 899.9,462.1 902.9,461.9 905.9,461.6 909.0,461.4 912.0,461.2 915.0,460.9 918.0,460.7 921.0,460.5 924.0,460.2 927.0,460.0 930.0,459.8 933.0,459.5 936.0,459.3 939.0,459.1 942.0,458.8 945.0,458.6 948.1,458.4 951.1,458.1 954.1,457.9 957.1,457.7 960.1,457.4 963.1,457.2 966.1,457.0 969.1,456.7 972.1,456.5 975.1,456.3 978.1,456.0 981.1,455.8 984.1,455.5 987.2,455.3 990.2,455.0 993.2,454.8 996.2,454.5 999.2,454.3 1002.2,454.0 1005.2,453.8 1008.2,453.5 1011.2,453.2 1014.2,453.0 1017.2,452.7 1020.2,452.4 1023.2,452.2 1026.2,451.9 1029.3,451.6 1032.3,451.4 1035.3,451.1 1038.3,450.8 1041.3,450.5 1044.3,450.3 1047.3,450.0" fill="none" stroke="#5e0808" stroke-width="2" stroke-linejoin="round"/><polyline points="121.0,755.3 124.0,751.2 127.0,747.1 130.0,743.1 133.0,739.3 136.0,735.5 139.1,731.8 142.1,728.3 145.1,724.8 148.1,721.4 151.1,718.2 154.1,715.0 157.1,711.9 160.1,709.0 163.1,706.1 166.1,703.4 169.1,700.7 172.1,698.2 175.2,695.9 178.2,693.7 181.2,691.5 184.2,689.5 187.2,687.5 190.2,685.4 193.2,683.4 196.2,681.3 199.2,679.1 202.2,676.9 205.2,674.6 208.2,672.3 211.3,670.0 214.3,667.7 217.3,665.4 220.3,663.1 223.3,660.8 226.3,658.5 229.3,656.2 232.3,653.9 235.3,651.7 238.3,649.5 241.3,647.3 244.3,645.2 247.4,643.1 250.4,641.1 253.4,639.1 256.4,637.1 259.4,635.2 262.4,633.2 265.4,631.3 268.4,629.5 271.4,627.7 274.4,625.9 277.4,624.2 280.4,622.5 283.5,620.9 286.5,619.3 289.5,617.7 292.5,616.1 295.5,614.5 298.5,613.0 301.5,611.5 304.5,610.1 307.5,608.8 310.5,607.7 313.5,606.6 316.6,605.7 319.6,604.9 322.6,604.2 325.6,603.5 328.6,602.8 331.6,602.2 334.6,601.6 337.6,601.1 340.6,600.7 343.6,600.3 346.6,600.0 349.6,599.7 352.7,599.5 355.7,599.2 358.7,599.1 361.7,598.9 364.7,598.9 367.7,599.0 370.7,599.1 373.7,599.4 376.7,599.7 379.7,600.0 382.7,600.4 385.7,600.8 388.8,601.3 391.8,601.9 394.8,602.7 397.8,603.4 400.8,604.2 403.8,605.0 406.8,605.8 409.8,606.5 412.8,607.3 415.8,608.1 418.8,609.0 421.8,609.8 424.9,610.7 427.9,611.6 430.9,612.5 433.9,613.5 436.9,614.5 439.9,615.6 442.9,616.6 445.9,617.7 448.9,618.8 451.9,619.9 454.9,620.9 457.9,622.0 461.0,623.0 464.0,624.0 467.0,625.0 470.0,626.0 473.0,627.0 476.0,627.9 479.0,628.8 482.0,629.7 485.0,630.5 488.0,631.4 491.0,632.2 494.1,632.9 497.1,633.7 500.1,634.4 503.1,635.1 506.1,635.8 509.1,636.5 512.1,637.2 515.1,637.8 518.1,638.4 521.1,639.0 524.1,639.6 527.1,640.2 530.2,640.7 533.2,641.3 536.2,641.8 539.2,642.3 542.2,642.8 545.2,643.2 548.2,643.7 551.2,644.1 554.2,644.6 557.2,645.0 560.2,645.3 563.2,645.7 566.3,646.0 569.3,646.4 572.3,646.7 575.3,647.0 578.3,647.3 581.3,647.6 584.3,647.8 587.3,648.0 590.3,648.2 593.3,648.4 596.3,648.6 599.3,648.7 602.4,648.9 605.4,649.1 608.4,649.2 611.4,649.4 614.4,649.5 617.4,649.7 620.4,649.8 623.4,649.9 626.4,650.1 629.4,650.2 632.4,650.3 635.4,650.4 638.5,650.5 641.5,650.6 644.5,650.7 647.5,650.7 650.5,650.8 653.5,650.9 656.5,650.9 659.5,651.0 662.5,651.1 665.5,651.1 668.5,651.2 671.5,651.3 674.6,651.3 677.6,651.4 680.6,651.4 683.6,651.5 686.6,651.5 689.6,651.6 692.6,651.6 695.6,651.7 698.6,651.7 701.6,651.7 704.6,651.8 707.7,651.8 710.7,651.9 713.7,651.9 716.7,651.9 719.7,652.0 722.7,652.0 725.7,652.0 728.7,652.1 731.7,652.1 734.7,652.1 737.7,652.2 740.7,652.2 743.8,652.2 746.8,652.3 749.8,652.3 752.8,652.3 755.8,652.4 758.8,652.4 761.8,652.4 764.8,652.4 767.8,652.5 770.8,652.5 773.8,652.5 776.8,652.6 779.9,652.6 782.9,652.6 785.9,652.6 788.9,652.7 791.9,652.7 794.9,652.7 797.9,652.8 800.9,652.8 803.9,652.8 806.9,652.8 809.9,652.8 812.9,652.9 816.0,652.9 819.0,652.9 822.0,652.9 825.0,652.9 828.0,652.9 831.0,653.0 834.0,653.0 837.0,653.0 840.0,653.0 843.0,653.0 846.0,653.0 849.0,653.0 852.1,653.0 855.1,653.0 858.1,653.0 861.1,653.0 864.1,653.0 867.1,652.9 870.1,652.9 873.1,652.9 876.1,652.9 879.1,652.9 882.1,652.8 885.2,652.8 888.2,652.8 891.2,652.7 894.2,652.7 897.2,652.6 900.2,652.6 903.2,652.5 906.2,652.5 909.2,652.3 912.2,652.2 915.2,652.1 918.2,651.9 921.3,651.7 924.3,651.5 927.3,651.2 930.3,650.9 933.3,650.5 936.3,650.0 939.3,649.5 942.3,649.0 945.3,648.5 948.3,648.0 951.3,647.4 954.3,646.9 957.4,646.3 960.4,645.7 963.4,645.1 966.4,644.4 969.4,643.8 972.4,643.0 975.4,642.2 978.4,641.4 981.4,640.6 984.4,639.7 987.4,638.9 990.4,638.0 993.5,637.2 996.5,636.4 999.5,635.6 1002.5,634.8 1005.5,634.0 1008.5,633.2 1011.5,632.4 1014.5,631.6 1017.5,630.8 1020.5,630.1 1023.5,629.3 1026.5,628.6 1029.6,627.8 1032.6,627.1 1035.6,626.4 1038.6,625.7 1041.6,625.0 1044.6,624.3" fill="none" stroke="#5e0808" stroke-width="2" stroke-linejoin="round"/><line x1="72.5" y1="785.5" x2="714" y2="143.0" stroke="#000" stroke-width="2" stroke-dasharray="8 2"/><line x1="205" y1="653" x2="1535.5" y2="653" stroke="#000" stroke-width="2" stroke-dasharray="8 2"/></g><g shape-rendering="crispEdges" stroke="#444"><line x1="72.5" y1="142.0" x2="72.5" y2="967.0"/><line x1="66.0" y1="966.5" x2="1536.0" y2="966.5"/><line x1="66.0" y1="960.5" x2="72.5" y2="960.5"/><line x1="66.0" y1="950.5" x2="72.5" y2="950.5"/><line x1="66.0" y1="942.5" x2="72.5" y2="942.5"/><line x1="66.0" y1="935.5" x2="72.5" y2="935.5"/><line x1="66.0" y1="886.5" x2="72.5" y2="886.5"/><line x1="66.0" y1="857.5" x2="72.5" y2="857.5"/><line x1="66.0" y1="837.5" x2="72.5" y2="837.5"/><line x1="66.0" y1="821.5" x2="72.5" y2="821.5"/><line x1="66.0" y1="808.5" x2="72.5" y2="808.5"/><line x1="66.0" y1="797.5" x2="72.5" y2="797.5"/><line x1="66.0" y1="788.5" x2="72.5" y2="788.5"/><line x1="66.0" y1="779.5" x2="72.5" y2="779.5"/><line x1="66.0" y1="772.5" x2="72.5" y2="772.5"/><line x1="66.0" y1="723.5" x2="72.5" y2="723.5"/><line x1="66.0" y1="694.5" x2="72.5" y2="694.5"/><line x1="66.0" y1="674.5" x2="72.5" y2="674.5"/><line x1="66.0" y1="658.5" x2="72.5" y2="658.5"/><line x1="66.0" y1="645.5" x2="72.5" y2="645.5"/><line x1="66.0" y1="634.5" x2="72.5" y2="634.5"/><line x1="66.0" y1="625.5" x2="72.5" y2="625.5"/><line x1="66.0" y1="617.5" x2="72.5" y2="617.5"/><line x1="66.0" y1="609.5" x2="72.5" y2="609.5"/><line x1="66.0" y1="560.5" x2="72.5" y2="560.5"/><line x1="66.0" y1="531.5" x2="72.5" y2="531.5"/><line x1="66.0" y1="511.5" x2="72.5" y2="511.5"/><line x1="66.0" y1="495.5" x2="72.5" y2="495.5"/><line x1="66.0" y1="482.5" x2="72.5" y2="482.5"/><line x1="66.0" y1="472.5" x2="72.5" y2="472.5"/><line x1="66.0" y1="462.5" x2="72.5" y2="462.5"/><line x1="66.0" y1="454.5" x2="72.5" y2="454.5"/><line x1="66.0" y1="446.5" x2="72.5" y2="446.5"/><line x1="66.0" y1="397.5" x2="72.5" y2="397.5"/><line x1="66.0" y1="369.5" x2="72.5" y2="369.5"/><line x1="66.0" y1="348.5" x2="72.5" y2="348.5"/><line x1="66.0" y1="333.5" x2="72.5" y2="333.5"/><line x1="66.0" y1="320.5" x2="72.5" y2="320.5"/><line x1="66.0" y1="309.5" x2="72.5" y2="309.5"/><line x1="66.0" y1="299.5" x2="72.5" y2="299.5"/><line x1="66.0" y1="291.5" x2="72.5" y2="291.5"/><line x1="66.0" y1="284.5" x2="72.5" y2="284.5"/><line x1="66.0" y1="235.5" x2="72.5" y2="235.5"/><line x1="66.0" y1="206.5" x2="72.5" y2="206.5"/><line x1="66.0" y1="186.5" x2="72.5" y2="186.5"/><line x1="66.0" y1="170.5" x2="72.5" y2="170.5"/><line x1="66.0" y1="157.5" x2="72.5" y2="157.5"/><line x1="66.0" y1="146.5" x2="72.5" y2="146.5"/><line x1="66.0" y1="142.5" x2="72.5" y2="142.5"/><line x1="121.5" y1="966.5" x2="121.5" y2="973.0"/><line x1="284.5" y1="966.5" x2="284.5" y2="973.0"/><line x1="446.5" y1="966.5" x2="446.5" y2="973.0"/><line x1="609.5" y1="966.5" x2="609.5" y2="973.0"/><line x1="771.5" y1="966.5" x2="771.5" y2="973.0"/><line x1="934.5" y1="966.5" x2="934.5" y2="973.0"/><line x1="1096.5" y1="966.5" x2="1096.5" y2="973.0"/><line x1="1259.5" y1="966.5" x2="1259.5" y2="973.0"/><line x1="1421.5" y1="966.5" x2="1421.5" y2="973.0"/><line x1="72.5" y1="966.5" x2="72.5" y2="973.0"/><line x1="1535.5" y1="966.5" x2="1535.5" y2="973.0"/></g><g font-family="Liberation Sans, sans-serif" font-weight="700" font-size="10px" fill="#444"><text x="121.5" y="982.3" text-anchor="middle">0.0001</text><text x="284.5" y="982.3" text-anchor="middle">0.001</text><text x="446.5" y="982.3" text-anchor="middle">0.01</text><text x="609.5" y="982.3" text-anchor="middle">0.1</text><text x="771.5" y="982.3" text-anchor="middle">1</text><text x="934.5" y="982.3" text-anchor="middle">10</text><text x="1096.5" y="982.3" text-anchor="middle">100</text><text x="1259.5" y="982.3" text-anchor="middle">1000</text><text x="1421.5" y="982.3" text-anchor="middle">10000</text><text x="63" y="938.9" text-anchor="end">1</text><text x="63" y="775.9" text-anchor="end">10</text><text x="63" y="612.9" text-anchor="end">100</text><text x="63" y="449.9" text-anchor="end">1000</text><text x="63" y="287.9" text-anchor="end">10000</text></g><g font-family="Liberation Sans, sans-serif" font-weight="700" font-size="13px" fill="#444"><text x="803.5" y="1000" text-anchor="middle" font-size="12px">Time</text><text transform="translate(23.5,554.5) rotate(-90)" text-anchor="middle">Pressure difference [psi]</text></g></svg><!-- toolbar icons -->
<svg class="ico" style="left:18px;top:34px" width="36" height="34" viewBox="18 34 36 34">
 <g fill="#1a6fd0"><circle cx="27.9" cy="49.2" r="7"/><circle cx="32" cy="45" r="8.3"/><circle cx="39.6" cy="47.6" r="6.4"/><circle cx="44.5" cy="50.6" r="5.5"/><rect x="27.9" y="50" width="16.6" height="6.200"/></g>
 <rect x="30" y="49" width="10" height="8" fill="#fff"/>
 <path d="M32.4 51 h5.3 v7.5 h3.3 l-5.95 6.3 l-5.95 -6.3 h3.3 z" fill="#f0a722"/>
</svg>
<svg class="ico" style="left:77px;top:34px" width="36" height="34" viewBox="77 34 36 34">
 <g fill="#1a6fd0"><circle cx="86.8" cy="49.2" r="7"/><circle cx="90.9" cy="45" r="8.3"/><circle cx="98.5" cy="47.6" r="6.4"/><circle cx="103.4" cy="50.6" r="5.5"/><rect x="86.8" y="50" width="16.6" height="6.200"/></g>
 <path d="M94 48.3 l8 8.7 h-16 z" fill="#fff"/>
 <path d="M94 50.3 l6 7.5 h-3 v6.9 h-6 v-6.9 h-3 z" fill="#f0a722"/>
</svg>
<svg class="ico" style="left:138px;top:34px" width="30" height="34" viewBox="138 34 30 34">
 <path d="M149.3 41 v7.2 l-8.6 13.6 q-1.6 3.3 2 3.6 h18.6 q3.6 -0.3 2 -3.6 l-8.6 -13.6 v-7.2 z" fill="#fff" stroke="#222" stroke-width="1.2"/>
 <path d="M148.4 49.5 h7.2 l3 4.8 h-13.2 z" fill="#e02020"/>
 <path d="M145.2 54.3 h13.6 l3.4 5.4 h-20.4 z" fill="#30b030"/>
 <path d="M141.6 59.7 h20.8 l1.2 2 q1 2.4 -1.6 2.6 h-20 q-2.6 -0.2 -1.6 -2.6 z" fill="#2b72d8"/>
 <path d="M150.6 49.5 l-4.2 10.5" stroke="#fff" stroke-width="1.1"/>
 <rect x="148" y="36" width="8.2" height="5.2" rx="1.3" fill="#333"/>
</svg>
<svg class="ico" style="left:194px;top:34px" width="40" height="40" viewBox="194 34 40 40">
 <path d="M210.0 38.4 L213.9 47.0 L223.2 48.0 L216.3 54.3 L218.2 63.5 L210.0 58.9 L201.8 63.5 L203.7 54.3 L196.8 48.0 L206.1 47.0 z" fill="#f0a722"/>
 <rect x="214.5" y="55.5" width="15" height="15" rx="3" fill="#fff" fill-opacity="0.8" stroke="#b9b9b9"/>
</svg>
<div class="vsep" style="left:244px"></div>
<svg class="ico" style="left:262px;top:34px" width="42" height="40" viewBox="262 34 42 40">
 <g fill="#c4c4c4"><rect x="264" y="36.2" width="10" height="2.600"/><rect x="264" y="40.2" width="10" height="2.600"/><rect x="264" y="44.2" width="10" height="2.600"/><rect x="264" y="48.2" width="10" height="2.600"/><rect x="264" y="52.2" width="10" height="2.600"/><rect x="264" y="56.2" width="10" height="2.600"/><rect x="264" y="60.2" width="10" height="2.600"/><rect x="264" y="64.2" width="10" height="2.600"/></g>
 <rect x="275.5" y="36.500" width="20" height="30" fill="#f5f5f5" stroke="#cdcdcd"/>
 <path d="M279.6 63.5 C279.6 50 283 41.600 293 41.200" fill="none" stroke="#1a6fd0" stroke-width="3"/>
 <rect x="284.500" y="55.5" width="15" height="15" rx="3" fill="#fff" fill-opacity="0.8" stroke="#b9b9b9"/>
</svg>
<div class="vsep" style="left:314px"></div>
<svg class="ico" style="left:330px;top:36px" width="40" height="32" viewBox="330 36 40 32">
 <g fill="none" stroke-width="2">
 <path d="M344.600 52.600 l-2.500 4.300 h-5 l-2.500 -4.300 l2.500 -4.300 h5 z" stroke="#0e2a6b"/>
 <path d="M353.400 47.600 l-2.500 4.300 h-5 l-2.500 -4.300 l2.500 -4.300 h5 z" stroke="#1e5fc0"/>
 <path d="M353.400 57.600 l-2.500 4.300 h-5 l-2.500 -4.300 l2.500 -4.300 h5 z" stroke="#2b72d8"/>
 <path d="M364 44.100 l-2.200 3.800 h-4.400 l-2.200 -3.800 l2.200 -3.800 h4.400 z" stroke="#5b9be8" stroke-width="1.6"/>
 </g>
</svg>
<div class="vsep" style="left:384px"></div>
<svg class="ico" style="left:406px;top:36px" width="28" height="32" viewBox="406 36 28 32">
 <path d="M420 38.700 c4.300 0 7 3.200 7 7.500 v8.700 l3 2.700 v1.500 h-20 v-1.500 l3 -2.700 v-8.700 c0 -4.300 2.700 -7.500 7 -7.500 z" fill="#1a6fd0"/>
 <path d="M416.900 60.900 h6.200 q-0.700 2.800 -3.100 2.800 q-2.400 0 -3.100 -2.800 z" fill="#1a6fd0"/>
</svg>
<div class="lbl" style="left:6px;width:60px">Download</div>
<div class="lbl" style="left:64px;width:60px;letter-spacing:-0.4px">Replace</div>
<div class="lbl" style="left:122px;width:60px;letter-spacing:-0.42px">Extract PVT</div>
<div class="lbl" style="left:180px;width:60px;letter-spacing:-0.33px">Reference</div>
<div class="lbl" style="left:250px;width:60px">Show table</div>
<div class="lbl" style="left:320px;width:60px;white-space:normal">Open in<br>KW</div>
<div class="lbl" style="left:391px;width:60px;letter-spacing:0.17px">Notification</div>

<!-- row 2 -->
<div class="flabel" style="left:25px">Analysis</div>
<div class="sel" style="left:78px;width:320px"><span class="abs" style="left:6px;top:6px;width:11px;height:11px;border-radius:50%;background:#5fe000;border:1px solid #57c800"></span><span class="abs" style="left:22px;top:0">SI @ 2018-02-07</span><span class="sp" style="left:293px"></span>
 <svg class="abs" style="left:299px;top:8px" width="14" height="10"><path d="M2 2.500 l5 5 l5 -5" fill="none" stroke="#c9c9c9" stroke-width="2"/></svg></div>
<div class="btn" style="left:403px"><svg width="24" height="24"><path d="M14 7.800 l-4.200 4.200 l4.200 4.200" fill="none" stroke="#c4c4c4" stroke-width="1.500"/></svg></div>
<div class="btn" style="left:434px"><svg width="24" height="24"><path d="M10.500 7.800 l4.200 4.200 l-4.200 4.200" fill="none" stroke="#c4c4c4" stroke-width="1.500"/></svg></div>
<div class="btn" style="left:476px;width:29px"><svg width="27" height="24"><path d="M9 7.500 l4.500 4.500 l-4.500 4.500 M14 7.500 l4.500 4.500 l-4.500 4.500" fill="none" stroke="#c4c4c4" stroke-width="1.300"/></svg></div>
<div class="flabel" style="left:544px;letter-spacing:0">Plot</div>
<div class="sel" style="left:576px;width:167px"><span class="abs" style="left:7px;top:0">Loglog</span><span class="sp" style="left:140px"></span>
 <svg class="abs" style="left:146px;top:8px" width="14" height="10"><path d="M2 2.500 l5 5 l5 -5" fill="none" stroke="#c9c9c9" stroke-width="2"/></svg></div>
<div class="btn" style="left:748px"><svg width="24" height="24"><path d="M14 7.800 l-4.200 4.200 l4.200 4.200" fill="none" stroke="#c4c4c4" stroke-width="1.500"/></svg></div>
<div class="btn act" style="left:779px"><svg width="24" height="24"><path d="M10.500 7.600 l4.400 4.400 l-4.400 4.400" fill="none" stroke="#222" stroke-width="1.800"/></svg></div>
<div class="flabel" style="left:1160.500px;letter-spacing:-0.15px">Overlay</div>
<div class="sel" style="left:1212px;width:288px"><span class="abs" style="left:6px;top:0">7 items...</span>
 <svg class="abs" style="left:243px;top:7px" width="12" height="12"><path d="M1.500 1.500 l9 9 M10.500 1.500 l-9 9" fill="none" stroke="#c4c4c4" stroke-width="1.800"/></svg>
 <span class="sp" style="left:261px"></span>
 <svg class="abs" style="left:267px;top:8px" width="14" height="10"><path d="M2 2.500 l5 5 l5 -5" fill="none" stroke="#c9c9c9" stroke-width="2"/></svg></div>
<div class="sel" style="left:1508px;width:74px;text-align:center;border-color:#b8b8b8;letter-spacing:-0.3px">Unselect all</div>
<div class="abs" style="left:1126px;top:152px;width:399px;height:193px;background:#fff;box-shadow:0 1px 5px rgba(0,0,0,0.22);border-radius:2px"></div>
<div class="abs" style="left:1126px;top:152px;width:399px;height:193px;border:1px solid #e3e3e3;border-radius:2px;z-index:3;pointer-events:none"></div>
<div class="abs" style="left:1127px;top:153px;width:397px;height:191px;clip-path:inset(0 0 0 -1px)">
<div class="abs" style="left:-1px;top:0;width:399px;height:11px;background:#f2f2f2"></div>
<svg class="abs" style="left:0;top:0" width="398" height="192"><path d="M12.1 28.1l3.8 3.8M12.1 31.9l3.8 -3.8" stroke="#e83ce8" stroke-width="1.1" fill="none"/><path d="M24.1 28.1l3.8 3.8M24.1 31.9l3.8 -3.8" stroke="#e83ce8" stroke-width="1.1" fill="none"/><path d="M36.1 28.1l3.8 3.8M36.1 31.9l3.8 -3.8" stroke="#e83ce8" stroke-width="1.1" fill="none"/><circle cx="14" cy="56" r="1.9" stroke="#e83ce8" stroke-opacity="0.7" stroke-width="1.2" fill="none"/><circle cx="26" cy="56" r="1.9" stroke="#e83ce8" stroke-opacity="0.7" stroke-width="1.2" fill="none"/><circle cx="38" cy="56" r="1.9" stroke="#e83ce8" stroke-opacity="0.7" stroke-width="1.2" fill="none"/><path d="M12.1 80.1l3.8 3.8M12.1 83.9l3.8 -3.8" stroke="#4a2cf0" stroke-width="1.1" fill="none"/><path d="M24.1 80.1l3.8 3.8M24.1 83.9l3.8 -3.8" stroke="#4a2cf0" stroke-width="1.1" fill="none"/><path d="M36.1 80.1l3.8 3.8M36.1 83.9l3.8 -3.8" stroke="#4a2cf0" stroke-width="1.1" fill="none"/><circle cx="14" cy="108" r="1.9" stroke="#6a55ee" stroke-opacity="0.7" stroke-width="1.2" fill="none"/><circle cx="26" cy="108" r="1.9" stroke="#6a55ee" stroke-opacity="0.7" stroke-width="1.2" fill="none"/><circle cx="38" cy="108" r="1.9" stroke="#6a55ee" stroke-opacity="0.7" stroke-width="1.2" fill="none"/><path d="M12.1 132.1l3.8 3.8M12.1 135.9l3.8 -3.8" stroke="#2aeab0" stroke-width="1.1" fill="none"/><path d="M24.1 132.1l3.8 3.8M24.1 135.9l3.8 -3.8" stroke="#2aeab0" stroke-width="1.1" fill="none"/><path d="M36.1 132.1l3.8 3.8M36.1 135.9l3.8 -3.8" stroke="#2aeab0" stroke-width="1.1" fill="none"/><circle cx="14" cy="160" r="1.9" stroke="#2aeab0" stroke-opacity="0.7" stroke-width="1.2" fill="none"/><circle cx="26" cy="160" r="1.9" stroke="#2aeab0" stroke-opacity="0.7" stroke-width="1.2" fill="none"/><circle cx="38" cy="160" r="1.9" stroke="#2aeab0" stroke-opacity="0.7" stroke-width="1.2" fill="none"/><path d="M12.1 184.1l3.8 3.8M12.1 187.9l3.8 -3.8" stroke="#7af02a" stroke-width="1.1" fill="none"/><path d="M24.1 184.1l3.8 3.8M24.1 187.9l3.8 -3.8" stroke="#7af02a" stroke-width="1.1" fill="none"/><path d="M36.1 184.1l3.8 3.8M36.1 187.9l3.8 -3.8" stroke="#7af02a" stroke-width="1.1" fill="none"/></svg>
<div class="abs" style="left:50.5px;top:22.8px;font-size:12px;line-height:15px;color:#444;white-space:nowrap;letter-spacing:-0.06px">(SI @ 2018-04-19) Build-Up #2</div>
<div class="abs" style="left:50.5px;top:48.8px;font-size:12px;line-height:15px;color:#444;white-space:nowrap;letter-spacing:-0.06px">(SI @ 2018-04-19) Build-Up #2 Bourdet derivative</div>
<div class="abs" style="left:50.5px;top:74.8px;font-size:12px;line-height:15px;color:#444;white-space:nowrap;letter-spacing:-0.06px">(SI @ 2018-09-13) Build-Up #3</div>
<div class="abs" style="left:50.5px;top:100.8px;font-size:12px;line-height:15px;color:#444;white-space:nowrap;letter-spacing:-0.06px">(SI @ 2018-09-13) Build-Up #3 Bourdet derivative</div>
<div class="abs" style="left:50.5px;top:126.8px;font-size:12px;line-height:15px;color:#444;white-space:nowrap;letter-spacing:-0.06px">(SI @ 2019-10-27) Build-Up #4</div>
<div class="abs" style="left:50.5px;top:152.8px;font-size:12px;line-height:15px;color:#444;white-space:nowrap;letter-spacing:-0.06px">(SI @ 2019-10-27) Build-Up #4 Bourdet derivative</div>
<div class="abs" style="left:50.5px;top:178.8px;font-size:12px;line-height:15px;color:#444;white-space:nowrap;letter-spacing:-0.06px">(SI @ 2019-12-11) Build-Up #5</div>
<div class="abs" style="left:0;top:186.500px;width:398px;height:6px;background:#fff"></div>
<div class="abs" style="left:377px;top:18px;width:14px;height:170px;background:#fafafa"></div>
<svg class="abs" style="left:377px;top:18px" width="14" height="170"><path d="M3 11 l4.500 -6.5 l4.500 6.5 z" fill="#777"/><path d="M3 158 l4.500 6.500 l4.500 -6.5 z" fill="#777"/><rect x="3.200" y="17" width="8.500" height="30" rx="4" fill="#8a8a8a"/></svg>
</div>
<svg class="abs" style="left:1540px;top:140px" width="51" height="530" viewBox="1540 140 51 530"><path d="M1553 156.500 l8.250 -6.500 l8.250 6.500 v10.400 h-5.700 v-6.100 h-5.100 v6.100 h-5.700 z" fill="#777"/><path d="M1550.300 155.200 l10.900 -8.500 l10.900 8.500" fill="none" stroke="#1a6fd0" stroke-width="2.800" stroke-linecap="round" stroke-linejoin="round"/><rect x="1565.300" y="145.600" width="3" height="5.800" fill="#1a6fd0"/><rect x="1549.600" y="179.600" width="21.800" height="21.800" rx="1.800" fill="#fff" stroke="#1a6fd0" stroke-width="1.400"/><circle cx="1553.600" cy="183.500" r="2.300" fill="#1a5fc0"/><circle cx="1553.600" cy="190.400" r="2.300" fill="#5b9be8"/><circle cx="1553.600" cy="197.300" r="2.300" fill="#a9cbf3"/><path d="M1557.300 183.500 h12.500 M1557.300 190.400 h12.500 M1557.300 197.300 h6" stroke="#666" stroke-width="1.300"/><rect x="1563.5" y="193.5" width="13.500" height="13.5" rx="3" fill="#fff" stroke="#8d8d8d" stroke-width="1"/><rect x="1566.2" y="196.2" width="8.100" height="8.1" rx="1.5" fill="#2a56b0"/><path d="M1549 211.500 h24" stroke="#dcdcdc"/><path d="M1557 242.500 l-5.300 -6.400 q-1.500 -2.200 0.300 -3.200 q1.600 -0.600 3 1.200 l1.600 2 v-10.300 q0.100 -1.600 1.400 -1.600 q1.300 0 1.400 1.600 v-2.400 q0.100 -1.600 1.400 -1.600 q1.300 0 1.400 1.600 v1.400 q0.100 -1.500 1.400 -1.500 q1.300 0 1.400 1.500 v3.200 q0.100 -1.400 1.400 -1.400 q1.300 0 1.400 1.400 v7.700 q0 3.800 -2.200 6.800 z" fill="#fff" stroke="#1a6fd0" stroke-width="1.400" stroke-linejoin="round"/><path d="M1559.400 225.800 v6.500 M1562.200 224.800 v7.500 M1565 228 v4.300" stroke="#1a6fd0" stroke-width="1.200"/><rect x="1563.5" y="234" width="13.500" height="13.5" rx="3" fill="#fff" stroke="#8d8d8d" stroke-width="1"/><rect x="1566.2" y="236.7" width="8.100" height="8.1" rx="1.5" fill="#2a56b0"/><rect x="1553" y="260.500" width="16.500" height="16" fill="#d6e6fa" stroke="#1a6fd0" stroke-width="1.800" stroke-dasharray="3.200 2"/><rect x="1563.5" y="270" width="13.500" height="13.5" rx="3" fill="#fff" fill-opacity="0.85" stroke="#bdbdbd" stroke-width="1"/><path d="M1549 288.500 h24" stroke="#dcdcdc"/><circle cx="1559.300" cy="307" r="7.800" fill="#fff" stroke="#555" stroke-width="2.200"/><path d="M1564.600 312.400 l7 7" stroke="#636363" stroke-width="3.800"/><path d="M1556 307 h6.600" stroke="#1a6fd0" stroke-width="1.800"/><path d="M1553.700 339.700 A8.500 8.500 0 1 1 1560 353.100" fill="none" stroke="#1a6fd0" stroke-width="3.200"/><path d="M1551.600 335.600 L1559 336 L1557.500 340.500 L1551.800 342.400 z" fill="#1a6fd0"/><circle cx="1560.200" cy="344.400" r="2.100" fill="none" stroke="#555" stroke-width="0.900"/><path d="M1561.800 346 l2 2" stroke="#555" stroke-width="1"/><path d="M1567.700 375.900 A8.500 8.500 0 1 0 1561.400 389.300" fill="none" stroke="#b5d0f0" stroke-width="3.200"/><path d="M1570 372 L1562.400 372.300 L1563.900 376.700 L1569.800 378.600 z" fill="#b5d0f0"/><circle cx="1560.200" cy="380.600" r="2.100" fill="none" stroke="#ccc" stroke-width="0.900"/><path d="M1561.800 382.200 l2 2" stroke="#ccc" stroke-width="1"/><path d="M1549 401.500 h24" stroke="#dcdcdc"/><path d="M1550 410 v24" stroke="#666" stroke-width="2"/><path d="M1552 420 C1561 420 1559 413.200 1571 413" fill="none" stroke="#1a6fd0" stroke-width="2"/><path d="M1552 429.600 C1562 429 1558 417.200 1571 416.900" fill="none" stroke="#7fb0ec" stroke-width="1.600"/><path d="M1549 441.500 h24" stroke="#dcdcdc"/><path d="M1550 463 h3.800 M1556.200 463 h9.300 M1567.700 463 h4.600 M1561 452.300 v3.900 M1561 458.300 v9.400 M1561 470 v3.800" stroke="#1a6fd0" stroke-width="2" fill="none"/><rect x="1563.5" y="465" width="13.500" height="13.5" rx="3" fill="#fff" fill-opacity="0.85" stroke="#bdbdbd" stroke-width="1"/><path d="M1550.800 509.500 C1551.500 500 1558 495.300 1571.500 495" fill="none" stroke="#1a6fd0" stroke-width="2.200"/><path d="M1558.800 488.500 v21.500" stroke="#555" stroke-width="1.600" stroke-dasharray="3.500 2"/><circle cx="1558.800" cy="496.900" r="2.800" fill="#1a6fd0"/><rect x="1563.5" y="501.4" width="13.500" height="13.5" rx="3" fill="#fff" stroke="#8d8d8d" stroke-width="1"/><rect x="1566.2" y="504.09999999999997" width="8.100" height="8.1" rx="1.5" fill="#2a56b0"/><path d="M1554.500 523 v22.500 M1560.500 523 v22.500 M1566.500 523 v22.500 M1549 528.500 h22.500 M1549 534.500 h22.500 M1549 540.500 h22.500" stroke="#666" stroke-width="1.200"/><rect x="1563.5" y="537" width="13.500" height="13.5" rx="3" fill="#fff" stroke="#8d8d8d" stroke-width="1"/><rect x="1566.2" y="539.7" width="8.100" height="8.1" rx="1.5" fill="#2a56b0"/><path d="M1565.300 568 A7.300 7.300 0 1 0 1551.500 571.300 L1557.600 581 L1561.800 576.500" fill="none" stroke="#1a6fd0" stroke-width="4" stroke-linejoin="round"/><path d="M1551.500 571.500 L1557.800 582 L1563 575 L1558 573.300 z" fill="#1a6fd0"/><circle cx="1565.650" cy="575.300" r="5.900" fill="#fff" stroke="#555" stroke-width="1"/><path d="M1565.650 570.800 v4.500 l2.800 1.300 M1565.650 569.600 v1.200 M1565.650 579.800 v1.200 M1559.900 575.300 h1.200 M1570.200 575.300 h1.200" fill="none" stroke="#555" stroke-width="0.900"/><path d="M1572.600 595.600 q1.800 1.600 -0.600 5.200 l-5 7 q-2.600 3.300 -5.600 1.300 q-2.800 -2.300 -0.300 -5.600 l6.300 -6.300 q3.400 -3.200 5.200 -1.600 z" fill="#848484"/><path d="M1549.200 611.600 q2.800 0.900 4.400 -1.500 q2.600 -2.800 5.900 -0.600 q3.300 3 0.800 6.600 q-2.700 3.300 -6.900 2.300 q-3.700 -1.200 -4.200 -6.800 z" fill="#1a6fd0"/><path d="M1550 650 v-17 h16.500 v6" fill="none" stroke="#555" stroke-width="1.700" stroke-dasharray="2.800 2.200"/><path d="M1554.300 641.700 h3.700 l1.300 -2.200 h7.200 l1.300 2.200 h3.800 q1.200 0 1.200 1.200 v9.600 q0 1.200 -1.200 1.200 h-17.300 q-1.200 0 -1.200 -1.200 v-9.600 q0 -1.200 1.200 -1.200 z" fill="#1a6fd0"/><circle cx="1562.900" cy="647.700" r="3.600" fill="#fff"/></svg></body></html>
